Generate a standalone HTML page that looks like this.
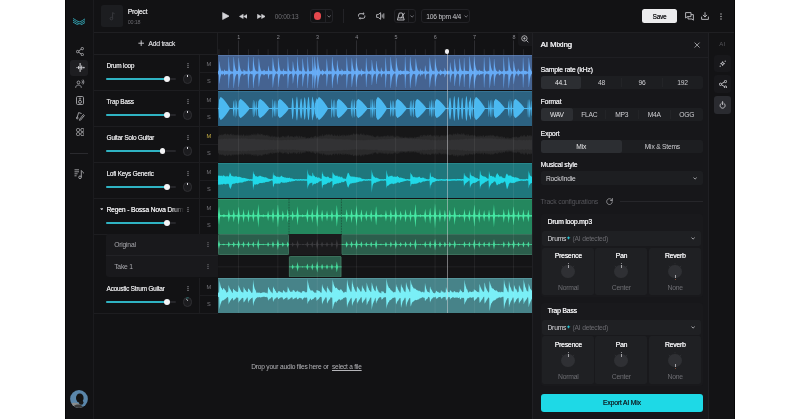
<!DOCTYPE html>
<html><head><meta charset="utf-8"><style>
html,body{margin:0;padding:0;}
body{width:800px;height:419px;overflow:hidden;background:#fff;position:relative;font-family:"Liberation Sans", sans-serif;}
svg{display:block;}
</style></head><body><div id="app" style="position:absolute;left:0;top:0;width:800px;height:419px;will-change:transform;">
<div style="position:absolute;left:65.00px;top:0.00px;width:670.00px;height:419.00px;background:#121214;"></div><div style="position:absolute;left:65.00px;top:0.00px;width:1.00px;height:419.00px;background:#070708;"></div><div style="position:absolute;left:93.00px;top:0.00px;width:1.00px;height:419.00px;background:#1b1b1e;"></div><div style="position:absolute;left:94.00px;top:32.00px;width:641.00px;height:1.00px;background:#1f1f22;"></div><svg style="position:absolute;left:72.50px;top:17.70px;" width="12.80" height="7.30" viewBox="0 0 12.80 7.30"><defs><clipPath id="lgc"><rect x="0" y="0" width="12.8" height="7.3"/></clipPath></defs><g clip-path="url(#lgc)" fill="none" stroke="#38b6c6" stroke-width="0.85"><path d="M0,0.50 C2.6,1.70 4.6,3.80 6.4,3.80 C8.2,3.80 10.2,1.70 12.8,0.50"/><path d="M0,2.30 C2.6,3.50 4.6,5.60 6.4,5.60 C8.2,5.60 10.2,3.50 12.8,2.30"/><path d="M0,4.10 C2.6,5.30 4.6,7.40 6.4,7.40 C8.2,7.40 10.2,5.30 12.8,4.10"/></g></svg><svg style="position:absolute;left:75.60px;top:47.30px;" width="8.00" height="9.20" viewBox="0 0 8.00 9.20"><g fill="none" stroke="#a9a9ad" stroke-width="0.9"><circle cx="6.3" cy="1.6" r="1.2"/><circle cx="1.6" cy="4.6" r="1.2"/><circle cx="6.3" cy="7.6" r="1.2"/><path d="M2.7,3.9 L5.2,2.3 M2.7,5.3 L5.2,6.9"/></g></svg><div style="position:absolute;left:70.30px;top:60.00px;width:17.30px;height:15.50px;background:#1e1e21;border-radius:3px;"></div><svg style="position:absolute;left:75.50px;top:63.00px;" width="9.00" height="9.20" viewBox="0 0 9.00 9.20"><g stroke="#d4d4d8" stroke-linecap="round"><path d="M0.5,4.6 L8.5,4.6" stroke-width="0.6"/><path d="M4.1,0.6 L4.1,8.6" stroke-width="1.05"/><path d="M5.7,2.9 L5.7,6.3" stroke-width="0.95"/><path d="M2.5,3.5 L2.5,5.7" stroke-width="0.9"/><path d="M7.8,4.2 L7.8,5" stroke-width="0.9"/></g></svg><svg style="position:absolute;left:75.30px;top:79.40px;" width="9.50" height="9.50" viewBox="0 0 9.50 9.50"><g fill="none" stroke="#a9a9ad" stroke-width="0.85"><circle cx="3.5" cy="3.4" r="1.4"/><path d="M0.7,8.8 C0.7,6.8 2,6.1 3.5,6.1 C5,6.1 6.3,6.8 6.3,8.8"/><path d="M6.9,1.4 C7.6,2.2 7.6,3.8 6.9,4.6 M8,0.6 C9.1,1.8 9.1,4.2 8,5.4"/></g></svg><svg style="position:absolute;left:75.60px;top:95.60px;" width="8.00" height="9.00" viewBox="0 0 8.00 9.00"><g fill="none" stroke="#a9a9ad" stroke-width="0.9"><rect x="0.5" y="0.5" width="7" height="8" rx="1.2"/><circle cx="4" cy="2.6" r="0.7"/><circle cx="4" cy="5.8" r="1.5"/></g></svg><svg style="position:absolute;left:75.60px;top:110.80px;" width="9.20" height="10.00" viewBox="0 0 9.20 10.00"><g fill="none" stroke="#a9a9ad" stroke-width="0.9"><path d="M1.2,6.5 L2.6,1.6 L5.6,2.5"/><circle cx="1.2" cy="7" r="0.9"/><path d="M3.6,8.3 L7.4,3.6 L8.4,4.5 L4.6,9.1 L3.4,9.3 Z"/></g></svg><svg style="position:absolute;left:75.70px;top:127.50px;" width="8.50" height="8.20" viewBox="0 0 8.50 8.20"><g fill="none" stroke="#a9a9ad" stroke-width="0.9"><rect x="0.5" y="0.5" width="3.2" height="3.0" rx="1.2"/><rect x="4.8" y="0.5" width="3.2" height="3.0" rx="1.2"/><rect x="0.5" y="4.6" width="3.2" height="3.0" rx="1.2"/><rect x="4.8" y="4.6" width="3.2" height="3.0" rx="1.2"/></g></svg><div style="position:absolute;left:70.00px;top:153.40px;width:18.00px;height:0.90px;background:#2a2a2e;"></div><svg style="position:absolute;left:73.70px;top:168.80px;" width="10.50" height="10.50" viewBox="0 0 10.50 10.50"><g fill="none" stroke="#a9a9ad" stroke-width="0.9"><path d="M0.5,0.8 L5,0.8 M0.5,2.8 L5,2.8 M0.5,4.8 L3.6,4.8 M0.5,6.8 L2.6,6.8"/><circle cx="6" cy="8.3" r="1.3"/><path d="M7.3,8.3 L7.3,1.5 C8,2.5 9.4,3 9.8,4.5"/></g></svg><svg style="position:absolute;left:70.00px;top:390.20px;" width="18.00" height="18.00" viewBox="0 0 18.00 18.00"><defs><clipPath id="avc"><circle cx="9" cy="9" r="8.9"/></clipPath></defs><g clip-path="url(#avc)"><rect width="18" height="18" fill="#5a86aa"/><ellipse cx="4.5" cy="17" rx="7" ry="4.2" fill="#8a8c8c"/><ellipse cx="8" cy="17.5" rx="5" ry="3" fill="#3a3a3a"/><ellipse cx="9.8" cy="8" rx="3.8" ry="4.6" fill="#141414"/><ellipse cx="11.2" cy="12.6" rx="2.3" ry="2.2" fill="#1a1a1a"/></g></svg><div style="position:absolute;left:101.00px;top:5.30px;width:21.60px;height:21.60px;background:#1c1d20;border-radius:2.5px;"></div><svg style="position:absolute;left:108.80px;top:12.20px;" width="7.00" height="8.50" viewBox="0 0 7.00 8.50"><g fill="none" stroke="#3a3b3f" stroke-width="0.9"><path d="M3.6,6.4 L3.6,0.6 L5.6,1.8"/><circle cx="2.4" cy="6.6" r="1.3"/></g></svg><div style="position:absolute;left:127.80px;top:8.82px;font-size:6.696px;line-height:6.696px;color:#dcdcde;font-weight:400;white-space:nowrap;letter-spacing:-0.214px;text-shadow:0.22px 0 0 #dcdcde;">Project</div><div style="position:absolute;left:127.80px;top:19.85px;font-size:5.4px;line-height:5.4px;color:#6b6b70;font-weight:400;white-space:nowrap;letter-spacing:-0.173px;">00:18</div><svg style="position:absolute;left:221.80px;top:12.00px;" width="7.60" height="8.20" viewBox="0 0 7.60 8.20"><path d="M0.6,0.6 L7.2,4.1 L0.6,7.6 Z" fill="#d4d4d8" stroke="#d4d4d8" stroke-width="0.6" stroke-linejoin="round"/></svg><svg style="position:absolute;left:238.60px;top:13.90px;" width="8.80" height="4.80" viewBox="0 0 8.80 4.80"><path d="M4.2,0.2 L0.4,2.4 L4.2,4.6 Z M8.4,0.2 L4.6,2.4 L8.4,4.6 Z" fill="#d0d0d4" stroke="#d0d0d4" stroke-width="0.5" stroke-linejoin="round"/></svg><svg style="position:absolute;left:256.50px;top:13.90px;" width="8.80" height="4.80" viewBox="0 0 8.80 4.80"><path d="M0.4,0.2 L4.2,2.4 L0.4,4.6 Z M4.6,0.2 L8.4,2.4 L4.6,4.6 Z" fill="#d0d0d4" stroke="#d0d0d4" stroke-width="0.5" stroke-linejoin="round"/></svg><div style="position:absolute;left:274.80px;top:13.72px;font-size:6.48px;line-height:6.48px;color:#6e6e73;font-weight:400;white-space:nowrap;letter-spacing:-0.207px;">00:00:13</div><div style="position:absolute;left:310.00px;top:9.00px;width:22.80px;height:14.10px;background:transparent;box-sizing:border-box;border:0.8px solid #222226;border-radius:3px;"></div><div style="position:absolute;left:324.80px;top:9.50px;width:0.80px;height:13.10px;background:#222226;"></div><div style="position:absolute;left:313.7px;top:12.3px;width:7.6px;height:7.6px;border-radius:50%;background:#e5484d;"></div><svg style="position:absolute;left:326.60px;top:15.10px;" width="4.20" height="2.80" viewBox="0 0 4.20 2.80"><path d="M0.5,0.6 L2.1,2.1 L3.7,0.6" fill="none" stroke="#8a8a90" stroke-width="0.8"/></svg><div style="position:absolute;left:343.20px;top:9.00px;width:0.80px;height:14.10px;background:#232327;"></div><svg style="position:absolute;left:356.60px;top:12.00px;" width="9.30" height="8.00" viewBox="0 0 9.30 8.00"><g fill="none" stroke="#bdbdc2" stroke-width="0.95"><path d="M1.5,4.5 L1.5,3.2 C1.5,2.2 2.2,1.7 3,1.7 L7,1.7 M6,0.6 L7.1,1.7 L6,2.8"/><path d="M7.8,3.5 L7.8,4.8 C7.8,5.8 7.1,6.3 6.3,6.3 L2.3,6.3 M3.3,5.2 L2.2,6.3 L3.3,7.4"/></g></svg><svg style="position:absolute;left:376.30px;top:12.00px;" width="8.50" height="8.00" viewBox="0 0 8.50 8.00"><g fill="none" stroke="#bdbdc2" stroke-width="0.9" stroke-linejoin="round"><path d="M0.6,2.6 L2.2,2.6 L4.6,0.7 L4.6,7.3 L2.2,5.4 L0.6,5.4 Z"/><path d="M6.2,2.4 L6.2,5.6 M7.8,1.4 L7.8,6.6"/></g></svg><div style="position:absolute;left:393.50px;top:9.00px;width:22.20px;height:14.10px;background:transparent;box-sizing:border-box;border:0.8px solid #222226;border-radius:3px;"></div><div style="position:absolute;left:407.70px;top:9.50px;width:0.80px;height:13.10px;background:#222226;"></div><svg style="position:absolute;left:396.80px;top:11.80px;" width="8.00" height="9.00" viewBox="0 0 8.00 9.00"><g fill="none" stroke="#c4c4c8" stroke-width="0.9" stroke-linejoin="round"><path d="M2.3,1 L5.2,1 L7.2,8 L0.4,8 Z"/><path d="M3.8,6.4 L7.6,0.8"/><path d="M1.3,5.8 L6.3,5.8"/></g></svg><svg style="position:absolute;left:409.60px;top:15.10px;" width="4.20" height="2.80" viewBox="0 0 4.20 2.80"><path d="M0.5,0.6 L2.1,2.1 L3.7,0.6" fill="none" stroke="#8a8a90" stroke-width="0.8"/></svg><div style="position:absolute;left:420.60px;top:9.00px;width:49.20px;height:14.10px;background:transparent;box-sizing:border-box;border:0.8px solid #222226;border-radius:3px;"></div><div style="position:absolute;left:426.30px;top:13.62px;font-size:6.696px;line-height:6.696px;color:#c8c8cc;font-weight:400;white-space:nowrap;letter-spacing:-0.214px;">106 bpm 4/4</div><svg style="position:absolute;left:463.80px;top:15.10px;" width="4.20" height="2.80" viewBox="0 0 4.20 2.80"><path d="M0.5,0.6 L2.1,2.1 L3.7,0.6" fill="none" stroke="#8a8a90" stroke-width="0.8"/></svg><div style="position:absolute;left:642.10px;top:9.00px;width:34.50px;height:14.10px;background:#ececee;border-radius:2.5px;"></div><div style="position:absolute;left:459.35px;width:400px;text-align:center;text-indent:0.204px;top:13.78px;font-size:6.372px;line-height:6.372px;color:#1d1d20;font-weight:400;white-space:nowrap;letter-spacing:-0.204px;text-shadow:0.22px 0 0 #1d1d20;">Save</div><svg style="position:absolute;left:684.60px;top:11.80px;" width="9.20" height="9.00" viewBox="0 0 9.20 9.00"><g fill="none" stroke="#c4c4c8" stroke-width="0.9" stroke-linejoin="round"><path d="M0.6,0.6 L6,0.6 L6,4.6 L2.4,4.6 L0.6,6 Z"/><path d="M6,2.6 L8.4,2.6 L8.4,7 L8.4,8.2 L7,7 L3,7 L3,4.6"/></g></svg><svg style="position:absolute;left:701.00px;top:12.00px;" width="8.00" height="8.20" viewBox="0 0 8.00 8.20"><g fill="none" stroke="#c4c4c8" stroke-width="0.9" stroke-linecap="round" stroke-linejoin="round"><path d="M4,0.6 L4,4.8 M2.2,3.2 L4,4.9 L5.8,3.2"/><path d="M0.6,5 L0.6,7.4 L7.4,7.4 L7.4,5"/></g></svg><svg style="position:absolute;left:719.60px;top:12.50px;" width="2.00" height="7.50" viewBox="0 0 2.00 7.50"><g fill="#c4c4c8"><circle cx="1" cy="1" r="0.7"/><circle cx="1" cy="3.5" r="0.7"/><circle cx="1" cy="6" r="0.7"/></g></svg><svg style="position:absolute;left:137.60px;top:40.10px;" width="6.40" height="6.40" viewBox="0 0 6.40 6.40"><path d="M3.2,0.4 L3.2,6 M0.4,3.2 L6,3.2" stroke="#d6d6da" stroke-width="0.9"/></svg><div style="position:absolute;left:148.30px;top:40.67px;font-size:6.804px;line-height:6.804px;color:#c4c4c8;font-weight:400;white-space:nowrap;letter-spacing:-0.218px;text-shadow:0.1px 0 0 #c4c4c8;">Add track</div><div style="position:absolute;left:94.00px;top:54.00px;width:124.00px;height:0.80px;background:#1f1f22;"></div><div style="position:absolute;left:217.40px;top:33.00px;width:0.80px;height:21.00px;background:#1f1f22;"></div><div style="position:absolute;left:94.00px;top:89.80px;width:124.00px;height:0.80px;background:#1d1d20;"></div><div style="position:absolute;left:198.80px;top:54.60px;width:0.70px;height:35.20px;background:#1d1d20;"></div><div style="position:absolute;left:199.50px;top:72.20px;width:18.50px;height:0.70px;background:#1d1d20;"></div><div style="position:absolute;left:106.50px;top:63.02px;font-size:6.5px;line-height:6.5px;color:#dcdcde;font-weight:400;white-space:nowrap;letter-spacing:-0.250px;text-shadow:0.12px 0 0 #dcdcde;">Drum loop</div><svg style="position:absolute;left:186.60px;top:62.90px;" width="2.00" height="5.20" viewBox="0 0 2.00 5.20"><g fill="#9a9aa0"><circle cx="1" cy="0.7" r="0.62"/><circle cx="1" cy="2.6" r="0.62"/><circle cx="1" cy="4.5" r="0.62"/></g></svg><div style="position:absolute;left:106.00px;top:78.00px;width:69.80px;height:2.40px;background:#26262a;border-radius:1.2px;"></div><div style="position:absolute;left:106.00px;top:78.00px;width:61.30px;height:2.40px;background:#2fb3c2;border-radius:1.2px;"></div><div style="position:absolute;left:164.35px;top:76.25px;width:5.9px;height:5.9px;border-radius:50%;background:#f4f4f6;"></div><div style="position:absolute;left:182.80px;top:74.20px;width:9.4px;height:9.4px;box-sizing:border-box;border-radius:50%;background:#1c1c1f;border:0.7px solid #303034;"></div><div style="position:absolute;left:187.15px;top:74.90px;width:0.70px;height:2.40px;background:#d8d8dc;"></div><div style="position:absolute;left:8.60px;width:400px;text-align:center;text-indent:0.180px;top:61.55px;font-size:5.616px;line-height:5.616px;color:#77777c;font-weight:400;white-space:nowrap;letter-spacing:-0.180px;">M</div><div style="position:absolute;left:8.60px;width:400px;text-align:center;text-indent:0.180px;top:79.45px;font-size:5.616px;line-height:5.616px;color:#77777c;font-weight:400;white-space:nowrap;letter-spacing:-0.180px;">S</div><div style="position:absolute;left:94.00px;top:125.80px;width:124.00px;height:0.80px;background:#1d1d20;"></div><div style="position:absolute;left:198.80px;top:90.60px;width:0.70px;height:35.20px;background:#1d1d20;"></div><div style="position:absolute;left:199.50px;top:108.20px;width:18.50px;height:0.70px;background:#1d1d20;"></div><div style="position:absolute;left:106.50px;top:99.02px;font-size:6.5px;line-height:6.5px;color:#dcdcde;font-weight:400;white-space:nowrap;letter-spacing:-0.250px;text-shadow:0.12px 0 0 #dcdcde;">Trap Bass</div><svg style="position:absolute;left:186.60px;top:98.90px;" width="2.00" height="5.20" viewBox="0 0 2.00 5.20"><g fill="#9a9aa0"><circle cx="1" cy="0.7" r="0.62"/><circle cx="1" cy="2.6" r="0.62"/><circle cx="1" cy="4.5" r="0.62"/></g></svg><div style="position:absolute;left:106.00px;top:114.00px;width:69.80px;height:2.40px;background:#26262a;border-radius:1.2px;"></div><div style="position:absolute;left:106.00px;top:114.00px;width:61.30px;height:2.40px;background:#2fb3c2;border-radius:1.2px;"></div><div style="position:absolute;left:164.35px;top:112.25px;width:5.9px;height:5.9px;border-radius:50%;background:#f4f4f6;"></div><div style="position:absolute;left:182.80px;top:110.20px;width:9.4px;height:9.4px;box-sizing:border-box;border-radius:50%;background:#1c1c1f;border:0.7px solid #303034;"></div><div style="position:absolute;left:187.15px;top:110.90px;width:0.70px;height:2.40px;background:#d8d8dc;"></div><div style="position:absolute;left:8.60px;width:400px;text-align:center;text-indent:0.180px;top:97.55px;font-size:5.616px;line-height:5.616px;color:#77777c;font-weight:400;white-space:nowrap;letter-spacing:-0.180px;">M</div><div style="position:absolute;left:8.60px;width:400px;text-align:center;text-indent:0.180px;top:115.45px;font-size:5.616px;line-height:5.616px;color:#77777c;font-weight:400;white-space:nowrap;letter-spacing:-0.180px;">S</div><div style="position:absolute;left:94.00px;top:161.80px;width:124.00px;height:0.80px;background:#1d1d20;"></div><div style="position:absolute;left:198.80px;top:126.60px;width:0.70px;height:35.20px;background:#1d1d20;"></div><div style="position:absolute;left:199.50px;top:144.20px;width:18.50px;height:0.70px;background:#1d1d20;"></div><div style="position:absolute;left:106.50px;top:135.01px;font-size:6.5px;line-height:6.5px;color:#dcdcde;font-weight:400;white-space:nowrap;letter-spacing:-0.250px;text-shadow:0.12px 0 0 #dcdcde;">Guitar Solo Guitar</div><svg style="position:absolute;left:186.60px;top:134.90px;" width="2.00" height="5.20" viewBox="0 0 2.00 5.20"><g fill="#9a9aa0"><circle cx="1" cy="0.7" r="0.62"/><circle cx="1" cy="2.6" r="0.62"/><circle cx="1" cy="4.5" r="0.62"/></g></svg><div style="position:absolute;left:106.00px;top:150.00px;width:69.80px;height:2.40px;background:#26262a;border-radius:1.2px;"></div><div style="position:absolute;left:106.00px;top:150.00px;width:56.50px;height:2.40px;background:#2fb3c2;border-radius:1.2px;"></div><div style="position:absolute;left:159.55px;top:148.25px;width:5.9px;height:5.9px;border-radius:50%;background:#f4f4f6;"></div><div style="position:absolute;left:182.80px;top:146.20px;width:9.4px;height:9.4px;box-sizing:border-box;border-radius:50%;background:#1c1c1f;border:0.7px solid #303034;"></div><div style="position:absolute;left:187.15px;top:146.90px;width:0.70px;height:2.40px;background:#d8d8dc;"></div><div style="position:absolute;left:8.60px;width:400px;text-align:center;text-indent:0.180px;top:133.55px;font-size:5.616px;line-height:5.616px;color:#c9b146;font-weight:400;white-space:nowrap;letter-spacing:-0.180px;">M</div><div style="position:absolute;left:8.60px;width:400px;text-align:center;text-indent:0.180px;top:151.45px;font-size:5.616px;line-height:5.616px;color:#77777c;font-weight:400;white-space:nowrap;letter-spacing:-0.180px;">S</div><div style="position:absolute;left:94.00px;top:197.80px;width:124.00px;height:0.80px;background:#1d1d20;"></div><div style="position:absolute;left:198.80px;top:162.60px;width:0.70px;height:35.20px;background:#1d1d20;"></div><div style="position:absolute;left:199.50px;top:180.20px;width:18.50px;height:0.70px;background:#1d1d20;"></div><div style="position:absolute;left:106.50px;top:171.01px;font-size:6.5px;line-height:6.5px;color:#dcdcde;font-weight:400;white-space:nowrap;letter-spacing:-0.250px;text-shadow:0.12px 0 0 #dcdcde;">Lofi Keys Generic</div><svg style="position:absolute;left:186.60px;top:170.90px;" width="2.00" height="5.20" viewBox="0 0 2.00 5.20"><g fill="#9a9aa0"><circle cx="1" cy="0.7" r="0.62"/><circle cx="1" cy="2.6" r="0.62"/><circle cx="1" cy="4.5" r="0.62"/></g></svg><div style="position:absolute;left:106.00px;top:186.00px;width:69.80px;height:2.40px;background:#26262a;border-radius:1.2px;"></div><div style="position:absolute;left:106.00px;top:186.00px;width:61.30px;height:2.40px;background:#2fb3c2;border-radius:1.2px;"></div><div style="position:absolute;left:164.35px;top:184.25px;width:5.9px;height:5.9px;border-radius:50%;background:#f4f4f6;"></div><div style="position:absolute;left:182.80px;top:182.20px;width:9.4px;height:9.4px;box-sizing:border-box;border-radius:50%;background:#1c1c1f;border:0.7px solid #303034;"></div><div style="position:absolute;left:187.15px;top:182.90px;width:0.70px;height:2.40px;background:#d8d8dc;"></div><div style="position:absolute;left:8.60px;width:400px;text-align:center;text-indent:0.180px;top:169.55px;font-size:5.616px;line-height:5.616px;color:#77777c;font-weight:400;white-space:nowrap;letter-spacing:-0.180px;">M</div><div style="position:absolute;left:8.60px;width:400px;text-align:center;text-indent:0.180px;top:187.45px;font-size:5.616px;line-height:5.616px;color:#77777c;font-weight:400;white-space:nowrap;letter-spacing:-0.180px;">S</div><div style="position:absolute;left:94.00px;top:233.80px;width:124.00px;height:0.80px;background:#1d1d20;"></div><div style="position:absolute;left:198.80px;top:198.60px;width:0.70px;height:35.20px;background:#1d1d20;"></div><div style="position:absolute;left:199.50px;top:216.20px;width:18.50px;height:0.70px;background:#1d1d20;"></div><svg style="position:absolute;left:99.70px;top:207.60px;" width="3.60" height="2.80" viewBox="0 0 3.60 2.80"><path d="M0.2,0.2 L3.4,0.2 L1.8,2.6 Z" fill="#d0d0d4"/></svg><div style="position:absolute;left:106.4px;top:206.90px;width:78px;overflow:hidden;font-size:6.75px;line-height:6.75px;color:#e4e4e6;text-shadow:0.15px 0 0 #e4e4e6;letter-spacing:-0.17px;white-space:nowrap;-webkit-mask-image:linear-gradient(90deg,#000 82%,transparent 100%);">Regen - Bossa Nova Drums</div><svg style="position:absolute;left:186.60px;top:206.90px;" width="2.00" height="5.20" viewBox="0 0 2.00 5.20"><g fill="#9a9aa0"><circle cx="1" cy="0.7" r="0.62"/><circle cx="1" cy="2.6" r="0.62"/><circle cx="1" cy="4.5" r="0.62"/></g></svg><div style="position:absolute;left:106.00px;top:222.00px;width:69.80px;height:2.40px;background:#26262a;border-radius:1.2px;"></div><div style="position:absolute;left:106.00px;top:222.00px;width:61.30px;height:2.40px;background:#2fb3c2;border-radius:1.2px;"></div><div style="position:absolute;left:164.35px;top:220.25px;width:5.9px;height:5.9px;border-radius:50%;background:#f4f4f6;"></div><div style="position:absolute;left:8.60px;width:400px;text-align:center;text-indent:0.180px;top:205.55px;font-size:5.616px;line-height:5.616px;color:#77777c;font-weight:400;white-space:nowrap;letter-spacing:-0.180px;">M</div><div style="position:absolute;left:8.60px;width:400px;text-align:center;text-indent:0.180px;top:223.45px;font-size:5.616px;line-height:5.616px;color:#77777c;font-weight:400;white-space:nowrap;letter-spacing:-0.180px;">S</div><div style="position:absolute;left:94.00px;top:312.80px;width:124.00px;height:0.80px;background:#1d1d20;"></div><div style="position:absolute;left:198.80px;top:277.60px;width:0.70px;height:35.20px;background:#1d1d20;"></div><div style="position:absolute;left:199.50px;top:295.20px;width:18.50px;height:0.70px;background:#1d1d20;"></div><div style="position:absolute;left:106.50px;top:286.01px;font-size:6.5px;line-height:6.5px;color:#dcdcde;font-weight:400;white-space:nowrap;letter-spacing:-0.250px;text-shadow:0.12px 0 0 #dcdcde;">Acoustic Strum Guitar</div><svg style="position:absolute;left:186.60px;top:285.90px;" width="2.00" height="5.20" viewBox="0 0 2.00 5.20"><g fill="#9a9aa0"><circle cx="1" cy="0.7" r="0.62"/><circle cx="1" cy="2.6" r="0.62"/><circle cx="1" cy="4.5" r="0.62"/></g></svg><div style="position:absolute;left:106.00px;top:301.00px;width:69.80px;height:2.40px;background:#26262a;border-radius:1.2px;"></div><div style="position:absolute;left:106.00px;top:301.00px;width:61.30px;height:2.40px;background:#2fb3c2;border-radius:1.2px;"></div><div style="position:absolute;left:164.35px;top:299.25px;width:5.9px;height:5.9px;border-radius:50%;background:#f4f4f6;"></div><div style="position:absolute;left:182.80px;top:297.20px;width:9.4px;height:9.4px;box-sizing:border-box;border-radius:50%;background:#1c1c1f;border:0.7px solid #303034;"></div><svg style="position:absolute;left:182.50px;top:296.90px;" width="10.00" height="10.00" viewBox="0 0 10.00 10.00"><path d="M3.3,1.2 A4.2,4.2 0 0 1 5.6,0.85" fill="none" stroke="#2a8a8a" stroke-width="0.8"/><path d="M3.6,2.2 L4.6,3.6" stroke="#d8d8dc" stroke-width="0.8" stroke-linecap="round"/></svg><div style="position:absolute;left:8.60px;width:400px;text-align:center;text-indent:0.180px;top:284.55px;font-size:5.616px;line-height:5.616px;color:#77777c;font-weight:400;white-space:nowrap;letter-spacing:-0.180px;">M</div><div style="position:absolute;left:8.60px;width:400px;text-align:center;text-indent:0.180px;top:302.45px;font-size:5.616px;line-height:5.616px;color:#77777c;font-weight:400;white-space:nowrap;letter-spacing:-0.180px;">S</div><div style="position:absolute;left:106.00px;top:234.30px;width:112.00px;height:43.00px;background:#19191c;border-radius:3px 0 0 3px;"></div><div style="position:absolute;left:106.00px;top:255.20px;width:112.00px;height:0.70px;background:#222226;"></div><div style="position:absolute;left:114.20px;top:242.19px;font-size:6.75px;line-height:6.75px;color:#a8a8ad;font-weight:400;white-space:nowrap;letter-spacing:-0.216px;">Original</div><div style="position:absolute;left:114.20px;top:263.59px;font-size:6.75px;line-height:6.75px;color:#a8a8ad;font-weight:400;white-space:nowrap;letter-spacing:-0.216px;">Take 1</div><svg style="position:absolute;left:207.00px;top:242.20px;" width="2.00" height="5.20" viewBox="0 0 2.00 5.20"><g fill="#77777c"><circle cx="1" cy="0.7" r="0.62"/><circle cx="1" cy="2.6" r="0.62"/><circle cx="1" cy="4.5" r="0.62"/></g></svg><svg style="position:absolute;left:207.00px;top:263.60px;" width="2.00" height="5.20" viewBox="0 0 2.00 5.20"><g fill="#77777c"><circle cx="1" cy="0.7" r="0.62"/><circle cx="1" cy="2.6" r="0.62"/><circle cx="1" cy="4.5" r="0.62"/></g></svg><svg style="position:absolute;left:218.00px;top:32.50px;" width="314.00" height="22.00" viewBox="0 0 314.00 22.00"><rect x="0.61" y="16.2" width="0.7" height="5.8" fill="#2e2e32"/><rect x="10.43" y="16.2" width="0.7" height="5.8" fill="#2e2e32"/><rect x="20.25" y="7.4" width="0.7" height="14.6" fill="#3a3a3e"/><rect x="30.07" y="16.2" width="0.7" height="5.8" fill="#2e2e32"/><rect x="39.89" y="16.2" width="0.7" height="5.8" fill="#2e2e32"/><rect x="49.72" y="16.2" width="0.7" height="5.8" fill="#2e2e32"/><rect x="59.54" y="7.4" width="0.7" height="14.6" fill="#3a3a3e"/><rect x="69.36" y="16.2" width="0.7" height="5.8" fill="#2e2e32"/><rect x="79.18" y="16.2" width="0.7" height="5.8" fill="#2e2e32"/><rect x="89.01" y="16.2" width="0.7" height="5.8" fill="#2e2e32"/><rect x="98.83" y="7.4" width="0.7" height="14.6" fill="#3a3a3e"/><rect x="108.65" y="16.2" width="0.7" height="5.8" fill="#2e2e32"/><rect x="118.48" y="16.2" width="0.7" height="5.8" fill="#2e2e32"/><rect x="128.30" y="16.2" width="0.7" height="5.8" fill="#2e2e32"/><rect x="138.12" y="7.4" width="0.7" height="14.6" fill="#3a3a3e"/><rect x="147.94" y="16.2" width="0.7" height="5.8" fill="#2e2e32"/><rect x="157.77" y="16.2" width="0.7" height="5.8" fill="#2e2e32"/><rect x="167.59" y="16.2" width="0.7" height="5.8" fill="#2e2e32"/><rect x="177.41" y="7.4" width="0.7" height="14.6" fill="#3a3a3e"/><rect x="187.23" y="16.2" width="0.7" height="5.8" fill="#2e2e32"/><rect x="197.06" y="16.2" width="0.7" height="5.8" fill="#2e2e32"/><rect x="206.88" y="16.2" width="0.7" height="5.8" fill="#2e2e32"/><rect x="216.70" y="7.4" width="0.7" height="14.6" fill="#3a3a3e"/><rect x="226.52" y="16.2" width="0.7" height="5.8" fill="#2e2e32"/><rect x="236.34" y="16.2" width="0.7" height="5.8" fill="#2e2e32"/><rect x="246.17" y="16.2" width="0.7" height="5.8" fill="#2e2e32"/><rect x="255.99" y="7.4" width="0.7" height="14.6" fill="#3a3a3e"/><rect x="265.81" y="16.2" width="0.7" height="5.8" fill="#2e2e32"/><rect x="275.63" y="16.2" width="0.7" height="5.8" fill="#2e2e32"/><rect x="285.46" y="16.2" width="0.7" height="5.8" fill="#2e2e32"/><rect x="295.28" y="7.4" width="0.7" height="14.6" fill="#3a3a3e"/><rect x="305.10" y="16.2" width="0.7" height="5.8" fill="#2e2e32"/></svg><div style="position:absolute;left:38.70px;width:400px;text-align:center;text-indent:0.173px;top:34.65px;font-size:5.4px;line-height:5.4px;color:#8a8a90;font-weight:400;white-space:nowrap;letter-spacing:-0.173px;">1</div><div style="position:absolute;left:77.99px;width:400px;text-align:center;text-indent:0.173px;top:34.65px;font-size:5.4px;line-height:5.4px;color:#8a8a90;font-weight:400;white-space:nowrap;letter-spacing:-0.173px;">2</div><div style="position:absolute;left:117.28px;width:400px;text-align:center;text-indent:0.173px;top:34.65px;font-size:5.4px;line-height:5.4px;color:#8a8a90;font-weight:400;white-space:nowrap;letter-spacing:-0.173px;">3</div><div style="position:absolute;left:156.57px;width:400px;text-align:center;text-indent:0.173px;top:34.65px;font-size:5.4px;line-height:5.4px;color:#8a8a90;font-weight:400;white-space:nowrap;letter-spacing:-0.173px;">4</div><div style="position:absolute;left:195.86px;width:400px;text-align:center;text-indent:0.173px;top:34.65px;font-size:5.4px;line-height:5.4px;color:#8a8a90;font-weight:400;white-space:nowrap;letter-spacing:-0.173px;">5</div><div style="position:absolute;left:235.15px;width:400px;text-align:center;text-indent:0.173px;top:34.65px;font-size:5.4px;line-height:5.4px;color:#8a8a90;font-weight:400;white-space:nowrap;letter-spacing:-0.173px;">6</div><div style="position:absolute;left:274.44px;width:400px;text-align:center;text-indent:0.173px;top:34.65px;font-size:5.4px;line-height:5.4px;color:#8a8a90;font-weight:400;white-space:nowrap;letter-spacing:-0.173px;">7</div><div style="position:absolute;left:313.73px;width:400px;text-align:center;text-indent:0.173px;top:34.65px;font-size:5.4px;line-height:5.4px;color:#8a8a90;font-weight:400;white-space:nowrap;letter-spacing:-0.173px;">8</div><div style="position:absolute;left:517.60px;top:33.00px;width:14.90px;height:13.20px;background:#18181b;border-radius:0 0 0 3px;"></div><svg style="position:absolute;left:521.20px;top:35.30px;" width="8.00" height="8.00" viewBox="0 0 8.00 8.00"><g fill="none" stroke="#c0c0c4" stroke-width="0.85"><circle cx="3.4" cy="3.4" r="2.7"/><path d="M5.4,5.4 L7.3,7.3 M2.2,3.4 L4.6,3.4 M3.4,2.2 L3.4,4.6"/></g></svg><svg style="position:absolute;left:218.00px;top:54.60px;" width="314.50" height="35.20" viewBox="0 0 314.50 35.20"><rect x="0" y="0" width="314.50" height="35.20" fill="#456391"/><rect x="0" y="0" width="314.50" height="0.8" fill="#5a7bb0"/><path d="M0,16.3l.25,-.3 .25,-.5 .25,.4 .25,-2.9 .25,-6.4 .25,0 .25,2.4 .25,1.9 .25,1.5 .25,1.2 .25,.8 .25,.7 .25,.6 .25,.4 .25,.3 .25,-.8 .25,-.1 .25,.2 .25,0 .25,.5 .25,.2 .25,-.3 .25,.6 .25,-2.1 .25,0 .25,.3 .25,.3 .25,.2 .25,.3 .25,.2 .25,0 .25,0 .25,-.2 .25,.1 .25,.3 .25,-.5 .25,.1 .25,.3 .25,.3 .25,.4 .25,-3.7 .25,-10.9 .25,0 .25,4.7 .25,4 .25,2.5 .25,1.5 .25,.6 .25,.1 .25,.7 .25,.1 .25,-.5 .25,.6 .25,-.3 .25,.6 .25,.2 .25,-.5 .25,-.2 .25,.3 .25,0 .25,-3.5 .25,-10.9 .25,0 .25,2.5 .25,2.5 .25,2.1 .25,1.6 .25,1.3 .25,1.1 .25,.9 .25,.7 .25,.5 .25,.5 .25,.3 .25,-.2 .25,.4 .25,-.4 .25,.2 .25,0 .25,-.6 .25,-2.2 .25,-10.2 .25,0 .25,2.3 .25,2.4 .25,1.9 .25,1.6 .25,1.2 .25,1 .25,.8 .25,.6 .25,.6 .25,.4 .25,.1 .25,.4 .25,.1 .25,-.3 .25,.5 .25,-.2 .25,.2 .25,-.1 .25,-2 .25,0 .25,.3 .25,.3 .25,.2 .25,.3 .25,-.3 .25,.2 .25,.6 .25,.2 .25,-.3 .25,0 .25,.6 .25,-.5 .25,0 .25,.1 .25,.1 .25,-3.4 .25,-10.9 .25,0 .25,4.4 .25,3.8 .25,2.5 .25,1.6 .25,1.1 .25,.6 .25,.1 .25,.2 .25,.1 .25,.1 .25,-.2 .25,-.5 .25,.1 .25,.1 .25,-.6 .25,.6 .25,.2 .25,-3.3 .25,-10.9 .25,0 .25,2.5 .25,2.5 .25,2.1 .25,1.6 .25,1.3 .25,1.1 .25,.9 .25,.7 .25,.5 .25,.4 .25,.4 .25,.2 .25,.1 .25,-.7 .25,.4 .25,-.1 .25,1 .25,-.5 .25,.1 .25,-.5 .25,-8.4 .25,-4.6 .25,1.2 .25,2.6 .25,2.1 .25,1.7 .25,1.3 .25,1.1 .25,.9 .25,.7 .25,.6 .25,.4 .25,.4 .25,.1 .25,.3 .25,-.5 .25,-.2 .25,.1 .25,-.1 .25,.1 .25,-.4 .25,-.9 .25,.2 .25,.3 .25,.2 .25,.3 .25,.2 .25,.2 .25,.2 .25,.1 .25,0 .25,-.5 .25,.5 .25,-.7 .25,.6 .25,-.5 .25,.2 .25,.4 .25,-3.5 .25,-2.2 .25,.8 .25,1.7 .25,1.2 .25,.9 .25,.6 .25,.2 .25,.2 .25,0 .25,-.7 .25,.2 .25,.2 .25,-.3 .25,.7 .25,-.2 .25,.6 .25,-.7 .25,-9 .25,-4.9 .25,1.3 .25,2.8 .25,2.2 .25,1.8 .25,1.4 .25,1.2 .25,.9 .25,.8 .25,.6 .25,.5 .25,.4 .25,.3 .25,.3 .25,.2 .25,0 .25,-.2 .25,-.4 .25,0 .25,0 .25,-.6 .25,-4 .25,-8.5 .25,0 .25,3.2 .25,2.5 .25,2 .25,1.5 .25,1.1 .25,1 .25,.7 .25,.5 .25,.5 .25,.1 .25,.2 .25,-.8 .25,.4 .25,.1 .25,.2 .25,-.4 .25,.4 .25,-2.7 .25,0 .25,.9 .25,.7 .25,.2 .25,.3 .25,.2 .25,.2 .25,.1 .25,-.3 .25,-.3 .25,.5 .25,0 .25,.1 .25,-.1 .25,.3 .25,0 .25,0 .25,-5.2 .25,-9.1 .25,0 .25,5.3 .25,3.5 .25,2.3 .25,1.5 .25,1 .25,0 .25,-.1 .25,.6 .25,0 .25,-.1 .25,.2 .25,-.1 .25,.4 .25,-.2 .25,.2 .25,-.6 .25,-.3 .25,-2.7 .25,-6.4 .25,0 .25,2.4 .25,1.9 .25,1.5 .25,1.2 .25,.8 .25,.7 .25,.6 .25,.4 .25,.3 .25,.2 .25,-.4 .25,-.3 .25,-.3 .25,.2 .25,.4 .25,-5 .25,-9.1 .25,0 .25,4.2 .25,3 .25,2.2 .25,1.7 .25,1.2 .25,.8 .25,.7 .25,-.1 .25,0 .25,-.4 .25,.4 .25,-.4 .25,.9 .25,0 .25,-.1 .25,.4 .25,-.3 .25,.2 .25,-3 .25,-9.9 .25,0 .25,2.7 .25,2.6 .25,2 .25,1.5 .25,1.2 .25,1 .25,.7 .25,.5 .25,.4 .25,.3 .25,0 .25,.1 .25,-.1 .25,.4 .25,-.9 .25,.2 .25,-.1 .25,-3.1 .25,-10.9 .25,0 .25,4.7 .25,4 .25,2.5 .25,1.5 .25,1.1 .25,.2 .25,.1 .25,.2 .25,.1 .25,-.1 .25,-.5 .25,-.2 .25,.2 .25,.1 .25,.1 .25,-.3 .25,-.2 .25,-2.7 .25,-11.3 .25,0 .25,4.9 .25,4 .25,2.6 .25,1.7 .25,1 .25,-2.9 .25,-11.3 .25,0 .25,2.9 .25,2.9 .25,2.3 .25,1.7 .25,1.4 .25,1 .25,.9 .25,.6 .25,.5 .25,-2.8 .25,-10.9 .25,0 .25,2.5 .25,2.5 .25,2.1 .25,1.6 .25,1.3 .25,1.1 .25,.9 .25,.7 .25,.5 .25,.5 .25,.3 .25,.1 .25,.4 .25,-.7 .25,0 .25,.5 .25,-1.8 .25,0 .25,.3 .25,.3 .25,.2 .25,.3 .25,.2 .25,.2 .25,.1 .25,.2 .25,.1 .25,.1 .25,-.4 .25,-.4 .25,-.2 .25,.6 .25,-.4 .25,-.2 .25,-7.9 .25,-4.6 .25,2.2 .25,4.2 .25,2.8 .25,1.8 .25,1.2 .25,.7 .25,.2 .25,.1 .25,.1 .25,-.1 .25,-.7 .25,-.2 .25,0 .25,.8 .25,.2 .25,-.6 .25,.6 .25,-.2 .25,.5 .25,-3.7 .25,-10.9 .25,0 .25,2.5 .25,2.5 .25,2.1 .25,1.6 .25,1.3 .25,1.1 .25,.9 .25,.7 .25,.5 .25,.5 .25,.3 .25,.3 .25,-.2 .25,.1 .25,-.1 .25,-.3 .25,.1 .25,-2 .25,-8.4 .25,0 .25,2.2 .25,2.1 .25,1.7 .25,1.4 .25,1 .25,.8 .25,.6 .25,.5 .25,.3 .25,-.2 .25,0 .25,-.2 .25,-.1 .25,.2 .25,-.3 .25,.6 .25,-1.3 .25,-1.3 .25,.5 .25,.9 .25,.3 .25,.3 .25,.2 .25,.2 .25,.2 .25,.1 .25,-.4 .25,-.1 .25,0 .25,.1 .25,-.5 .25,.5 .25,.1 .25,.1 .25,-.1 .25,-.1 .25,-9.6 .25,-5.2 .25,2.7 .25,5.1 .25,3.2 .25,2 .25,1.3 .25,.6 .25,0 .25,-.5 .25,.5 .25,.2 .25,-.3 .25,.5 .25,-.3 .25,.4 .25,-.2 .25,.5 .25,-.6 .25,-.3 .25,-8.6 .25,-4.7 .25,1.2 .25,2.7 .25,2.2 .25,1.7 .25,1.4 .25,1.2 .25,.9 .25,.7 .25,.6 .25,.5 .25,.3 .25,.3 .25,-.4 .25,0 .25,.1 .25,-2.7 .25,-10.2 .25,0 .25,2.3 .25,2.4 .25,1.9 .25,1.6 .25,1.2 .25,1 .25,.8 .25,.6 .25,.6 .25,.1 .25,.6 .25,-.7 .25,.4 .25,0 .25,-.4 .25,.9 .25,-.1 .25,-.2 .25,-2.5 .25,0 .25,.9 .25,.7 .25,.2 .25,.3 .25,.2 .25,0 .25,.2 .25,.1 .25,-.3 .25,.4 .25,-.1 .25,0 .25,.3 .25,.3 .25,-.3 .25,.1 .25,-.4 .25,-2.9 .25,-10.2 .25,0 .25,4.1 .25,3.6 .25,2.3 .25,1.5 .25,1 .25,.5 .25,.1 .25,.2 .25,0 .25,.1 .25,0 .25,-.2 .25,-.3 .25,.4 .25,-.2 .25,-.8 .25,0 .25,.1 .25,.8 .25,.2 .25,-4.1 .25,-7.3 .25,0 .25,2.8 .25,2.1 .25,1.7 .25,1.3 .25,1 .25,.8 .25,.6 .25,.5 .25,-.1 .25,.3 .25,0 .25,-.2 .25,.1 .25,.8 .25,.1 .25,-4.1 .25,-6.7 .25,0 .25,2.5 .25,2 .25,1.6 .25,1.2 .25,.9 .25,.7 .25,.4 .25,.6 .25,.1 .25,0 .25,0 .25,.5 .25,.1 .25,.2 .25,-.8 .25,.6 .25,-.6 .25,-3.5 .25,0 .25,1.1 .25,1.1 .25,.6 .25,.3 .25,.2 .25,.2 .25,.1 .25,.2 .25,0 .25,0 .25,.2 .25,0 .25,-.4 .25,-.4 .25,.2 .25,-2.8 .25,-10.6 .25,0 .25,4.9 .25,4 .25,2.4 .25,1.5 .25,.5 .25,.2 .25,.1 .25,.2 .25,-.5 .25,-.2 .25,.5 .25,-.2 .25,-.1 .25,.1 .25,0 .25,.2 .25,.3 .25,-3.5 .25,-10.9 .25,0 .25,2.5 .25,2.5 .25,2.1 .25,1.6 .25,1.3 .25,1.1 .25,.9 .25,.7 .25,.5 .25,.5 .25,-.1 .25,.4 .25,.1 .25,.6 .25,-.2 .25,-.3 .25,.6 .25,-.2 .25,-.7 .25,-2.7 .25,-10.2 .25,0 .25,2.3 .25,2.4 .25,1.9 .25,1.6 .25,1.2 .25,1 .25,.8 .25,.6 .25,.6 .25,.4 .25,0 .25,.1 .25,0 .25,-.2 .25,-.2 .25,0 .25,-.7 .25,.3 .25,.2 .25,.3 .25,.2 .25,.2 .25,.1 .25,0 .25,-.2 .25,.2 .25,-.1 .25,-.3 .25,-.2 .25,.3 .25,0 .25,.3 .25,-.4 .25,-2.8 .25,-10.9 .25,0 .25,5.1 .25,4.1 .25,2.5 .25,1.5 .25,.6 .25,.2 .25,.1 .25,-.5 .25,-.1 .25,.5 .25,.2 .25,-.2 .25,.1 .25,-.1 .25,.9 .25,-.1 .25,0 .25,-3.9 .25,-10.9 .25,0 .25,2.5 .25,2.5 .25,2.1 .25,1.6 .25,1.3 .25,1.1 .25,.9 .25,.7 .25,.5 .25,.5 .25,.3 .25,.1 .25,-.1 .25,.4 .25,-.4 .25,-.5 .25,.3 .25,.2 .25,.1 .25,-.7 .25,-7.8 .25,-4.6 .25,1.2 .25,2.6 .25,2.1 .25,1.7 .25,1.3 .25,1.1 .25,.9 .25,.7 .25,.6 .25,.3 .25,0 .25,.1 .25,.5 .25,.1 .25,.1 .25,0 .25,-2.8 .25,0 .25,.9 .25,.7 .25,.2 .25,.3 .25,.2 .25,-.2 .25,.5 .25,-.7 .25,0 .25,.1 .25,.8 .25,0 .25,-.2 .25,.7 .25,-.3 .25,0 .25,-.5 .25,-.6 .25,-4.9 .25,0 .25,1.5 .25,1.5 .25,1.1 .25,.8 .25,.2 .25,.4 .25,.1 .25,.2 .25,.1 .25,-.2 .25,.4 .25,0 .25,0 .25,-.3 .25,-.3 .25,-.4 .25,-8.7 .25,-4.9 .25,1.3 .25,2.8 .25,2.2 .25,1.8 .25,1.4 .25,1.2 .25,.9 .25,.8 .25,.6 .25,.5 .25,.4 .25,0 .25,.3 .25,-.9 .25,.1 .25,.7 .25,-.3 .25,.5 .25,.1 .25,-3 .25,-9.9 .25,0 .25,2.2 .25,2.3 .25,1.9 .25,1.5 .25,1.2 .25,.9 .25,.8 .25,.6 .25,.5 .25,.4 .25,0 .25,.6 .25,.2 .25,.2 .25,-.5 .25,-.1 .25,.4 .25,-.4 .25,-1.7 .25,0 .25,.3 .25,.3 .25,.2 .25,.3 .25,.2 .25,.2 .25,-.1 .25,.4 .25,.1 .25,0 .25,-.2 .25,-.2 .25,.2 .25,-.1 .25,-.2 .25,.3 .25,-2.1 .25,-1.6 .25,.6 .25,1.2 .25,.8 .25,.4 .25,.2 .25,.2 .25,.2 .25,.1 .25,.2 .25,-.2 .25,-.3 .25,-.4 .25,-.1 .25,.2 .25,.5 .25,-.4 .25,0 .25,.5 .25,.3 .25,-2 .25,-7 .25,0 .25,1.9 .25,1.9 .25,1.4 .25,1.1 .25,.9 .25,.6 .25,.3 .25,.5 .25,.2 .25,0 .25,-.1 .25,0 .25,.4 .25,-.5 .25,.5 .25,-3.1 .25,-9.5 .25,0 .25,2.4 .25,2.5 .25,1.9 .25,1.5 .25,1.1 .25,.9 .25,.7 .25,.6 .25,.4 .25,.3 .25,.3 .25,-.5 .25,.4 .25,-.7 .25,.4 .25,-.4 .25,-.4 .25,-2 .25,-9.9 .25,0 .25,2.5 .25,2.6 .25,1.9 .25,1.6 .25,1.2 .25,.9 .25,.7 .25,.6 .25,.4 .25,0 .25,-.4 .25,.7 .25,-.2 .25,-.2 .25,.4 .25,-3 .25,-10.2 .25,0 .25,4.8 .25,3.8 .25,2.3 .25,1.4 .25,.5 .25,.2 .25,-.3 .25,.4 .25,-.8 .25,.3 .25,.2 .25,.2 .25,0 .25,.1 .25,0 .25,.1 .25,.3 .25,-.5 .25,0 .25,-3.2 .25,-11.3 .25,0 .25,2.6 .25,2.6 .25,2.1 .25,1.7 .25,1.4 .25,1.1 .25,.9 .25,.7 .25,.5 .25,.5 .25,.4 .25,.2 .25,-.3 .25,.3 .25,-.4 .25,-3 .25,-11.3 .25,0 .25,2.3 .25,2.4 .25,2 .25,1.6 .25,1.3 .25,1.2 .25,.9 .25,.7 .25,.7 .25,.5 .25,.4 .25,-.1 .25,.2 .25,-.2 .25,.4 .25,-.2 .25,.7 .25,-.3 .25,-1.5 .25,0 .25,.3 .25,.3 .25,.2 .25,.3 .25,.1 .25,.3 .25,0 .25,-.1 .25,0 .25,.3 .25,-.7 .25,.3 .25,.5 .25,.2 .25,-.1 .25,.5 .25,0 .25,-3.8 .25,-10.6 .25,0 .25,4.9 .25,4 .25,2.4 .25,1.5 .25,.5 .25,-.3 .25,.2 .25,.6 .25,-.2 .25,.4 .25,0 .25,.2 .25,-.7 .25,-.3 .25,.6 .25,-.6 .25,.3 .25,-.6 .25,.7 .25,-.3 .25,-9.3 .25,-5 .25,1.3 .25,2.9 .25,2.3 .25,1.9 .25,1.5 .25,1.2 .25,.9 .25,.8 .25,.6 .25,.5 .25,.1 .25,.5 .25,.1 .25,.1 .25,-.2 .25,-2.5 .25,-9.5 .25,0 .25,2.4 .25,2.5 .25,1.9 .25,1.5 .25,1.1 .25,.9 .25,.7 .25,.6 .25,.4 .25,-.6 .25,.7 .25,.1 .25,.1 .25,.6 .25,-.5 .25,.3 .25,-.1 .25,-.6 .25,-1.5 .25,0 .25,.3 .25,.3 .25,.2 .25,.3 .25,.2 .25,-.1 .25,.1 .25,.5 .25,.1 .25,-.1 .25,.3 .25,-.6 .25,.2 .25,.1 .25,-.5 .25,-.2 .25,-9.4 .25,-5.2 .25,3 .25,5.3 .25,3.2 .25,2 .25,1.2 .25,.2 .25,.2 .25,.1 .25,-.1 .25,.4 .25,-.6 .25,.2 .25,-.3 .25,-.3 .25,0 .25,.1 .25,.6 .25,-.4 .25,-9.3 .25,-5 .25,1.3 .25,2.9 .25,2.3 .25,1.9 .25,1.5 .25,1.2 .25,.9 .25,.8 .25,.6 .25,.5 .25,.4 .25,.3 .25,.3 .25,-.3 .25,.7 .25,-.7 .25,.3 .25,-.2 .25,-6.9 .25,-3.8 .25,1.1 .25,2.4 .25,1.9 .25,1.5 .25,1.1 .25,.9 .25,.7 .25,.5 .25,.4 .25,.2 .25,.4 .25,.1 .25,0 .25,-.6 .25,-.3 .25,-.2 .25,-2.1 .25,0 .25,.9 .25,.7 .25,.2 .25,.3 .25,.2 .25,.2 .25,0 .25,.3 .25,.1 .25,-.3 .25,.5 .25,-.3 .25,-.8 .25,.6 .25,-.3 .25,.1 .25,0 .25,-2.8 .25,-10.6 .25,0 .25,4.9 .25,4 .25,2.4 .25,1.5 .25,.5 .25,.2 .25,0 .25,-.6 .25,.5 .25,-.1 .25,-.5 .25,.4 .25,.7 .25,-.2 .25,0 .25,.6 .25,-.2 .25,-.3 .25,-.2 .25,.1 .25,-4.7 .25,-8.5 .25,0 .25,2.8 .25,2.3 .25,1.8 .25,1.5 .25,1.2 .25,1 .25,.7 .25,.7 .25,.5 .25,.4 .25,.3 .25,.2 .25,-.3 .25,-.6L314.50,19.6l-.25,-.6 -.25,-.3 -.25,.2 -.25,.3 -.25,.4 -.25,.5 -.25,.7 -.25,.7 -.25,1 -.25,1.2 -.25,1.5 -.25,1.8 -.25,2.3 -.25,2.8 -.25,0 -.25,-8.5 -.25,-4.7 -.25,.1 -.25,-.2 -.25,-.3 -.25,-.2 -.25,.6 -.25,0 -.25,-.2 -.25,.7 -.25,.4 -.25,-.5 -.25,-.1 -.25,.5 -.25,-.6 -.25,0 -.25,.2 -.25,.5 -.25,1.5 -.25,2.4 -.25,4 -.25,4.9 -.25,0 -.25,-10.6 -.25,-2.8 -.25,0 -.25,.1 -.25,-.3 -.25,.6 -.25,-.8 -.25,-.3 -.25,.5 -.25,-.3 -.25,.1 -.25,.3 -.25,0 -.25,.2 -.25,.2 -.25,.3 -.25,.2 -.25,.7 -.25,.9 -.25,0 -.25,-2.1 -.25,-.2 -.25,-.3 -.25,-.6 -.25,0 -.25,.1 -.25,.4 -.25,.2 -.25,.4 -.25,.5 -.25,.7 -.25,.9 -.25,1.1 -.25,1.5 -.25,1.9 -.25,2.4 -.25,1.1 -.25,-3.8 -.25,-6.9 -.25,-.2 -.25,.3 -.25,-.7 -.25,.7 -.25,-.3 -.25,.3 -.25,.3 -.25,.4 -.25,.5 -.25,.6 -.25,.8 -.25,.9 -.25,1.2 -.25,1.5 -.25,1.9 -.25,2.3 -.25,2.9 -.25,1.3 -.25,-5 -.25,-9.3 -.25,-.4 -.25,.6 -.25,.1 -.25,0 -.25,-.3 -.25,-.3 -.25,.2 -.25,-.6 -.25,.4 -.25,-.1 -.25,.1 -.25,.2 -.25,.2 -.25,1.2 -.25,2 -.25,3.2 -.25,5.3 -.25,3 -.25,-5.2 -.25,-9.4 -.25,-.2 -.25,-.5 -.25,.1 -.25,.2 -.25,-.6 -.25,.3 -.25,-.1 -.25,.1 -.25,.5 -.25,.1 -.25,-.1 -.25,.2 -.25,.3 -.25,.2 -.25,.3 -.25,.3 -.25,0 -.25,-1.5 -.25,-.6 -.25,-.1 -.25,.3 -.25,-.5 -.25,.6 -.25,.1 -.25,.1 -.25,.7 -.25,-.6 -.25,.4 -.25,.6 -.25,.7 -.25,.9 -.25,1.1 -.25,1.5 -.25,1.9 -.25,2.5 -.25,2.4 -.25,0 -.25,-9.5 -.25,-2.5 -.25,-.2 -.25,.1 -.25,.1 -.25,.5 -.25,.1 -.25,.5 -.25,.6 -.25,.8 -.25,.9 -.25,1.2 -.25,1.5 -.25,1.9 -.25,2.3 -.25,2.9 -.25,1.3 -.25,-5 -.25,-9.3 -.25,-.3 -.25,.7 -.25,-.6 -.25,.3 -.25,-.6 -.25,.6 -.25,-.3 -.25,-.7 -.25,.2 -.25,0 -.25,.4 -.25,-.2 -.25,.6 -.25,.2 -.25,-.3 -.25,.5 -.25,1.5 -.25,2.4 -.25,4 -.25,4.9 -.25,0 -.25,-10.6 -.25,-3.8 -.25,0 -.25,.5 -.25,-.1 -.25,.2 -.25,.5 -.25,.3 -.25,-.7 -.25,.3 -.25,0 -.25,-.1 -.25,0 -.25,.3 -.25,.1 -.25,.3 -.25,.2 -.25,.3 -.25,.3 -.25,0 -.25,-1.5 -.25,-.3 -.25,.7 -.25,-.2 -.25,.4 -.25,-.2 -.25,.2 -.25,-.1 -.25,.4 -.25,.5 -.25,.7 -.25,.7 -.25,.9 -.25,1.2 -.25,1.3 -.25,1.6 -.25,2 -.25,2.4 -.25,2.3 -.25,0 -.25,-11.3 -.25,-3 -.25,-.4 -.25,.3 -.25,-.3 -.25,.2 -.25,.4 -.25,.5 -.25,.5 -.25,.7 -.25,.9 -.25,1.1 -.25,1.4 -.25,1.7 -.25,2.1 -.25,2.6 -.25,2.6 -.25,0 -.25,-11.3 -.25,-3.2 -.25,0 -.25,-.5 -.25,.3 -.25,.1 -.25,0 -.25,.1 -.25,0 -.25,.2 -.25,.2 -.25,.3 -.25,-.8 -.25,.4 -.25,-.3 -.25,.2 -.25,.5 -.25,1.4 -.25,2.3 -.25,3.8 -.25,4.8 -.25,0 -.25,-10.2 -.25,-3 -.25,.4 -.25,-.2 -.25,-.2 -.25,.7 -.25,-.4 -.25,0 -.25,.4 -.25,.6 -.25,.7 -.25,.9 -.25,1.2 -.25,1.6 -.25,1.9 -.25,2.6 -.25,2.5 -.25,0 -.25,-9.9 -.25,-2 -.25,-.4 -.25,-.4 -.25,.4 -.25,-.7 -.25,.4 -.25,-.5 -.25,.3 -.25,.3 -.25,.4 -.25,.6 -.25,.7 -.25,.9 -.25,1.1 -.25,1.5 -.25,1.9 -.25,2.5 -.25,2.4 -.25,0 -.25,-9.5 -.25,-3.1 -.25,.5 -.25,-.5 -.25,.4 -.25,0 -.25,-.1 -.25,0 -.25,.2 -.25,.5 -.25,.3 -.25,.6 -.25,.9 -.25,1.1 -.25,1.4 -.25,1.9 -.25,1.9 -.25,0 -.25,-7 -.25,-2 -.25,.3 -.25,.5 -.25,0 -.25,-.4 -.25,.5 -.25,.2 -.25,-.1 -.25,-.4 -.25,-.3 -.25,-.2 -.25,.2 -.25,.1 -.25,.2 -.25,.2 -.25,.2 -.25,.4 -.25,.8 -.25,1.2 -.25,.6 -.25,-1.6 -.25,-2.1 -.25,.3 -.25,-.2 -.25,-.1 -.25,.2 -.25,-.2 -.25,-.2 -.25,0 -.25,.1 -.25,.4 -.25,-.1 -.25,.2 -.25,.2 -.25,.3 -.25,.2 -.25,.3 -.25,.3 -.25,0 -.25,-1.7 -.25,-.4 -.25,.4 -.25,-.1 -.25,-.5 -.25,.2 -.25,.2 -.25,.6 -.25,0 -.25,.4 -.25,.5 -.25,.6 -.25,.8 -.25,.9 -.25,1.2 -.25,1.5 -.25,1.9 -.25,2.3 -.25,2.2 -.25,0 -.25,-9.9 -.25,-3 -.25,.1 -.25,.5 -.25,-.3 -.25,.7 -.25,.1 -.25,-.9 -.25,.3 -.25,0 -.25,.4 -.25,.5 -.25,.6 -.25,.8 -.25,.9 -.25,1.2 -.25,1.4 -.25,1.8 -.25,2.2 -.25,2.8 -.25,1.3 -.25,-4.9 -.25,-8.7 -.25,-.4 -.25,-.3 -.25,-.3 -.25,0 -.25,0 -.25,.4 -.25,-.2 -.25,.1 -.25,.2 -.25,.1 -.25,.4 -.25,.2 -.25,.8 -.25,1.1 -.25,1.5 -.25,1.5 -.25,0 -.25,-4.9 -.25,-.6 -.25,-.5 -.25,0 -.25,-.3 -.25,.7 -.25,-.2 -.25,0 -.25,.8 -.25,.1 -.25,0 -.25,-.7 -.25,.5 -.25,-.2 -.25,.2 -.25,.3 -.25,.2 -.25,.7 -.25,.9 -.25,0 -.25,-2.8 -.25,0 -.25,.1 -.25,.1 -.25,.5 -.25,.1 -.25,0 -.25,.3 -.25,.6 -.25,.7 -.25,.9 -.25,1.1 -.25,1.3 -.25,1.7 -.25,2.1 -.25,2.6 -.25,1.2 -.25,-4.6 -.25,-7.8 -.25,-.7 -.25,.1 -.25,.2 -.25,.3 -.25,-.5 -.25,-.4 -.25,.4 -.25,-.1 -.25,.1 -.25,.3 -.25,.5 -.25,.5 -.25,.7 -.25,.9 -.25,1.1 -.25,1.3 -.25,1.6 -.25,2.1 -.25,2.5 -.25,2.5 -.25,0 -.25,-10.9 -.25,-3.9 -.25,0 -.25,-.1 -.25,.9 -.25,-.1 -.25,.1 -.25,-.2 -.25,.2 -.25,.5 -.25,-.1 -.25,-.5 -.25,.1 -.25,.2 -.25,.6 -.25,1.5 -.25,2.5 -.25,4.1 -.25,5.1 -.25,0 -.25,-10.9 -.25,-2.8 -.25,-.4 -.25,.3 -.25,0 -.25,.3 -.25,-.2 -.25,-.3 -.25,-.1 -.25,.2 -.25,-.2 -.25,0 -.25,.1 -.25,.2 -.25,.2 -.25,.3 -.25,.2 -.25,.3 -.25,-.7 -.25,0 -.25,-.2 -.25,-.2 -.25,0 -.25,.1 -.25,0 -.25,.4 -.25,.6 -.25,.6 -.25,.8 -.25,1 -.25,1.2 -.25,1.6 -.25,1.9 -.25,2.4 -.25,2.3 -.25,0 -.25,-10.2 -.25,-2.7 -.25,-.7 -.25,-.2 -.25,.6 -.25,-.3 -.25,-.2 -.25,.6 -.25,.1 -.25,.4 -.25,-.1 -.25,.5 -.25,.5 -.25,.7 -.25,.9 -.25,1.1 -.25,1.3 -.25,1.6 -.25,2.1 -.25,2.5 -.25,2.5 -.25,0 -.25,-10.9 -.25,-3.5 -.25,.3 -.25,.2 -.25,0 -.25,.1 -.25,-.1 -.25,-.2 -.25,.5 -.25,-.2 -.25,-.5 -.25,.2 -.25,.1 -.25,.2 -.25,.5 -.25,1.5 -.25,2.4 -.25,4 -.25,4.9 -.25,0 -.25,-10.6 -.25,-2.8 -.25,.2 -.25,-.4 -.25,-.4 -.25,0 -.25,.2 -.25,0 -.25,0 -.25,.2 -.25,.1 -.25,.2 -.25,.2 -.25,.3 -.25,.6 -.25,1.1 -.25,1.1 -.25,0 -.25,-3.5 -.25,-.6 -.25,.6 -.25,-.8 -.25,.2 -.25,.1 -.25,.5 -.25,0 -.25,0 -.25,.1 -.25,.6 -.25,.4 -.25,.7 -.25,.9 -.25,1.2 -.25,1.6 -.25,2 -.25,2.5 -.25,0 -.25,-6.7 -.25,-4.1 -.25,.1 -.25,.8 -.25,.1 -.25,-.2 -.25,0 -.25,.3 -.25,-.1 -.25,.5 -.25,.6 -.25,.8 -.25,1 -.25,1.3 -.25,1.7 -.25,2.1 -.25,2.8 -.25,0 -.25,-7.3 -.25,-4.1 -.25,.2 -.25,.8 -.25,.1 -.25,0 -.25,-.8 -.25,-.2 -.25,.4 -.25,-.3 -.25,-.2 -.25,0 -.25,.1 -.25,0 -.25,.2 -.25,.1 -.25,.5 -.25,1 -.25,1.5 -.25,2.3 -.25,3.6 -.25,4.1 -.25,0 -.25,-10.2 -.25,-2.9 -.25,-.4 -.25,.1 -.25,-.3 -.25,.3 -.25,.3 -.25,0 -.25,-.1 -.25,.4 -.25,-.3 -.25,.1 -.25,.2 -.25,0 -.25,.2 -.25,.3 -.25,.2 -.25,.7 -.25,.9 -.25,0 -.25,-2.5 -.25,-.2 -.25,-.1 -.25,.9 -.25,-.4 -.25,0 -.25,.4 -.25,-.7 -.25,.6 -.25,.1 -.25,.6 -.25,.6 -.25,.8 -.25,1 -.25,1.2 -.25,1.6 -.25,1.9 -.25,2.4 -.25,2.3 -.25,0 -.25,-10.2 -.25,-2.7 -.25,.1 -.25,0 -.25,-.4 -.25,.3 -.25,.3 -.25,.5 -.25,.6 -.25,.7 -.25,.9 -.25,1.2 -.25,1.4 -.25,1.7 -.25,2.2 -.25,2.7 -.25,1.2 -.25,-4.7 -.25,-8.6 -.25,-.3 -.25,-.6 -.25,.5 -.25,-.2 -.25,.4 -.25,-.3 -.25,.5 -.25,-.3 -.25,.2 -.25,.5 -.25,-.5 -.25,0 -.25,.6 -.25,1.3 -.25,2 -.25,3.2 -.25,5.1 -.25,2.7 -.25,-5.2 -.25,-9.6 -.25,-.1 -.25,-.1 -.25,.1 -.25,.1 -.25,.5 -.25,-.5 -.25,.1 -.25,0 -.25,-.1 -.25,-.4 -.25,.1 -.25,.2 -.25,.2 -.25,.2 -.25,.3 -.25,.3 -.25,.9 -.25,.5 -.25,-1.3 -.25,-1.3 -.25,.6 -.25,-.3 -.25,.2 -.25,-.1 -.25,-.2 -.25,0 -.25,-.2 -.25,.3 -.25,.5 -.25,.6 -.25,.8 -.25,1 -.25,1.4 -.25,1.7 -.25,2.1 -.25,2.2 -.25,0 -.25,-8.4 -.25,-2 -.25,.1 -.25,-.3 -.25,-.1 -.25,.1 -.25,-.2 -.25,.3 -.25,.3 -.25,.5 -.25,.5 -.25,.7 -.25,.9 -.25,1.1 -.25,1.3 -.25,1.6 -.25,2.1 -.25,2.5 -.25,2.5 -.25,0 -.25,-10.9 -.25,-3.7 -.25,.5 -.25,-.2 -.25,.6 -.25,-.6 -.25,.2 -.25,.8 -.25,0 -.25,-.2 -.25,-.7 -.25,-.1 -.25,.1 -.25,.1 -.25,.2 -.25,.7 -.25,1.2 -.25,1.8 -.25,2.8 -.25,4.2 -.25,2.2 -.25,-4.6 -.25,-7.9 -.25,-.2 -.25,-.4 -.25,.6 -.25,-.2 -.25,-.4 -.25,-.4 -.25,.1 -.25,.1 -.25,.2 -.25,.1 -.25,.2 -.25,.2 -.25,.3 -.25,.2 -.25,.3 -.25,.3 -.25,0 -.25,-1.8 -.25,.5 -.25,0 -.25,-.7 -.25,.4 -.25,.1 -.25,.3 -.25,.5 -.25,.5 -.25,.7 -.25,.9 -.25,1.1 -.25,1.3 -.25,1.6 -.25,2.1 -.25,2.5 -.25,2.5 -.25,0 -.25,-10.9 -.25,-2.8 -.25,.5 -.25,.6 -.25,.9 -.25,1 -.25,1.4 -.25,1.7 -.25,2.3 -.25,2.9 -.25,2.9 -.25,0 -.25,-11.3 -.25,-2.9 -.25,1 -.25,1.7 -.25,2.6 -.25,4 -.25,4.9 -.25,0 -.25,-11.3 -.25,-2.7 -.25,-.2 -.25,-.3 -.25,.1 -.25,.1 -.25,.2 -.25,-.2 -.25,-.5 -.25,-.1 -.25,.1 -.25,.2 -.25,.1 -.25,.2 -.25,1.1 -.25,1.5 -.25,2.5 -.25,4 -.25,4.7 -.25,0 -.25,-10.9 -.25,-3.1 -.25,-.1 -.25,.2 -.25,-.9 -.25,.4 -.25,-.1 -.25,.1 -.25,0 -.25,.3 -.25,.4 -.25,.5 -.25,.7 -.25,1 -.25,1.2 -.25,1.5 -.25,2 -.25,2.6 -.25,2.7 -.25,0 -.25,-9.9 -.25,-3 -.25,.2 -.25,-.3 -.25,.4 -.25,-.1 -.25,0 -.25,.9 -.25,-.4 -.25,.4 -.25,-.4 -.25,0 -.25,-.1 -.25,.7 -.25,.8 -.25,1.2 -.25,1.7 -.25,2.2 -.25,3 -.25,4.2 -.25,0 -.25,-9.1 -.25,-5 -.25,.4 -.25,.2 -.25,-.3 -.25,-.3 -.25,-.4 -.25,.2 -.25,.3 -.25,.4 -.25,.6 -.25,.7 -.25,.8 -.25,1.2 -.25,1.5 -.25,1.9 -.25,2.4 -.25,0 -.25,-6.4 -.25,-2.7 -.25,-.3 -.25,-.6 -.25,.2 -.25,-.2 -.25,.4 -.25,-.1 -.25,.2 -.25,-.1 -.25,0 -.25,.6 -.25,-.1 -.25,0 -.25,1 -.25,1.5 -.25,2.3 -.25,3.5 -.25,5.3 -.25,0 -.25,-9.1 -.25,-5.2 -.25,0 -.25,0 -.25,.3 -.25,-.1 -.25,.1 -.25,0 -.25,.5 -.25,-.3 -.25,-.3 -.25,.1 -.25,.2 -.25,.2 -.25,.3 -.25,.2 -.25,.7 -.25,.9 -.25,0 -.25,-2.7 -.25,.4 -.25,-.4 -.25,.2 -.25,.1 -.25,.4 -.25,-.8 -.25,.2 -.25,.1 -.25,.5 -.25,.5 -.25,.7 -.25,1 -.25,1.1 -.25,1.5 -.25,2 -.25,2.5 -.25,3.2 -.25,0 -.25,-8.5 -.25,-4 -.25,-.6 -.25,0 -.25,0 -.25,-.4 -.25,-.2 -.25,0 -.25,.2 -.25,.3 -.25,.3 -.25,.4 -.25,.5 -.25,.6 -.25,.8 -.25,.9 -.25,1.2 -.25,1.4 -.25,1.8 -.25,2.2 -.25,2.8 -.25,1.3 -.25,-4.9 -.25,-9 -.25,-.7 -.25,.6 -.25,-.2 -.25,.7 -.25,-.3 -.25,.2 -.25,.2 -.25,-.7 -.25,0 -.25,.2 -.25,.2 -.25,.6 -.25,.9 -.25,1.2 -.25,1.7 -.25,.8 -.25,-2.2 -.25,-3.5 -.25,.4 -.25,.2 -.25,-.5 -.25,.6 -.25,-.7 -.25,.5 -.25,-.5 -.25,0 -.25,.1 -.25,.2 -.25,.2 -.25,.2 -.25,.3 -.25,.2 -.25,.3 -.25,.2 -.25,-.9 -.25,-.4 -.25,.1 -.25,-.1 -.25,.1 -.25,-.2 -.25,-.5 -.25,.3 -.25,.1 -.25,.4 -.25,.4 -.25,.6 -.25,.7 -.25,.9 -.25,1.1 -.25,1.3 -.25,1.7 -.25,2.1 -.25,2.6 -.25,1.2 -.25,-4.6 -.25,-8.4 -.25,-.5 -.25,.1 -.25,-.5 -.25,1 -.25,-.1 -.25,.4 -.25,-.7 -.25,.1 -.25,.2 -.25,.4 -.25,.4 -.25,.5 -.25,.7 -.25,.9 -.25,1.1 -.25,1.3 -.25,1.6 -.25,2.1 -.25,2.5 -.25,2.5 -.25,0 -.25,-10.9 -.25,-3.3 -.25,.2 -.25,.6 -.25,-.6 -.25,.1 -.25,.1 -.25,-.5 -.25,-.2 -.25,.1 -.25,.1 -.25,.2 -.25,.1 -.25,.6 -.25,1.1 -.25,1.6 -.25,2.5 -.25,3.8 -.25,4.4 -.25,0 -.25,-10.9 -.25,-3.4 -.25,.1 -.25,.1 -.25,0 -.25,-.5 -.25,.6 -.25,0 -.25,-.3 -.25,.2 -.25,.6 -.25,.2 -.25,-.3 -.25,.3 -.25,.2 -.25,.3 -.25,.3 -.25,0 -.25,-2 -.25,-.1 -.25,.2 -.25,-.2 -.25,.5 -.25,-.3 -.25,.1 -.25,.4 -.25,.1 -.25,.4 -.25,.6 -.25,.6 -.25,.8 -.25,1 -.25,1.2 -.25,1.6 -.25,1.9 -.25,2.4 -.25,2.3 -.25,0 -.25,-10.2 -.25,-2.2 -.25,-.6 -.25,0 -.25,.2 -.25,-.4 -.25,.4 -.25,-.2 -.25,.3 -.25,.5 -.25,.5 -.25,.7 -.25,.9 -.25,1.1 -.25,1.3 -.25,1.6 -.25,2.1 -.25,2.5 -.25,2.5 -.25,0 -.25,-10.9 -.25,-3.5 -.25,0 -.25,.3 -.25,-.2 -.25,-.5 -.25,.2 -.25,.6 -.25,-.3 -.25,.6 -.25,-.5 -.25,.1 -.25,.7 -.25,.1 -.25,.6 -.25,1.5 -.25,2.5 -.25,4 -.25,4.7 -.25,0 -.25,-10.9 -.25,-3.7 -.25,.4 -.25,.3 -.25,.3 -.25,.1 -.25,-.5 -.25,.3 -.25,.1 -.25,-.2 -.25,0 -.25,0 -.25,.2 -.25,.3 -.25,.2 -.25,.3 -.25,.3 -.25,0 -.25,-2.1 -.25,.6 -.25,-.3 -.25,.2 -.25,.5 -.25,0 -.25,.2 -.25,-.1 -.25,-.8 -.25,.3 -.25,.4 -.25,.6 -.25,.7 -.25,.8 -.25,1.2 -.25,1.5 -.25,1.9 -.25,2.4 -.25,0 -.25,-6.4 -.25,-2.9 -.25,.4 -.25,-.5 -.25,-.3Z" fill="#66abf6"/></svg><svg style="position:absolute;left:218.00px;top:90.60px;" width="314.50" height="35.20" viewBox="0 0 314.50 35.20"><rect x="0" y="0" width="314.50" height="35.20" fill="#2c6281"/><rect x="0" y="0" width="314.50" height="0.8" fill="#3a7898"/><path d="M0,16.9l.25,0 .25,0 .25,-3.6 .25,-4.5 .25,-.5 .25,-.4 .25,-.5 .25,-.4 .25,-.5 .25,-.4 .25,0 .25,.1 .25,.1 .25,.2 .25,.2 .25,.2 .25,.2 .25,.3 .25,.2 .25,.2 .25,.3 .25,.3 .25,.2 .25,.3 .25,.3 .25,.3 .25,.3 .25,.3 .25,.3 .25,.4 .25,.3 .25,.3 .25,.4 .25,.3 .25,.4 .25,.3 .25,.4 .25,.3 .25,.4 .25,.4 .25,.4 .25,.3 .25,.4 .25,.4 .25,.4 .25,.4 .25,.3 .25,0 .25,0 .25,0 .25,0 .25,0 .25,0 .25,0 .25,0 .25,0 .25,0 .25,0 .25,0 .25,-1.7 .25,-4.4 .25,-1.6 .25,2.1 .25,4.8 .25,.8 .25,-.7 .25,-5.7 .25,-2.5 .25,1.6 .25,5 .25,2.3 .25,0 .25,-4.6 .25,-2.8 .25,.6 .25,3.8 .25,3 .25,0 .25,0 .25,0 .25,-.3 .25,-4.4 .25,-2 .25,-.4 .25,-.4 .25,-.4 .25,-.3 .25,-.4 .25,-.3 .25,.1 .25,.1 .25,.1 .25,.2 .25,.1 .25,.2 .25,.2 .25,.2 .25,.2 .25,.2 .25,.2 .25,.2 .25,.2 .25,.3 .25,.2 .25,.3 .25,.2 .25,.3 .25,.2 .25,.3 .25,.3 .25,.2 .25,.3 .25,.3 .25,.3 .25,.3 .25,.3 .25,.3 .25,.3 .25,.3 .25,.3 .25,.3 .25,.3 .25,.3 .25,.3 .25,.5 .25,0 .25,0 .25,0 .25,0 .25,0 .25,0 .25,0 .25,0 .25,0 .25,0 .25,0 .25,0 .25,0 .25,-4.4 .25,-3.6 .25,0 .25,3.6 .25,4.4 .25,0 .25,-2.9 .25,-3.8 .25,-.7 .25,2.7 .25,4.7 .25,0 .25,-1.7 .25,-4.2 .25,-1.5 .25,2.1 .25,4.7 .25,.6 .25,0 .25,0 .25,0 .25,-2.2 .25,-4.3 .25,-.4 .25,-.4 .25,-.3 .25,-.4 .25,-.4 .25,-.4 .25,-.1 .25,.1 .25,.2 .25,.1 .25,.1 .25,.2 .25,.2 .25,.2 .25,.2 .25,.2 .25,.2 .25,.2 .25,.2 .25,.2 .25,.3 .25,.2 .25,.3 .25,.2 .25,.3 .25,.2 .25,.3 .25,.3 .25,.2 .25,.3 .25,.3 .25,.3 .25,.3 .25,.3 .25,.3 .25,.3 .25,.3 .25,.3 .25,.3 .25,.3 .25,.4 .25,.3 .25,.3 .25,0 .25,0 .25,0 .25,0 .25,0 .25,0 .25,0 .25,0 .25,0 .25,0 .25,0 .25,0 .25,-1 .25,-5.6 .25,-2.5 .25,1.8 .25,5.2 .25,2.1 .25,0 .25,-4.9 .25,-2.7 .25,.8 .25,4 .25,2.8 .25,0 .25,-4 .25,-3.3 .25,0 .25,3.5 .25,3.8 .25,0 .25,0 .25,0 .25,0 .25,-4 .25,-2.7 .25,-.4 .25,-.3 .25,-.4 .25,-.4 .25,-.3 .25,-.4 .25,.1 .25,.1 .25,.1 .25,.2 .25,.1 .25,.2 .25,.2 .25,.1 .25,.2 .25,.3 .25,.2 .25,.2 .25,.2 .25,.2 .25,.3 .25,.2 .25,.3 .25,.2 .25,.3 .25,.2 .25,.3 .25,.3 .25,.3 .25,.2 .25,.3 .25,.3 .25,.3 .25,.3 .25,.3 .25,.3 .25,.3 .25,.3 .25,.3 .25,.4 .25,.3 .25,.5 .25,0 .25,0 .25,0 .25,0 .25,0 .25,0 .25,0 .25,0 .25,0 .25,0 .25,0 .25,-.4 .25,-3.6 .25,-2.9 .25,-2.1 .25,-1.2 .25,0 .25,1.2 .25,2.1 .25,2.9 .25,3.7 .25,.3 .25,0 .25,0 .25,0 .25,0 .25,0 .25,0 .25,-1.3 .25,-3.7 .25,-2.9 .25,-2.1 .25,-1.2 .25,-.1 .25,1.1 .25,2 .25,2.8 .25,3.5 .25,1.9 .25,0 .25,0 .25,0 .25,0 .25,0 .25,-.6 .25,-2.8 .25,-2.3 .25,-1.8 .25,-1.3 .25,-.7 .25,.2 .25,.9 .25,1.5 .25,2 .25,2.6 .25,2.3 .25,0 .25,0 .25,0 .25,-2.3 .25,-2.9 .25,-2.3 .25,-1.8 .25,-1 .25,-.3 .25,.8 .25,1.4 .25,2.1 .25,2.6 .25,3.2 .25,.5 .25,0 .25,0 .25,0 .25,-2.6 .25,-3 .25,-2.4 .25,-1.7 .25,-1.2 .25,-.3 .25,.7 .25,1.4 .25,2 .25,2.6 .25,3.2 .25,1.3 .25,0 .25,0 .25,0 .25,0 .25,0 .25,-3.7 .25,-3.5 .25,-2.5 .25,-1.4 .25,-.1 .25,1.4 .25,2.4 .25,2.5 .25,-3.7 .25,.2 .25,4.1 .25,4.3 .25,0 .25,-3.3 .25,-3.8 .25,-.6 .25,3.1 .25,-.2 .25,-2.1 .25,-1.6 .25,-1 .25,-.2 .25,.7 .25,.8 .25,-.4 .25,-.4 .25,-.5 .25,-.4 .25,-.5 .25,-.4 .25,0 .25,.1 .25,.2 .25,.1 .25,.2 .25,.2 .25,.2 .25,.3 .25,.2 .25,.3 .25,.2 .25,.3 .25,.3 .25,.3 .25,.2 .25,.3 .25,.3 .25,.4 .25,.3 .25,.3 .25,.3 .25,.4 .25,.3 .25,.3 .25,.4 .25,.4 .25,.3 .25,.4 .25,.3 .25,.4 .25,.4 .25,.4 .25,.4 .25,.4 .25,.4 .25,.4 .25,.2 .25,0 .25,0 .25,0 .25,0 .25,0 .25,0 .25,0 .25,0 .25,0 .25,0 .25,0 .25,0 .25,-2.8 .25,-5 .25,-1.4 .25,2.9 .25,6 .25,.3 .25,-1.3 .25,-5.1 .25,-2.1 .25,2 .25,5 .25,1.5 .25,0 .25,-5.8 .25,-2.8 .25,1.2 .25,4.5 .25,2.9 .25,0 .25,0 .25,0 .25,-.7 .25,-4.5 .25,-1.6 .25,-.4 .25,-.3 .25,-.4 .25,-.4 .25,-.3 .25,-.3 .25,.1 .25,.1 .25,.1 .25,.2 .25,.2 .25,.1 .25,.2 .25,.2 .25,.2 .25,.2 .25,.2 .25,.2 .25,.3 .25,.2 .25,.2 .25,.3 .25,.2 .25,.3 .25,.2 .25,.3 .25,.3 .25,.3 .25,.2 .25,.3 .25,.3 .25,.3 .25,.3 .25,.3 .25,.3 .25,.3 .25,.3 .25,.3 .25,.3 .25,.4 .25,.3 .25,.4 .25,0 .25,0 .25,0 .25,0 .25,0 .25,0 .25,0 .25,0 .25,0 .25,0 .25,0 .25,0 .25,0 .25,-4.4 .25,-3 .25,.3 .25,3.7 .25,3.4 .25,0 .25,-4.1 .25,-4.3 .25,-.5 .25,3.7 .25,5.2 .25,0 .25,-2.7 .25,-4.7 .25,-1.3 .25,2.8 .25,5.8 .25,.1 .25,0 .25,0 .25,0 .25,-2.6 .25,-4 .25,-.3 .25,-.4 .25,-.4 .25,-.4 .25,-.3 .25,-.4 .25,-.1 .25,.1 .25,.2 .25,.1 .25,.2 .25,.1 .25,.2 .25,.2 .25,.2 .25,.2 .25,.2 .25,.2 .25,.2 .25,.3 .25,.2 .25,.2 .25,.3 .25,.2 .25,.3 .25,.3 .25,.2 .25,.3 .25,.3 .25,.3 .25,.2 .25,.3 .25,.3 .25,.3 .25,.3 .25,.3 .25,.3 .25,.3 .25,.3 .25,.4 .25,.3 .25,.3 .25,.3 .25,0 .25,0 .25,0 .25,0 .25,0 .25,0 .25,0 .25,0 .25,0 .25,0 .25,0 .25,0 .25,-1.7 .25,-5.5 .25,-2.1 .25,2.3 .25,5.5 .25,1.5 .25,-.3 .25,-5.9 .25,-2.9 .25,1.4 .25,4.9 .25,2.8 .25,0 .25,-4.6 .25,-3.1 .25,.5 .25,3.8 .25,3.4 .25,0 .25,0 .25,0 .25,-.2 .25,-5.3 .25,-2.8 .25,-.4 .25,-.5 .25,-.4 .25,-.5 .25,-.4 .25,-.4 .25,.1 .25,.1 .25,.2 .25,.2 .25,.2 .25,.2 .25,.2 .25,.2 .25,.3 .25,.2 .25,.3 .25,.3 .25,.2 .25,.3 .25,.3 .25,.3 .25,.3 .25,.3 .25,.4 .25,.3 .25,.3 .25,.4 .25,.3 .25,.3 .25,.4 .25,.3 .25,.4 .25,.4 .25,.3 .25,.4 .25,.4 .25,.4 .25,.4 .25,.4 .25,.4 .25,.5 .25,0 .25,0 .25,0 .25,0 .25,0 .25,0 .25,0 .25,0 .25,0 .25,0 .25,0 .25,0 .25,0 .25,-3.8 .25,-3.6 .25,-.3 .25,3.3 .25,4.4 .25,0 .25,-2.6 .25,-4 .25,-1 .25,2.6 .25,5 .25,0 .25,-1.5 .25,-4.5 .25,-1.7 .25,2 .25,4.7 .25,1 .25,0 .25,0 .25,0 .25,-1.9 .25,-4.4 .25,-.6 .25,-.4 .25,-.3 .25,-.4 .25,-.4 .25,-.3 .25,-.2 .25,.1 .25,.1 .25,.2 .25,.1 .25,.2 .25,.2 .25,.2 .25,.2 .25,.2 .25,.2 .25,.2 .25,.2 .25,.2 .25,.3 .25,.2 .25,.2 .25,.3 .25,.3 .25,.2 .25,.3 .25,.3 .25,.2 .25,.3 .25,.3 .25,.3 .25,.3 .25,.3 .25,.3 .25,.3 .25,.3 .25,.3 .25,.3 .25,.3 .25,.3 .25,.4 .25,.3 .25,0 .25,0 .25,0 .25,0 .25,0 .25,0 .25,0 .25,0 .25,0 .25,0 .25,0 .25,0 .25,-.4 .25,-4.8 .25,-2.3 .25,1.4 .25,4.1 .25,2 .25,0 .25,-4.7 .25,-3 .25,.6 .25,3.9 .25,3.2 .25,0 .25,-4.1 .25,-3.8 .25,-.2 .25,3.6 .25,4.5 .25,0 .25,0 .25,0 .25,0 .25,-3.8 .25,-2.9 .25,-.3 .25,-.4 .25,-.4 .25,-.4 .25,-.3 .25,-.4 .25,.1 .25,.1 .25,.1 .25,.1 .25,.2 .25,.2 .25,.1 .25,.2 .25,.2 .25,.2 .25,.3 .25,.2 .25,.2 .25,.2 .25,.3 .25,.2 .25,.3 .25,.2 .25,.3 .25,.2 .25,.3 .25,.3 .25,.2 .25,.3 .25,.3 .25,.3 .25,.3 .25,.3 .25,.3 .25,.3 .25,.3 .25,.3 .25,.3 .25,.3 .25,.4 .25,.3 .25,.2 .25,0 .25,0 .25,0 .25,0 .25,0 .25,0 .25,0 .25,0 .25,0 .25,0 .25,0 .25,0 .25,-2.7 .25,-3.7 .25,-.8 .25,2.6 .25,4.6 .25,0 .25,-2 .25,-5 .25,-1.7 .25,2.3 .25,5.5 .25,.9 .25,-.6 .25,-5.1 .25,-2.3 .25,1.5 .25,4.5 .25,2 .25,0 .25,0 .25,0 .25,-1.2 .25,-4.4 .25,-1.2 .25,-.4 .25,-.4 .25,-.3 .25,-.4 .25,-.4 .25,-.2 .25,.1 .25,.1 .25,.2 .25,.1 .25,.2 .25,.1 .25,.2 .25,.2 .25,.2 .25,.2 .25,.2 .25,.3 .25,.2 .25,.2 .25,.3 .25,.2 .25,.3 .25,.2 .25,.3 .25,.2 .25,.3 .25,.3 .25,.3 .25,.2 .25,.3 .25,.3 .25,.3 .25,.3 .25,.3 .25,.3 .25,.3 .25,.3 .25,.4 .25,.3 .25,.3 .25,.4 .25,0 .25,0 .25,0 .25,0 .25,0 .25,0 .25,0 .25,0 .25,0 .25,0 .25,0 .25,-1.4 .25,-2.9 .25,-2.4 .25,-1.9 .25,-1.3 .25,-.6 .25,.3 .25,1 .25,1.7 .25,2.2 .25,2.7 .25,2.6 .25,0 .25,0 .25,0 .25,0 .25,0 .25,0 .25,-2.7 .25,-3.5 .25,-2.7 .25,-1.9 .25,-1 .25,.4 .25,1.4 .25,2.4 .25,3.1 .25,3.9 .25,.6 .25,0 .25,0 .25,0 .25,0 .25,0 .25,-1.2 .25,-3.5 .25,-2.9 .25,-2.1 .25,-1.2 .25,-.2 .25,1 .25,1.9 .25,2.6 .25,3.4 .25,2.2 .25,0 .25,0 .25,0 .25,0 .25,0 .25,-2.9 .25,-3.2 .25,-2.4 .25,-1.5 .25,-.3 .25,1 .25,2 .25,2.8 .25,3.7 .25,.8 .25,0 .25,0 .25,0 .25,0 .25,0 .25,0 .25,-2.9 .25,-3.1 .25,-2.5 .25,-1.9 .25,-1.1 .25,-.3 .25,.7 .25,1.5 .25,2.1 .25,2.8 .25,3.3 .25,1.4 .25,0 .25,0 .25,-2 .25,-4.5 .25,-1.5 .25,2.3 .25,-.8 .25,-2.2 .25,-1.5 .25,-.4 .25,.8 .25,1.8 .25,2.6 .25,3.3 .25,2.1 .25,-5.2 .25,-3 .25,.9 .25,4.3 .25,3 .25,0 .25,0 .25,0 .25,-.7 .25,-5.4 .25,-2.2 .25,-.5 .25,-.4 .25,-.5 .25,-.4 .25,-.5 .25,-.3 .25,.1 .25,.2 .25,.1 .25,.2 .25,.2 .25,.2 .25,.2 .25,.3 .25,.2 .25,.3 .25,.2 .25,.3 .25,.3 .25,.3 .25,.3 .25,.3 .25,.3 .25,.3 .25,.3 .25,.3 .25,.3 .25,.4 .25,.3 .25,.4 .25,.3 .25,.4 .25,.3 .25,.4 .25,.4 .25,.4 .25,.3 .25,.4 .25,.4 .25,.4 .25,.4 .25,.5 .25,0 .25,0 .25,0 .25,0 .25,0 .25,0 .25,0 .25,0 .25,0 .25,0 .25,0 .25,0 .25,0 .25,-4.2 .25,-3.4 .25,.2 .25,3.6 .25,3.8 .25,0 .25,-3.4 .25,-4 .25,-.7 .25,3.1 .25,5 .25,0 .25,-2.4 .25,-4.8 .25,-1.5 .25,2.6 .25,5.6 .25,.5 .25,0 .25,0 .25,0 .25,-2.3 .25,-4.2 .25,-.4 .25,-.4 .25,-.4 .25,-.3 .25,-.4 .25,-.4 .25,-.1 .25,.1 .25,.2 .25,.1 .25,.2 .25,.1 .25,.2 .25,.2 .25,.2 .25,.2 .25,.2 .25,.2 .25,.2 .25,.3 .25,.2 .25,.2 .25,.3 .25,.2 .25,.3 .25,.2 .25,.3 .25,.3 .25,.3 .25,.2 .25,.3 .25,.3 .25,.3 .25,.3 .25,.3 .25,.3 .25,.3 .25,.3 .25,.3 .25,.3 .25,.4 .25,.3 .25,.3 .25,0 .25,0 .25,0 .25,0 .25,0 .25,0 .25,0 .25,0 .25,0 .25,0 .25,0 .25,0 .25,-1 .25,-4.6 .25,-1.9 .25,1.7 .25,4.4 .25,1.4 .25,0 .25,-6.1 .25,-3.1 .25,1.2 .25,4.8 .25,3.2 .25,0 .25,-4 .25,-3 .25,.2 .25,3.4 .25,3.4 .25,0 .25,0 .25,0 .25,0 .25,-4.2 .25,-2.5 .25,-.4 .25,-.3 .25,-.4 .25,-.4 .25,-.4 .25,-.3 .25,.1 .25,.1 .25,.1 .25,.2 .25,.1 .25,.2 .25,.2 .25,.2 .25,.2 .25,.2 .25,.2 .25,.2 .25,.2 .25,.2 .25,.3 .25,.2 .25,.3 .25,.2 .25,.3 .25,.3 .25,.2 .25,.3 .25,.3 .25,.3 .25,.2 .25,.3 .25,.3 .25,.3 .25,.3 .25,.3 .25,.3 .25,.3 .25,.4 .25,.3 .25,.3 .25,.5 .25,0 .25,0 .25,0 .25,0 .25,0 .25,0 .25,0 .25,0 .25,0 .25,0 .25,0 .25,0 .25,0 .25,-3.8 .25,-4.2 .25,-.5 .25,3.4 .25,5.1 .25,0 .25,-2.7 .25,-4.9 .25,-1.4 .25,2.8 .25,5.9 .25,.3 .25,-1.1 .25,-4.5 .25,-1.8 .25,1.7 .25,4.4 .25,1.3 .25,0 .25,0L314.50,18.1l-.25,0 -.25,0 -.25,1.3 -.25,4.4 -.25,1.7 -.25,-1.8 -.25,-4.5 -.25,-1.1 -.25,.3 -.25,5.9 -.25,2.8 -.25,-1.4 -.25,-4.9 -.25,-2.7 -.25,0 -.25,5.1 -.25,3.4 -.25,-.5 -.25,-4.2 -.25,-3.8 -.25,0 -.25,0 -.25,0 -.25,0 -.25,0 -.25,0 -.25,0 -.25,0 -.25,0 -.25,0 -.25,0 -.25,0 -.25,0 -.25,.5 -.25,.3 -.25,.3 -.25,.4 -.25,.3 -.25,.3 -.25,.3 -.25,.3 -.25,.3 -.25,.3 -.25,.3 -.25,.2 -.25,.3 -.25,.3 -.25,.3 -.25,.2 -.25,.3 -.25,.3 -.25,.2 -.25,.3 -.25,.2 -.25,.3 -.25,.2 -.25,.2 -.25,.2 -.25,.2 -.25,.2 -.25,.2 -.25,.2 -.25,.2 -.25,.2 -.25,.1 -.25,.2 -.25,.1 -.25,.1 -.25,.1 -.25,-.3 -.25,-.4 -.25,-.4 -.25,-.4 -.25,-.3 -.25,-.4 -.25,-2.5 -.25,-4.2 -.25,0 -.25,0 -.25,0 -.25,0 -.25,3.4 -.25,3.4 -.25,.2 -.25,-3 -.25,-4 -.25,0 -.25,3.2 -.25,4.8 -.25,1.2 -.25,-3.1 -.25,-6.1 -.25,0 -.25,1.4 -.25,4.4 -.25,1.7 -.25,-1.9 -.25,-4.6 -.25,-1 -.25,0 -.25,0 -.25,0 -.25,0 -.25,0 -.25,0 -.25,0 -.25,0 -.25,0 -.25,0 -.25,0 -.25,0 -.25,.3 -.25,.3 -.25,.4 -.25,.3 -.25,.3 -.25,.3 -.25,.3 -.25,.3 -.25,.3 -.25,.3 -.25,.3 -.25,.3 -.25,.3 -.25,.2 -.25,.3 -.25,.3 -.25,.3 -.25,.2 -.25,.3 -.25,.2 -.25,.3 -.25,.2 -.25,.2 -.25,.3 -.25,.2 -.25,.2 -.25,.2 -.25,.2 -.25,.2 -.25,.2 -.25,.2 -.25,.1 -.25,.2 -.25,.1 -.25,.2 -.25,.1 -.25,-.1 -.25,-.4 -.25,-.4 -.25,-.3 -.25,-.4 -.25,-.4 -.25,-.4 -.25,-4.2 -.25,-2.3 -.25,0 -.25,0 -.25,0 -.25,.5 -.25,5.6 -.25,2.6 -.25,-1.5 -.25,-4.8 -.25,-2.4 -.25,0 -.25,5 -.25,3.1 -.25,-.7 -.25,-4 -.25,-3.4 -.25,0 -.25,3.8 -.25,3.6 -.25,.2 -.25,-3.4 -.25,-4.2 -.25,0 -.25,0 -.25,0 -.25,0 -.25,0 -.25,0 -.25,0 -.25,0 -.25,0 -.25,0 -.25,0 -.25,0 -.25,0 -.25,.5 -.25,.4 -.25,.4 -.25,.4 -.25,.4 -.25,.3 -.25,.4 -.25,.4 -.25,.4 -.25,.3 -.25,.4 -.25,.3 -.25,.4 -.25,.3 -.25,.4 -.25,.3 -.25,.3 -.25,.3 -.25,.3 -.25,.3 -.25,.3 -.25,.3 -.25,.3 -.25,.3 -.25,.3 -.25,.2 -.25,.3 -.25,.2 -.25,.3 -.25,.2 -.25,.2 -.25,.2 -.25,.2 -.25,.1 -.25,.2 -.25,.1 -.25,-.3 -.25,-.5 -.25,-.4 -.25,-.5 -.25,-.4 -.25,-.5 -.25,-2.2 -.25,-5.4 -.25,-.7 -.25,0 -.25,0 -.25,0 -.25,3 -.25,4.3 -.25,.9 -.25,-3 -.25,-5.2 -.25,2.1 -.25,3.3 -.25,2.6 -.25,1.8 -.25,.8 -.25,-.4 -.25,-1.5 -.25,-2.2 -.25,-.8 -.25,2.3 -.25,-1.5 -.25,-4.5 -.25,-2 -.25,0 -.25,0 -.25,1.4 -.25,3.3 -.25,2.8 -.25,2.1 -.25,1.5 -.25,.7 -.25,-.3 -.25,-1.1 -.25,-1.9 -.25,-2.5 -.25,-3.1 -.25,-2.9 -.25,0 -.25,0 -.25,0 -.25,0 -.25,0 -.25,0 -.25,.8 -.25,3.7 -.25,2.8 -.25,2 -.25,1 -.25,-.3 -.25,-1.5 -.25,-2.4 -.25,-3.2 -.25,-2.9 -.25,0 -.25,0 -.25,0 -.25,0 -.25,0 -.25,2.2 -.25,3.4 -.25,2.6 -.25,1.9 -.25,1 -.25,-.2 -.25,-1.2 -.25,-2.1 -.25,-2.9 -.25,-3.5 -.25,-1.2 -.25,0 -.25,0 -.25,0 -.25,0 -.25,0 -.25,.6 -.25,3.9 -.25,3.1 -.25,2.4 -.25,1.4 -.25,.4 -.25,-1 -.25,-1.9 -.25,-2.7 -.25,-3.5 -.25,-2.7 -.25,0 -.25,0 -.25,0 -.25,0 -.25,0 -.25,0 -.25,2.6 -.25,2.7 -.25,2.2 -.25,1.7 -.25,1 -.25,.3 -.25,-.6 -.25,-1.3 -.25,-1.9 -.25,-2.4 -.25,-2.9 -.25,-1.4 -.25,0 -.25,0 -.25,0 -.25,0 -.25,0 -.25,0 -.25,0 -.25,0 -.25,0 -.25,0 -.25,0 -.25,.4 -.25,.3 -.25,.3 -.25,.4 -.25,.3 -.25,.3 -.25,.3 -.25,.3 -.25,.3 -.25,.3 -.25,.3 -.25,.3 -.25,.2 -.25,.3 -.25,.3 -.25,.3 -.25,.2 -.25,.3 -.25,.2 -.25,.3 -.25,.2 -.25,.3 -.25,.2 -.25,.2 -.25,.3 -.25,.2 -.25,.2 -.25,.2 -.25,.2 -.25,.2 -.25,.1 -.25,.2 -.25,.1 -.25,.2 -.25,.1 -.25,.1 -.25,-.2 -.25,-.4 -.25,-.4 -.25,-.3 -.25,-.4 -.25,-.4 -.25,-1.2 -.25,-4.4 -.25,-1.2 -.25,0 -.25,0 -.25,0 -.25,2 -.25,4.5 -.25,1.5 -.25,-2.3 -.25,-5.1 -.25,-.6 -.25,.9 -.25,5.5 -.25,2.3 -.25,-1.7 -.25,-5 -.25,-2 -.25,0 -.25,4.6 -.25,2.6 -.25,-.8 -.25,-3.7 -.25,-2.7 -.25,0 -.25,0 -.25,0 -.25,0 -.25,0 -.25,0 -.25,0 -.25,0 -.25,0 -.25,0 -.25,0 -.25,0 -.25,.2 -.25,.3 -.25,.4 -.25,.3 -.25,.3 -.25,.3 -.25,.3 -.25,.3 -.25,.3 -.25,.3 -.25,.3 -.25,.3 -.25,.3 -.25,.3 -.25,.2 -.25,.3 -.25,.3 -.25,.2 -.25,.3 -.25,.2 -.25,.3 -.25,.2 -.25,.3 -.25,.2 -.25,.2 -.25,.2 -.25,.3 -.25,.2 -.25,.2 -.25,.2 -.25,.1 -.25,.2 -.25,.2 -.25,.1 -.25,.1 -.25,.1 -.25,.1 -.25,-.4 -.25,-.3 -.25,-.4 -.25,-.4 -.25,-.4 -.25,-.3 -.25,-2.9 -.25,-3.8 -.25,0 -.25,0 -.25,0 -.25,0 -.25,4.5 -.25,3.6 -.25,-.2 -.25,-3.8 -.25,-4.1 -.25,0 -.25,3.2 -.25,3.9 -.25,.6 -.25,-3 -.25,-4.7 -.25,0 -.25,2 -.25,4.1 -.25,1.4 -.25,-2.3 -.25,-4.8 -.25,-.4 -.25,0 -.25,0 -.25,0 -.25,0 -.25,0 -.25,0 -.25,0 -.25,0 -.25,0 -.25,0 -.25,0 -.25,0 -.25,.3 -.25,.4 -.25,.3 -.25,.3 -.25,.3 -.25,.3 -.25,.3 -.25,.3 -.25,.3 -.25,.3 -.25,.3 -.25,.3 -.25,.3 -.25,.3 -.25,.2 -.25,.3 -.25,.3 -.25,.2 -.25,.3 -.25,.3 -.25,.2 -.25,.2 -.25,.3 -.25,.2 -.25,.2 -.25,.2 -.25,.2 -.25,.2 -.25,.2 -.25,.2 -.25,.2 -.25,.2 -.25,.1 -.25,.2 -.25,.1 -.25,.1 -.25,-.2 -.25,-.3 -.25,-.4 -.25,-.4 -.25,-.3 -.25,-.4 -.25,-.6 -.25,-4.4 -.25,-1.9 -.25,0 -.25,0 -.25,0 -.25,1 -.25,4.7 -.25,2 -.25,-1.7 -.25,-4.5 -.25,-1.5 -.25,0 -.25,5 -.25,2.6 -.25,-1 -.25,-4 -.25,-2.6 -.25,0 -.25,4.4 -.25,3.3 -.25,-.3 -.25,-3.6 -.25,-3.8 -.25,0 -.25,0 -.25,0 -.25,0 -.25,0 -.25,0 -.25,0 -.25,0 -.25,0 -.25,0 -.25,0 -.25,0 -.25,0 -.25,.5 -.25,.4 -.25,.4 -.25,.4 -.25,.4 -.25,.4 -.25,.4 -.25,.3 -.25,.4 -.25,.4 -.25,.3 -.25,.4 -.25,.3 -.25,.3 -.25,.4 -.25,.3 -.25,.3 -.25,.4 -.25,.3 -.25,.3 -.25,.3 -.25,.3 -.25,.3 -.25,.2 -.25,.3 -.25,.3 -.25,.2 -.25,.3 -.25,.2 -.25,.2 -.25,.2 -.25,.2 -.25,.2 -.25,.2 -.25,.1 -.25,.1 -.25,-.4 -.25,-.4 -.25,-.5 -.25,-.4 -.25,-.5 -.25,-.4 -.25,-2.8 -.25,-5.3 -.25,-.2 -.25,0 -.25,0 -.25,0 -.25,3.4 -.25,3.8 -.25,.5 -.25,-3.1 -.25,-4.6 -.25,0 -.25,2.8 -.25,4.9 -.25,1.4 -.25,-2.9 -.25,-5.9 -.25,-.3 -.25,1.5 -.25,5.5 -.25,2.3 -.25,-2.1 -.25,-5.5 -.25,-1.7 -.25,0 -.25,0 -.25,0 -.25,0 -.25,0 -.25,0 -.25,0 -.25,0 -.25,0 -.25,0 -.25,0 -.25,0 -.25,.3 -.25,.3 -.25,.3 -.25,.4 -.25,.3 -.25,.3 -.25,.3 -.25,.3 -.25,.3 -.25,.3 -.25,.3 -.25,.3 -.25,.2 -.25,.3 -.25,.3 -.25,.3 -.25,.2 -.25,.3 -.25,.3 -.25,.2 -.25,.3 -.25,.2 -.25,.2 -.25,.3 -.25,.2 -.25,.2 -.25,.2 -.25,.2 -.25,.2 -.25,.2 -.25,.2 -.25,.1 -.25,.2 -.25,.1 -.25,.2 -.25,.1 -.25,-.1 -.25,-.4 -.25,-.3 -.25,-.4 -.25,-.4 -.25,-.4 -.25,-.3 -.25,-4 -.25,-2.6 -.25,0 -.25,0 -.25,0 -.25,.1 -.25,5.8 -.25,2.8 -.25,-1.3 -.25,-4.7 -.25,-2.7 -.25,0 -.25,5.2 -.25,3.7 -.25,-.5 -.25,-4.3 -.25,-4.1 -.25,0 -.25,3.4 -.25,3.7 -.25,.3 -.25,-3 -.25,-4.4 -.25,0 -.25,0 -.25,0 -.25,0 -.25,0 -.25,0 -.25,0 -.25,0 -.25,0 -.25,0 -.25,0 -.25,0 -.25,0 -.25,.4 -.25,.3 -.25,.4 -.25,.3 -.25,.3 -.25,.3 -.25,.3 -.25,.3 -.25,.3 -.25,.3 -.25,.3 -.25,.3 -.25,.3 -.25,.2 -.25,.3 -.25,.3 -.25,.3 -.25,.2 -.25,.3 -.25,.2 -.25,.3 -.25,.2 -.25,.2 -.25,.3 -.25,.2 -.25,.2 -.25,.2 -.25,.2 -.25,.2 -.25,.2 -.25,.1 -.25,.2 -.25,.2 -.25,.1 -.25,.1 -.25,.1 -.25,-.3 -.25,-.3 -.25,-.4 -.25,-.4 -.25,-.3 -.25,-.4 -.25,-1.6 -.25,-4.5 -.25,-.7 -.25,0 -.25,0 -.25,0 -.25,2.9 -.25,4.5 -.25,1.2 -.25,-2.8 -.25,-5.8 -.25,0 -.25,1.5 -.25,5 -.25,2 -.25,-2.1 -.25,-5.1 -.25,-1.3 -.25,.3 -.25,6 -.25,2.9 -.25,-1.4 -.25,-5 -.25,-2.8 -.25,0 -.25,0 -.25,0 -.25,0 -.25,0 -.25,0 -.25,0 -.25,0 -.25,0 -.25,0 -.25,0 -.25,0 -.25,.2 -.25,.4 -.25,.4 -.25,.4 -.25,.4 -.25,.4 -.25,.4 -.25,.4 -.25,.3 -.25,.4 -.25,.3 -.25,.4 -.25,.4 -.25,.3 -.25,.3 -.25,.4 -.25,.3 -.25,.3 -.25,.3 -.25,.4 -.25,.3 -.25,.3 -.25,.2 -.25,.3 -.25,.3 -.25,.3 -.25,.2 -.25,.3 -.25,.2 -.25,.3 -.25,.2 -.25,.2 -.25,.2 -.25,.1 -.25,.2 -.25,.1 -.25,0 -.25,-.4 -.25,-.5 -.25,-.4 -.25,-.5 -.25,-.4 -.25,-.4 -.25,.8 -.25,.7 -.25,-.2 -.25,-1 -.25,-1.6 -.25,-2.1 -.25,-.2 -.25,3.1 -.25,-.6 -.25,-3.8 -.25,-3.3 -.25,0 -.25,4.3 -.25,4.1 -.25,.2 -.25,-3.7 -.25,2.5 -.25,2.4 -.25,1.4 -.25,-.1 -.25,-1.4 -.25,-2.5 -.25,-3.5 -.25,-3.7 -.25,0 -.25,0 -.25,0 -.25,0 -.25,0 -.25,1.3 -.25,3.2 -.25,2.6 -.25,2 -.25,1.4 -.25,.7 -.25,-.3 -.25,-1.2 -.25,-1.7 -.25,-2.4 -.25,-3 -.25,-2.6 -.25,0 -.25,0 -.25,0 -.25,.5 -.25,3.2 -.25,2.6 -.25,2.1 -.25,1.4 -.25,.8 -.25,-.3 -.25,-1 -.25,-1.8 -.25,-2.3 -.25,-2.9 -.25,-2.3 -.25,0 -.25,0 -.25,0 -.25,2.3 -.25,2.6 -.25,2 -.25,1.5 -.25,.9 -.25,.2 -.25,-.7 -.25,-1.3 -.25,-1.8 -.25,-2.3 -.25,-2.8 -.25,-.6 -.25,0 -.25,0 -.25,0 -.25,0 -.25,0 -.25,1.9 -.25,3.5 -.25,2.8 -.25,2 -.25,1.1 -.25,-.1 -.25,-1.2 -.25,-2.1 -.25,-2.9 -.25,-3.7 -.25,-1.3 -.25,0 -.25,0 -.25,0 -.25,0 -.25,0 -.25,0 -.25,.3 -.25,3.7 -.25,2.9 -.25,2.1 -.25,1.2 -.25,0 -.25,-1.2 -.25,-2.1 -.25,-2.9 -.25,-3.6 -.25,-.4 -.25,0 -.25,0 -.25,0 -.25,0 -.25,0 -.25,0 -.25,0 -.25,0 -.25,0 -.25,0 -.25,0 -.25,.5 -.25,.3 -.25,.4 -.25,.3 -.25,.3 -.25,.3 -.25,.3 -.25,.3 -.25,.3 -.25,.3 -.25,.3 -.25,.3 -.25,.2 -.25,.3 -.25,.3 -.25,.3 -.25,.2 -.25,.3 -.25,.2 -.25,.3 -.25,.2 -.25,.3 -.25,.2 -.25,.2 -.25,.2 -.25,.2 -.25,.3 -.25,.2 -.25,.1 -.25,.2 -.25,.2 -.25,.1 -.25,.2 -.25,.1 -.25,.1 -.25,.1 -.25,-.4 -.25,-.3 -.25,-.4 -.25,-.4 -.25,-.3 -.25,-.4 -.25,-2.7 -.25,-4 -.25,0 -.25,0 -.25,0 -.25,0 -.25,3.8 -.25,3.5 -.25,0 -.25,-3.3 -.25,-4 -.25,0 -.25,2.8 -.25,4 -.25,.8 -.25,-2.7 -.25,-4.9 -.25,0 -.25,2.1 -.25,5.2 -.25,1.8 -.25,-2.5 -.25,-5.6 -.25,-1 -.25,0 -.25,0 -.25,0 -.25,0 -.25,0 -.25,0 -.25,0 -.25,0 -.25,0 -.25,0 -.25,0 -.25,0 -.25,.3 -.25,.3 -.25,.4 -.25,.3 -.25,.3 -.25,.3 -.25,.3 -.25,.3 -.25,.3 -.25,.3 -.25,.3 -.25,.3 -.25,.3 -.25,.3 -.25,.2 -.25,.3 -.25,.3 -.25,.2 -.25,.3 -.25,.2 -.25,.3 -.25,.2 -.25,.3 -.25,.2 -.25,.2 -.25,.2 -.25,.2 -.25,.2 -.25,.2 -.25,.2 -.25,.2 -.25,.2 -.25,.1 -.25,.1 -.25,.2 -.25,.1 -.25,-.1 -.25,-.4 -.25,-.4 -.25,-.4 -.25,-.3 -.25,-.4 -.25,-.4 -.25,-4.3 -.25,-2.2 -.25,0 -.25,0 -.25,0 -.25,.6 -.25,4.7 -.25,2.1 -.25,-1.5 -.25,-4.2 -.25,-1.7 -.25,0 -.25,4.7 -.25,2.7 -.25,-.7 -.25,-3.8 -.25,-2.9 -.25,0 -.25,4.4 -.25,3.6 -.25,0 -.25,-3.6 -.25,-4.4 -.25,0 -.25,0 -.25,0 -.25,0 -.25,0 -.25,0 -.25,0 -.25,0 -.25,0 -.25,0 -.25,0 -.25,0 -.25,0 -.25,.5 -.25,.3 -.25,.3 -.25,.3 -.25,.3 -.25,.3 -.25,.3 -.25,.3 -.25,.3 -.25,.3 -.25,.3 -.25,.3 -.25,.3 -.25,.3 -.25,.2 -.25,.3 -.25,.3 -.25,.2 -.25,.3 -.25,.2 -.25,.3 -.25,.2 -.25,.3 -.25,.2 -.25,.2 -.25,.2 -.25,.2 -.25,.2 -.25,.2 -.25,.2 -.25,.2 -.25,.1 -.25,.2 -.25,.1 -.25,.1 -.25,.1 -.25,-.3 -.25,-.4 -.25,-.3 -.25,-.4 -.25,-.4 -.25,-.4 -.25,-2 -.25,-4.4 -.25,-.3 -.25,0 -.25,0 -.25,0 -.25,3 -.25,3.8 -.25,.6 -.25,-2.8 -.25,-4.6 -.25,0 -.25,2.3 -.25,5 -.25,1.6 -.25,-2.5 -.25,-5.7 -.25,-.7 -.25,.8 -.25,4.8 -.25,2.1 -.25,-1.6 -.25,-4.4 -.25,-1.7 -.25,0 -.25,0 -.25,0 -.25,0 -.25,0 -.25,0 -.25,0 -.25,0 -.25,0 -.25,0 -.25,0 -.25,0 -.25,.3 -.25,.4 -.25,.4 -.25,.4 -.25,.4 -.25,.3 -.25,.4 -.25,.4 -.25,.4 -.25,.3 -.25,.4 -.25,.3 -.25,.4 -.25,.3 -.25,.4 -.25,.3 -.25,.3 -.25,.4 -.25,.3 -.25,.3 -.25,.3 -.25,.3 -.25,.3 -.25,.3 -.25,.2 -.25,.3 -.25,.3 -.25,.2 -.25,.2 -.25,.3 -.25,.2 -.25,.2 -.25,.2 -.25,.2 -.25,.1 -.25,.1 -.25,0 -.25,-.4 -.25,-.5 -.25,-.4 -.25,-.5 -.25,-.4 -.25,-.5 -.25,-4.5 -.25,-3.6 -.25,0 -.25,0Z" fill="#4bb9f1"/></svg><svg style="position:absolute;left:218.00px;top:126.60px;" width="314.50" height="35.20" viewBox="0 0 314.50 35.20"><rect x="0" y="0" width="314.50" height="35.20" fill="#171718"/><path d="M0,9.5l.25,-.4 .25,-.7 .25,1.5 .25,-.7 .25,-2 .25,.4 .25,.5 .25,-.1 .25,.3 .25,-.5 .25,-.3 .25,1.2 .25,-1.5 .25,.3 .25,0 .25,.7 .25,-.1 .25,-1.2 .25,1.9 .25,-2.2 .25,.8 .25,.3 .25,.4 .25,-.7 .25,-.2 .25,-.5 .25,.4 .25,-.5 .25,-.1 .25,.4 .25,-.3 .25,1.4 .25,-1.5 .25,2 .25,-.9 .25,.3 .25,-1.5 .25,.7 .25,-.3 .25,-.4 .25,1 .25,.5 .25,-.8 .25,1.1 .25,-1.1 .25,1.5 .25,-.7 .25,-1.5 .25,1.1 .25,-.4 .25,.2 .25,-1 .25,1.4 .25,.5 .25,-1.9 .25,1.1 .25,.4 .25,1 .25,-1.5 .25,0 .25,-.1 .25,-.1 .25,1.8 .25,-1.6 .25,1.1 .25,-.9 .25,.7 .25,0 .25,.2 .25,-1.2 .25,.5 .25,.7 .25,-1.2 .25,1.6 .25,-1.3 .25,1 .25,-1.3 .25,0 .25,1.4 .25,-1.4 .25,1.7 .25,-.8 .25,-.7 .25,1.7 .25,-1.6 .25,0 .25,1.8 .25,-1.7 .25,1.1 .25,-.1 .25,-1.3 .25,2.4 .25,-2.3 .25,1.2 .25,-1.3 .25,.5 .25,.2 .25,1 .25,.1 .25,-.9 .25,-.6 .25,-.3 .25,0 .25,0 .25,2.3 .25,-.4 .25,-1.3 .25,.7 .25,-.6 .25,1 .25,-.6 .25,.3 .25,-.5 .25,.9 .25,-2 .25,.3 .25,.4 .25,1.5 .25,-.6 .25,-.4 .25,-1 .25,1.9 .25,-.2 .25,-2.3 .25,2.3 .25,-.6 .25,-.1 .25,-.7 .25,1 .25,.2 .25,-1.6 .25,1.6 .25,-.8 .25,-1.1 .25,0 .25,.9 .25,-.2 .25,.2 .25,-.2 .25,-.2 .25,1.2 .25,-1 .25,-1.3 .25,.1 .25,1.6 .25,.3 .25,-1.4 .25,-.4 .25,.2 .25,1.6 .25,.2 .25,-2 .25,1.8 .25,-2.1 .25,2.2 .25,-.2 .25,-1.5 .25,-.7 .25,.4 .25,.1 .25,.1 .25,-.1 .25,1.8 .25,-1.3 .25,.9 .25,0 .25,-1.3 .25,1 .25,.1 .25,.7 .25,-2.3 .25,.6 .25,.2 .25,0 .25,.6 .25,-1.1 .25,2.1 .25,-2.1 .25,1.3 .25,.7 .25,0 .25,-.3 .25,-.9 .25,1.1 .25,-.3 .25,-.4 .25,1 .25,-.6 .25,.8 .25,-.3 .25,.5 .25,-.8 .25,.1 .25,-.9 .25,.9 .25,-.9 .25,.4 .25,.7 .25,.7 .25,-1.1 .25,-.4 .25,1.8 .25,0 .25,-1.6 .25,1.6 .25,-.1 .25,-1 .25,1.7 .25,-.5 .25,-.7 .25,1.5 .25,-1 .25,.6 .25,-1.9 .25,1.1 .25,.8 .25,.4 .25,-2 .25,0 .25,.5 .25,1.2 .25,-.9 .25,1.1 .25,-1.8 .25,1.1 .25,.2 .25,-.6 .25,.5 .25,-.2 .25,1.2 .25,-1.2 .25,-.7 .25,1.6 .25,-.7 .25,-.1 .25,.9 .25,.6 .25,-1.8 .25,.1 .25,1.2 .25,-1.6 .25,1 .25,-.7 .25,1.1 .25,-.5 .25,.5 .25,.6 .25,0 .25,-1.7 .25,1.5 .25,-.6 .25,-1.1 .25,.6 .25,.5 .25,-.4 .25,.9 .25,-1.6 .25,-.1 .25,-.4 .25,1.1 .25,-.3 .25,-.1 .25,-.5 .25,.6 .25,1.6 .25,-1.8 .25,.4 .25,.8 .25,.4 .25,-1.6 .25,.2 .25,-.9 .25,.2 .25,1.9 .25,-.5 .25,-.8 .25,.5 .25,-.9 .25,-.5 .25,-.2 .25,.5 .25,-.2 .25,-.2 .25,.3 .25,1.6 .25,.1 .25,-.2 .25,-1.4 .25,.7 .25,.3 .25,-1.2 .25,1.5 .25,-1.4 .25,.9 .25,-.6 .25,1.5 .25,-2 .25,.8 .25,.7 .25,-.5 .25,1 .25,-.4 .25,.3 .25,-1 .25,-.6 .25,.8 .25,1 .25,-.5 .25,-.7 .25,-.3 .25,1.3 .25,-1.6 .25,-.1 .25,-.4 .25,1.8 .25,-1.4 .25,1.3 .25,-.9 .25,.3 .25,1.5 .25,-.4 .25,.4 .25,-2.2 .25,-.2 .25,.5 .25,-.3 .25,1.7 .25,-1.7 .25,1.8 .25,.5 .25,-.6 .25,-1.5 .25,.6 .25,-.3 .25,-.2 .25,1.4 .25,-.9 .25,1.3 .25,-1.1 .25,.1 .25,.6 .25,-.6 .25,.7 .25,-.5 .25,1.1 .25,-1 .25,-.6 .25,0 .25,1.5 .25,.7 .25,-2.3 .25,1 .25,1.3 .25,-.4 .25,.2 .25,-1.1 .25,1 .25,0 .25,-.5 .25,-.5 .25,.2 .25,.9 .25,-1.7 .25,2.1 .25,-.5 .25,.3 .25,-.4 .25,-1 .25,-.4 .25,1.1 .25,-.3 .25,-1 .25,0 .25,.7 .25,-.5 .25,.9 .25,.7 .25,-1.7 .25,.2 .25,1.1 .25,-2.1 .25,1.4 .25,.5 .25,-1.9 .25,.1 .25,.7 .25,.1 .25,-1.1 .25,0 .25,.4 .25,-.7 .25,1.8 .25,.2 .25,-1.4 .25,.5 .25,1.2 .25,-.7 .25,-.2 .25,-1.1 .25,1.6 .25,-.9 .25,.6 .25,-1.4 .25,-.8 .25,1.5 .25,.1 .25,-.6 .25,.4 .25,.1 .25,-1.6 .25,1.5 .25,-1.4 .25,1.7 .25,-1.1 .25,1.3 .25,-2 .25,-.6 .25,0 .25,2 .25,-.7 .25,1 .25,-.1 .25,-.5 .25,-.5 .25,1 .25,-1.6 .25,-.7 .25,1.7 .25,-1.4 .25,.6 .25,-.1 .25,1 .25,-1.3 .25,-.7 .25,.6 .25,-.4 .25,1.1 .25,.6 .25,-1.4 .25,.4 .25,.5 .25,-1.2 .25,-.4 .25,1.7 .25,-.3 .25,-1 .25,.5 .25,.1 .25,.3 .25,-.6 .25,1.6 .25,-.7 .25,-1.3 .25,.6 .25,-.7 .25,1.4 .25,.2 .25,-1.6 .25,1.7 .25,.1 .25,.1 .25,.4 .25,-.2 .25,-.9 .25,-.8 .25,.1 .25,1.4 .25,.6 .25,-1 .25,-.2 .25,.8 .25,.3 .25,-.1 .25,-1.2 .25,1.4 .25,-1.6 .25,1.5 .25,-1.8 .25,-.2 .25,1.5 .25,0 .25,.3 .25,.4 .25,-.5 .25,.7 .25,-2.2 .25,-.1 .25,1.6 .25,-.3 .25,.4 .25,0 .25,-1.2 .25,.9 .25,0 .25,-1 .25,.6 .25,-.6 .25,-.3 .25,2 .25,-.1 .25,-2 .25,.3 .25,2.2 .25,-2.1 .25,.3 .25,-.2 .25,.5 .25,1 .25,-.4 .25,-.2 .25,0 .25,-1.6 .25,.3 .25,1.4 .25,0 .25,-.6 .25,.4 .25,.1 .25,-.5 .25,-.2 .25,-1.2 .25,1.4 .25,.9 .25,-2.1 .25,2 .25,-.8 .25,0 .25,-.5 .25,.2 .25,-.7 .25,1 .25,-.3 .25,-.7 .25,.1 .25,.9 .25,-1 .25,1.3 .25,-.5 .25,-.7 .25,-.1 .25,-.7 .25,-.3 .25,.6 .25,-.6 .25,1 .25,.5 .25,-1.4 .25,1.9 .25,-.7 .25,-1.3 .25,1.4 .25,-.6 .25,-.3 .25,.4 .25,-1.4 .25,2.3 .25,-1.7 .25,1.8 .25,-1.1 .25,-1.1 .25,1.5 .25,-.7 .25,1 .25,.3 .25,.2 .25,-1.3 .25,1.1 .25,-1 .25,-.1 .25,-1.2 .25,1.2 .25,.6 .25,.5 .25,-1.3 .25,-.3 .25,-.2 .25,1.7 .25,-.6 .25,.7 .25,0 .25,-1.9 .25,.1 .25,1.9 .25,.5 .25,-.9 .25,-1.1 .25,1.2 .25,.6 .25,-.2 .25,-.1 .25,.3 .25,-.8 .25,-.3 .25,.1 .25,1.3 .25,-.5 .25,-.5 .25,.5 .25,-.9 .25,.9 .25,.6 .25,-1 .25,-.3 .25,1.3 .25,-.4 .25,-.5 .25,0 .25,1.7 .25,-1.9 .25,.9 .25,.2 .25,-.3 .25,1.1 .25,-1.4 .25,1.2 .25,-1.5 .25,-.2 .25,.7 .25,1.9 .25,-1.8 .25,.7 .25,.6 .25,-.8 .25,1.3 .25,-.6 .25,.5 .25,-.1 .25,-.9 .25,1.3 .25,-.3 .25,.1 .25,-1 .25,-.8 .25,1.2 .25,.4 .25,-1.7 .25,0 .25,1.3 .25,-1.4 .25,1.1 .25,.9 .25,-2 .25,.6 .25,1.7 .25,-1.7 .25,.7 .25,.4 .25,.4 .25,-.3 .25,-.3 .25,-.9 .25,.1 .25,-.3 .25,.6 .25,.4 .25,.6 .25,-.1 .25,-.8 .25,-.9 .25,1.2 .25,-.5 .25,-1 .25,2 .25,-1.5 .25,-.1 .25,.5 .25,-.2 .25,1.2 .25,-1.9 .25,2.2 .25,-2 .25,.8 .25,-.4 .25,-.3 .25,1.1 .25,.3 .25,-.9 .25,-1.2 .25,.4 .25,0 .25,.3 .25,1.2 .25,-1.6 .25,1.5 .25,.4 .25,-1.3 .25,-.1 .25,1.5 .25,-.8 .25,-.6 .25,-.5 .25,.2 .25,.4 .25,.6 .25,-1.3 .25,1.8 .25,-1.2 .25,.4 .25,-1.5 .25,1.7 .25,.6 .25,-.9 .25,-1.1 .25,2.3 .25,.1 .25,-2.2 .25,2.1 .25,-.6 .25,0 .25,.5 .25,.1 .25,.2 .25,-.4 .25,-1.4 .25,0 .25,.4 .25,-.1 .25,-.7 .25,2.3 .25,-2.2 .25,.6 .25,.9 .25,-.5 .25,.8 .25,.2 .25,0 .25,-1 .25,-.7 .25,2 .25,.4 .25,-1.3 .25,.9 .25,.4 .25,-1 .25,-.9 .25,1.4 .25,.8 .25,-1.8 .25,.1 .25,1.4 .25,.1 .25,-1.1 .25,1.4 .25,-.9 .25,-.1 .25,.9 .25,-1.2 .25,-.6 .25,0 .25,.5 .25,1.6 .25,-2 .25,.8 .25,.8 .25,-1.6 .25,2 .25,-1.7 .25,1.3 .25,-1.6 .25,2.4 .25,-.8 .25,-1.7 .25,2.3 .25,-.4 .25,-1.8 .25,.1 .25,1.6 .25,-.7 .25,.4 .25,.2 .25,-1.6 .25,.3 .25,1.4 .25,.3 .25,-2 .25,.9 .25,.3 .25,-1.3 .25,1.6 .25,.2 .25,-.3 .25,.5 .25,-.8 .25,-.7 .25,1 .25,-.9 .25,-.8 .25,1.8 .25,.1 .25,-1.2 .25,.5 .25,-.4 .25,0 .25,-.1 .25,.7 .25,-.8 .25,-.2 .25,.4 .25,-.1 .25,-.5 .25,.1 .25,0 .25,.7 .25,.1 .25,-.2 .25,-.2 .25,-.8 .25,-.9 .25,-.4 .25,1.6 .25,-1.1 .25,0 .25,-.7 .25,.3 .25,2 .25,-.1 .25,-1.9 .25,.4 .25,1.1 .25,.4 .25,-2.4 .25,.6 .25,.2 .25,-.2 .25,1.3 .25,-2.1 .25,1 .25,-.7 .25,.8 .25,1 .25,-1.8 .25,1.4 .25,.2 .25,-.7 .25,-.2 .25,.5 .25,-1.2 .25,1.2 .25,-1.6 .25,.9 .25,-1 .25,1.9 .25,-.3 .25,0 .25,-.8 .25,0 .25,.1 .25,.3 .25,-.8 .25,.1 .25,-.2 .25,1 .25,-.6 .25,1.2 .25,-.8 .25,1.5 .25,-.5 .25,-.6 .25,.4 .25,-1.3 .25,2.1 .25,-1.2 .25,-.8 .25,1.3 .25,-.7 .25,-.7 .25,1.3 .25,-.5 .25,.1 .25,1.4 .25,-.4 .25,-1.8 .25,1.6 .25,-1 .25,-.3 .25,-.6 .25,1.9 .25,-1.5 .25,.7 .25,.4 .25,1 .25,-2 .25,.4 .25,-.7 .25,1.7 .25,.3 .25,.3 .25,-.8 .25,-.9 .25,-.3 .25,1.5 .25,-.4 .25,-1.2 .25,-.1 .25,1.5 .25,-1 .25,.9 .25,-.6 .25,-.7 .25,.6 .25,1.1 .25,-.7 .25,-1.1 .25,0 .25,1.8 .25,-1.7 .25,.1 .25,1.4 .25,0 .25,-1 .25,.6 .25,-1.5 .25,1.3 .25,-.1 .25,-.3 .25,-1.2 .25,.5 .25,1.4 .25,-1.6 .25,1.5 .25,-.8 .25,-.3 .25,-.2 .25,-.9 .25,1.1 .25,-.3 .25,-.6 .25,.1 .25,.5 .25,-.1 .25,.2 .25,-1.1 .25,1.2 .25,.1 .25,.6 .25,-1.6 .25,1.7 .25,.1 .25,-1.2 .25,.1 .25,-.6 .25,-.5 .25,-.3 .25,2.1 .25,0 .25,-1.9 .25,.6 .25,-.1 .25,-.5 .25,.4 .25,.7 .25,-1.8 .25,2.5 .25,-.6 .25,.1 .25,-1.5 .25,-.6 .25,.2 .25,1.8 .25,-.5 .25,.9 .25,-1.3 .25,-.8 .25,1 .25,.3 .25,-.4 .25,.7 .25,-.1 .25,.6 .25,-1.5 .25,.7 .25,.5 .25,.4 .25,-2 .25,-.1 .25,.8 .25,-.4 .25,.8 .25,.9 .25,-1 .25,-1.3 .25,.7 .25,1.3 .25,-1.8 .25,2.2 .25,-2 .25,1.3 .25,.8 .25,-.8 .25,.9 .25,.2 .25,-.5 .25,-1.4 .25,.9 .25,.5 .25,.6 .25,-1.3 .25,-.8 .25,2.3 .25,.2 .25,-1.8 .25,.3 .25,-.5 .25,1.2 .25,.7 .25,-.1 .25,-.3 .25,-.5 .25,1 .25,-1.3 .25,.1 .25,.8 .25,-.6 .25,.3 .25,-.4 .25,.5 .25,.2 .25,-1.1 .25,.2 .25,.4 .25,-.6 .25,2 .25,-.5 .25,-.5 .25,.4 .25,-1.4 .25,.5 .25,.3 .25,-.1 .25,1.7 .25,-1.3 .25,.4 .25,.6 .25,-1.2 .25,1.4 .25,-.5 .25,-.9 .25,-.1 .25,1.2 .25,.6 .25,-.3 .25,-.8 .25,-.3 .25,-.9 .25,2.1 .25,-2.1 .25,2.2 .25,-1.6 .25,.9 .25,0 .25,-1.6 .25,.9 .25,.8 .25,-.9 .25,.4 .25,.7 .25,-2 .25,1.8 .25,.5 .25,-1.3 .25,-.2 .25,-.6 .25,-.2 .25,2 .25,0 .25,.1 .25,-.1 .25,-.3 .25,-.6 .25,.1 .25,.2 .25,-1.4 .25,1.8 .25,-.4 .25,-1.4 .25,1.3 .25,-1.4 .25,1.3 .25,.3 .25,.3 .25,-1.3 .25,.3 .25,.8 .25,-1.9 .25,1.7 .25,.1 .25,-1.1 .25,.2 .25,-1.1 .25,1.7 .25,-1.2 .25,1.9 .25,-.9 .25,-1 .25,2 .25,-2.3 .25,1.6 .25,-.3 .25,-1.1 .25,.4 .25,.1 .25,.5 .25,.5 .25,-1.5 .25,2.1 .25,-1 .25,.4 .25,.1 .25,.2 .25,-.1 .25,.4 .25,.1 .25,-1 .25,0 .25,.7 .25,-1.5 .25,1.3 .25,-.4 .25,-1 .25,2.2 .25,-.7 .25,.4 .25,-1.2 .25,2 .25,-.1 .25,-.1 .25,-1.8 .25,1.6 .25,-1.1 .25,1.2 .25,-.6 .25,-.4 .25,-.5 .25,1.8 .25,.3 .25,-1.9 .25,1.1 .25,-1.3 .25,2 .25,-.7 .25,.5 .25,.3 .25,-.9 .25,.4 .25,-.5 .25,-.4 .25,1.3 .25,-1 .25,1.9 .25,-1 .25,.9 .25,-.4 .25,-.7 .25,-.7 .25,1.9 .25,.1 .25,-2.2 .25,.7 .25,1.1 .25,-.3 .25,.9 .25,-1 .25,-1.1 .25,.6 .25,.4 .25,1.1 .25,-1.2 .25,.6 .25,-.2 .25,.1 .25,-.3 .25,.2 .25,-.5 .25,1.1 .25,-.6 .25,-1.6 .25,.6 .25,1.5 .25,-2.1 .25,.7 .25,.1 .25,-.2 .25,-.6 .25,1.7 .25,-1.1 .25,-.7 .25,.4 .25,0 .25,-.4 .25,-.3 .25,1.6 .25,-.8 .25,-.3 .25,-.5 .25,1 .25,-.4 .25,.7 .25,.7 .25,-2.1 .25,1.9 .25,-.8 .25,-.6 .25,.6 .25,.8 .25,-.9 .25,0 .25,-.2 .25,.1 .25,-1.2 .25,0 .25,1.3 .25,-1.9 .25,2.1 .25,-2.1 .25,.3 .25,0 .25,.7 .25,-.5 .25,.9 .25,.5 .25,-2.3 .25,.2 .25,1.9 .25,-2.1 .25,-.1 .25,.7 .25,-.6 .25,2.3 .25,0 .25,-1.5 .25,.9 .25,-.3 .25,-.6 .25,1.3 .25,0 .25,-1.5 .25,-.5 .25,-.2 .25,.7 .25,-.3 .25,1.2 .25,-1.1 .25,1.4 .25,-1 .25,-.1 .25,-.1 .25,.9 .25,-1.7 .25,2.4 .25,-1.9 .25,.1 .25,.5 .25,-.1 .25,1 .25,-1.6 .25,1.3 .25,-1 .25,-.3L314.50,27.6l-.25,-.3 -.25,-1 -.25,1.3 -.25,-1.6 -.25,1 -.25,-.1 -.25,.5 -.25,.1 -.25,-1.9 -.25,2.4 -.25,-1.7 -.25,.9 -.25,-.1 -.25,-.1 -.25,-1 -.25,1.4 -.25,-1.1 -.25,1.2 -.25,-.3 -.25,.7 -.25,-.2 -.25,-.5 -.25,-1.5 -.25,0 -.25,1.3 -.25,-.6 -.25,-.3 -.25,.9 -.25,-1.5 -.25,0 -.25,2.3 -.25,-.6 -.25,.7 -.25,-.1 -.25,-2.1 -.25,1.9 -.25,.2 -.25,-2.3 -.25,.5 -.25,.9 -.25,-.5 -.25,.7 -.25,0 -.25,.3 -.25,-2.1 -.25,2.1 -.25,-1.9 -.25,1.3 -.25,0 -.25,-1.2 -.25,.1 -.25,-.2 -.25,0 -.25,-.9 -.25,.8 -.25,.6 -.25,-.6 -.25,-.8 -.25,1.9 -.25,-2.1 -.25,.7 -.25,.7 -.25,-.4 -.25,1 -.25,-.5 -.25,-.3 -.25,-.8 -.25,1.6 -.25,-.3 -.25,-.4 -.25,0 -.25,.4 -.25,-.7 -.25,-1.1 -.25,1.7 -.25,-.6 -.25,-.2 -.25,.1 -.25,.7 -.25,-2.1 -.25,1.5 -.25,.6 -.25,-1.6 -.25,-.6 -.25,1.1 -.25,-.5 -.25,.2 -.25,-.3 -.25,.1 -.25,-.2 -.25,.6 -.25,-1.2 -.25,1.1 -.25,.4 -.25,.6 -.25,-1.1 -.25,-1 -.25,.9 -.25,-.3 -.25,1.1 -.25,.7 -.25,-2.2 -.25,.1 -.25,1.9 -.25,-.7 -.25,-.7 -.25,-.4 -.25,.9 -.25,-1 -.25,1.9 -.25,-1 -.25,1.3 -.25,-.4 -.25,-.5 -.25,.4 -.25,-.9 -.25,.3 -.25,.5 -.25,-.7 -.25,2 -.25,-1.3 -.25,1.1 -.25,-1.9 -.25,.3 -.25,1.8 -.25,-.5 -.25,-.4 -.25,-.6 -.25,1.2 -.25,-1.1 -.25,1.6 -.25,-1.8 -.25,-.1 -.25,-.1 -.25,2 -.25,-1.2 -.25,.4 -.25,-.7 -.25,2.2 -.25,-1 -.25,-.4 -.25,1.3 -.25,-1.5 -.25,.7 -.25,0 -.25,-1 -.25,.1 -.25,.4 -.25,-.1 -.25,.2 -.25,.1 -.25,.4 -.25,-1 -.25,2.1 -.25,-1.5 -.25,.5 -.25,.5 -.25,.1 -.25,.4 -.25,-1.1 -.25,-.3 -.25,1.6 -.25,-2.3 -.25,2 -.25,-1 -.25,-.9 -.25,1.9 -.25,-1.2 -.25,1.7 -.25,-1.1 -.25,.2 -.25,-1.1 -.25,.1 -.25,1.7 -.25,-1.9 -.25,.8 -.25,.3 -.25,-1.3 -.25,.3 -.25,.3 -.25,1.3 -.25,-1.4 -.25,1.3 -.25,-1.4 -.25,-.4 -.25,1.8 -.25,-1.4 -.25,.2 -.25,.1 -.25,-.6 -.25,-.3 -.25,-.1 -.25,.1 -.25,0 -.25,2 -.25,-.2 -.25,-.6 -.25,-.2 -.25,-1.3 -.25,.5 -.25,1.8 -.25,-2 -.25,.7 -.25,.4 -.25,-.9 -.25,.8 -.25,.9 -.25,-1.6 -.25,0 -.25,.9 -.25,-1.6 -.25,2.2 -.25,-2.1 -.25,2.1 -.25,-.9 -.25,-.3 -.25,-.8 -.25,-.3 -.25,.6 -.25,1.2 -.25,-.1 -.25,-.9 -.25,-.5 -.25,1.4 -.25,-1.2 -.25,.6 -.25,.4 -.25,-1.3 -.25,1.7 -.25,-.1 -.25,.3 -.25,.5 -.25,-1.4 -.25,.4 -.25,-.5 -.25,-.5 -.25,2 -.25,-.6 -.25,.4 -.25,.2 -.25,-1.1 -.25,.2 -.25,.5 -.25,-.4 -.25,.3 -.25,-.6 -.25,.8 -.25,.1 -.25,-1.3 -.25,1 -.25,-.5 -.25,-.3 -.25,-.1 -.25,.7 -.25,1.2 -.25,-.5 -.25,.3 -.25,-1.8 -.25,.2 -.25,2.3 -.25,-.8 -.25,-1.3 -.25,.6 -.25,.5 -.25,.9 -.25,-1.4 -.25,-.5 -.25,.2 -.25,.9 -.25,-.8 -.25,.8 -.25,1.3 -.25,-2 -.25,2.2 -.25,-1.8 -.25,1.3 -.25,.7 -.25,-1.3 -.25,-1 -.25,.9 -.25,.8 -.25,-.4 -.25,.8 -.25,-.1 -.25,-2 -.25,.4 -.25,.5 -.25,.7 -.25,-1.5 -.25,.6 -.25,-.1 -.25,.7 -.25,-.4 -.25,.3 -.25,1 -.25,-.8 -.25,-1.3 -.25,.9 -.25,-.5 -.25,1.8 -.25,.2 -.25,-.6 -.25,-1.5 -.25,.1 -.25,-.6 -.25,2.5 -.25,-1.8 -.25,.7 -.25,.4 -.25,-.5 -.25,-.1 -.25,.6 -.25,-1.9 -.25,0 -.25,2.1 -.25,-.3 -.25,-.5 -.25,-.6 -.25,.1 -.25,-1.2 -.25,.1 -.25,1.7 -.25,-1.6 -.25,.6 -.25,.1 -.25,1.2 -.25,-1.1 -.25,.2 -.25,-.1 -.25,.5 -.25,.1 -.25,-.6 -.25,-.3 -.25,1.1 -.25,-.9 -.25,-.2 -.25,-.3 -.25,-.8 -.25,1.5 -.25,-1.6 -.25,1.4 -.25,.5 -.25,-1.2 -.25,-.3 -.25,-.1 -.25,1.3 -.25,-1.5 -.25,.6 -.25,-1 -.25,0 -.25,1.4 -.25,.1 -.25,-1.7 -.25,1.8 -.25,0 -.25,-1.1 -.25,-.7 -.25,1.1 -.25,.6 -.25,-.7 -.25,-.6 -.25,.9 -.25,-1 -.25,1.5 -.25,-.1 -.25,-1.2 -.25,-.4 -.25,1.5 -.25,-.3 -.25,-.9 -.25,-.8 -.25,.3 -.25,.3 -.25,1.7 -.25,-.7 -.25,.4 -.25,-2 -.25,1 -.25,.4 -.25,.7 -.25,-1.5 -.25,1.9 -.25,-.6 -.25,-.3 -.25,-1 -.25,1.6 -.25,-1.8 -.25,-.4 -.25,1.4 -.25,.1 -.25,-.5 -.25,1.3 -.25,-.7 -.25,-.7 -.25,1.3 -.25,-.8 -.25,-1.2 -.25,2.1 -.25,-1.3 -.25,.4 -.25,-.6 -.25,-.5 -.25,1.5 -.25,-.8 -.25,1.2 -.25,-.6 -.25,1 -.25,-.2 -.25,.1 -.25,-.8 -.25,.3 -.25,.1 -.25,0 -.25,-.8 -.25,0 -.25,-.3 -.25,1.9 -.25,-1 -.25,.9 -.25,-1.6 -.25,1.2 -.25,-1.2 -.25,.5 -.25,-.2 -.25,-.7 -.25,.2 -.25,1.4 -.25,-1.8 -.25,1 -.25,.8 -.25,-.7 -.25,1 -.25,-2.1 -.25,1.3 -.25,-.2 -.25,.2 -.25,.6 -.25,-2.4 -.25,.4 -.25,1.1 -.25,.4 -.25,-1.9 -.25,-.1 -.25,2 -.25,.3 -.25,-.7 -.25,0 -.25,-1.1 -.25,1.6 -.25,-.4 -.25,-.9 -.25,-.8 -.25,-.2 -.25,-.2 -.25,.1 -.25,.7 -.25,0 -.25,.1 -.25,-.5 -.25,-.1 -.25,.4 -.25,-.2 -.25,-.8 -.25,.7 -.25,-.1 -.25,0 -.25,-.4 -.25,.5 -.25,-1.2 -.25,.1 -.25,1.8 -.25,-.8 -.25,-.9 -.25,1 -.25,-.7 -.25,-.8 -.25,.5 -.25,-.3 -.25,.2 -.25,1.6 -.25,-1.3 -.25,.3 -.25,.9 -.25,-2 -.25,.3 -.25,1.4 -.25,.3 -.25,-1.6 -.25,.2 -.25,.4 -.25,-.7 -.25,1.6 -.25,.1 -.25,-1.8 -.25,-.4 -.25,2.3 -.25,-1.7 -.25,-.8 -.25,2.4 -.25,-1.6 -.25,1.3 -.25,-1.7 -.25,2 -.25,-1.6 -.25,.8 -.25,.8 -.25,-2 -.25,1.6 -.25,.5 -.25,0 -.25,-.6 -.25,-1.2 -.25,.9 -.25,-.1 -.25,-.9 -.25,1.4 -.25,-1.1 -.25,.1 -.25,1.4 -.25,.1 -.25,-1.8 -.25,.8 -.25,1.4 -.25,-.9 -.25,-1 -.25,.4 -.25,.9 -.25,-1.3 -.25,.4 -.25,2 -.25,-.7 -.25,-1 -.25,0 -.25,.2 -.25,.8 -.25,-.5 -.25,.9 -.25,.6 -.25,-2.2 -.25,2.3 -.25,-.7 -.25,-.1 -.25,.4 -.25,0 -.25,-1.4 -.25,-.4 -.25,.2 -.25,.1 -.25,.5 -.25,0 -.25,-.6 -.25,2.1 -.25,-2.2 -.25,.1 -.25,2.3 -.25,-1.1 -.25,-.9 -.25,.6 -.25,1.7 -.25,-1.5 -.25,.4 -.25,-1.2 -.25,1.8 -.25,-1.3 -.25,.6 -.25,.4 -.25,.2 -.25,-.5 -.25,-.6 -.25,-.8 -.25,1.5 -.25,-.1 -.25,-1.3 -.25,.4 -.25,1.5 -.25,-1.6 -.25,1.2 -.25,.3 -.25,0 -.25,.4 -.25,-1.2 -.25,-.9 -.25,.3 -.25,1.1 -.25,-.3 -.25,-.4 -.25,.8 -.25,-2 -.25,2.2 -.25,-1.9 -.25,1.2 -.25,-.2 -.25,.5 -.25,-.1 -.25,-1.5 -.25,2 -.25,-1 -.25,-.5 -.25,1.2 -.25,-.9 -.25,-.8 -.25,-.1 -.25,.6 -.25,.4 -.25,.6 -.25,-.3 -.25,.1 -.25,-.9 -.25,-.3 -.25,-.3 -.25,.4 -.25,.4 -.25,.7 -.25,-1.7 -.25,1.7 -.25,.6 -.25,-2 -.25,.9 -.25,1.1 -.25,-1.4 -.25,1.3 -.25,0 -.25,-1.7 -.25,.4 -.25,1.2 -.25,-.8 -.25,-1 -.25,.1 -.25,-.3 -.25,1.3 -.25,-.9 -.25,-.1 -.25,.5 -.25,-.6 -.25,1.3 -.25,-.8 -.25,.6 -.25,.7 -.25,-1.8 -.25,1.9 -.25,.7 -.25,-.2 -.25,-1.5 -.25,1.2 -.25,-1.4 -.25,1.1 -.25,-.3 -.25,.2 -.25,.9 -.25,-1.9 -.25,1.7 -.25,0 -.25,-.5 -.25,-.4 -.25,1.3 -.25,-.3 -.25,-1 -.25,.6 -.25,.9 -.25,-.9 -.25,.5 -.25,-.5 -.25,-.5 -.25,1.3 -.25,.1 -.25,-.3 -.25,-.8 -.25,.3 -.25,-.1 -.25,-.2 -.25,.6 -.25,1.2 -.25,-1.1 -.25,-.9 -.25,.5 -.25,1.9 -.25,.1 -.25,-1.9 -.25,0 -.25,.7 -.25,-.6 -.25,1.7 -.25,-.2 -.25,-.3 -.25,-1.3 -.25,.5 -.25,.6 -.25,1.2 -.25,-1.2 -.25,-.1 -.25,-1 -.25,1.1 -.25,-1.3 -.25,.2 -.25,.3 -.25,1 -.25,-.7 -.25,1.5 -.25,-1.1 -.25,-1.1 -.25,1.8 -.25,-1.7 -.25,2.3 -.25,-1.4 -.25,.4 -.25,-.3 -.25,-.6 -.25,1.4 -.25,-1.3 -.25,-.7 -.25,1.9 -.25,-1.4 -.25,.5 -.25,1 -.25,-.6 -.25,.6 -.25,-.3 -.25,-.7 -.25,-.1 -.25,-.7 -.25,-.5 -.25,1.3 -.25,-1 -.25,.9 -.25,.1 -.25,-.7 -.25,-.3 -.25,1 -.25,-.7 -.25,.2 -.25,-.5 -.25,0 -.25,-.8 -.25,2 -.25,-2.1 -.25,.9 -.25,1.4 -.25,-1.2 -.25,-.2 -.25,-.5 -.25,.1 -.25,.4 -.25,-.6 -.25,0 -.25,1.4 -.25,.3 -.25,-1.6 -.25,0 -.25,-.2 -.25,-.4 -.25,1 -.25,.5 -.25,-.2 -.25,.3 -.25,-2.1 -.25,2.2 -.25,.3 -.25,-2 -.25,-.1 -.25,2 -.25,-.3 -.25,-.6 -.25,.6 -.25,-1 -.25,0 -.25,.9 -.25,-1.2 -.25,0 -.25,.4 -.25,-.3 -.25,1.6 -.25,-.1 -.25,-2.2 -.25,.7 -.25,-.5 -.25,.4 -.25,.3 -.25,0 -.25,1.5 -.25,-.2 -.25,-1.8 -.25,1.5 -.25,-1.6 -.25,1.4 -.25,-1.2 -.25,-.1 -.25,.3 -.25,.8 -.25,-.2 -.25,-1 -.25,.6 -.25,1.4 -.25,.1 -.25,-.8 -.25,-.9 -.25,-.2 -.25,.4 -.25,.1 -.25,.1 -.25,1.7 -.25,-1.6 -.25,.2 -.25,1.4 -.25,-.7 -.25,.6 -.25,-1.3 -.25,-.7 -.25,1.6 -.25,-.6 -.25,.3 -.25,.1 -.25,.5 -.25,-1 -.25,-.3 -.25,1.7 -.25,-.4 -.25,-1.2 -.25,.5 -.25,.4 -.25,-1.4 -.25,.6 -.25,1.1 -.25,-.4 -.25,.6 -.25,-.7 -.25,-1.3 -.25,1 -.25,-.1 -.25,.6 -.25,-1.4 -.25,1.7 -.25,-.7 -.25,-1.6 -.25,1 -.25,-.5 -.25,-.5 -.25,-.1 -.25,1 -.25,-.7 -.25,2 -.25,0 -.25,-.6 -.25,-2 -.25,1.3 -.25,-1.1 -.25,1.7 -.25,-1.4 -.25,1.5 -.25,-1.6 -.25,.1 -.25,.4 -.25,-.6 -.25,.1 -.25,1.5 -.25,-.8 -.25,-1.4 -.25,.6 -.25,-.9 -.25,1.6 -.25,-1.1 -.25,-.2 -.25,-.7 -.25,1.2 -.25,.5 -.25,-1.4 -.25,.2 -.25,1.8 -.25,-.7 -.25,.4 -.25,0 -.25,-1.1 -.25,.1 -.25,.7 -.25,.1 -.25,-1.9 -.25,.5 -.25,1.4 -.25,-2.1 -.25,1.1 -.25,.2 -.25,-1.7 -.25,.7 -.25,.9 -.25,-.5 -.25,.7 -.25,0 -.25,-1 -.25,-.3 -.25,1.1 -.25,-.4 -.25,-1 -.25,-.4 -.25,.3 -.25,-.5 -.25,2.1 -.25,-1.7 -.25,.9 -.25,.2 -.25,-.5 -.25,-.5 -.25,0 -.25,1 -.25,-1.1 -.25,.2 -.25,-.4 -.25,1.3 -.25,1 -.25,-2.3 -.25,.7 -.25,1.5 -.25,0 -.25,-.6 -.25,-1 -.25,1.1 -.25,-.5 -.25,.7 -.25,-.6 -.25,.6 -.25,.1 -.25,-1.1 -.25,1.3 -.25,-.9 -.25,1.4 -.25,-.2 -.25,-.3 -.25,.6 -.25,-1.5 -.25,-.6 -.25,.5 -.25,1.8 -.25,-1.7 -.25,1.7 -.25,-.3 -.25,.5 -.25,-.2 -.25,-2.2 -.25,.4 -.25,-.4 -.25,1.5 -.25,.3 -.25,-.9 -.25,1.3 -.25,-1.4 -.25,1.8 -.25,-.4 -.25,-.1 -.25,-1.6 -.25,1.3 -.25,-.3 -.25,-.7 -.25,-.5 -.25,1 -.25,.8 -.25,-.6 -.25,-1 -.25,.3 -.25,-.4 -.25,1 -.25,-.5 -.25,.7 -.25,.8 -.25,-2 -.25,1.5 -.25,-.6 -.25,.9 -.25,-1.4 -.25,1.5 -.25,-1.2 -.25,.3 -.25,.7 -.25,-1.4 -.25,-.2 -.25,.1 -.25,1.6 -.25,.3 -.25,-.2 -.25,-.2 -.25,.5 -.25,-.2 -.25,-.5 -.25,-.9 -.25,.5 -.25,-.8 -.25,-.5 -.25,1.9 -.25,.2 -.25,-.9 -.25,.2 -.25,-1.6 -.25,.4 -.25,.8 -.25,.4 -.25,-1.8 -.25,1.6 -.25,.6 -.25,-.5 -.25,-.1 -.25,-.3 -.25,1.1 -.25,-.4 -.25,-.1 -.25,-1.6 -.25,.9 -.25,-.4 -.25,.5 -.25,.6 -.25,-1.1 -.25,-.6 -.25,1.5 -.25,-1.7 -.25,0 -.25,.6 -.25,.5 -.25,-.5 -.25,1.1 -.25,-.7 -.25,1 -.25,-1.6 -.25,1.2 -.25,.1 -.25,-1.8 -.25,.6 -.25,.9 -.25,-.1 -.25,-.7 -.25,1.6 -.25,-.7 -.25,-1.2 -.25,1.2 -.25,-.2 -.25,.5 -.25,-.6 -.25,.2 -.25,1.1 -.25,-1.8 -.25,1.1 -.25,-.9 -.25,1.2 -.25,.5 -.25,0 -.25,-2 -.25,.4 -.25,.8 -.25,1.1 -.25,-1.9 -.25,.6 -.25,-1 -.25,1.5 -.25,-.7 -.25,-.5 -.25,1.7 -.25,-1 -.25,-.1 -.25,1.6 -.25,-1.6 -.25,0 -.25,1.8 -.25,-.4 -.25,-1.1 -.25,.7 -.25,.7 -.25,.4 -.25,-.9 -.25,.9 -.25,-.9 -.25,.1 -.25,-.8 -.25,.5 -.25,-.3 -.25,.8 -.25,-.6 -.25,1 -.25,-.4 -.25,-.3 -.25,1.1 -.25,-.9 -.25,-.3 -.25,0 -.25,.7 -.25,1.3 -.25,-2.1 -.25,2.1 -.25,-1.1 -.25,.6 -.25,0 -.25,.2 -.25,.6 -.25,-2.3 -.25,.7 -.25,.1 -.25,1 -.25,-1.3 -.25,0 -.25,.9 -.25,-1.3 -.25,1.8 -.25,-.1 -.25,.1 -.25,.1 -.25,.4 -.25,-.7 -.25,-1.5 -.25,-.2 -.25,2.2 -.25,-2.1 -.25,1.8 -.25,-2 -.25,.2 -.25,1.6 -.25,.2 -.25,-.4 -.25,-1.4 -.25,.3 -.25,1.6 -.25,.1 -.25,-1.3 -.25,-1 -.25,1.2 -.25,-.2 -.25,-.2 -.25,.2 -.25,-.2 -.25,.9 -.25,0 -.25,-1.1 -.25,-.8 -.25,1.6 -.25,-1.6 -.25,.2 -.25,1 -.25,-.7 -.25,-.1 -.25,-.6 -.25,2.3 -.25,-2.3 -.25,-.2 -.25,1.9 -.25,-1 -.25,-.4 -.25,-.6 -.25,1.5 -.25,.4 -.25,.3 -.25,-2 -.25,.9 -.25,-.5 -.25,.3 -.25,-.6 -.25,1 -.25,-.6 -.25,.7 -.25,-1.3 -.25,-.4 -.25,2.3 -.25,0 -.25,0 -.25,-.3 -.25,-.6 -.25,-.9 -.25,.1 -.25,1 -.25,.2 -.25,.5 -.25,-1.3 -.25,1.2 -.25,-2.3 -.25,2.4 -.25,-1.3 -.25,-.1 -.25,1.1 -.25,-1.7 -.25,1.8 -.25,0 -.25,-1.6 -.25,1.7 -.25,-.7 -.25,-.8 -.25,1.7 -.25,-1.4 -.25,1.4 -.25,0 -.25,-1.3 -.25,1 -.25,-1.3 -.25,1.6 -.25,-1.2 -.25,.7 -.25,.5 -.25,-1.2 -.25,.2 -.25,0 -.25,.7 -.25,-.9 -.25,1.1 -.25,-1.6 -.25,1.8 -.25,-.1 -.25,-.1 -.25,0 -.25,-1.5 -.25,1 -.25,.4 -.25,1.1 -.25,-1.9 -.25,.5 -.25,1.4 -.25,-1 -.25,.2 -.25,-.4 -.25,1.1 -.25,-1.5 -.25,-.7 -.25,1.5 -.25,-1.1 -.25,1.1 -.25,-.8 -.25,.5 -.25,1 -.25,-.4 -.25,-.3 -.25,.7 -.25,-1.5 -.25,.3 -.25,-.9 -.25,2 -.25,-1.5 -.25,1.4 -.25,-.3 -.25,.4 -.25,-.1 -.25,-.5 -.25,.4 -.25,-.5 -.25,-.2 -.25,-.7 -.25,.4 -.25,.3 -.25,.8 -.25,-2.2 -.25,1.9 -.25,-1.2 -.25,-.1 -.25,.7 -.25,0 -.25,.3 -.25,-1.5 -.25,1.2 -.25,-.3 -.25,-.5 -.25,.3 -.25,-.1 -.25,.5 -.25,.4 -.25,-2 -.25,-.7 -.25,1.5 -.25,-.7 -.25,-.4Z" fill="#2a2a2b"/><path d="M0,12.1l.25,0 .25,.6 .25,-1 .25,.8 .25,-.3 .25,-.1 .25,.4 .25,-.9 .25,.2 .25,.8 .25,-.7 .25,.7 .25,-.6 .25,-.5 .25,0 .25,.1 .25,-.2 .25,1 .25,-.1 .25,-.3 .25,.1 .25,-.1 .25,-.2 .25,-.4 .25,-.1 .25,-.1 .25,1 .25,-1 .25,.5 .25,.4 .25,-.4 .25,.6 .25,-1.2 .25,.3 .25,.7 .25,-.7 .25,.8 .25,0 .25,-.3 .25,-.8 .25,-.1 .25,1.1 .25,.1 .25,-.5 .25,.3 .25,-.9 .25,-.1 .25,.7 .25,-.2 .25,-.1 .25,0 .25,.1 .25,-.2 .25,.4 .25,-.2 .25,.6 .25,-.7 .25,-.1 .25,.7 .25,-.5 .25,.1 .25,-.4 .25,.8 .25,-1.1 .25,.6 .25,.2 .25,0 .25,-.4 .25,.3 .25,.4 .25,-.9 .25,.6 .25,0 .25,-.2 .25,.4 .25,-.3 .25,-.1 .25,.3 .25,-.6 .25,.3 .25,.4 .25,-.1 .25,-.8 .25,.7 .25,-.5 .25,.4 .25,.1 .25,0 .25,-.2 .25,0 .25,.3 .25,-.9 .25,-.1 .25,.1 .25,.9 .25,-.8 .25,.4 .25,.2 .25,.4 .25,-.3 .25,.3 .25,-.8 .25,-.2 .25,.4 .25,-.2 .25,.5 .25,-.2 .25,-.5 .25,.7 .25,-.6 .25,.1 .25,.7 .25,-.7 .25,0 .25,0 .25,1 .25,-1.1 .25,.8 .25,-.3 .25,0 .25,.6 .25,-.1 .25,.1 .25,-1 .25,.5 .25,.2 .25,-.4 .25,.4 .25,0 .25,-.2 .25,.2 .25,.2 .25,-.5 .25,.3 .25,-.3 .25,.4 .25,-.4 .25,0 .25,.5 .25,-.5 .25,.4 .25,-.6 .25,.6 .25,-.4 .25,.4 .25,-.4 .25,-.1 .25,.3 .25,.1 .25,0 .25,.5 .25,.2 .25,-.1 .25,-.1 .25,-.7 .25,0 .25,0 .25,.3 .25,.7 .25,-.6 .25,.5 .25,-.9 .25,.7 .25,-.6 .25,.8 .25,-.5 .25,.3 .25,0 .25,0 .25,-.1 .25,.1 .25,.3 .25,-.7 .25,.3 .25,-.1 .25,.6 .25,-.7 .25,.3 .25,-.2 .25,.5 .25,-.3 .25,.4 .25,-.8 .25,.3 .25,-.2 .25,.7 .25,.3 .25,-.4 .25,0 .25,-.4 .25,-.3 .25,.5 .25,-.3 .25,.4 .25,-.2 .25,.4 .25,-.7 .25,.9 .25,-.6 .25,-.2 .25,.8 .25,0 .25,-.5 .25,-.2 .25,0 .25,.6 .25,.4 .25,-.9 .25,.6 .25,-.4 .25,.4 .25,-.1 .25,-.1 .25,.2 .25,.3 .25,-.6 .25,-.3 .25,1 .25,-.3 .25,-.5 .25,.1 .25,-.1 .25,0 .25,.1 .25,.7 .25,-.3 .25,-.4 .25,.6 .25,-.5 .25,-.3 .25,.9 .25,0 .25,-.7 .25,.2 .25,.1 .25,.4 .25,-.7 .25,.2 .25,.3 .25,-.1 .25,.4 .25,-.2 .25,-.1 .25,-.1 .25,-.4 .25,-.1 .25,.7 .25,.2 .25,-.8 .25,.7 .25,-.7 .25,0 .25,.7 .25,0 .25,-.5 .25,.4 .25,.2 .25,-1 .25,.6 .25,-.2 .25,-.5 .25,.8 .25,-.2 .25,-.3 .25,-.1 .25,.3 .25,.1 .25,-.1 .25,0 .25,.1 .25,-.6 .25,.9 .25,-.6 .25,.3 .25,.4 .25,-1.1 .25,.1 .25,.9 .25,-.6 .25,-.1 .25,.4 .25,-.7 .25,.6 .25,-.1 .25,.5 .25,-.2 .25,-.3 .25,-.1 .25,-.1 .25,.2 .25,0 .25,-.6 .25,.6 .25,-.2 .25,.4 .25,0 .25,.1 .25,-.1 .25,0 .25,0 .25,0 .25,-.4 .25,.5 .25,-.5 .25,.5 .25,-.5 .25,-.7 .25,1.1 .25,-.1 .25,-.3 .25,.4 .25,-.3 .25,-.2 .25,.1 .25,.1 .25,-.5 .25,.6 .25,-1 .25,1.1 .25,-.1 .25,0 .25,-.7 .25,.5 .25,-.3 .25,-.6 .25,1.1 .25,-.7 .25,.6 .25,-1 .25,.6 .25,-.4 .25,.6 .25,-.7 .25,.2 .25,.2 .25,.2 .25,-.3 .25,.3 .25,-.5 .25,.2 .25,.3 .25,.1 .25,-.9 .25,.8 .25,-.9 .25,0 .25,.5 .25,-.4 .25,.4 .25,0 .25,.3 .25,0 .25,-.7 .25,.7 .25,-.7 .25,.8 .25,-1.2 .25,.5 .25,-.3 .25,0 .25,.7 .25,.1 .25,0 .25,-1.1 .25,.1 .25,.5 .25,-.5 .25,.3 .25,-.3 .25,.3 .25,.6 .25,-.6 .25,.4 .25,-.3 .25,.5 .25,-.5 .25,-.1 .25,.1 .25,-.2 .25,.3 .25,0 .25,.3 .25,-.1 .25,-.7 .25,-.3 .25,.1 .25,.6 .25,-.6 .25,.5 .25,.1 .25,-.7 .25,0 .25,1 .25,-.2 .25,-.4 .25,-.2 .25,.4 .25,-.4 .25,.6 .25,0 .25,.2 .25,-.8 .25,-.3 .25,.2 .25,.8 .25,-.4 .25,-.1 .25,-.3 .25,.4 .25,-.4 .25,.7 .25,.3 .25,-.6 .25,.4 .25,0 .25,-.4 .25,-.3 .25,.9 .25,0 .25,-.4 .25,-.2 .25,.3 .25,-.6 .25,.6 .25,-.2 .25,-.3 .25,-.1 .25,.8 .25,-.8 .25,0 .25,.6 .25,.4 .25,-1.1 .25,.5 .25,-.5 .25,.4 .25,.1 .25,.4 .25,-1 .25,.8 .25,-.1 .25,0 .25,.4 .25,-.4 .25,-.4 .25,-.1 .25,1.1 .25,-.6 .25,.3 .25,-.8 .25,.4 .25,.1 .25,-.5 .25,1 .25,0 .25,-.8 .25,.7 .25,-.8 .25,.7 .25,.3 .25,-1 .25,.9 .25,.2 .25,-.8 .25,.2 .25,.7 .25,-1.1 .25,.8 .25,.1 .25,.2 .25,-1 .25,0 .25,0 .25,.4 .25,.7 .25,-.1 .25,-.8 .25,1 .25,-.6 .25,.5 .25,-1 .25,1 .25,0 .25,-.9 .25,.9 .25,-1 .25,1 .25,-.9 .25,.3 .25,.9 .25,-.9 .25,.2 .25,.1 .25,0 .25,.4 .25,-.8 .25,.9 .25,-.8 .25,.7 .25,.3 .25,-.4 .25,.3 .25,-.8 .25,-.2 .25,.6 .25,.5 .25,-.4 .25,-.2 .25,.2 .25,.2 .25,-.3 .25,-.4 .25,.1 .25,-.1 .25,1 .25,-.7 .25,.1 .25,-.4 .25,.6 .25,-.4 .25,.4 .25,-.1 .25,.3 .25,-.4 .25,-.1 .25,-.2 .25,1 .25,-.8 .25,0 .25,.6 .25,-.1 .25,.1 .25,-.6 .25,.9 .25,-.2 .25,.3 .25,-.3 .25,.4 .25,-1.1 .25,.3 .25,-.1 .25,.4 .25,.4 .25,-.3 .25,-.6 .25,.9 .25,-.5 .25,.7 .25,0 .25,-.2 .25,-.2 .25,-.1 .25,-.2 .25,.6 .25,-.7 .25,.3 .25,-.6 .25,1.2 .25,-.5 .25,-.5 .25,.5 .25,-.6 .25,.6 .25,-.3 .25,-.3 .25,.4 .25,.4 .25,-.7 .25,.7 .25,-.5 .25,.6 .25,-.9 .25,.5 .25,.2 .25,-.7 .25,.2 .25,.8 .25,-.3 .25,-.7 .25,.1 .25,.8 .25,-.3 .25,.3 .25,-.4 .25,-.4 .25,.9 .25,-.4 .25,.2 .25,-.6 .25,.7 .25,-.4 .25,.2 .25,.1 .25,-.5 .25,-.2 .25,.3 .25,-.1 .25,.6 .25,-.9 .25,.3 .25,-.4 .25,.8 .25,-.9 .25,0 .25,.9 .25,-.2 .25,-.3 .25,.1 .25,0 .25,-.4 .25,.4 .25,-.4 .25,.8 .25,-.5 .25,-.4 .25,.4 .25,-.4 .25,.7 .25,-.5 .25,.4 .25,-.3 .25,-.2 .25,.4 .25,-.2 .25,-.3 .25,.4 .25,0 .25,.3 .25,-.4 .25,-.1 .25,.5 .25,-1 .25,.5 .25,.5 .25,-.3 .25,.2 .25,-.4 .25,.2 .25,.1 .25,-.4 .25,.3 .25,-.7 .25,-.1 .25,.2 .25,.6 .25,-1 .25,.3 .25,.1 .25,.2 .25,-.5 .25,.4 .25,.1 .25,.2 .25,-.4 .25,.6 .25,-.7 .25,-.2 .25,-.2 .25,.2 .25,.8 .25,-.8 .25,.6 .25,-.9 .25,.6 .25,.3 .25,-.6 .25,.6 .25,-.6 .25,.6 .25,.1 .25,-.4 .25,-.8 .25,.9 .25,.3 .25,-.9 .25,.8 .25,-.3 .25,.2 .25,-.3 .25,-.1 .25,.1 .25,-.2 .25,.2 .25,-.1 .25,.1 .25,-.3 .25,.3 .25,.3 .25,-.2 .25,-.1 .25,-.5 .25,-.1 .25,.3 .25,.5 .25,-.6 .25,-.5 .25,.4 .25,.5 .25,0 .25,-1 .25,.6 .25,.3 .25,-.2 .25,-.1 .25,-.3 .25,-.3 .25,.3 .25,.2 .25,.2 .25,-.4 .25,-.4 .25,0 .25,1.1 .25,-.6 .25,0 .25,.6 .25,-.6 .25,.6 .25,-.8 .25,.3 .25,-.1 .25,.1 .25,.5 .25,-.9 .25,.3 .25,.2 .25,-.5 .25,.3 .25,.2 .25,.1 .25,-.4 .25,.5 .25,0 .25,-.1 .25,-.4 .25,.2 .25,-.4 .25,.5 .25,.1 .25,0 .25,-.4 .25,-.2 .25,0 .25,.5 .25,-.1 .25,0 .25,-.3 .25,.6 .25,-.7 .25,-.2 .25,.2 .25,.8 .25,-1 .25,.1 .25,.5 .25,.3 .25,-.2 .25,-.1 .25,.3 .25,-.8 .25,.6 .25,.2 .25,-.8 .25,.9 .25,0 .25,-.2 .25,.2 .25,-.4 .25,.1 .25,-.4 .25,.1 .25,.8 .25,-.1 .25,-.9 .25,0 .25,1 .25,.1 .25,-.3 .25,-.8 .25,.1 .25,.3 .25,-.3 .25,.7 .25,-.3 .25,.6 .25,.1 .25,-.3 .25,0 .25,0 .25,-.1 .25,.2 .25,-.6 .25,0 .25,.8 .25,-.8 .25,.5 .25,-.5 .25,.6 .25,.4 .25,-.5 .25,0 .25,-.3 .25,-.3 .25,.2 .25,.1 .25,.8 .25,-.9 .25,0 .25,1 .25,0 .25,-.4 .25,-.4 .25,.1 .25,.2 .25,-.4 .25,1 .25,-.2 .25,.3 .25,-.8 .25,.2 .25,.4 .25,-.6 .25,0 .25,.9 .25,-.6 .25,.4 .25,.1 .25,-.4 .25,-.2 .25,-.1 .25,-.1 .25,.7 .25,-.7 .25,.6 .25,-.4 .25,.5 .25,-.5 .25,.8 .25,-.7 .25,.4 .25,-.1 .25,.5 .25,-.6 .25,-.4 .25,.6 .25,-.2 .25,.1 .25,.1 .25,.3 .25,-.1 .25,.3 .25,-.4 .25,.3 .25,.1 .25,-.6 .25,.5 .25,-.9 .25,.5 .25,-.1 .25,0 .25,.3 .25,.5 .25,-.4 .25,-.3 .25,.1 .25,0 .25,.6 .25,-.4 .25,.1 .25,.3 .25,0 .25,-.6 .25,-.1 .25,.7 .25,-.2 .25,.2 .25,-.2 .25,-.6 .25,.8 .25,-.7 .25,-.2 .25,-.1 .25,.4 .25,.4 .25,.2 .25,-.8 .25,.1 .25,-.2 .25,.3 .25,.7 .25,-.4 .25,-.3 .25,-.1 .25,.1 .25,.2 .25,-.4 .25,.6 .25,.1 .25,.3 .25,-.6 .25,-.1 .25,-.5 .25,.5 .25,-.4 .25,.1 .25,-.2 .25,.7 .25,-.3 .25,-.1 .25,-.1 .25,.6 .25,-.4 .25,.1 .25,-.1 .25,.4 .25,-.7 .25,.7 .25,-.5 .25,.1 .25,-.1 .25,.4 .25,-.1 .25,-.4 .25,.8 .25,-1 .25,.4 .25,.6 .25,-.7 .25,.4 .25,.2 .25,-.2 .25,-.6 .25,0 .25,.3 .25,-.4 .25,.1 .25,-.1 .25,.3 .25,.6 .25,-1 .25,.7 .25,-.1 .25,-.1 .25,-.7 .25,.9 .25,.2 .25,-1 .25,.6 .25,-.5 .25,.2 .25,.2 .25,-.7 .25,1 .25,-.8 .25,.8 .25,0 .25,-.4 .25,-.5 .25,.1 .25,.6 .25,-.6 .25,.5 .25,.1 .25,.1 .25,-.9 .25,.8 .25,-.6 .25,-.3 .25,0 .25,.1 .25,.9 .25,-.7 .25,.6 .25,-1 .25,.1 .25,-.1 .25,.4 .25,.6 .25,-.3 .25,.2 .25,-.6 .25,-.4 .25,0 .25,.7 .25,-.6 .25,0 .25,.2 .25,.4 .25,-.6 .25,-.3 .25,0 .25,.1 .25,-.1 .25,.3 .25,-.2 .25,-.1 .25,1 .25,-.3 .25,0 .25,0 .25,-.9 .25,.1 .25,.2 .25,.5 .25,-.3 .25,-.3 .25,.2 .25,-.1 .25,.5 .25,0 .25,-.9 .25,0 .25,0 .25,.2 .25,.7 .25,-.5 .25,-.1 .25,-.2 .25,.8 .25,-.6 .25,.7 .25,-1.1 .25,.3 .25,.3 .25,-.2 .25,0 .25,.3 .25,-.4 .25,-.3 .25,-.1 .25,.8 .25,.2 .25,-.9 .25,0 .25,.9 .25,-.5 .25,.2 .25,-.3 .25,-.3 .25,.3 .25,.6 .25,-.6 .25,.2 .25,-.5 .25,.9 .25,-.5 .25,.3 .25,0 .25,-.6 .25,0 .25,-.1 .25,.2 .25,-.1 .25,.1 .25,-.2 .25,0 .25,.9 .25,-1.2 .25,.2 .25,.9 .25,.1 .25,-.4 .25,-.7 .25,.6 .25,-.4 .25,.8 .25,-.9 .25,.6 .25,-.3 .25,-.4 .25,.5 .25,.3 .25,-.7 .25,0 .25,.6 .25,.3 .25,-.4 .25,.3 .25,-.8 .25,.4 .25,0 .25,.2 .25,-.5 .25,.3 .25,-.4 .25,.9 .25,-.8 .25,.9 .25,-.1 .25,-1 .25,.3 .25,-.1 .25,1 .25,-1.1 .25,.6 .25,.2 .25,-.6 .25,-.2 .25,.2 .25,.8 .25,-.5 .25,0 .25,.5 .25,-.2 .25,-.7 .25,.4 .25,.6 .25,-.8 .25,-.1 .25,0 .25,.6 .25,.4 .25,-.3 .25,.2 .25,-.1 .25,.3 .25,-.9 .25,.7 .25,.2 .25,.1 .25,-1 .25,.7 .25,.3 .25,-.7 .25,.2 .25,-.1 .25,.2 .25,-.2 .25,.7 .25,-.4 .25,.2 .25,0 .25,-.1 .25,.4 .25,-.2 .25,-.2 .25,-.7 .25,.3 .25,.5 .25,.1 .25,.1 .25,-.6 .25,.4 .25,-.2 .25,.7 .25,-.5 .25,-.6 .25,.7 .25,0 .25,0 .25,-.2 .25,-.2 .25,.6 .25,-.2 .25,.2 .25,-.1 .25,-.6 .25,.9 .25,0 .25,-.5 .25,.2 .25,-.2 .25,.3 .25,.2 .25,-.4 .25,.1 .25,.4 .25,-.7 .25,.7 .25,-.3 .25,.2 .25,.2 .25,-.5 .25,0 .25,-.4 .25,1 .25,-.2 .25,-.7 .25,.2 .25,-.3 .25,.4 .25,-.2 .25,.7 .25,-.3 .25,.2 .25,-.5 .25,.4 .25,.4 .25,.1 .25,-.6 .25,.5 .25,-.3 .25,.4 .25,-.4 .25,-.3 .25,.3 .25,0 .25,.3 .25,.2 .25,-.9 .25,.4 .25,-.2 .25,-.1 .25,-.1 .25,.3 .25,-.2 .25,.2 .25,-.2 .25,.7 .25,-.9 .25,.9 .25,-.9 .25,.2 .25,.7 .25,-.1 .25,-.2 .25,.4 .25,-.6 .25,.7 .25,-.2 .25,-.6 .25,0 .25,.4 .25,-.5 .25,0 .25,.1 .25,.4 .25,.1 .25,.1 .25,0 .25,.2 .25,-.5 .25,-.5 .25,.8 .25,-.8 .25,.3 .25,.8 .25,-.4 .25,-.1 .25,.1 .25,.1 .25,-.3 .25,.1 .25,0 .25,-.6 .25,.1 .25,-.1 .25,.4 .25,.5 .25,-.9 .25,.4 .25,.5 .25,-1.1 .25,.4 .25,0 .25,.5 .25,-.9 .25,.7L314.50,22.6l-.25,.7 -.25,-.9 -.25,.5 -.25,0 -.25,.4 -.25,-1.1 -.25,.5 -.25,.4 -.25,-.9 -.25,.5 -.25,.4 -.25,-.1 -.25,.1 -.25,-.6 -.25,0 -.25,.1 -.25,-.3 -.25,.1 -.25,.1 -.25,-.1 -.25,-.4 -.25,.8 -.25,.3 -.25,-.8 -.25,.8 -.25,-.5 -.25,-.5 -.25,.2 -.25,0 -.25,.1 -.25,.1 -.25,.4 -.25,.1 -.25,0 -.25,-.5 -.25,.4 -.25,0 -.25,-.6 -.25,-.2 -.25,.7 -.25,-.6 -.25,.4 -.25,-.2 -.25,-.1 -.25,.7 -.25,.2 -.25,-.9 -.25,.9 -.25,-.9 -.25,.7 -.25,-.2 -.25,.2 -.25,-.2 -.25,.3 -.25,-.1 -.25,-.1 -.25,-.2 -.25,.4 -.25,-.9 -.25,.2 -.25,.3 -.25,0 -.25,.3 -.25,-.3 -.25,-.4 -.25,.4 -.25,-.3 -.25,.5 -.25,-.6 -.25,.1 -.25,.4 -.25,.4 -.25,-.5 -.25,.2 -.25,-.3 -.25,.7 -.25,-.2 -.25,.4 -.25,-.3 -.25,.2 -.25,-.7 -.25,-.2 -.25,1 -.25,-.4 -.25,0 -.25,-.5 -.25,.2 -.25,.2 -.25,-.3 -.25,.7 -.25,-.7 -.25,.4 -.25,.1 -.25,-.4 -.25,.2 -.25,.3 -.25,-.2 -.25,.2 -.25,-.5 -.25,0 -.25,.9 -.25,-.6 -.25,-.1 -.25,.2 -.25,-.2 -.25,.6 -.25,-.2 -.25,-.2 -.25,0 -.25,0 -.25,.7 -.25,-.6 -.25,-.5 -.25,.7 -.25,-.2 -.25,.4 -.25,-.6 -.25,.1 -.25,.1 -.25,.5 -.25,.3 -.25,-.7 -.25,-.2 -.25,-.2 -.25,.4 -.25,-.1 -.25,0 -.25,.2 -.25,-.4 -.25,.7 -.25,-.2 -.25,.2 -.25,-.1 -.25,.2 -.25,-.7 -.25,.3 -.25,.7 -.25,-1 -.25,.1 -.25,.2 -.25,.7 -.25,-.9 -.25,.3 -.25,-.1 -.25,.2 -.25,-.3 -.25,.4 -.25,.6 -.25,0 -.25,-.1 -.25,-.8 -.25,.6 -.25,.4 -.25,-.7 -.25,-.2 -.25,.5 -.25,0 -.25,-.5 -.25,.8 -.25,.2 -.25,-.2 -.25,-.6 -.25,.2 -.25,.6 -.25,-1.1 -.25,1 -.25,-.1 -.25,.3 -.25,-1 -.25,-.1 -.25,.9 -.25,-.8 -.25,.9 -.25,-.4 -.25,.3 -.25,-.5 -.25,.2 -.25,0 -.25,.4 -.25,-.8 -.25,.3 -.25,-.4 -.25,.3 -.25,.6 -.25,0 -.25,-.7 -.25,.3 -.25,.5 -.25,-.4 -.25,-.3 -.25,.6 -.25,-.9 -.25,.8 -.25,-.4 -.25,.6 -.25,-.7 -.25,-.4 -.25,.1 -.25,.9 -.25,.2 -.25,-1.2 -.25,.9 -.25,0 -.25,-.2 -.25,.1 -.25,-.1 -.25,.2 -.25,-.1 -.25,0 -.25,-.6 -.25,0 -.25,.3 -.25,-.5 -.25,.9 -.25,-.5 -.25,.2 -.25,-.6 -.25,.6 -.25,.3 -.25,-.3 -.25,-.3 -.25,.2 -.25,-.5 -.25,.9 -.25,0 -.25,-.9 -.25,.2 -.25,.8 -.25,-.1 -.25,-.3 -.25,-.4 -.25,.3 -.25,0 -.25,-.2 -.25,.3 -.25,.3 -.25,-1.1 -.25,.7 -.25,-.6 -.25,.8 -.25,-.2 -.25,-.1 -.25,-.5 -.25,.7 -.25,.2 -.25,0 -.25,0 -.25,-.9 -.25,0 -.25,.5 -.25,-.1 -.25,.2 -.25,-.3 -.25,-.3 -.25,.5 -.25,.2 -.25,.1 -.25,-.9 -.25,0 -.25,0 -.25,-.3 -.25,1 -.25,-.1 -.25,-.2 -.25,.3 -.25,-.1 -.25,.1 -.25,0 -.25,-.3 -.25,-.6 -.25,.4 -.25,.2 -.25,0 -.25,-.6 -.25,.7 -.25,0 -.25,-.4 -.25,-.6 -.25,.2 -.25,-.3 -.25,.6 -.25,.4 -.25,-.1 -.25,.1 -.25,-1 -.25,.6 -.25,-.7 -.25,.9 -.25,.1 -.25,0 -.25,-.3 -.25,-.6 -.25,.8 -.25,-.9 -.25,.1 -.25,.1 -.25,.5 -.25,-.6 -.25,.6 -.25,.1 -.25,-.5 -.25,-.4 -.25,0 -.25,.8 -.25,-.8 -.25,1 -.25,-.7 -.25,.2 -.25,.2 -.25,-.5 -.25,.6 -.25,-1 -.25,.2 -.25,.9 -.25,-.7 -.25,-.1 -.25,-.1 -.25,.7 -.25,-1 -.25,.6 -.25,.3 -.25,-.1 -.25,.1 -.25,-.4 -.25,.3 -.25,0 -.25,-.6 -.25,-.2 -.25,.2 -.25,.4 -.25,-.7 -.25,.6 -.25,.4 -.25,-1 -.25,.8 -.25,-.4 -.25,-.1 -.25,.4 -.25,-.1 -.25,.1 -.25,-.5 -.25,.7 -.25,-.7 -.25,.4 -.25,-.1 -.25,.1 -.25,-.4 -.25,.6 -.25,-.1 -.25,-.1 -.25,-.3 -.25,.7 -.25,-.2 -.25,.1 -.25,-.4 -.25,.5 -.25,-.5 -.25,-.1 -.25,-.6 -.25,.3 -.25,.1 -.25,.6 -.25,-.4 -.25,.2 -.25,.1 -.25,-.1 -.25,-.3 -.25,-.4 -.25,.7 -.25,.3 -.25,-.2 -.25,.1 -.25,-.8 -.25,.2 -.25,.4 -.25,.4 -.25,-.1 -.25,-.2 -.25,-.7 -.25,.8 -.25,-.6 -.25,-.2 -.25,.2 -.25,-.2 -.25,.7 -.25,-.1 -.25,-.6 -.25,0 -.25,.3 -.25,.1 -.25,-.4 -.25,.6 -.25,0 -.25,.1 -.25,-.3 -.25,-.4 -.25,.5 -.25,.3 -.25,0 -.25,-.1 -.25,.5 -.25,-.9 -.25,.5 -.25,-.6 -.25,.1 -.25,.3 -.25,-.4 -.25,.3 -.25,-.1 -.25,.3 -.25,.1 -.25,.1 -.25,-.2 -.25,.6 -.25,-.4 -.25,-.6 -.25,.5 -.25,-.1 -.25,.4 -.25,-.7 -.25,.8 -.25,-.5 -.25,.5 -.25,-.4 -.25,.6 -.25,-.7 -.25,.7 -.25,-.1 -.25,-.1 -.25,-.2 -.25,-.4 -.25,.1 -.25,.4 -.25,-.6 -.25,.9 -.25,0 -.25,-.6 -.25,.4 -.25,.2 -.25,-.8 -.25,.3 -.25,-.2 -.25,1 -.25,-.4 -.25,.2 -.25,.1 -.25,-.4 -.25,-.4 -.25,0 -.25,1 -.25,0 -.25,-.9 -.25,.8 -.25,.1 -.25,.2 -.25,-.3 -.25,-.3 -.25,0 -.25,-.5 -.25,.4 -.25,.6 -.25,-.5 -.25,.5 -.25,-.8 -.25,.8 -.25,0 -.25,-.6 -.25,.2 -.25,-.1 -.25,0 -.25,0 -.25,-.3 -.25,.1 -.25,.6 -.25,-.3 -.25,.7 -.25,-.3 -.25,.3 -.25,.1 -.25,-.8 -.25,-.3 -.25,.1 -.25,1 -.25,0 -.25,-.9 -.25,-.1 -.25,.8 -.25,.1 -.25,-.4 -.25,.1 -.25,-.4 -.25,.2 -.25,-.2 -.25,0 -.25,.9 -.25,-.8 -.25,.2 -.25,.6 -.25,-.8 -.25,.3 -.25,-.1 -.25,-.2 -.25,.3 -.25,.5 -.25,.1 -.25,-1 -.25,.8 -.25,.2 -.25,-.2 -.25,-.7 -.25,.6 -.25,-.3 -.25,0 -.25,-.1 -.25,.5 -.25,0 -.25,-.2 -.25,-.4 -.25,0 -.25,.1 -.25,.5 -.25,-.4 -.25,.2 -.25,-.4 -.25,-.1 -.25,0 -.25,.5 -.25,-.4 -.25,.1 -.25,.2 -.25,.3 -.25,-.5 -.25,.2 -.25,.3 -.25,-.9 -.25,.5 -.25,.1 -.25,-.1 -.25,.3 -.25,-.8 -.25,.6 -.25,-.6 -.25,.6 -.25,0 -.25,-.6 -.25,1.1 -.25,0 -.25,-.4 -.25,-.4 -.25,.2 -.25,.2 -.25,.3 -.25,-.3 -.25,-.3 -.25,-.1 -.25,-.2 -.25,.3 -.25,.6 -.25,-1 -.25,0 -.25,.5 -.25,.4 -.25,-.5 -.25,-.6 -.25,.5 -.25,.3 -.25,-.1 -.25,-.5 -.25,-.1 -.25,-.2 -.25,.3 -.25,.3 -.25,-.3 -.25,.1 -.25,-.1 -.25,.2 -.25,-.2 -.25,.1 -.25,-.1 -.25,-.3 -.25,.2 -.25,-.3 -.25,.8 -.25,-.9 -.25,.3 -.25,.9 -.25,-.8 -.25,-.4 -.25,.1 -.25,.6 -.25,-.6 -.25,.6 -.25,-.6 -.25,.3 -.25,.6 -.25,-.9 -.25,.6 -.25,-.8 -.25,.8 -.25,.2 -.25,-.2 -.25,-.2 -.25,-.7 -.25,.6 -.25,-.4 -.25,.2 -.25,.1 -.25,.4 -.25,-.5 -.25,.2 -.25,.1 -.25,.3 -.25,-1 -.25,.6 -.25,.2 -.25,-.1 -.25,-.7 -.25,.3 -.25,-.4 -.25,.1 -.25,.2 -.25,-.4 -.25,.2 -.25,-.3 -.25,.5 -.25,.5 -.25,-1 -.25,.5 -.25,-.1 -.25,-.4 -.25,.3 -.25,0 -.25,.4 -.25,-.3 -.25,-.2 -.25,.4 -.25,-.2 -.25,-.3 -.25,.4 -.25,-.5 -.25,.7 -.25,-.4 -.25,.4 -.25,-.4 -.25,-.5 -.25,.8 -.25,-.4 -.25,.4 -.25,-.4 -.25,0 -.25,.1 -.25,-.3 -.25,-.2 -.25,.9 -.25,0 -.25,-.9 -.25,.8 -.25,-.4 -.25,.3 -.25,-.9 -.25,.6 -.25,-.1 -.25,.3 -.25,-.2 -.25,-.5 -.25,.1 -.25,.2 -.25,-.4 -.25,.7 -.25,-.6 -.25,.2 -.25,-.4 -.25,.9 -.25,-.4 -.25,-.4 -.25,.3 -.25,-.3 -.25,.8 -.25,.1 -.25,-.7 -.25,-.3 -.25,.8 -.25,.2 -.25,-.7 -.25,.2 -.25,.5 -.25,-.9 -.25,.6 -.25,-.5 -.25,.7 -.25,-.7 -.25,.4 -.25,.4 -.25,-.3 -.25,-.3 -.25,.6 -.25,-.6 -.25,.5 -.25,-.5 -.25,-.5 -.25,1.2 -.25,-.6 -.25,.3 -.25,-.7 -.25,.6 -.25,-.2 -.25,-.1 -.25,-.2 -.25,-.2 -.25,0 -.25,.7 -.25,-.5 -.25,.9 -.25,-.6 -.25,-.3 -.25,.4 -.25,.4 -.25,-.1 -.25,.3 -.25,-1.1 -.25,.4 -.25,-.3 -.25,.3 -.25,-.2 -.25,.9 -.25,-.6 -.25,.1 -.25,-.1 -.25,.6 -.25,0 -.25,-.8 -.25,1 -.25,-.2 -.25,-.1 -.25,-.4 -.25,.3 -.25,-.1 -.25,.4 -.25,-.4 -.25,.6 -.25,-.4 -.25,.1 -.25,-.7 -.25,1 -.25,-.1 -.25,.1 -.25,-.4 -.25,-.3 -.25,.2 -.25,.2 -.25,-.2 -.25,-.4 -.25,.5 -.25,.6 -.25,-.2 -.25,-.8 -.25,.3 -.25,-.4 -.25,.3 -.25,.7 -.25,-.8 -.25,.9 -.25,-.8 -.25,.4 -.25,0 -.25,.1 -.25,.2 -.25,-.9 -.25,.9 -.25,.3 -.25,-.9 -.25,1 -.25,-1 -.25,.9 -.25,-.9 -.25,0 -.25,1 -.25,-1 -.25,.5 -.25,-.6 -.25,1 -.25,-.8 -.25,-.1 -.25,.7 -.25,.4 -.25,0 -.25,0 -.25,-1 -.25,.2 -.25,.1 -.25,.8 -.25,-1.1 -.25,.7 -.25,.2 -.25,-.8 -.25,.2 -.25,.9 -.25,-1 -.25,.3 -.25,.7 -.25,-.8 -.25,.7 -.25,-.8 -.25,0 -.25,1 -.25,-.5 -.25,.1 -.25,.4 -.25,-.8 -.25,.3 -.25,-.6 -.25,1.1 -.25,-.1 -.25,-.4 -.25,-.4 -.25,.4 -.25,0 -.25,-.1 -.25,.8 -.25,-1 -.25,.4 -.25,.1 -.25,.4 -.25,-.5 -.25,.5 -.25,-1.1 -.25,.4 -.25,.6 -.25,0 -.25,-.8 -.25,.8 -.25,-.1 -.25,-.3 -.25,-.2 -.25,.6 -.25,-.6 -.25,.3 -.25,-.2 -.25,-.4 -.25,0 -.25,.9 -.25,-.3 -.25,-.4 -.25,0 -.25,.4 -.25,-.6 -.25,.3 -.25,.7 -.25,-.4 -.25,.4 -.25,-.3 -.25,-.1 -.25,-.4 -.25,.8 -.25,.2 -.25,-.3 -.25,-.8 -.25,.2 -.25,0 -.25,.6 -.25,-.4 -.25,.4 -.25,-.2 -.25,-.4 -.25,-.2 -.25,1 -.25,0 -.25,-.7 -.25,.1 -.25,.5 -.25,-.6 -.25,.6 -.25,.1 -.25,-.3 -.25,-.7 -.25,-.1 -.25,.3 -.25,0 -.25,.3 -.25,-.2 -.25,.1 -.25,-.1 -.25,-.5 -.25,.5 -.25,-.3 -.25,.4 -.25,-.6 -.25,.6 -.25,.3 -.25,-.3 -.25,.3 -.25,-.5 -.25,.5 -.25,.1 -.25,-1.1 -.25,0 -.25,.1 -.25,.7 -.25,0 -.25,-.3 -.25,.5 -.25,-1.2 -.25,.8 -.25,-.7 -.25,.7 -.25,-.7 -.25,0 -.25,.3 -.25,0 -.25,.4 -.25,-.4 -.25,.5 -.25,0 -.25,-.9 -.25,.8 -.25,-.9 -.25,.1 -.25,.3 -.25,.2 -.25,-.5 -.25,.3 -.25,-.3 -.25,.2 -.25,.2 -.25,.2 -.25,-.7 -.25,.6 -.25,-.4 -.25,.6 -.25,-1 -.25,.6 -.25,-.7 -.25,1.1 -.25,-.6 -.25,-.3 -.25,.5 -.25,-.7 -.25,0 -.25,-.1 -.25,1.1 -.25,-1 -.25,.6 -.25,-.5 -.25,.1 -.25,.1 -.25,-.2 -.25,-.3 -.25,.4 -.25,-.3 -.25,-.1 -.25,1.1 -.25,-.7 -.25,-.5 -.25,.5 -.25,-.5 -.25,.5 -.25,-.4 -.25,0 -.25,0 -.25,0 -.25,-.1 -.25,.1 -.25,0 -.25,.4 -.25,-.2 -.25,.6 -.25,-.6 -.25,0 -.25,.2 -.25,-.1 -.25,-.1 -.25,-.3 -.25,-.2 -.25,.5 -.25,-.1 -.25,.6 -.25,-.7 -.25,.4 -.25,-.1 -.25,-.6 -.25,.9 -.25,.1 -.25,-1.1 -.25,.4 -.25,.3 -.25,-.6 -.25,.9 -.25,-.6 -.25,.1 -.25,0 -.25,-.1 -.25,.1 -.25,.3 -.25,-.1 -.25,-.3 -.25,-.2 -.25,.8 -.25,-.5 -.25,-.2 -.25,.6 -.25,-1 -.25,.2 -.25,.4 -.25,-.5 -.25,0 -.25,.7 -.25,0 -.25,-.7 -.25,.7 -.25,-.8 -.25,.2 -.25,.7 -.25,-.1 -.25,-.4 -.25,-.1 -.25,-.1 -.25,-.2 -.25,.4 -.25,-.1 -.25,.3 -.25,.2 -.25,-.7 -.25,.4 -.25,.1 -.25,.2 -.25,-.7 -.25,0 -.25,.9 -.25,-.3 -.25,-.5 -.25,.6 -.25,-.4 -.25,-.3 -.25,.7 -.25,.1 -.25,0 -.25,-.1 -.25,.1 -.25,-.5 -.25,-.3 -.25,1 -.25,-.3 -.25,-.6 -.25,.3 -.25,.2 -.25,-.1 -.25,-.1 -.25,.4 -.25,-.4 -.25,.6 -.25,-.9 -.25,.4 -.25,.6 -.25,0 -.25,-.2 -.25,-.5 -.25,0 -.25,.8 -.25,-.2 -.25,-.6 -.25,.9 -.25,-.7 -.25,.4 -.25,-.2 -.25,.4 -.25,-.3 -.25,.5 -.25,-.3 -.25,-.4 -.25,0 -.25,-.4 -.25,.3 -.25,.7 -.25,-.2 -.25,.3 -.25,-.8 -.25,.4 -.25,-.3 -.25,.5 -.25,-.2 -.25,.3 -.25,-.7 -.25,.6 -.25,-.1 -.25,.3 -.25,-.7 -.25,.3 -.25,.1 -.25,-.1 -.25,0 -.25,0 -.25,.3 -.25,-.5 -.25,.8 -.25,-.6 -.25,.7 -.25,-.9 -.25,.5 -.25,-.6 -.25,.7 -.25,.3 -.25,0 -.25,0 -.25,-.7 -.25,-.1 -.25,-.1 -.25,.2 -.25,.5 -.25,0 -.25,.1 -.25,.3 -.25,-.1 -.25,-.4 -.25,.4 -.25,-.4 -.25,.6 -.25,-.6 -.25,.4 -.25,-.5 -.25,.5 -.25,0 -.25,-.4 -.25,.4 -.25,-.3 -.25,.3 -.25,-.5 -.25,.2 -.25,.2 -.25,-.2 -.25,0 -.25,.4 -.25,-.4 -.25,.2 -.25,.5 -.25,-1 -.25,.1 -.25,-.1 -.25,.6 -.25,0 -.25,-.3 -.25,.8 -.25,-1.1 -.25,1 -.25,0 -.25,0 -.25,-.7 -.25,.7 -.25,.1 -.25,-.6 -.25,.7 -.25,-.5 -.25,-.2 -.25,.5 -.25,-.2 -.25,.4 -.25,-.2 -.25,-.8 -.25,.3 -.25,-.3 -.25,.4 -.25,.2 -.25,.4 -.25,-.8 -.25,.9 -.25,.1 -.25,-.1 -.25,-.9 -.25,.3 -.25,0 -.25,-.2 -.25,0 -.25,.1 -.25,.4 -.25,-.5 -.25,.7 -.25,-.8 -.25,-.1 -.25,.4 -.25,.3 -.25,-.6 -.25,.3 -.25,-.1 -.25,-.3 -.25,.4 -.25,-.2 -.25,0 -.25,.6 -.25,-.9 -.25,.4 -.25,.3 -.25,-.4 -.25,0 -.25,.2 -.25,.6 -.25,-1.1 -.25,.8 -.25,-.4 -.25,.1 -.25,-.5 -.25,.7 -.25,-.1 -.25,-.7 -.25,.6 -.25,-.2 -.25,.4 -.25,-.2 -.25,.1 -.25,0 -.25,-.1 -.25,-.2 -.25,.7 -.25,-.1 -.25,-.9 -.25,.3 -.25,-.5 -.25,.1 -.25,1.1 -.25,-.1 -.25,-.8 -.25,-.3 -.25,0 -.25,.8 -.25,-.7 -.25,.7 -.25,.3 -.25,-1.2 -.25,.6 -.25,-.4 -.25,.4 -.25,.5 -.25,-1 -.25,1 -.25,-.1 -.25,-.1 -.25,-.4 -.25,-.2 -.25,-.1 -.25,.1 -.25,-.3 -.25,-.1 -.25,1 -.25,-.2 -.25,.1 -.25,0 -.25,-.5 -.25,-.6 -.25,.7 -.25,-.7 -.25,.8 -.25,.2 -.25,-.9 -.25,.4 -.25,-.1 -.25,-.3 -.25,.8 -.25,-1 -.25,.6 -.25,0Z" fill="#323234"/></svg><svg style="position:absolute;left:218.00px;top:162.60px;" width="314.50" height="35.20" viewBox="0 0 314.50 35.20"><rect x="0" y="0" width="314.50" height="35.20" fill="#1f777c"/><rect x="0" y="0" width="314.50" height="0.8" fill="#2a8c92"/><path d="M0,12.4l.25,.2 .25,.4 .25,-.7 .25,.7 .25,-.2 .25,-.6 .25,.6 .25,-.1 .25,-.2 .25,.6 .25,0 .25,-.4 .25,0 .25,-.3 .25,.5 .25,.2 .25,.4 .25,-.3 .25,-.6 .25,-.1 .25,-.3 .25,.3 .25,-.2 .25,.6 .25,.3 .25,-.3 .25,-.3 .25,.2 .25,.5 .25,.2 .25,.2 .25,0 .25,-.6 .25,.4 .25,-.6 .25,-.4 .25,.7 .25,.1 .25,0 .25,.5 .25,-.1 .25,-.6 .25,.5 .25,-1 .25,-.5 .25,-1.1 .25,-1.4 .25,0 .25,.7 .25,.7 .25,.1 .25,1 .25,.8 .25,0 .25,-.4 .25,.3 .25,.3 .25,-.1 .25,.6 .25,-.2 .25,.3 .25,-.2 .25,-.6 .25,.6 .25,-.1 .25,-.1 .25,.4 .25,.2 .25,-.7 .25,-.4 .25,.6 .25,-.2 .25,-.3 .25,.5 .25,0 .25,.5 .25,.1 .25,-.2 .25,-.1 .25,-.2 .25,.5 .25,.1 .25,-.4 .25,0 .25,.2 .25,.1 .25,-.4 .25,.1 .25,.6 .25,-.2 .25,.2 .25,.1 .25,.2 .25,0 .25,.2 .25,.2 .25,-.2 .25,.3 .25,-.3 .25,.4 .25,-.3 .25,-.2 .25,.1 .25,-.1 .25,.3 .25,-.1 .25,.2 .25,.2 .25,-.3 .25,.2 .25,.2 .25,-.2 .25,.2 .25,0 .25,.3 .25,-.1 .25,.2 .25,.3 .25,-.3 .25,.3 .25,-.2 .25,-.1 .25,.1 .25,.3 .25,.1 .25,0 .25,0 .25,0 .25,-.3 .25,.1 .25,.2 .25,-.1 .25,.1 .25,0 .25,0 .25,-.1 .25,.1 .25,0 .25,-2.7 .25,-6 .25,1.6 .25,.5 .25,1.3 .25,.2 .25,.1 .25,-.1 .25,.5 .25,.8 .25,.7 .25,-.2 .25,.4 .25,-.3 .25,.4 .25,-.5 .25,.3 .25,.5 .25,.1 .25,-.2 .25,-.3 .25,.1 .25,.2 .25,-.1 .25,-.6 .25,0 .25,-.4 .25,.8 .25,-.6 .25,-.2 .25,.2 .25,.2 .25,.1 .25,-.2 .25,.6 .25,0 .25,0 .25,.3 .25,-.2 .25,-.1 .25,.5 .25,-.2 .25,.1 .25,.1 .25,0 .25,.4 .25,-.1 .25,.1 .25,-.3 .25,.4 .25,-.3 .25,0 .25,0 .25,-.1 .25,.6 .25,0 .25,0 .25,0 .25,.2 .25,.4 .25,.2 .25,-.1 .25,.2 .25,.2 .25,.1 .25,-.1 .25,0 .25,.3 .25,-.2 .25,.1 .25,-.1 .25,.3 .25,-.2 .25,.1 .25,-.2 .25,-.2 .25,0 .25,.3 .25,.1 .25,.2 .25,-2.7 .25,-4.9 .25,1.7 .25,1.4 .25,.9 .25,-.5 .25,-.3 .25,.6 .25,0 .25,.3 .25,.1 .25,.3 .25,-.1 .25,.4 .25,.2 .25,-.1 .25,.3 .25,-.1 .25,-.5 .25,.5 .25,.3 .25,-.4 .25,.4 .25,.1 .25,-.6 .25,-.1 .25,.3 .25,.4 .25,.1 .25,0 .25,-.5 .25,-.4 .25,-.2 .25,-.2 .25,-.2 .25,0 .25,-.1 .25,0 .25,.7 .25,.4 .25,.3 .25,-.1 .25,0 .25,.2 .25,-.3 .25,.2 .25,.3 .25,.1 .25,0 .25,-.1 .25,-.1 .25,.1 .25,.3 .25,0 .25,.1 .25,.2 .25,-.2 .25,.2 .25,-.2 .25,-.2 .25,.4 .25,-.2 .25,.2 .25,0 .25,-.1 .25,-.1 .25,-.2 .25,0 .25,.4 .25,0 .25,.2 .25,.3 .25,-.1 .25,.1 .25,-.3 .25,.2 .25,-.1 .25,.1 .25,.3 .25,-.1 .25,.2 .25,0 .25,.2 .25,.2 .25,-.2 .25,.2 .25,.1 .25,0 .25,0 .25,0 .25,-.3 .25,0 .25,.1 .25,-.2 .25,.1 .25,.2 .25,-.1 .25,.1 .25,.1 .25,0 .25,0 .25,0 .25,0 .25,-.2 .25,0 .25,.2 .25,-.1 .25,.1 .25,0 .25,-.2 .25,-.1 .25,-.1 .25,0 .25,.1 .25,.2 .25,0 .25,-.1 .25,.2 .25,0 .25,-.2 .25,.1 .25,-.1 .25,0 .25,-.2 .25,.3 .25,.1 .25,-.1 .25,-.1 .25,.2 .25,0 .25,0 .25,0 .25,-.2 .25,.1 .25,.1 .25,-.1 .25,0 .25,-.2 .25,-3.4 .25,-6.5 .25,1.7 .25,1.6 .25,1.7 .25,.1 .25,.7 .25,.5 .25,.1 .25,-.3 .25,.3 .25,-.2 .25,-.2 .25,.9 .25,.3 .25,-.3 .25,-.1 .25,-.2 .25,.7 .25,.1 .25,-.3 .25,-3.9 .25,.8 .25,.2 .25,1.3 .25,1.1 .25,-.3 .25,.1 .25,.6 .25,-.3 .25,.5 .25,.4 .25,.2 .25,.4 .25,-.1 .25,-.4 .25,.1 .25,-.4 .25,.6 .25,.3 .25,.3 .25,-.2 .25,.3 .25,-.2 .25,0 .25,0 .25,-.1 .25,0 .25,-.1 .25,.6 .25,.2 .25,-.1 .25,.3 .25,.3 .25,.1 .25,.3 .25,-.1 .25,.1 .25,-2.1 .25,-6 .25,1.3 .25,1.3 .25,.5 .25,-.2 .25,.8 .25,1 .25,.4 .25,.5 .25,-.2 .25,.1 .25,-.6 .25,.4 .25,.6 .25,-.2 .25,.3 .25,0 .25,.2 .25,.1 .25,-.3 .25,-.5 .25,.2 .25,-.1 .25,.3 .25,-.3 .25,.1 .25,.6 .25,-.2 .25,.4 .25,.4 .25,.3 .25,-.3 .25,-.2 .25,.2 .25,.1 .25,0 .25,.4 .25,-.1 .25,0 .25,0 .25,.4 .25,.1 .25,-5.3 .25,-1.8 .25,1.3 .25,.5 .25,.1 .25,.9 .25,.3 .25,-.2 .25,1 .25,-.5 .25,.5 .25,.1 .25,.4 .25,-.4 .25,.1 .25,-.2 .25,.6 .25,-.4 .25,-.2 .25,0 .25,.5 .25,.4 .25,0 .25,.5 .25,-.6 .25,.2 .25,-.4 .25,.5 .25,-.1 .25,-.2 .25,.1 .25,.2 .25,.6 .25,.1 .25,.1 .25,-.4 .25,-.3 .25,-.1 .25,-.1 .25,.6 .25,.6 .25,.2 .25,.4 .25,.2 .25,-.2 .25,.2 .25,-.1 .25,.1 .25,.2 .25,-.3 .25,.3 .25,-.1 .25,.1 .25,.1 .25,-.1 .25,-.8 .25,-1 .25,-.5 .25,-.8 .25,-1.1 .25,-.7 .25,-1 .25,-.5 .25,.5 .25,.1 .25,.2 .25,.7 .25,.5 .25,.4 .25,.6 .25,.8 .25,.2 .25,-.2 .25,-.2 .25,.6 .25,0 .25,-.1 .25,0 .25,.4 .25,-.2 .25,-.2 .25,0 .25,-.4 .25,.1 .25,.7 .25,.2 .25,-.3 .25,.5 .25,-.6 .25,-.1 .25,-.1 .25,.5 .25,.5 .25,-.4 .25,0 .25,.1 .25,0 .25,-.1 .25,.2 .25,-.2 .25,.4 .25,-.3 .25,0 .25,.3 .25,.1 .25,-.2 .25,.3 .25,-.1 .25,-.1 .25,-.2 .25,.5 .25,-.1 .25,.1 .25,0 .25,.5 .25,.1 .25,.1 .25,-.1 .25,.1 .25,.4 .25,.1 .25,-.2 .25,-.1 .25,.1 .25,.3 .25,0 .25,-.2 .25,.2 .25,0 .25,.1 .25,.1 .25,-.1 .25,.1 .25,0 .25,-.1 .25,.1 .25,-.1 .25,-.2 .25,.2 .25,0 .25,.1 .25,-.1 .25,-.2 .25,-.1 .25,.1 .25,0 .25,.1 .25,-.1 .25,.2 .25,.1 .25,-.2 .25,.2 .25,-.3 .25,0 .25,.2 .25,.1 .25,-5.1 .25,-5 .25,2.2 .25,1.4 .25,.7 .25,1.2 .25,.6 .25,.1 .25,.9 .25,.4 .25,-.2 .25,.4 .25,-.3 .25,.6 .25,.4 .25,.1 .25,0 .25,.1 .25,.2 .25,0 .25,-.4 .25,-.2 .25,.1 .25,.4 .25,0 .25,.4 .25,.3 .25,-.2 .25,.2 .25,.2 .25,-.2 .25,.3 .25,.2 .25,.2 .25,-.2 .25,0 .25,.2 .25,0 .25,-.1 .25,.1 .25,-.1 .25,-.1 .25,0 .25,0 .25,.1 .25,0 .25,0 .25,.1 .25,0 .25,0 .25,0 .25,-.2 .25,0 .25,-.1 .25,0 .25,.3 .25,-.2 .25,-.1 .25,-.1 .25,-2.8 .25,-6.1 .25,1 .25,1.7 .25,1.3 .25,.7 .25,1 .25,.3 .25,.5 .25,.4 .25,-.3 .25,.4 .25,-.3 .25,-.7 .25,-.3 .25,.6 .25,-.4 .25,.4 .25,-.5 .25,-.1 .25,.1 .25,.1 .25,-.5 .25,.6 .25,-.4 .25,.5 .25,.5 .25,.2 .25,.3 .25,-.6 .25,.3 .25,-.2 .25,.2 .25,0 .25,-.4 .25,0 .25,.3 .25,-.3 .25,.5 .25,.4 .25,-.4 .25,-.3 .25,-.2 .25,0 .25,-.3 .25,-.1 .25,.3 .25,.5 .25,.1 .25,.1 .25,-.1 .25,.3 .25,.4 .25,.2 .25,.2 .25,-.3 .25,-.2 .25,.1 .25,.2 .25,-.2 .25,.1 .25,.1 .25,.3 .25,-.4 .25,.2 .25,.1 .25,.3 .25,0 .25,.1 .25,.1 .25,-.2 .25,.2 .25,0 .25,0 .25,.3 .25,-.1 .25,.3 .25,.2 .25,-.2 .25,.3 .25,0 .25,0 .25,-.2 .25,-.2 .25,.2 .25,0 .25,-.2 .25,.1 .25,.1 .25,.2 .25,0 .25,0 .25,0 .25,0 .25,0 .25,0 .25,-.4 .25,-5.7 .25,-.9 .25,1.4 .25,.2 .25,.5 .25,.2 .25,1 .25,-.1 .25,.3 .25,.7 .25,.5 .25,.1 .25,.1 .25,0 .25,-.7 .25,.2 .25,.2 .25,.3 .25,.3 .25,-.2 .25,-.1 .25,.3 .25,-.3 .25,.1 .25,.3 .25,-.2 .25,.2 .25,.1 .25,-.5 .25,0 .25,.1 .25,-.1 .25,-.2 .25,-.1 .25,-.3 .25,0 .25,.4 .25,-.3 .25,.6 .25,.3 .25,.3 .25,0 .25,0 .25,.1 .25,-.2 .25,.1 .25,0 .25,-.1 .25,-.3 .25,-.1 .25,.3 .25,.2 .25,-.2 .25,-.1 .25,0 .25,.5 .25,.3 .25,.1 .25,.1 .25,.1 .25,-.2 .25,.1 .25,.1 .25,.2 .25,0 .25,.1 .25,.2 .25,.1 .25,-.1 .25,-.1 .25,.1 .25,.1 .25,0 .25,0 .25,-.1 .25,-.2 .25,0 .25,-2.2 .25,-4.9 .25,.9 .25,.6 .25,1.5 .25,1.1 .25,.7 .25,.6 .25,-.4 .25,-.4 .25,.3 .25,-.1 .25,.1 .25,.1 .25,.3 .25,-.2 .25,.4 .25,.5 .25,.4 .25,-.2 .25,-.2 .25,0 .25,0 .25,.4 .25,.3 .25,.2 .25,-.1 .25,.4 .25,.2 .25,-.1 .25,-.1 .25,.2 .25,0 .25,0 .25,0 .25,0 .25,0 .25,0 .25,0 .25,-.1 .25,0 .25,-.2 .25,.2 .25,-.1 .25,.1 .25,0 .25,-.1 .25,0 .25,0 .25,-.1 .25,.2 .25,0 .25,0 .25,-.1 .25,.2 .25,-.1 .25,.1 .25,0 .25,0 .25,-.1 .25,.1 .25,-.1 .25,.1 .25,0 .25,0 .25,0 .25,-.2 .25,0 .25,0 .25,-.1 .25,.3 .25,0 .25,0 .25,0 .25,-.1 .25,.1 .25,0 .25,0 .25,0 .25,0 .25,0 .25,0 .25,0 .25,0 .25,0 .25,-.1 .25,.1 .25,-.1 .25,-.2 .25,.2 .25,0 .25,-.2 .25,-.1 .25,.3 .25,-.1 .25,-.1 .25,.2 .25,-.1 .25,0 .25,.1 .25,-.1 .25,-.2 .25,.3 .25,0 .25,-.1 .25,.2 .25,0 .25,-.2 .25,.1 .25,0 .25,-.2 .25,-.1 .25,-.2 .25,.3 .25,-.1 .25,.1 .25,.1 .25,.2 .25,-.2 .25,0 .25,0 .25,0 .25,0 .25,0 .25,.2 .25,-.2 .25,.1 .25,.1 .25,-.2 .25,.2 .25,-.2 .25,-.1 .25,.1 .25,0 .25,.1 .25,.1 .25,-2.1 .25,-4.8 .25,.8 .25,1 .25,1.3 .25,0 .25,-.2 .25,.7 .25,.1 .25,.7 .25,-.3 .25,.1 .25,.7 .25,-.1 .25,.1 .25,.3 .25,.1 .25,0 .25,.2 .25,.4 .25,0 .25,.3 .25,.2 .25,.1 .25,-2.6 .25,-5.4 .25,1.5 .25,1.1 .25,1.2 .25,.2 .25,.1 .25,.5 .25,.8 .25,-.3 .25,0 .25,0 .25,.6 .25,-.4 .25,-.1 .25,-.1 .25,.7 .25,.3 .25,0 .25,.5 .25,-.5 .25,.4 .25,.3 .25,-.2 .25,.3 .25,-.1 .25,0 .25,.3 .25,.4 .25,-.1 .25,-.2 .25,0 .25,.4 .25,.3 .25,.1 .25,.3 .25,-.1 .25,-.1 .25,-.1 .25,-.1 .25,-3.5 .25,-5.6 .25,1.5 .25,.8 .25,1.8 .25,1.2 .25,-.5 .25,1 .25,-.4 .25,.5 .25,.4 .25,.3 .25,-.5 .25,.1 .25,.6 .25,-.3 .25,.3 .25,-.2 .25,.3 .25,-.2 .25,.2 .25,.4 .25,-.2 .25,-.1 .25,.3 .25,.3 .25,.3 .25,.1 .25,.4 .25,0 .25,.3 .25,0 .25,.2 .25,.1 .25,0 .25,.2 .25,-2.2 .25,-5.8 .25,1.3 .25,1.2 .25,.9 .25,.7 .25,.9 .25,0 .25,0 .25,.2 .25,-.4 .25,.3 .25,-.1 .25,-.1 .25,.3 .25,.3 .25,.5 .25,-.1 .25,-.2 .25,-.1 .25,.1 .25,0 .25,.4 .25,.4 .25,0 .25,.3 .25,.5 .25,-.9 .25,-.7 .25,-1 .25,-.4 .25,-.8 .25,-.5 .25,-.5 .25,-.3 .25,.6 .25,.1 .25,-.1 .25,1.2 .25,-.2 .25,.2 .25,.5 .25,.8 .25,0 .25,.4 .25,.3 .25,-.2 .25,-.2 .25,-.4 .25,.1 .25,-.1 .25,.2 .25,.7 .25,.2 .25,.4 .25,-.2 .25,.2 .25,-.1 .25,.2 .25,.4 .25,.2 .25,-.3 .25,.1 .25,0 .25,.2 .25,.2 .25,-.6 .25,-1 .25,-.9 .25,-1.1 .25,-.5 .25,-.3 .25,0 .25,-.8 .25,.6 .25,.4 .25,.1 .25,.5 .25,.7 .25,.2 .25,-.4 .25,.3 .25,0 .25,-.3 .25,.1 .25,-.2 .25,.2 .25,-.1 .25,.3 .25,-.3 .25,.3 .25,.5 .25,0 .25,.5 .25,.1 .25,-.4 .25,.5 .25,.1 .25,.2 .25,-.2 .25,-.3 .25,.3 .25,.1 .25,.5 .25,.1 .25,0 .25,-.1 .25,-.3 .25,-.2 .25,.2 .25,.4 .25,-.2 .25,-.1 .25,0 .25,.2 .25,.1 .25,.3 .25,.1 .25,.2 .25,0 .25,-.1 .25,.3 .25,0 .25,.4 .25,.3 .25,.1 .25,0 .25,0 .25,0 .25,-.2 .25,.2 .25,-.2 .25,.1 .25,.1 .25,0 .25,0 .25,-.1 .25,.1 .25,0 .25,0 .25,0 .25,0 .25,0 .25,-.1 .25,.1 .25,0 .25,0 .25,0 .25,0 .25,-.2 .25,-.2 .25,-.1 .25,-.1 .25,.2 .25,.1 .25,.2 .25,0 .25,-.1 .25,-.1 .25,-4.7 .25,-4 .25,1.9 .25,.6 .25,.6 .25,1.4 .25,.6 .25,0 .25,.9 .25,-.3 .25,-.2 .25,.2 .25,.6 .25,.1 .25,.4 .25,-.4 .25,.4L314.50,19.9l-.25,-.1 -.25,.5 -.25,-.2 -.25,.1 -.25,-.3 -.25,.1 -.25,.5 -.25,.5 -.25,-.2 -.25,.6 -.25,.3 -.25,0 -.25,1 -.25,1.5 -.25,1.4 -.25,-4.7 -.25,-3.3 -.25,0 -.25,.1 -.25,0 -.25,-.2 -.25,0 -.25,0 -.25,0 -.25,0 -.25,.1 -.25,.2 -.25,.1 -.25,0 -.25,.1 -.25,-.2 -.25,-.1 -.25,.1 -.25,.1 -.25,0 -.25,0 -.25,-.2 -.25,.1 -.25,-.1 -.25,0 -.25,0 -.25,.1 -.25,-.1 -.25,-.1 -.25,.2 -.25,-.2 -.25,.2 -.25,0 -.25,.1 -.25,.1 -.25,.1 -.25,-.1 -.25,-.1 -.25,.2 -.25,-.1 -.25,.2 -.25,.2 -.25,0 -.25,.1 -.25,-.1 -.25,0 -.25,.1 -.25,.1 -.25,.2 -.25,.3 -.25,-.2 -.25,0 -.25,.3 -.25,.3 -.25,.3 -.25,.1 -.25,0 -.25,-.3 -.25,.1 -.25,-.1 -.25,.3 -.25,.3 -.25,-.1 -.25,0 -.25,-.3 -.25,.5 -.25,0 -.25,-.4 -.25,.1 -.25,-.3 -.25,-.2 -.25,.3 -.25,-.1 -.25,.1 -.25,0 -.25,.3 -.25,.1 -.25,.5 -.25,.4 -.25,.5 -.25,1.1 -.25,.8 -.25,.5 -.25,.8 -.25,.8 -.25,.4 -.25,-.2 -.25,-.4 -.25,-1.3 -.25,-1.4 -.25,-1.3 -.25,-.9 -.25,-1 -.25,-.6 -.25,-.6 -.25,.1 -.25,.2 -.25,.2 -.25,.1 -.25,.6 -.25,.1 -.25,-.1 -.25,0 -.25,.3 -.25,.1 -.25,.3 -.25,-.1 -.25,0 -.25,-.3 -.25,0 -.25,.2 -.25,.1 -.25,.5 -.25,.3 -.25,.3 -.25,0 -.25,-.2 -.25,.2 -.25,-.4 -.25,0 -.25,.3 -.25,.6 -.25,-.4 -.25,.7 -.25,.3 -.25,-.2 -.25,.4 -.25,-.5 -.25,-.6 -.25,-.6 -.25,-.8 -.25,-.5 -.25,-.6 -.25,-.4 -.25,-.3 -.25,.1 -.25,.4 -.25,-.1 -.25,0 -.25,.3 -.25,.2 -.25,.4 -.25,.4 -.25,.3 -.25,-.1 -.25,0 -.25,0 -.25,.3 -.25,.4 -.25,.1 -.25,.6 -.25,.3 -.25,.5 -.25,.5 -.25,.2 -.25,.5 -.25,.7 -.25,1 -.25,1.7 -.25,-6.1 -.25,-3.3 -.25,0 -.25,0 -.25,.2 -.25,.1 -.25,.3 -.25,.1 -.25,.3 -.25,0 -.25,.2 -.25,.1 -.25,0 -.25,0 -.25,.3 -.25,.5 -.25,-.1 -.25,0 -.25,.4 -.25,0 -.25,.4 -.25,-.1 -.25,.5 -.25,-.3 -.25,.2 -.25,.6 -.25,.1 -.25,-.1 -.25,0 -.25,.8 -.25,-.1 -.25,1.1 -.25,.2 -.25,.1 -.25,1.4 -.25,1.7 -.25,-6.6 -.25,-2.3 -.25,0 -.25,0 -.25,.2 -.25,.4 -.25,0 -.25,.2 -.25,0 -.25,-.1 -.25,.3 -.25,.3 -.25,.4 -.25,-.1 -.25,-.1 -.25,.3 -.25,.2 -.25,0 -.25,.4 -.25,-.1 -.25,-.1 -.25,.5 -.25,-.2 -.25,.1 -.25,-.1 -.25,-.3 -.25,.2 -.25,.3 -.25,.4 -.25,-.2 -.25,.2 -.25,.3 -.25,.5 -.25,-.2 -.25,.2 -.25,.6 -.25,.9 -.25,.4 -.25,.9 -.25,1.4 -.25,-5.6 -.25,-2.5 -.25,0 -.25,.1 -.25,.2 -.25,.4 -.25,.1 -.25,.1 -.25,.4 -.25,.3 -.25,0 -.25,.3 -.25,.4 -.25,-.3 -.25,.3 -.25,.6 -.25,-.2 -.25,.3 -.25,0 -.25,.8 -.25,.8 -.25,0 -.25,.6 -.25,1.3 -.25,-4.4 -.25,-1.8 -.25,-.1 -.25,-.1 -.25,0 -.25,-.1 -.25,.1 -.25,.2 -.25,-.2 -.25,.3 -.25,-.2 -.25,-.1 -.25,.1 -.25,-.1 -.25,0 -.25,0 -.25,0 -.25,0 -.25,0 -.25,.1 -.25,-.1 -.25,-.1 -.25,0 -.25,.1 -.25,-.1 -.25,0 -.25,0 -.25,.2 -.25,0 -.25,-.1 -.25,.2 -.25,0 -.25,-.2 -.25,.1 -.25,0 -.25,-.2 -.25,.1 -.25,.1 -.25,-.1 -.25,0 -.25,.1 -.25,-.2 -.25,.1 -.25,.1 -.25,-.2 -.25,0 -.25,.2 -.25,0 -.25,-.2 -.25,.2 -.25,.1 -.25,-.1 -.25,.1 -.25,0 -.25,.3 -.25,-.1 -.25,-.1 -.25,0 -.25,-.1 -.25,0 -.25,.1 -.25,-.1 -.25,-.1 -.25,.1 -.25,.1 -.25,0 -.25,-.2 -.25,-.2 -.25,.1 -.25,0 -.25,0 -.25,.1 -.25,.1 -.25,-.1 -.25,.1 -.25,-.1 -.25,.1 -.25,-.1 -.25,.3 -.25,-.1 -.25,-.1 -.25,-.1 -.25,.1 -.25,-.2 -.25,.1 -.25,0 -.25,0 -.25,-.2 -.25,.1 -.25,0 -.25,0 -.25,.1 -.25,0 -.25,-.1 -.25,.1 -.25,-.1 -.25,.1 -.25,0 -.25,0 -.25,.1 -.25,.2 -.25,-.1 -.25,.1 -.25,-.1 -.25,0 -.25,-.1 -.25,-.2 -.25,.1 -.25,.2 -.25,.1 -.25,-.1 -.25,.3 -.25,.1 -.25,0 -.25,-.1 -.25,.2 -.25,.2 -.25,.3 -.25,.4 -.25,-.1 -.25,-.2 -.25,-.1 -.25,.4 -.25,-.1 -.25,.1 -.25,.2 -.25,.3 -.25,.1 -.25,.7 -.25,.8 -.25,.2 -.25,.3 -.25,.3 -.25,.3 -.25,1.7 -.25,2.3 -.25,-6.1 -.25,-2.9 -.25,0 -.25,.2 -.25,.1 -.25,.1 -.25,-.1 -.25,-.1 -.25,-.1 -.25,.1 -.25,.2 -.25,-.1 -.25,0 -.25,.1 -.25,.1 -.25,0 -.25,.1 -.25,-.1 -.25,.3 -.25,.1 -.25,0 -.25,.1 -.25,-.1 -.25,-.3 -.25,.1 -.25,.2 -.25,.3 -.25,-.1 -.25,-.1 -.25,.2 -.25,.3 -.25,.2 -.25,.1 -.25,0 -.25,.2 -.25,.1 -.25,.1 -.25,.1 -.25,-.1 -.25,-.2 -.25,-.4 -.25,.3 -.25,-.2 -.25,.1 -.25,.3 -.25,.1 -.25,.3 -.25,.1 -.25,0 -.25,.1 -.25,.4 -.25,0 -.25,-.1 -.25,.2 -.25,-.2 -.25,.1 -.25,.2 -.25,-.1 -.25,.1 -.25,.2 -.25,-.1 -.25,-.2 -.25,-.2 -.25,0 -.25,.6 -.25,0 -.25,.1 -.25,0 -.25,-.2 -.25,-.3 -.25,0 -.25,.4 -.25,-.2 -.25,.4 -.25,.6 -.25,1.1 -.25,.8 -.25,-1.4 -.25,-4.5 -.25,0 -.25,-.2 -.25,.1 -.25,.2 -.25,0 -.25,-.1 -.25,-.1 -.25,-.2 -.25,-.1 -.25,0 -.25,.1 -.25,0 -.25,-.1 -.25,.1 -.25,.2 -.25,0 -.25,.1 -.25,-.1 -.25,.3 -.25,0 -.25,-.1 -.25,.2 -.25,-.1 -.25,.1 -.25,.2 -.25,-.1 -.25,.3 -.25,0 -.25,.1 -.25,.1 -.25,-.1 -.25,0 -.25,0 -.25,.4 -.25,-.1 -.25,0 -.25,.1 -.25,.2 -.25,-.1 -.25,.1 -.25,.3 -.25,.3 -.25,0 -.25,-.1 -.25,-.2 -.25,-.1 -.25,.1 -.25,0 -.25,.1 -.25,-.4 -.25,-.1 -.25,.2 -.25,.2 -.25,.1 -.25,.3 -.25,.3 -.25,.4 -.25,-.2 -.25,-.3 -.25,.3 -.25,-.2 -.25,.1 -.25,.4 -.25,0 -.25,-.1 -.25,.3 -.25,-.2 -.25,.6 -.25,-.3 -.25,-.1 -.25,-.3 -.25,-.4 -.25,.4 -.25,-.4 -.25,.5 -.25,-.1 -.25,0 -.25,.1 -.25,.5 -.25,-.3 -.25,.4 -.25,-.4 -.25,.3 -.25,.6 -.25,.4 -.25,-.1 -.25,.4 -.25,-.1 -.25,0 -.25,.3 -.25,-.1 -.25,.4 -.25,.3 -.25,.5 -.25,1.8 -.25,-5.6 -.25,-2.6 -.25,0 -.25,.1 -.25,.1 -.25,-.2 -.25,.1 -.25,0 -.25,0 -.25,.2 -.25,0 -.25,-.1 -.25,.1 -.25,-.1 -.25,0 -.25,0 -.25,-.1 -.25,0 -.25,0 -.25,.1 -.25,.1 -.25,-.1 -.25,.2 -.25,-.2 -.25,-.1 -.25,.2 -.25,.4 -.25,0 -.25,.1 -.25,-.1 -.25,.4 -.25,0 -.25,0 -.25,.3 -.25,-.1 -.25,-.1 -.25,.1 -.25,-.1 -.25,0 -.25,.4 -.25,.4 -.25,.1 -.25,0 -.25,.1 -.25,.2 -.25,.1 -.25,-.2 -.25,-.3 -.25,.5 -.25,.1 -.25,.5 -.25,.2 -.25,-.1 -.25,.8 -.25,.8 -.25,.8 -.25,1.8 -.25,2.1 -.25,2.8 -.25,-6.1 -.25,-5.9 -.25,-.1 -.25,-.2 -.25,0 -.25,.2 -.25,-.1 -.25,.1 -.25,0 -.25,-.2 -.25,.1 -.25,-.1 -.25,0 -.25,0 -.25,0 -.25,.2 -.25,.1 -.25,-.1 -.25,0 -.25,-.1 -.25,.1 -.25,.1 -.25,-.1 -.25,.2 -.25,-.1 -.25,-.1 -.25,.1 -.25,-.1 -.25,-.1 -.25,0 -.25,-.1 -.25,.1 -.25,.2 -.25,-.1 -.25,.1 -.25,.2 -.25,.3 -.25,0 -.25,-.1 -.25,0 -.25,.2 -.25,.1 -.25,0 -.25,-.3 -.25,.2 -.25,0 -.25,.2 -.25,-.3 -.25,.2 -.25,.3 -.25,.1 -.25,-.1 -.25,.3 -.25,0 -.25,-.2 -.25,.1 -.25,.4 -.25,-.2 -.25,.2 -.25,-.1 -.25,.3 -.25,0 -.25,0 -.25,.1 -.25,.4 -.25,-.3 -.25,-.3 -.25,.2 -.25,.1 -.25,.5 -.25,-.3 -.25,.3 -.25,-.1 -.25,-.4 -.25,-.1 -.25,.4 -.25,0 -.25,.2 -.25,.2 -.25,-.2 -.25,.1 -.25,.1 -.25,.1 -.25,-.4 -.25,.3 -.25,.5 -.25,.3 -.25,-.1 -.25,.3 -.25,.6 -.25,.7 -.25,.5 -.25,.8 -.25,.6 -.25,-.2 -.25,-.4 -.25,-.5 -.25,-1 -.25,-.9 -.25,-1 -.25,-1.3 -.25,-.6 -.25,-.5 -.25,-.6 -.25,.1 -.25,.1 -.25,.3 -.25,0 -.25,.4 -.25,0 -.25,.1 -.25,.3 -.25,0 -.25,.3 -.25,0 -.25,-.1 -.25,0 -.25,-.3 -.25,-.3 -.25,.2 -.25,.2 -.25,.4 -.25,.4 -.25,.1 -.25,.1 -.25,-.3 -.25,-.1 -.25,.1 -.25,.3 -.25,.1 -.25,-.2 -.25,.4 -.25,0 -.25,.5 -.25,-.2 -.25,0 -.25,-.1 -.25,-.4 -.25,.1 -.25,.3 -.25,.4 -.25,-.4 -.25,.2 -.25,.1 -.25,.4 -.25,-.1 -.25,0 -.25,-.2 -.25,.6 -.25,-.4 -.25,.6 -.25,.2 -.25,.1 -.25,1 -.25,1.1 -.25,.9 -.25,-1 -.25,-5.9 -.25,0 -.25,-.2 -.25,.3 -.25,.3 -.25,.3 -.25,-.2 -.25,.3 -.25,.1 -.25,.1 -.25,.3 -.25,.5 -.25,-.1 -.25,-.1 -.25,-.1 -.25,.3 -.25,-.3 -.25,0 -.25,.5 -.25,-.1 -.25,.2 -.25,0 -.25,.5 -.25,.4 -.25,0 -.25,.1 -.25,.1 -.25,-.1 -.25,.2 -.25,-.2 -.25,-.2 -.25,.6 -.25,.1 -.25,.4 -.25,0 -.25,0 -.25,-.3 -.25,.1 -.25,1.1 -.25,.9 -.25,.8 -.25,1.4 -.25,-5.4 -.25,-3.1 -.25,.1 -.25,.3 -.25,0 -.25,.2 -.25,0 -.25,0 -.25,.4 -.25,0 -.25,-.2 -.25,.2 -.25,.3 -.25,.3 -.25,.2 -.25,.2 -.25,.3 -.25,0 -.25,.3 -.25,0 -.25,-.1 -.25,-.4 -.25,.5 -.25,.1 -.25,.5 -.25,.2 -.25,-.2 -.25,.1 -.25,-.2 -.25,-.2 -.25,.5 -.25,-.2 -.25,.3 -.25,.7 -.25,-.2 -.25,-.2 -.25,1 -.25,1 -.25,-3.9 -.25,.4 -.25,0 -.25,-.4 -.25,.3 -.25,.2 -.25,.4 -.25,-.1 -.25,-.6 -.25,.4 -.25,.3 -.25,.1 -.25,.6 -.25,.4 -.25,.3 -.25,.3 -.25,1.1 -.25,.3 -.25,1.1 -.25,1.8 -.25,-6.1 -.25,-2.7 -.25,.1 -.25,0 -.25,.1 -.25,-.1 -.25,-.1 -.25,.2 -.25,.1 -.25,0 -.25,-.1 -.25,-.2 -.25,.1 -.25,.1 -.25,-.1 -.25,-.2 -.25,.1 -.25,0 -.25,.1 -.25,-.1 -.25,.2 -.25,-.1 -.25,-.1 -.25,.1 -.25,0 -.25,-.1 -.25,-.1 -.25,0 -.25,.1 -.25,0 -.25,.2 -.25,0 -.25,-.1 -.25,.1 -.25,-.2 -.25,0 -.25,.2 -.25,.1 -.25,-.1 -.25,0 -.25,-.1 -.25,0 -.25,-.1 -.25,.1 -.25,-.2 -.25,0 -.25,.1 -.25,-.1 -.25,.1 -.25,.2 -.25,.3 -.25,0 -.25,0 -.25,0 -.25,-.1 -.25,.3 -.25,-.1 -.25,-.1 -.25,.1 -.25,0 -.25,.2 -.25,-.2 -.25,0 -.25,.2 -.25,0 -.25,.2 -.25,.1 -.25,.2 -.25,-.2 -.25,-.1 -.25,.1 -.25,-.2 -.25,0 -.25,.3 -.25,.2 -.25,.1 -.25,.1 -.25,-.1 -.25,.2 -.25,-.2 -.25,.2 -.25,.3 -.25,-.1 -.25,.2 -.25,-.1 -.25,0 -.25,.1 -.25,-.2 -.25,0 -.25,.1 -.25,.2 -.25,.1 -.25,-.1 -.25,-.2 -.25,-.1 -.25,.4 -.25,-.1 -.25,0 -.25,.1 -.25,-.2 -.25,-.2 -.25,-.5 -.25,.1 -.25,.1 -.25,.1 -.25,.1 -.25,.2 -.25,.2 -.25,.4 -.25,.5 -.25,0 -.25,0 -.25,-.3 -.25,-.2 -.25,.1 -.25,.5 -.25,-.1 -.25,-.3 -.25,.5 -.25,-.3 -.25,-.4 -.25,.5 -.25,.1 -.25,-.2 -.25,.2 -.25,-.2 -.25,-.2 -.25,.2 -.25,-.1 -.25,.1 -.25,-.1 -.25,.4 -.25,0 -.25,.8 -.25,1.2 -.25,.4 -.25,.5 -.25,.9 -.25,-5.1 -.25,-1.9 -.25,-.1 -.25,-.1 -.25,0 -.25,0 -.25,0 -.25,.1 -.25,.1 -.25,.3 -.25,-.1 -.25,.2 -.25,0 -.25,.3 -.25,0 -.25,.1 -.25,.2 -.25,.1 -.25,0 -.25,-.1 -.25,.3 -.25,-.1 -.25,-.1 -.25,-.1 -.25,.2 -.25,.1 -.25,.1 -.25,-.3 -.25,.2 -.25,0 -.25,.2 -.25,.3 -.25,-.2 -.25,.4 -.25,0 -.25,.2 -.25,-.3 -.25,.2 -.25,0 -.25,0 -.25,.3 -.25,-.4 -.25,.2 -.25,.3 -.25,-.2 -.25,.1 -.25,.1 -.25,-.4 -.25,.3 -.25,0 -.25,-.1 -.25,-.1 -.25,.2 -.25,.5 -.25,-.5 -.25,.4 -.25,0 -.25,.6 -.25,.2 -.25,-.2 -.25,.1 -.25,.2 -.25,.3 -.25,-.1 -.25,-.3 -.25,-.2 -.25,.5 -.25,-.3 -.25,.4 -.25,-.1 -.25,.2 -.25,-.2 -.25,-.4 -.25,0 -.25,.6 -.25,.7 -.25,1 -.25,.4 -.25,1.7 -.25,1.6 -.25,-6.3 -.25,-3.1 -.25,0 -.25,-.1 -.25,.1 -.25,.1 -.25,-.1 -.25,-.1 -.25,.1 -.25,-.2 -.25,0 -.25,.1 -.25,.1 -.25,.1 -.25,-.1 -.25,-.1 -.25,-.2 -.25,0 -.25,.1 -.25,.3 -.25,-.1 -.25,.4 -.25,-.1 -.25,-.1 -.25,.2 -.25,-.1 -.25,.2 -.25,-.1 -.25,.3 -.25,-.1 -.25,0 -.25,.3 -.25,-.1 -.25,0 -.25,.2 -.25,-.1 -.25,.1 -.25,.1 -.25,.2 -.25,.4 -.25,-.2 -.25,.3 -.25,-.1 -.25,.3 -.25,-.2 -.25,0 -.25,.1 -.25,-.1 -.25,0 -.25,-.1 -.25,.3 -.25,-.4 -.25,0 -.25,.4 -.25,0 -.25,-.1 -.25,.1 -.25,.4 -.25,-.1 -.25,-.3 -.25,.2 -.25,.2 -.25,.2 -.25,0 -.25,-.4 -.25,.1 -.25,-.3 -.25,.3 -.25,.2 -.25,-.5 -.25,.4 -.25,.6 -.25,-.1 -.25,-.3 -.25,.2 -.25,.1 -.25,-.4 -.25,.5 -.25,.2 -.25,-.2 -.25,.3 -.25,-.3 -.25,.4 -.25,.2 -.25,.3 -.25,1.3 -.25,.9 -.25,.6 -.25,.3 -.25,1 -.25,.1 -.25,-.3 -.25,-1 -.25,-.2 -.25,-.8 -.25,-1.5 -.25,-.9 -.25,-.7 -.25,.6 -.25,.1 -.25,-.4 -.25,.1 -.25,0 -.25,-.6 -.25,.4 -.25,.5 -.25,-.2 -.25,.5 -.25,0 -.25,-.1 -.25,-.1 -.25,-.4 -.25,-.1 -.25,.2 -.25,.3 -.25,-.1 -.25,-.5 -.25,.2 -.25,-.2 -.25,.3 -.25,.1 -.25,.5 -.25,.3 -.25,-.3 -.25,-.1 -.25,-.4 -.25,.3 -.25,0 -.25,.3 -.25,.1 -.25,-.5 -.25,.2 -.25,.2 -.25,-.5 -.25,.5 -.25,.2 -.25,-.5 -.25,.5 -.25,-.3 -.25,-.1Z" fill="#20d9e8"/></svg><svg style="position:absolute;left:218.00px;top:198.60px;" width="314.50" height="35.20" viewBox="0 0 314.50 35.20"><rect x="0" y="0" width="314.50" height="35.20" fill="#24875e"/><rect x="0" y="0" width="314.50" height="0.8" fill="#3a9a72"/><path d="M0,15.2l.25,-1.4 .25,-2 .25,-2.5 .25,-1.8 .25,2.8 .25,2.3 .25,1.7 .25,1.3 .25,.5 .25,-.2 .25,.2 .25,-.1 .25,.1 .25,.1 .25,0 .25,-.2 .25,0 .25,.1 .25,-.1 .25,0 .25,-.1 .25,-.3 .25,-.6 .25,0 .25,.6 .25,.4 .25,-.1 .25,.2 .25,0 .25,.1 .25,-.3 .25,.3 .25,0 .25,-.2 .25,0 .25,.1 .25,-.1 .25,.2 .25,-.3 .25,-.9 .25,-1.2 .25,-1.6 .25,-1.9 .25,1.5 .25,1.7 .25,1.3 .25,1 .25,.3 .25,.1 .25,-.3 .25,.2 .25,-.1 .25,.2 .25,0 .25,-.2 .25,0 .25,-.1 .25,.1 .25,-.4 .25,-1 .25,-1.4 .25,-1.8 .25,-1 .25,1.9 .25,1.6 .25,1.2 .25,.9 .25,-.1 .25,.3 .25,-.2 .25,0 .25,0 .25,0 .25,.2 .25,-.1 .25,-.2 .25,0 .25,-.1 .25,-1.2 .25,-1.7 .25,-2.2 .25,-2.7 .25,.6 .25,2.6 .25,2.1 .25,1.6 .25,1.1 .25,.1 .25,0 .25,.1 .25,0 .25,0 .25,-.1 .25,-.1 .25,.1 .25,.1 .25,-.2 .25,-.2 .25,-.9 .25,-1.3 .25,-1.7 .25,-2.1 .25,1.9 .25,1.7 .25,1.4 .25,1 .25,.4 .25,-.2 .25,.1 .25,.1 .25,-.1 .25,0 .25,-.2 .25,.2 .25,0 .25,0 .25,-.2 .25,-.4 .25,-1 .25,-1.5 .25,-1.8 .25,-.8 .25,2 .25,1.6 .25,1.2 .25,.8 .25,.2 .25,-.2 .25,-.1 .25,.2 .25,0 .25,-.2 .25,.3 .25,0 .25,0 .25,-.2 .25,0 .25,-.8 .25,-1.2 .25,-1.5 .25,-2 .25,.7 .25,1.8 .25,1.4 .25,1.1 .25,.7 .25,0 .25,-.1 .25,.1 .25,-.2 .25,0 .25,0 .25,.1 .25,.1 .25,-.1 .25,0 .25,-1 .25,-1.7 .25,-2.2 .25,-2.9 .25,-3.4 .25,3.5 .25,2.9 .25,2.2 .25,1.6 .25,.9 .25,0 .25,-.1 .25,.1 .25,0 .25,.2 .25,-.3 .25,.2 .25,-.1 .25,0 .25,-.1 .25,0 .25,.3 .25,-.4 .25,-.5 .25,-.1 .25,.5 .25,.4 .25,.1 .25,-.1 .25,-.2 .25,.1 .25,.1 .25,.1 .25,-.3 .25,.1 .25,.2 .25,-.1 .25,-.1 .25,0 .25,.2 .25,-.7 .25,-1 .25,-1.2 .25,-1.6 .25,.8 .25,1.4 .25,1.1 .25,.8 .25,.4 .25,-.1 .25,-.2 .25,.2 .25,0 .25,-.1 .25,.2 .25,0 .25,-.1 .25,.1 .25,0 .25,-.6 .25,-1 .25,-1.5 .25,-1.9 .25,-1.9 .25,2.3 .25,1.8 .25,1.4 .25,1 .25,.2 .25,.2 .25,0 .25,-.1 .25,.1 .25,-.1 .25,0 .25,-.2 .25,.2 .25,.1 .25,-.5 .25,-1.4 .25,-2 .25,-2.7 .25,-3.4 .25,-.5 .25,3.5 .25,2.8 .25,2.1 .25,1.5 .25,.3 .25,0 .25,.3 .25,-.2 .25,.2 .25,-.3 .25,.1 .25,0 .25,.2 .25,0 .25,-.2 .25,-.6 .25,-1 .25,-1.3 .25,-1.6 .25,1 .25,1.4 .25,1.1 .25,.9 .25,.1 .25,-.1 .25,.3 .25,0 .25,-.1 .25,-.1 .25,.2 .25,0 .25,0 .25,0 .25,-.1 .25,-.4 .25,-1 .25,-1.4 .25,-1.8 .25,-1.4 .25,2 .25,1.6 .25,1.3 .25,.9 .25,.2 .25,.1 .25,-.2 .25,.2 .25,0 .25,-.1 .25,0 .25,-.1 .25,.2 .25,-.2 .25,.1 .25,-.4 .25,-.9 .25,-1.2 .25,-1.5 .25,0 .25,1.5 .25,1.2 .25,.9 .25,.4 .25,-.2 .25,0 .25,.2 .25,-.2 .25,0 .25,.1 .25,.2 .25,-.1 .25,-.1 .25,0 .25,-.5 .25,-1.3 .25,-1.8 .25,-2.4 .25,-2.9 .25,2.2 .25,2.5 .25,2 .25,1.4 .25,.8 .25,0 .25,-.1 .25,.2 .25,.1 .25,-.1 .25,.1 .25,-.1 .25,-.1 .25,.1 .25,.1 .25,0 .25,-.1 .25,-.2 .25,-.4 .25,-.3 .25,.5 .25,.4 .25,-.2 .25,.2 .25,-.2 .25,.2 .25,.1 .25,0 .25,-.1 .25,-.1 .25,0 .25,0 .25,0 .25,.2 .25,-.1 .25,-.9 .25,-1.2 .25,-1.6 .25,-2.1 .25,.3 .25,2 .25,1.6 .25,1.1 .25,.7 .25,0 .25,0 .25,-.1 .25,.2 .25,0 .25,.1 .25,-.2 .25,0 .25,0 .25,-.1 .25,-.1 .25,-1 .25,-1.4 .25,-1.7 .25,-2.2 .25,1.9 .25,1.8 .25,1.4 .25,1.1 .25,.4 .25,0 .25,-.1 .25,0 .25,0 .25,-.1 .25,.1 .25,.1 .25,.1 .25,-.2 .25,-.1 .25,-1.2 .25,-1.9 .25,-2.4 .25,-3.2 .25,-1.6 .25,3.5 .25,2.7 .25,2.1 .25,1.5 .25,.8 .25,-.2 .25,.1 .25,.1 .25,0 .25,-.1 .25,-.1 .25,.2 .25,-.2 .25,.1 .25,-.1 .25,-.7 .25,-1.1 .25,-1.5 .25,-1.9 .25,.6 .25,1.7 .25,1.4 .25,1 .25,.5 .25,.2 .25,-.2 .25,0 .25,.1 .25,0 .25,-.2 .25,.2 .25,-.1 .25,0 .25,.1 .25,-.1 .25,-.7 .25,-1.1 .25,-1.3 .25,-1.7 .25,1.6 .25,1.4 .25,1 .25,.8 .25,.1 .25,.1 .25,-.2 .25,0 .25,.2 .25,-.1 .25,.1 .25,-.2 .25,.1 .25,0 .25,.1 .25,-.6 .25,-1 .25,-1.4 .25,-1.7 .25,-.6 .25,1.8 .25,1.5 .25,1.1 .25,.8 .25,0 .25,-.1 .25,.2 .25,-.2 .25,.1 .25,.1 .25,0 .25,-.2 .25,.2 .25,0 .25,-.7 .25,-1.5 .25,-2 .25,-2.7 .25,-3.4 .25,1.5 .25,3 .25,2.5 .25,1.8 .25,1.2 .25,.3 .25,-.1 .25,-.2 .25,.1 .25,0 .25,.2 .25,-.3 .25,.3 .25,-.3 .25,.1 .25,0 .25,.1 .25,-.1 .25,-.5 .25,-.4 .25,.5 .25,.4 .25,0 .25,.2 .25,-.1 .25,.1 .25,-.1 .25,-.1 .25,0 .25,.2 .25,-.1 .25,.1 .25,-.2 .25,.1 .25,.1 .25,-.8 .25,-1.2 .25,-1.5 .25,-1.9 .25,-.4 .25,2 .25,1.6 .25,1.2 .25,.9 .25,0 .25,0 .25,0 .25,.1 .25,-.3 .25,.2 .25,.1 .25,0 .25,0 .25,-.3 .25,0 .25,-1 .25,-1.3 .25,-1.7 .25,-2.2 .25,1.2 .25,1.9 .25,1.6 .25,1.1 .25,.5 .25,0 .25,0 .25,.1 .25,0 .25,-.2 .25,.1 .25,.2 .25,-.2 .25,0 .25,0 .25,-.9 .25,-1.6 .25,-2.2 .25,-2.8 .25,-2.5 .25,3.3 .25,2.6 .25,2 .25,1.5 .25,.6 .25,.2 .25,0 .25,-.2 .25,0 .25,0 .25,0 .25,-.1 .25,0 .25,.1 .25,-.1 .25,-.5 .25,-1.2 .25,-1.5 .25,-1.9 .25,-.1 .25,1.9 .25,1.6 .25,1.1 .25,.8 .25,0 .25,.1 .25,0 .25,0 .25,-.1 .25,-.1 .25,.2 .25,-.2 .25,.2 .25,-.1 .25,0 .25,-.7 .25,-1.1 .25,-1.3 .25,-1.7 .25,1.2 .25,1.4 .25,1.1 .25,.9 .25,.1 .25,-.1 .25,.3 .25,-.2 .25,.1 .25,-.1 .25,0 .25,.2 .25,-.1 .25,-.2 .25,.2 .25,-.4 .25,-1 .25,-1.3 .25,-1.7 .25,-1.3 .25,2 .25,1.5 .25,1.2 .25,.9 .25,.2 .25,-.2 .25,.2 .25,-.2 .25,.1 .25,-.1 .25,0 .25,0 .25,.2 .25,-.2 .25,-.2 .25,-1.3 .25,-1.7 .25,-2.4 .25,-2.9 .25,.3 .25,2.8 .25,2.3 .25,1.7 .25,1.2 .25,.4 .25,-.1 .25,0 .25,0 .25,-.2 .25,0 .25,.3 .25,-.3 .25,0 .25,.2 .25,-.1 .25,0 .25,-.1 .25,-.5 .25,-.6 .25,.5 .25,.5 .25,.4 .25,-.2 .25,.1 .25,-.2 .25,.3 .25,-.1 .25,.1 .25,-.2 .25,0 .25,.2 .25,-.1 .25,.1 .25,-.2 .25,-.3 .25,-.9 .25,-1.2 .25,-1.6 .25,-.9 .25,1.7 .25,1.4 .25,1.1 .25,.8 .25,0 .25,-.1 .25,.2 .25,-.1 .25,-.1 .25,.2 .25,0 .25,-.3 .25,.3 .25,-.1 .25,0 .25,-.8 .25,-1.2 .25,-1.5 .25,-1.9 .25,.4 .25,1.8 .25,1.5 .25,1.1 .25,.7 .25,-.1 .25,0 .25,-.1 .25,0 .25,.1 .25,-.1 .25,0 .25,.1 .25,-.1 .25,0 .25,-.6 .25,-1.3 .25,-1.8 .25,-2.4 .25,-2.9 .25,2.7 .25,2.4 .25,1.9 .25,1.3 .25,.9 .25,-.2 .25,.2 .25,-.2 .25,.1 .25,0 .25,.1 .25,0 .25,-.3 .25,.1 .25,0 .25,-.2 .25,-.9 .25,-1.1 .25,-1.4 .25,-.6 .25,1.5 .25,1.3 .25,.9 .25,.4 .25,.1 .25,.2 .25,-.1 .25,0 .25,-.1 .25,0 .25,.2 .25,-.2 .25,.1 .25,.1 .25,-.2 .25,-.8 .25,-1.3 .25,-1.6 .25,-2 .25,.8 .25,1.8 .25,1.5 .25,1.1 .25,.5 .25,-.1 .25,.3 .25,-.1 .25,0 .25,0 .25,0 .25,.1 .25,-.2 .25,-.1 .25,.3 .25,-.3 .25,-.9 .25,-1.2 .25,-1.6 .25,-1.8 .25,1.9 .25,1.5 .25,1.2 .25,.9 .25,.3 .25,-.3 .25,.1 .25,.1 .25,-.2 .25,.1 .25,.2 .25,-.1 .25,-.1 .25,.1 .25,-.4 .25,-1.3 .25,-2.1 .25,-2.6 .25,-3.4 .25,-1 .25,3.6 .25,2.9 .25,2.1 .25,1.6 .25,.7 .25,-.1 .25,.1 .25,0 .25,-.1 .25,.1 .25,-.1 .25,-.1 .25,.1 .25,-.1 .25,.1 .25,.1 .25,-.2 .25,-.4 .25,-.5 .25,.3 .25,.4 .25,.4 .25,-.1 .25,0 .25,0 .25,.1 .25,-.1 .25,-.1 .25,0 .25,0 .25,-.1 .25,.1 .25,.1 .25,-.1 .25,-.3 .25,-1.1 .25,-1.4 .25,-1.8 .25,-1.8 .25,2.2 .25,1.7 .25,1.3 .25,1 .25,.1 .25,.1 .25,.1 .25,0 .25,-.2 .25,0 .25,.3 .25,-.1 .25,-.1 .25,0 .25,0 .25,-1 .25,-1.4 .25,-1.9 .25,-2.3 .25,-.3 .25,2.4 .25,1.9 .25,1.5 .25,1 .25,0 .25,.2 .25,.1 .25,0 .25,-.2 .25,.2 .25,-.1 .25,-.2 .25,.3 .25,-.2 .25,-.8 .25,-1.7 .25,-2.4 .25,-3.1 .25,-3.8 .25,2.4 .25,3.4 .25,2.6 .25,2 .25,1.3 .25,0 .25,.2 .25,0 .25,.1 .25,0 .25,0 .25,0 .25,-.2 .25,.2 .25,-.2 .25,-.3 .25,-1 .25,-1.4 .25,-1.7 .25,-1.5 .25,2 .25,1.7 .25,1.2 .25,.9 .25,0 .25,.1 .25,0 .25,.2 .25,-.1 .25,0 .25,0 .25,0 .25,0 .25,-.1 .25,.2 .25,-.8 .25,-1 .25,-1.5 .25,-1.7 .25,0 .25,1.8 .25,1.4 .25,1.1 .25,.4 .25,.1 .25,.2 .25,-.2 .25,.2 .25,-.2 .25,.1 .25,-.1 .25,.2 .25,-.2 .25,.2 .25,-.2 .25,-.8 .25,-1.2 .25,-1.5 .25,-1.8 .25,1.3 .25,1.6 .25,1.3 .25,.9 .25,.2 .25,0 .25,.1 .25,0 .25,-.1 .25,.2 .25,-.1 .25,-.1 .25,0 .25,.2 .25,-.2 .25,-.8 .25,-1.5 .25,-1.9 .25,-2.5 .25,-1.6 .25,2.8 .25,2.2 .25,1.7 .25,1.2 .25,.6 .25,-.3 .25,.3 .25,0 .25,0 .25,-.2 .25,0 .25,.2 .25,-.3 .25,.1 .25,.2 .25,-.3 .25,.1 .25,-.4 .25,-.5 .25,.1 .25,.5 .25,.4 .25,-.2 .25,.2 .25,0 .25,.1 .25,-.2 .25,.2 .25,-.2 .25,.1 .25,0 .25,-.2 .25,.3 .25,-.1 .25,-.3 .25,-.9 .25,-1.3 .25,-1.7 .25,-2.1 .25,1.8 .25,1.8 .25,1.3 .25,1 .25,.3 .25,.2 .25,-.2 .25,.1 .25,0 .25,-.1 .25,.1 .25,0 .25,-.1 .25,.2 .25,-.3 .25,-.2 .25,-1 .25,-1.3 .25,-1.6 .25,-.8 .25,1.8 .25,1.4 .25,1.1 .25,.8 .25,.1 .25,0 .25,-.1 .25,-.1 .25,.2 .25,-.1 .25,-.1 .25,.1 .25,.1 .25,-.2 .25,-.5 .25,-1.5 .25,-2.1 .25,-2.7 .25,-3.4 .25,1 .25,3.2 .25,2.6 .25,1.9 .25,1.3 .25,.3 .25,.1 .25,-.3 .25,.1 .25,0 .25,-.1 .25,.2 .25,-.2 .25,.2 .25,-.2 .25,-.1 .25,-1 .25,-1.4 .25,-1.7 .25,-2.1 .25,2.1 .25,1.7 .25,1.4 .25,1 .25,.2 .25,.2 .25,-.2 .25,.2 .25,-.1 .25,.1 .25,-.2 .25,.2 .25,-.2 .25,.2 .25,0 .25,-.6 .25,-.9 .25,-1.3 .25,-1.7 .25,-.5 .25,1.7 .25,1.4 .25,1.1 .25,.7 .25,-.2 .25,.2 .25,-.1 .25,.2 .25,-.2 .25,-.1 .25,.3 .25,-.2 .25,0 .25,-.1 .25,.2 .25,-.9 .25,-1.1 .25,-1.5 .25,-1.9 .25,.8 .25,1.7 .25,1.4 .25,1 .25,.6 .25,0 .25,-.1 .25,0 .25,-.1 .25,.2 .25,-.1 .25,0 .25,0 .25,-.1 .25,.1 .25,-1.1 .25,-1.6 .25,-2.2 .25,-2.9 .25,-3.1 .25,3.5 .25,2.8 .25,2.1 .25,1.6 .25,.8 .25,.1 .25,.1 .25,-.3 .25,.2 .25,0 .25,-.1 .25,-.1 .25,.1 .25,.1 .25,-.1 .25,.2 .25,-.1 .25,-.4 .25,-.5 .25,-.1 .25,.5 .25,.4 .25,.1 .25,0 .25,.1 .25,-.1 .25,.1 .25,-.2 .25,.2 .25,-.3 .25,.1 .25,.1 .25,.1 .25,-.1 .25,-.2 .25,-.9 .25,-1.3 .25,-1.7 .25,-2.1 .25,1.2 .25,1.9 .25,1.4 .25,1.1 .25,.7 .25,-.1 .25,-.1 .25,.1 .25,0 .25,0 .25,.1 .25,-.1 .25,0 .25,-.1 .25,.1 .25,-.5 .25,-1.1 .25,-1.5 .25,-1.9 .25,-1.7 .25,2.2 .25,1.8 .25,1.4 .25,1 .25,.2 .25,-.1 .25,.3 .25,-.3 .25,.2 .25,0 .25,0 .25,-.2 .25,0 .25,.1 .25,-.2 .25,-1.2 .25,-1.7 .25,-2.2 .25,-2.9 .25,-.1 .25,2.8 .25,2.3 .25,1.8 .25,1.2 .25,.3 .25,.1 .25,-.2 .25,.1 .25,-.1 .25,-.1 .25,.3 .25,0 .25,-.2 .25,0 .25,.1 .25,-.7 .25,-1.1 .25,-1.3 .25,-1.6 .25,1.1 .25,1.4 .25,1.2 .25,.8 .25,.1 .25,.2 .25,-.1 .25,0 .25,-.2 .25,.2 .25,.1 .25,0 .25,-.3 .25,.1 .25,.2 .25,-.5 .25,-1 .25,-1.4 .25,-1.7 .25,-1.3 .25,2 .25,1.6 .25,1.2 .25,.9 .25,.1 .25,-.1 .25,.1 .25,0 .25,0 .25,.1 .25,-.1 .25,-.2 .25,.1 .25,0 .25,.1 .25,-.7 .25,-1.2 .25,-1.5 .25,-1.8 .25,.2 .25,1.8 .25,1.4 .25,1.1 .25,.7 .25,.1 .25,-.1 .25,0 .25,-.2 .25,.3 .25,0 .25,-.3 .25,.3 .25,-.2 .25,0 .25,-.6 .25,-1.5L314.50,19.7l-.25,-1.5 -.25,-.6 -.25,0 -.25,-.2 -.25,.3 -.25,-.3 -.25,0 -.25,.3 -.25,-.2 -.25,0 -.25,-.1 -.25,.1 -.25,.7 -.25,1.1 -.25,1.4 -.25,1.8 -.25,.2 -.25,-1.8 -.25,-1.5 -.25,-1.2 -.25,-.7 -.25,.1 -.25,0 -.25,.1 -.25,-.2 -.25,-.1 -.25,.1 -.25,0 -.25,0 -.25,.1 -.25,-.1 -.25,.1 -.25,.9 -.25,1.2 -.25,1.6 -.25,2 -.25,-1.3 -.25,-1.7 -.25,-1.4 -.25,-1 -.25,-.5 -.25,.2 -.25,.1 -.25,-.3 -.25,0 -.25,.1 -.25,.2 -.25,-.2 -.25,0 -.25,-.1 -.25,.2 -.25,.1 -.25,.8 -.25,1.2 -.25,1.4 -.25,1.1 -.25,-1.6 -.25,-1.3 -.25,-1.1 -.25,-.7 -.25,.1 -.25,0 -.25,-.2 -.25,0 -.25,.3 -.25,-.1 -.25,-.1 -.25,.1 -.25,-.2 -.25,.1 -.25,.3 -.25,1.2 -.25,1.8 -.25,2.3 -.25,2.8 -.25,-.1 -.25,-2.9 -.25,-2.2 -.25,-1.7 -.25,-1.2 -.25,-.2 -.25,.1 -.25,0 -.25,-.2 -.25,0 -.25,0 -.25,.2 -.25,-.3 -.25,.3 -.25,-.1 -.25,.2 -.25,1 -.25,1.4 -.25,1.8 -.25,2.2 -.25,-1.7 -.25,-1.9 -.25,-1.5 -.25,-1.1 -.25,-.5 -.25,.1 -.25,-.1 -.25,0 -.25,-.1 -.25,.1 -.25,0 -.25,0 -.25,.1 -.25,-.1 -.25,-.1 -.25,.7 -.25,1.1 -.25,1.4 -.25,1.9 -.25,1.2 -.25,-2.1 -.25,-1.7 -.25,-1.3 -.25,-.9 -.25,-.2 -.25,-.1 -.25,.1 -.25,.1 -.25,.1 -.25,-.3 -.25,.2 -.25,-.2 -.25,.1 -.25,-.1 -.25,.1 -.25,0 -.25,.1 -.25,.4 -.25,.5 -.25,-.1 -.25,-.5 -.25,-.4 -.25,-.1 -.25,.2 -.25,-.1 -.25,.1 -.25,.1 -.25,-.1 -.25,-.1 -.25,0 -.25,.2 -.25,-.3 -.25,.1 -.25,.1 -.25,.8 -.25,1.6 -.25,2.1 -.25,2.8 -.25,3.5 -.25,-3.1 -.25,-2.9 -.25,-2.2 -.25,-1.6 -.25,-1.1 -.25,.1 -.25,-.1 -.25,0 -.25,0 -.25,-.1 -.25,.2 -.25,-.1 -.25,0 -.25,-.1 -.25,0 -.25,.6 -.25,1 -.25,1.4 -.25,1.7 -.25,.8 -.25,-1.9 -.25,-1.5 -.25,-1.1 -.25,-.9 -.25,.2 -.25,-.1 -.25,0 -.25,-.2 -.25,.3 -.25,-.1 -.25,-.2 -.25,.2 -.25,-.1 -.25,.2 -.25,-.2 -.25,.7 -.25,1.1 -.25,1.4 -.25,1.7 -.25,-.5 -.25,-1.7 -.25,-1.3 -.25,-.9 -.25,-.6 -.25,0 -.25,.2 -.25,-.2 -.25,.2 -.25,-.2 -.25,.1 -.25,-.1 -.25,.2 -.25,-.2 -.25,.2 -.25,.2 -.25,1 -.25,1.4 -.25,1.7 -.25,2.1 -.25,-2.1 -.25,-1.7 -.25,-1.4 -.25,-1 -.25,-.1 -.25,-.2 -.25,.2 -.25,-.2 -.25,.2 -.25,-.1 -.25,0 -.25,.1 -.25,-.3 -.25,.1 -.25,.3 -.25,1.3 -.25,1.9 -.25,2.6 -.25,3.2 -.25,1 -.25,-3.4 -.25,-2.7 -.25,-2.1 -.25,-1.5 -.25,-.5 -.25,-.2 -.25,.1 -.25,.1 -.25,-.1 -.25,-.1 -.25,.2 -.25,-.1 -.25,-.1 -.25,0 -.25,.1 -.25,.8 -.25,1.1 -.25,1.4 -.25,1.8 -.25,-.8 -.25,-1.6 -.25,-1.3 -.25,-1 -.25,-.2 -.25,-.3 -.25,.2 -.25,-.1 -.25,0 -.25,.1 -.25,-.1 -.25,0 -.25,.1 -.25,-.2 -.25,.2 -.25,.3 -.25,1 -.25,1.3 -.25,1.8 -.25,1.8 -.25,-2.1 -.25,-1.7 -.25,-1.3 -.25,-.9 -.25,-.3 -.25,-.1 -.25,.3 -.25,-.2 -.25,0 -.25,.1 -.25,-.2 -.25,.2 -.25,-.2 -.25,.1 -.25,0 -.25,.2 -.25,-.2 -.25,.4 -.25,.5 -.25,.1 -.25,-.5 -.25,-.4 -.25,.1 -.25,-.3 -.25,.2 -.25,.1 -.25,-.3 -.25,.2 -.25,0 -.25,-.2 -.25,0 -.25,0 -.25,.3 -.25,-.3 -.25,.6 -.25,1.2 -.25,1.7 -.25,2.2 -.25,2.8 -.25,-1.6 -.25,-2.5 -.25,-1.9 -.25,-1.5 -.25,-.8 -.25,-.2 -.25,.2 -.25,0 -.25,-.1 -.25,-.1 -.25,.2 -.25,-.1 -.25,0 -.25,.1 -.25,0 -.25,.2 -.25,.9 -.25,1.3 -.25,1.6 -.25,1.3 -.25,-1.8 -.25,-1.5 -.25,-1.2 -.25,-.8 -.25,-.2 -.25,.2 -.25,-.2 -.25,.2 -.25,-.1 -.25,.1 -.25,-.2 -.25,.2 -.25,-.2 -.25,.2 -.25,.1 -.25,.4 -.25,1.1 -.25,1.4 -.25,1.8 -.25,0 -.25,-1.7 -.25,-1.5 -.25,-1 -.25,-.8 -.25,.2 -.25,-.1 -.25,0 -.25,0 -.25,0 -.25,0 -.25,-.1 -.25,.2 -.25,0 -.25,.1 -.25,0 -.25,.9 -.25,1.2 -.25,1.7 -.25,2 -.25,-1.5 -.25,-1.7 -.25,-1.4 -.25,-1 -.25,-.3 -.25,-.2 -.25,.2 -.25,-.2 -.25,0 -.25,0 -.25,0 -.25,.1 -.25,0 -.25,.2 -.25,0 -.25,1.3 -.25,2 -.25,2.6 -.25,3.4 -.25,2.4 -.25,-3.8 -.25,-3.1 -.25,-2.4 -.25,-1.7 -.25,-.8 -.25,-.2 -.25,.3 -.25,-.2 -.25,-.1 -.25,.2 -.25,-.2 -.25,0 -.25,.1 -.25,.2 -.25,0 -.25,1 -.25,1.5 -.25,1.9 -.25,2.4 -.25,-.3 -.25,-2.3 -.25,-1.9 -.25,-1.4 -.25,-1 -.25,0 -.25,0 -.25,-.1 -.25,-.1 -.25,.3 -.25,0 -.25,-.2 -.25,0 -.25,.1 -.25,.1 -.25,.1 -.25,1 -.25,1.3 -.25,1.7 -.25,2.2 -.25,-1.8 -.25,-1.8 -.25,-1.4 -.25,-1.1 -.25,-.3 -.25,-.1 -.25,.1 -.25,.1 -.25,-.1 -.25,0 -.25,0 -.25,-.1 -.25,-.1 -.25,.1 -.25,0 -.25,0 -.25,-.1 -.25,.4 -.25,.4 -.25,.3 -.25,-.5 -.25,-.4 -.25,-.2 -.25,.1 -.25,.1 -.25,-.1 -.25,.1 -.25,-.1 -.25,-.1 -.25,.1 -.25,-.1 -.25,0 -.25,.1 -.25,-.1 -.25,.7 -.25,1.6 -.25,2.1 -.25,2.9 -.25,3.6 -.25,-1 -.25,-3.4 -.25,-2.6 -.25,-2.1 -.25,-1.3 -.25,-.4 -.25,.1 -.25,-.1 -.25,-.1 -.25,.2 -.25,.1 -.25,-.2 -.25,.1 -.25,.1 -.25,-.3 -.25,.3 -.25,.9 -.25,1.2 -.25,1.5 -.25,1.9 -.25,-1.8 -.25,-1.6 -.25,-1.2 -.25,-.9 -.25,-.3 -.25,.3 -.25,-.1 -.25,-.2 -.25,.1 -.25,0 -.25,0 -.25,0 -.25,-.1 -.25,.3 -.25,-.1 -.25,.5 -.25,1.1 -.25,1.5 -.25,1.8 -.25,.8 -.25,-2 -.25,-1.6 -.25,-1.3 -.25,-.8 -.25,-.2 -.25,.1 -.25,.1 -.25,-.2 -.25,.2 -.25,0 -.25,-.1 -.25,0 -.25,-.1 -.25,.2 -.25,.1 -.25,.4 -.25,.9 -.25,1.3 -.25,1.5 -.25,-.6 -.25,-1.4 -.25,-1.1 -.25,-.9 -.25,-.2 -.25,0 -.25,.1 -.25,-.3 -.25,0 -.25,.1 -.25,0 -.25,.1 -.25,-.2 -.25,.2 -.25,-.2 -.25,.9 -.25,1.3 -.25,1.9 -.25,2.4 -.25,2.7 -.25,-2.9 -.25,-2.4 -.25,-1.8 -.25,-1.3 -.25,-.6 -.25,0 -.25,-.1 -.25,.1 -.25,0 -.25,-.1 -.25,.1 -.25,0 -.25,-.1 -.25,0 -.25,-.1 -.25,.7 -.25,1.1 -.25,1.5 -.25,1.8 -.25,.4 -.25,-1.9 -.25,-1.5 -.25,-1.2 -.25,-.8 -.25,0 -.25,-.1 -.25,.3 -.25,-.3 -.25,0 -.25,.2 -.25,-.1 -.25,-.1 -.25,.2 -.25,-.1 -.25,0 -.25,.8 -.25,1.1 -.25,1.4 -.25,1.7 -.25,-.9 -.25,-1.6 -.25,-1.2 -.25,-.9 -.25,-.3 -.25,-.2 -.25,.1 -.25,-.1 -.25,.2 -.25,0 -.25,-.2 -.25,.1 -.25,-.1 -.25,.3 -.25,-.2 -.25,.1 -.25,-.2 -.25,.4 -.25,.5 -.25,.5 -.25,-.6 -.25,-.5 -.25,-.1 -.25,0 -.25,-.1 -.25,.2 -.25,0 -.25,-.3 -.25,.3 -.25,0 -.25,-.2 -.25,0 -.25,0 -.25,-.1 -.25,.4 -.25,1.2 -.25,1.7 -.25,2.3 -.25,2.8 -.25,.3 -.25,-2.9 -.25,-2.4 -.25,-1.7 -.25,-1.3 -.25,-.2 -.25,-.2 -.25,.2 -.25,0 -.25,0 -.25,-.1 -.25,.1 -.25,-.2 -.25,.2 -.25,-.2 -.25,.2 -.25,.9 -.25,1.2 -.25,1.5 -.25,2 -.25,-1.3 -.25,-1.7 -.25,-1.3 -.25,-1 -.25,-.4 -.25,.2 -.25,-.2 -.25,-.1 -.25,.2 -.25,0 -.25,-.1 -.25,.1 -.25,-.2 -.25,.3 -.25,-.1 -.25,.1 -.25,.9 -.25,1.1 -.25,1.4 -.25,1.2 -.25,-1.7 -.25,-1.3 -.25,-1.1 -.25,-.7 -.25,0 -.25,-.1 -.25,.2 -.25,-.2 -.25,.2 -.25,-.1 -.25,-.1 -.25,0 -.25,0 -.25,.1 -.25,0 -.25,.8 -.25,1.1 -.25,1.6 -.25,1.9 -.25,-.1 -.25,-1.9 -.25,-1.5 -.25,-1.2 -.25,-.5 -.25,-.1 -.25,.1 -.25,0 -.25,-.1 -.25,0 -.25,0 -.25,0 -.25,-.2 -.25,0 -.25,.2 -.25,.6 -.25,1.5 -.25,2 -.25,2.6 -.25,3.3 -.25,-2.5 -.25,-2.8 -.25,-2.2 -.25,-1.6 -.25,-.9 -.25,0 -.25,0 -.25,-.2 -.25,.2 -.25,.1 -.25,-.2 -.25,0 -.25,.1 -.25,0 -.25,0 -.25,.5 -.25,1.1 -.25,1.6 -.25,1.9 -.25,1.2 -.25,-2.2 -.25,-1.7 -.25,-1.3 -.25,-1 -.25,0 -.25,-.3 -.25,0 -.25,0 -.25,.1 -.25,.2 -.25,-.3 -.25,.1 -.25,0 -.25,0 -.25,0 -.25,.9 -.25,1.2 -.25,1.6 -.25,2 -.25,-.4 -.25,-1.9 -.25,-1.5 -.25,-1.2 -.25,-.8 -.25,.1 -.25,.1 -.25,-.2 -.25,.1 -.25,-.1 -.25,.2 -.25,0 -.25,-.1 -.25,-.1 -.25,.1 -.25,-.1 -.25,.2 -.25,0 -.25,.4 -.25,.5 -.25,-.4 -.25,-.5 -.25,-.1 -.25,.1 -.25,0 -.25,.1 -.25,-.3 -.25,.3 -.25,-.3 -.25,.2 -.25,0 -.25,.1 -.25,-.2 -.25,-.1 -.25,.3 -.25,1.2 -.25,1.8 -.25,2.5 -.25,3 -.25,1.5 -.25,-3.4 -.25,-2.7 -.25,-2 -.25,-1.5 -.25,-.7 -.25,0 -.25,.2 -.25,-.2 -.25,0 -.25,.1 -.25,.1 -.25,-.2 -.25,.2 -.25,-.1 -.25,0 -.25,.8 -.25,1.1 -.25,1.5 -.25,1.8 -.25,-.6 -.25,-1.7 -.25,-1.4 -.25,-1 -.25,-.6 -.25,.1 -.25,0 -.25,.1 -.25,-.2 -.25,.1 -.25,-.1 -.25,.2 -.25,0 -.25,-.2 -.25,.1 -.25,.1 -.25,.8 -.25,1 -.25,1.4 -.25,1.6 -.25,-1.7 -.25,-1.3 -.25,-1.1 -.25,-.7 -.25,-.1 -.25,.1 -.25,0 -.25,-.1 -.25,.2 -.25,-.2 -.25,0 -.25,.1 -.25,0 -.25,-.2 -.25,.2 -.25,.5 -.25,1 -.25,1.4 -.25,1.7 -.25,.6 -.25,-1.9 -.25,-1.5 -.25,-1.1 -.25,-.7 -.25,-.1 -.25,.1 -.25,-.2 -.25,.2 -.25,-.1 -.25,-.1 -.25,0 -.25,.1 -.25,.1 -.25,-.2 -.25,.8 -.25,1.5 -.25,2.1 -.25,2.7 -.25,3.5 -.25,-1.6 -.25,-3.2 -.25,-2.4 -.25,-1.9 -.25,-1.2 -.25,-.1 -.25,-.2 -.25,.1 -.25,.1 -.25,.1 -.25,-.1 -.25,0 -.25,0 -.25,-.1 -.25,0 -.25,.4 -.25,1.1 -.25,1.4 -.25,1.8 -.25,1.9 -.25,-2.2 -.25,-1.7 -.25,-1.4 -.25,-1 -.25,-.1 -.25,-.1 -.25,0 -.25,0 -.25,-.2 -.25,.1 -.25,0 -.25,.2 -.25,-.1 -.25,0 -.25,0 -.25,.7 -.25,1.1 -.25,1.6 -.25,2 -.25,.3 -.25,-2.1 -.25,-1.6 -.25,-1.2 -.25,-.9 -.25,-.1 -.25,.2 -.25,0 -.25,0 -.25,0 -.25,-.1 -.25,-.1 -.25,0 -.25,.1 -.25,.2 -.25,-.2 -.25,.2 -.25,-.2 -.25,.4 -.25,.5 -.25,-.3 -.25,-.4 -.25,-.2 -.25,-.1 -.25,0 -.25,.1 -.25,.1 -.25,-.1 -.25,-.1 -.25,.1 -.25,-.1 -.25,.1 -.25,.2 -.25,-.1 -.25,0 -.25,.8 -.25,1.4 -.25,2 -.25,2.5 -.25,2.2 -.25,-2.9 -.25,-2.4 -.25,-1.8 -.25,-1.3 -.25,-.5 -.25,0 -.25,-.1 -.25,-.1 -.25,.2 -.25,.1 -.25,0 -.25,-.2 -.25,.2 -.25,0 -.25,-.2 -.25,.4 -.25,.9 -.25,1.2 -.25,1.5 -.25,0 -.25,-1.5 -.25,-1.2 -.25,-.9 -.25,-.4 -.25,.1 -.25,-.2 -.25,.2 -.25,-.1 -.25,0 -.25,-.1 -.25,0 -.25,.2 -.25,-.2 -.25,.1 -.25,.2 -.25,.9 -.25,1.3 -.25,1.6 -.25,2 -.25,-1.4 -.25,-1.8 -.25,-1.4 -.25,-1 -.25,-.4 -.25,-.1 -.25,0 -.25,0 -.25,0 -.25,.2 -.25,-.1 -.25,-.1 -.25,0 -.25,.3 -.25,-.1 -.25,.1 -.25,.9 -.25,1.1 -.25,1.4 -.25,1 -.25,-1.6 -.25,-1.3 -.25,-1 -.25,-.6 -.25,-.2 -.25,0 -.25,.2 -.25,0 -.25,.1 -.25,-.3 -.25,.2 -.25,-.2 -.25,.3 -.25,0 -.25,.3 -.25,1.5 -.25,2.1 -.25,2.8 -.25,3.5 -.25,-.5 -.25,-3.4 -.25,-2.7 -.25,-2 -.25,-1.4 -.25,-.5 -.25,.1 -.25,.2 -.25,-.2 -.25,0 -.25,-.1 -.25,.1 -.25,-.1 -.25,0 -.25,.2 -.25,.2 -.25,1 -.25,1.4 -.25,1.8 -.25,2.3 -.25,-1.9 -.25,-1.9 -.25,-1.5 -.25,-1 -.25,-.6 -.25,0 -.25,.1 -.25,-.1 -.25,0 -.25,.2 -.25,-.1 -.25,0 -.25,.2 -.25,-.2 -.25,-.1 -.25,.4 -.25,.8 -.25,1.1 -.25,1.4 -.25,.8 -.25,-1.6 -.25,-1.2 -.25,-1 -.25,-.7 -.25,.2 -.25,0 -.25,-.1 -.25,-.1 -.25,.2 -.25,.1 -.25,-.3 -.25,.1 -.25,.1 -.25,.1 -.25,-.2 -.25,-.1 -.25,.1 -.25,.4 -.25,.5 -.25,-.1 -.25,-.5 -.25,-.4 -.25,.3 -.25,0 -.25,-.1 -.25,0 -.25,-.1 -.25,.2 -.25,-.3 -.25,.2 -.25,0 -.25,.1 -.25,-.1 -.25,0 -.25,.9 -.25,1.6 -.25,2.2 -.25,2.9 -.25,3.5 -.25,-3.4 -.25,-2.9 -.25,-2.2 -.25,-1.7 -.25,-1 -.25,0 -.25,-.1 -.25,.1 -.25,.1 -.25,0 -.25,0 -.25,-.2 -.25,.1 -.25,-.1 -.25,0 -.25,.7 -.25,1.1 -.25,1.4 -.25,1.8 -.25,.7 -.25,-2 -.25,-1.5 -.25,-1.2 -.25,-.8 -.25,0 -.25,-.2 -.25,0 -.25,0 -.25,.3 -.25,-.2 -.25,0 -.25,.2 -.25,-.1 -.25,-.2 -.25,.2 -.25,.8 -.25,1.2 -.25,1.6 -.25,2 -.25,-.8 -.25,-1.8 -.25,-1.5 -.25,-1 -.25,-.4 -.25,-.2 -.25,0 -.25,0 -.25,.2 -.25,-.2 -.25,0 -.25,-.1 -.25,.1 -.25,.1 -.25,-.2 -.25,.4 -.25,1 -.25,1.4 -.25,1.7 -.25,1.9 -.25,-2.1 -.25,-1.7 -.25,-1.3 -.25,-.9 -.25,-.2 -.25,-.2 -.25,.1 -.25,.1 -.25,-.1 -.25,-.1 -.25,0 -.25,0 -.25,.1 -.25,0 -.25,.1 -.25,1.1 -.25,1.6 -.25,2.1 -.25,2.6 -.25,.6 -.25,-2.7 -.25,-2.2 -.25,-1.7 -.25,-1.2 -.25,-.1 -.25,0 -.25,-.2 -.25,-.1 -.25,.2 -.25,0 -.25,0 -.25,0 -.25,-.2 -.25,.3 -.25,-.1 -.25,.9 -.25,1.2 -.25,1.6 -.25,1.9 -.25,-1 -.25,-1.8 -.25,-1.4 -.25,-1 -.25,-.4 -.25,.1 -.25,-.1 -.25,0 -.25,-.2 -.25,0 -.25,.2 -.25,-.1 -.25,.2 -.25,-.3 -.25,.1 -.25,.3 -.25,1 -.25,1.3 -.25,1.7 -.25,1.5 -.25,-1.9 -.25,-1.6 -.25,-1.2 -.25,-.9 -.25,-.3 -.25,.2 -.25,-.1 -.25,.1 -.25,0 -.25,-.2 -.25,0 -.25,.3 -.25,-.3 -.25,.1 -.25,0 -.25,.2 -.25,-.1 -.25,.4 -.25,.6 -.25,0 -.25,-.6 -.25,-.3 -.25,-.1 -.25,0 -.25,-.1 -.25,.1 -.25,0 -.25,-.2 -.25,0 -.25,.1 -.25,.1 -.25,-.1 -.25,.2 -.25,-.2 -.25,.5 -.25,1.3 -.25,1.7 -.25,2.3 -.25,2.8 -.25,-1.8 -.25,-2.5 -.25,-2 -.25,-1.4Z" fill="#45e8a3"/></svg><svg style="position:absolute;left:218.00px;top:234.20px;" width="314.50" height="21.00" viewBox="0 0 314.50 21.00"><rect x="0" y="0" width="314.50" height="21" fill="#161618"/><rect x="0.35" y="0.35" width="70.30" height="20.3" fill="#2b5e4c" stroke="#4c8a70" stroke-width="0.7" rx="1"/><rect x="123.75" y="0.35" width="191.10" height="20.3" fill="#2b5e4c" stroke="#4c8a70" stroke-width="0.7" rx="1"/><rect x="71.00" y="0" width="52.40" height="21" fill="#1b1b1d"/><clipPath id="cg"><rect x="0" y="0" width="71.00" height="21"/><rect x="123.40" y="0" width="191.10" height="21"/></clipPath><clipPath id="cd"><rect x="71.00" y="0" width="52.40" height="21"/></clipPath><path d="M0,9.7l.25,-.7 .25,-.9 .25,-1.2 .25,-.9 .25,1.4 .25,1.1 .25,.8 .25,.6 .25,.3 .25,-.1 .25,.1 .25,-.1 .25,.1 .25,0 .25,0 .25,-.1 .25,0 .25,.1 .25,-.1 .25,0 .25,0 .25,-.2 .25,-.3 .25,.1 .25,.2 .25,.2 .25,0 .25,.1 .25,0 .25,0 .25,-.1 .25,.1 .25,0 .25,-.1 .25,0 .25,.1 .25,-.1 .25,.1 .25,-.1 .25,-.4 .25,-.6 .25,-.8 .25,-.9 .25,.7 .25,.8 .25,.6 .25,.5 .25,.2 .25,0 .25,-.1 .25,0 .25,0 .25,.1 .25,0 .25,-.1 .25,0 .25,0 .25,0 .25,-.2 .25,-.5 .25,-.6 .25,-.9 .25,-.5 .25,1 .25,.7 .25,.6 .25,.4 .25,0 .25,.1 .25,-.1 .25,0 .25,0 .25,0 .25,.1 .25,0 .25,-.1 .25,0 .25,-.1 .25,-.6 .25,-.8 .25,-1 .25,-1.3 .25,.3 .25,1.2 .25,1 .25,.8 .25,.5 .25,.1 .25,0 .25,0 .25,0 .25,0 .25,0 .25,-.1 .25,0 .25,.1 .25,-.1 .25,-.1 .25,-.4 .25,-.6 .25,-.9 .25,-.9 .25,.9 .25,.8 .25,.6 .25,.5 .25,.2 .25,-.1 .25,.1 .25,0 .25,0 .25,0 .25,-.1 .25,.1 .25,0 .25,-.1 .25,0 .25,-.2 .25,-.5 .25,-.7 .25,-.9 .25,-.4 .25,1 .25,.7 .25,.6 .25,.4 .25,.1 .25,-.1 .25,0 .25,.1 .25,0 .25,-.1 .25,.1 .25,0 .25,0 .25,-.1 .25,0 .25,-.4 .25,-.5 .25,-.8 .25,-.9 .25,.3 .25,.9 .25,.7 .25,.5 .25,.3 .25,0 .25,0 .25,0 .25,-.1 .25,0 .25,0 .25,.1 .25,0 .25,0 .25,0 .25,-.5 .25,-.8 .25,-1.1 .25,-1.4 .25,-1.6 .25,1.7 .25,1.3 .25,1.1 .25,.8 .25,.4 .25,0 .25,0 .25,0 .25,0 .25,.1 .25,-.1 .25,.1 .25,-.1 .25,0 .25,0 .25,0 .25,.1 .25,-.2 .25,-.2 .25,-.1 .25,.3 .25,.1 .25,.1 .25,0 .25,-.1 .25,0 .25,.1 .25,0 .25,-.1 .25,0 .25,.1 .25,0 .25,-.1 .25,0 .25,.1 .25,-.3 .25,-.5 .25,-.6 .25,-.7 .25,.3 .25,.7 .25,.5 .25,.4 .25,.2 .25,0 .25,-.1 .25,.1 .25,0 .25,-.1 .25,.1 .25,0 .25,0 .25,0 .25,0 .25,-.3 .25,-.5 .25,-.7 .25,-.9 .25,-.9 .25,1.1 .25,.9 .25,.6 .25,.5 .25,.1 .25,.1 .25,0 .25,-.1 .25,.1 .25,0 .25,0 .25,-.1 .25,.1 .25,0 .25,-.2 .25,-.7 .25,-1 .25,-1.3 .25,-1.6 .25,-.2 .25,1.7 .25,1.3 .25,1 .25,.7 .25,.2 .25,0 .25,.1 .25,-.1 .25,.1 .25,-.1 .25,0 .25,0 .25,.1 .25,0 .25,-.1 .25,-.3 .25,-.4 .25,-.7 .25,-.7 .25,.4 .25,.7 .25,.6 .25,.3 .25,.1 .25,0 .25,.1 .25,0 .25,0 .25,-.1 .25,.1 .25,0 .25,0 .25,0 .25,0 .25,-.2 .25,-.5 .25,-.7 .25,-.8 .25,-.7 .25,.9 .25,.8 .25,.6 .25,.5 .25,0 .25,.1 .25,-.1 .25,.1 .25,0 .25,0 .25,-.1 .25,0 .25,.1 .25,-.1 .25,.1 .25,-.2 .25,-.5 .25,-.5 .25,-.7 .25,0 .25,.7 .25,.5 .25,.5 .25,.1 .25,0 .25,0 .25,.1 .25,-.1 .25,0 .25,0 .25,.1 .25,0 .25,-.1 .25,0 .25,-.2 .25,-.6 .25,-.9 .25,-1.1 .25,-1.4 .25,1 .25,1.2 .25,.9 .25,.7 .25,.4 .25,0 .25,0 .25,.1 .25,0 .25,0 .25,0 .25,-.1 .25,0 .25,.1 .25,0 .25,0 .25,0 .25,-.1 .25,-.2 .25,-.2 .25,.3 .25,.2 .25,-.1 .25,0 .25,0 .25,0 .25,.1 .25,0 .25,0 .25,-.1 .25,0 .25,0 .25,0 .25,.1 .25,-.1 .25,-.4 .25,-.6 .25,-.7 .25,-1 .25,.1 .25,1 .25,.7 .25,.6 .25,.3 .25,0 .25,0 .25,0 .25,.1 .25,0 .25,0 .25,-.1 .25,0 .25,0 .25,0 .25,-.1 .25,-.5 .25,-.6 .25,-.9 .25,-1 .25,.9 .25,.9 .25,.7 .25,.5 .25,.2 .25,0 .25,-.1 .25,0 .25,0 .25,0 .25,0 .25,.1 .25,0 .25,-.1 .25,0 .25,-.6 .25,-.9 .25,-1.2 .25,-1.5 .25,-.8 .25,1.7 .25,1.3 .25,1 .25,.7 .25,.4 .25,-.1 .25,.1 .25,0 .25,0 .25,0 .25,-.1 .25,.1 .25,-.1 .25,.1 .25,-.1 .25,-.3 .25,-.6 .25,-.7 .25,-.9 .25,.3 .25,.8 .25,.7 .25,.5 .25,.2 .25,.1 .25,-.1 .25,0 .25,.1 .25,0 .25,-.1 .25,.1 .25,-.1 .25,0 .25,.1 .25,-.1 .25,-.3 .25,-.5 .25,-.7 .25,-.8 .25,.8 .25,.6 .25,.5 .25,.4 .25,.1 .25,0 .25,-.1 .25,0 .25,.1 .25,0 .25,0 .25,-.1 .25,.1 .25,0 .25,0 .25,-.3 .25,-.5 .25,-.6 .25,-.9 .25,-.2 .25,.8 .25,.7 .25,.6 .25,.4 .25,0 .25,-.1 .25,.1 .25,-.1 .25,0 .25,.1 .25,0 .25,-.1 .25,.1 .25,0 .25,-.3 .25,-.7 .25,-1 .25,-1.3 .25,-1.6 .25,.7 .25,1.4 .25,1.2 .25,.9 .25,.6 .25,.1 .25,0 .25,-.1 .25,0 .25,0 .25,.1 .25,-.1 .25,.1 .25,-.1 .25,0 .25,0 .25,0 .25,0 .25,-.2 .25,-.2 .25,.2 .25,.2 .25,0 .25,.1 .25,0 .25,0 .25,0 .25,-.1 .25,0 .25,.1 .25,0 .25,0 .25,-.1 .25,.1 .25,0 .25,-.4 .25,-.5 .25,-.8 .25,-.9 .25,-.2 .25,1 .25,.7 .25,.6 .25,.4 .25,.1 .25,0 .25,0 .25,0 .25,-.1 .25,.1 .25,0 .25,0 .25,0 .25,-.1 .25,0 .25,-.5 .25,-.6 .25,-.9 .25,-1 .25,.6 .25,.9 .25,.7 .25,.6 .25,.2 .25,0 .25,0 .25,.1 .25,0 .25,-.1 .25,0 .25,.1 .25,-.1 .25,0 .25,0 .25,-.4 .25,-.8 .25,-1 .25,-1.4 .25,-1.2 .25,1.6 .25,1.2 .25,1 .25,.7 .25,.3 .25,.1 .25,0 .25,-.1 .25,0 .25,0 .25,0 .25,0 .25,0 .25,0 .25,0 .25,-.3 .25,-.5 .25,-.8 .25,-.9 .25,0 .25,.9 .25,.7 .25,.6 .25,.4 .25,0 .25,0 .25,0 .25,0 .25,0 .25,-.1 .25,.1 .25,-.1 .25,.1 .25,0 .25,0 .25,-.4 .25,-.5 .25,-.6 .25,-.8 .25,.5 .25,.7 .25,.6 .25,.4 .25,0 .25,0 .25,.1 .25,-.1 .25,.1 .25,-.1 .25,0 .25,.1 .25,0 .25,-.1 .25,.1 .25,-.2 .25,-.5 .25,-.6 .25,-.9 .25,-.6 .25,1 .25,.7 .25,.6 .25,.4 .25,.1 .25,-.1 .25,.1 .25,-.1 .25,0 .25,0 .25,0 .25,0 .25,.1 .25,-.1 .25,-.1 .25,-.6 .25,-.8 .25,-1.2 .25,-1.4 .25,.2 .25,1.3 .25,1.1 .25,.9 .25,.5 .25,.2 .25,0 .25,0 .25,0 .25,-.1 .25,0 .25,.1 .25,-.1 .25,0 .25,.1 .25,-.1 .25,0 .25,0 .25,-.3 .25,-.2 .25,.2 .25,.2 .25,.2 .25,-.1 .25,.1 .25,-.1 .25,.1 .25,-.1 .25,.1 .25,-.1 .25,0 .25,.1 .25,0 .25,0 .25,-.1 .25,-.1 .25,-.5 .25,-.5 .25,-.8 .25,-.4 .25,.8 .25,.7 .25,.5 .25,.4 .25,0 .25,-.1 .25,.1 .25,0 .25,-.1 .25,.1 .25,0 .25,-.1 .25,.1 .25,0 .25,0 .25,-.4 .25,-.6 .25,-.7 .25,-.9 .25,.2 .25,.9 .25,.6 .25,.6 .25,.3 .25,0 .25,0 .25,-.1 .25,0 .25,.1 .25,-.1 .25,0 .25,.1 .25,-.1 .25,0 .25,-.3 .25,-.6 .25,-.9 .25,-1.1 .25,-1.4 .25,1.3 .25,1.1 .25,.9 .25,.7 .25,.4 .25,-.1 .25,.1 .25,-.1 .25,.1 .25,-.1 .25,.1 .25,0 .25,-.1 .25,0 .25,0 .25,-.1 .25,-.4 .25,-.5 .25,-.7 .25,-.3 .25,.7 .25,.6 .25,.5 .25,.2 .25,0 .25,.1 .25,0 .25,0 .25,-.1 .25,0 .25,.1 .25,-.1 .25,.1 .25,0 .25,-.1 .25,-.4 .25,-.6 .25,-.7 .25,-1 .25,.3 .25,.9 .25,.7 .25,.6 .25,.2 .25,0 .25,.1 .25,0 .25,0 .25,0 .25,0 .25,0 .25,-.1 .25,0 .25,.1 .25,-.1 .25,-.5 .25,-.6 .25,-.7 .25,-.9 .25,.9 .25,.8 .25,.6 .25,.4 .25,.1 .25,-.1 .25,0 .25,.1 .25,-.1 .25,0 .25,.1 .25,0 .25,-.1 .25,.1 .25,-.2 .25,-.7 .25,-.9 .25,-1.3 .25,-1.7 .25,-.4 .25,1.7 .25,1.4 .25,1 .25,.8 .25,.3 .25,-.1 .25,.1 .25,0 .25,0 .25,0 .25,0 .25,-.1 .25,0 .25,0 .25,.1 .25,0 .25,-.1 .25,-.2 .25,-.2 .25,.1 .25,.2 .25,.2 .25,0 .25,0 .25,0 .25,0 .25,0 .25,-.1 .25,0 .25,0 .25,0 .25,0 .25,.1 .25,-.1 .25,-.1 .25,-.5 .25,-.7 .25,-.9 .25,-.9 .25,1.1 .25,.8 .25,.7 .25,.4 .25,.1 .25,0 .25,.1 .25,0 .25,-.1 .25,0 .25,.1 .25,0 .25,-.1 .25,0 .25,0 .25,-.4 .25,-.7 .25,-.9 .25,-1.2 .25,-.1 .25,1.2 .25,.9 .25,.7 .25,.5 .25,0 .25,.1 .25,0 .25,0 .25,-.1 .25,.1 .25,-.1 .25,0 .25,.1 .25,-.1 .25,-.4 .25,-.8 .25,-1.1 .25,-1.5 .25,-1.8 .25,1.1 .25,1.6 .25,1.3 .25,.9 .25,.7 .25,0 .25,.1 .25,0 .25,0 .25,0 .25,0 .25,0 .25,-.1 .25,.1 .25,-.1 .25,-.1 .25,-.5 .25,-.7 .25,-.8 .25,-.7 .25,1 .25,.7 .25,.6 .25,.5 .25,0 .25,0 .25,0 .25,.1 .25,0 .25,0 .25,0 .25,0 .25,0 .25,-.1 .25,.1 .25,-.4 .25,-.5 .25,-.7 .25,-.8 .25,0 .25,.9 .25,.6 .25,.6 .25,.2 .25,0 .25,.1 .25,-.1 .25,.1 .25,-.1 .25,.1 .25,-.1 .25,.1 .25,-.1 .25,.1 .25,-.1 .25,-.4 .25,-.5 .25,-.8 .25,-.8 .25,.6 .25,.8 .25,.6 .25,.4 .25,.1 .25,0 .25,.1 .25,0 .25,-.1 .25,.1 .25,0 .25,-.1 .25,0 .25,.1 .25,-.1 .25,-.4 .25,-.7 .25,-.9 .25,-1.2 .25,-.8 .25,1.4 .25,1 .25,.9 .25,.5 .25,.3 .25,-.1 .25,.1 .25,0 .25,0 .25,-.1 .25,0 .25,.1 .25,-.1 .25,0 .25,.1 .25,-.1 .25,0 .25,-.2 .25,-.2 .25,0 .25,.3 .25,.2 .25,-.1 .25,.1 .25,0 .25,0 .25,-.1 .25,.1 .25,-.1 .25,.1 .25,-.1 .25,0 .25,.1 .25,-.1 .25,-.1 .25,-.4 .25,-.6 .25,-.9 .25,-.9 .25,.8 .25,.9 .25,.6 .25,.5 .25,.1 .25,.1 .25,-.1 .25,.1 .25,-.1 .25,0 .25,0 .25,.1 .25,-.1 .25,.1 .25,-.1 .25,-.1 .25,-.5 .25,-.6 .25,-.8 .25,-.4 .25,.9 .25,.7 .25,.5 .25,.4 .25,0 .25,0 .25,0 .25,-.1 .25,.1 .25,0 .25,-.1 .25,.1 .25,0 .25,-.1 .25,-.2 .25,-.7 .25,-1 .25,-1.3 .25,-1.7 .25,.5 .25,1.6 .25,1.2 .25,.9 .25,.6 .25,.2 .25,0 .25,-.1 .25,0 .25,0 .25,0 .25,0 .25,0 .25,.1 .25,-.1 .25,-.1 .25,-.5 .25,-.6 .25,-.8 .25,-1.1 .25,1 .25,.9 .25,.6 .25,.5 .25,.1 .25,.1 .25,-.1 .25,.1 .25,0 .25,0 .25,-.1 .25,.1 .25,-.1 .25,.1 .25,0 .25,-.3 .25,-.4 .25,-.6 .25,-.8 .25,-.3 .25,.8 .25,.7 .25,.5 .25,.4 .25,-.1 .25,.1 .25,-.1 .25,.1 .25,-.1 .25,0 .25,.1 .25,-.1 .25,0 .25,0 .25,0 .25,-.4 .25,-.5 .25,-.7 .25,-.9 .25,.4 .25,.8 .25,.6 .25,.5 .25,.3 .25,0 .25,0 .25,0 .25,-.1 .25,.1 .25,-.1 .25,.1 .25,0 .25,-.1 .25,.1 .25,-.5 .25,-.8 .25,-1.1 .25,-1.4 .25,-1.5 .25,1.7 .25,1.3 .25,1.1 .25,.7 .25,.4 .25,0 .25,.1 .25,-.1 .25,.1 .25,0 .25,-.1 .25,0 .25,0 .25,.1 .25,-.1 .25,.1 .25,-.1 .25,-.1 .25,-.3 .25,0 .25,.2 .25,.2 .25,.1 .25,0 .25,0 .25,0 .25,0 .25,-.1 .25,.1 .25,-.1 .25,0 .25,.1 .25,0 .25,0 .25,-.1 .25,-.5 .25,-.6 .25,-.8 .25,-1 .25,.5 .25,1 .25,.7 .25,.5 .25,.3 .25,0 .25,-.1 .25,.1 .25,0 .25,0 .25,0 .25,0 .25,0 .25,-.1 .25,.1 .25,-.3 .25,-.5 .25,-.7 .25,-.9 .25,-.9 .25,1.1 .25,.9 .25,.6 .25,.5 .25,.1 .25,0 .25,.1 .25,-.1 .25,.1 .25,0 .25,0 .25,-.1 .25,0 .25,0 .25,-.1 .25,-.5 .25,-.9 .25,-1.1 .25,-1.3 .25,-.1 .25,1.4 .25,1.1 .25,.8 .25,.6 .25,.2 .25,0 .25,-.1 .25,0 .25,0 .25,0 .25,.1 .25,0 .25,-.1 .25,0 .25,.1 .25,-.4 .25,-.5 .25,-.6 .25,-.8 .25,.5 .25,.7 .25,.6 .25,.4 .25,0 .25,.1 .25,-.1 .25,.1 .25,-.1 .25,.1 .25,0 .25,0 .25,-.1 .25,0 .25,.1 .25,-.2 .25,-.5 .25,-.7 .25,-.8 .25,-.6 .25,.9 .25,.8 .25,.6 .25,.4 .25,.1 .25,-.1 .25,.1 .25,0 .25,0 .25,0 .25,0 .25,-.1 .25,0 .25,0 .25,.1 .25,-.4 .25,-.5 .25,-.7 .25,-.9 .25,0 .25,.9 .25,.7 .25,.5 .25,.4 .25,0 .25,0 .25,-.1 .25,0 .25,.1 .25,0 .25,-.1 .25,.1 .25,-.1 .25,0 .25,-.3 .25,-.7L314.50,11.9l-.25,-.7 -.25,-.3 -.25,0 -.25,-.1 -.25,.1 -.25,-.1 -.25,0 -.25,.1 -.25,0 -.25,-.1 -.25,0 -.25,0 -.25,.4 -.25,.5 -.25,.7 -.25,.9 -.25,0 -.25,-.9 -.25,-.7 -.25,-.5 -.25,-.4 -.25,.1 -.25,0 -.25,0 -.25,-.1 -.25,0 -.25,0 -.25,0 -.25,0 -.25,.1 -.25,-.1 -.25,.1 -.25,.4 -.25,.6 -.25,.8 -.25,.9 -.25,-.6 -.25,-.8 -.25,-.7 -.25,-.5 -.25,-.2 -.25,.1 -.25,0 -.25,-.1 -.25,0 -.25,0 -.25,.1 -.25,-.1 -.25,.1 -.25,-.1 -.25,.1 -.25,0 -.25,.4 -.25,.6 -.25,.7 -.25,.5 -.25,-.8 -.25,-.6 -.25,-.5 -.25,-.4 -.25,.1 -.25,0 -.25,-.1 -.25,0 -.25,.1 -.25,0 -.25,0 -.25,0 -.25,-.1 -.25,0 -.25,.2 -.25,.6 -.25,.8 -.25,1.1 -.25,1.4 -.25,-.1 -.25,-1.3 -.25,-1.1 -.25,-.9 -.25,-.5 -.25,-.1 -.25,0 -.25,0 -.25,-.1 -.25,0 -.25,0 -.25,.1 -.25,-.1 -.25,.1 -.25,0 -.25,.1 -.25,.5 -.25,.6 -.25,.9 -.25,1.1 -.25,-.9 -.25,-.9 -.25,-.7 -.25,-.5 -.25,-.3 -.25,.1 -.25,-.1 -.25,0 -.25,0 -.25,0 -.25,0 -.25,0 -.25,.1 -.25,-.1 -.25,0 -.25,.3 -.25,.5 -.25,.7 -.25,1 -.25,.5 -.25,-1 -.25,-.8 -.25,-.6 -.25,-.5 -.25,-.1 -.25,0 -.25,0 -.25,.1 -.25,0 -.25,-.1 -.25,.1 -.25,-.1 -.25,0 -.25,0 -.25,0 -.25,0 -.25,.1 -.25,.2 -.25,.2 -.25,0 -.25,-.3 -.25,-.1 -.25,-.1 -.25,.1 -.25,-.1 -.25,.1 -.25,0 -.25,0 -.25,-.1 -.25,0 -.25,.1 -.25,-.1 -.25,.1 -.25,0 -.25,.4 -.25,.7 -.25,1.1 -.25,1.3 -.25,1.7 -.25,-1.5 -.25,-1.4 -.25,-1.1 -.25,-.8 -.25,-.5 -.25,.1 -.25,-.1 -.25,0 -.25,.1 -.25,-.1 -.25,.1 -.25,-.1 -.25,0 -.25,0 -.25,0 -.25,.3 -.25,.5 -.25,.6 -.25,.8 -.25,.4 -.25,-.9 -.25,-.7 -.25,-.5 -.25,-.4 -.25,0 -.25,0 -.25,0 -.25,-.1 -.25,.1 -.25,0 -.25,-.1 -.25,.1 -.25,-.1 -.25,.1 -.25,-.1 -.25,.4 -.25,.5 -.25,.7 -.25,.8 -.25,-.3 -.25,-.8 -.25,-.6 -.25,-.4 -.25,-.3 -.25,0 -.25,.1 -.25,-.1 -.25,.1 -.25,-.1 -.25,0 -.25,0 -.25,.1 -.25,-.1 -.25,.1 -.25,.1 -.25,.5 -.25,.6 -.25,.9 -.25,1 -.25,-1.1 -.25,-.8 -.25,-.6 -.25,-.5 -.25,-.1 -.25,-.1 -.25,.1 -.25,0 -.25,0 -.25,0 -.25,0 -.25,0 -.25,-.1 -.25,0 -.25,.2 -.25,.6 -.25,.9 -.25,1.2 -.25,1.6 -.25,.5 -.25,-1.7 -.25,-1.3 -.25,-1 -.25,-.7 -.25,-.2 -.25,-.1 -.25,0 -.25,.1 -.25,-.1 -.25,0 -.25,.1 -.25,-.1 -.25,0 -.25,0 -.25,0 -.25,.4 -.25,.5 -.25,.7 -.25,.9 -.25,-.4 -.25,-.8 -.25,-.6 -.25,-.5 -.25,-.1 -.25,-.1 -.25,.1 -.25,-.1 -.25,.1 -.25,0 -.25,0 -.25,-.1 -.25,.1 -.25,-.1 -.25,.1 -.25,.1 -.25,.5 -.25,.6 -.25,.9 -.25,.8 -.25,-.9 -.25,-.9 -.25,-.6 -.25,-.4 -.25,-.1 -.25,-.1 -.25,.1 -.25,0 -.25,-.1 -.25,.1 -.25,-.1 -.25,.1 -.25,-.1 -.25,0 -.25,0 -.25,.1 -.25,-.1 -.25,.2 -.25,.3 -.25,0 -.25,-.2 -.25,-.2 -.25,0 -.25,-.1 -.25,.1 -.25,0 -.25,-.1 -.25,.1 -.25,0 -.25,-.1 -.25,0 -.25,0 -.25,.1 -.25,-.1 -.25,.3 -.25,.5 -.25,.9 -.25,1 -.25,1.4 -.25,-.8 -.25,-1.2 -.25,-.9 -.25,-.7 -.25,-.4 -.25,-.1 -.25,.1 -.25,0 -.25,-.1 -.25,0 -.25,.1 -.25,-.1 -.25,0 -.25,.1 -.25,0 -.25,.1 -.25,.4 -.25,.6 -.25,.8 -.25,.6 -.25,-.8 -.25,-.8 -.25,-.5 -.25,-.4 -.25,-.1 -.25,.1 -.25,-.1 -.25,.1 -.25,-.1 -.25,.1 -.25,-.1 -.25,.1 -.25,-.1 -.25,.1 -.25,0 -.25,.2 -.25,.6 -.25,.6 -.25,.9 -.25,0 -.25,-.8 -.25,-.7 -.25,-.5 -.25,-.4 -.25,.1 -.25,-.1 -.25,0 -.25,0 -.25,0 -.25,0 -.25,0 -.25,.1 -.25,0 -.25,0 -.25,0 -.25,.5 -.25,.6 -.25,.7 -.25,1 -.25,-.7 -.25,-.8 -.25,-.7 -.25,-.5 -.25,-.1 -.25,-.1 -.25,.1 -.25,-.1 -.25,0 -.25,0 -.25,0 -.25,0 -.25,0 -.25,.1 -.25,0 -.25,.7 -.25,.9 -.25,1.3 -.25,1.6 -.25,1.1 -.25,-1.8 -.25,-1.5 -.25,-1.1 -.25,-.8 -.25,-.4 -.25,-.1 -.25,.1 -.25,0 -.25,-.1 -.25,.1 -.25,-.1 -.25,0 -.25,0 -.25,.1 -.25,0 -.25,.5 -.25,.7 -.25,.9 -.25,1.2 -.25,-.1 -.25,-1.2 -.25,-.9 -.25,-.7 -.25,-.4 -.25,0 -.25,0 -.25,-.1 -.25,0 -.25,.1 -.25,0 -.25,-.1 -.25,0 -.25,.1 -.25,0 -.25,.1 -.25,.4 -.25,.7 -.25,.8 -.25,1.1 -.25,-.9 -.25,-.9 -.25,-.7 -.25,-.5 -.25,-.1 -.25,-.1 -.25,.1 -.25,0 -.25,0 -.25,0 -.25,0 -.25,-.1 -.25,0 -.25,0 -.25,0 -.25,0 -.25,0 -.25,.2 -.25,.2 -.25,.1 -.25,-.2 -.25,-.2 -.25,-.1 -.25,0 -.25,.1 -.25,0 -.25,0 -.25,-.1 -.25,0 -.25,0 -.25,0 -.25,0 -.25,.1 -.25,-.1 -.25,.3 -.25,.8 -.25,1 -.25,1.4 -.25,1.7 -.25,-.4 -.25,-1.7 -.25,-1.3 -.25,-.9 -.25,-.7 -.25,-.2 -.25,.1 -.25,-.1 -.25,0 -.25,.1 -.25,0 -.25,-.1 -.25,.1 -.25,0 -.25,-.1 -.25,.1 -.25,.4 -.25,.6 -.25,.8 -.25,.9 -.25,-.9 -.25,-.7 -.25,-.6 -.25,-.5 -.25,-.1 -.25,.1 -.25,0 -.25,-.1 -.25,0 -.25,0 -.25,0 -.25,0 -.25,0 -.25,.1 -.25,0 -.25,.2 -.25,.6 -.25,.7 -.25,.9 -.25,.3 -.25,-1 -.25,-.7 -.25,-.6 -.25,-.4 -.25,-.1 -.25,0 -.25,.1 -.25,-.1 -.25,.1 -.25,0 -.25,-.1 -.25,0 -.25,0 -.25,.1 -.25,0 -.25,.2 -.25,.5 -.25,.6 -.25,.7 -.25,-.3 -.25,-.7 -.25,-.5 -.25,-.4 -.25,-.1 -.25,0 -.25,0 -.25,-.1 -.25,0 -.25,.1 -.25,-.1 -.25,.1 -.25,-.1 -.25,.1 -.25,-.1 -.25,.4 -.25,.7 -.25,.9 -.25,1.1 -.25,1.3 -.25,-1.4 -.25,-1.1 -.25,-.9 -.25,-.6 -.25,-.3 -.25,0 -.25,-.1 -.25,.1 -.25,0 -.25,-.1 -.25,.1 -.25,0 -.25,-.1 -.25,0 -.25,0 -.25,.3 -.25,.6 -.25,.6 -.25,.9 -.25,.2 -.25,-.9 -.25,-.7 -.25,-.6 -.25,-.4 -.25,0 -.25,0 -.25,.1 -.25,-.1 -.25,0 -.25,.1 -.25,-.1 -.25,0 -.25,.1 -.25,-.1 -.25,0 -.25,.4 -.25,.5 -.25,.7 -.25,.8 -.25,-.4 -.25,-.8 -.25,-.5 -.25,-.5 -.25,-.1 -.25,-.1 -.25,0 -.25,0 -.25,.1 -.25,0 -.25,-.1 -.25,.1 -.25,-.1 -.25,.1 -.25,-.1 -.25,.1 -.25,-.1 -.25,.2 -.25,.2 -.25,.2 -.25,-.2 -.25,-.3 -.25,0 -.25,0 -.25,-.1 -.25,.1 -.25,0 -.25,-.1 -.25,.1 -.25,0 -.25,-.1 -.25,0 -.25,0 -.25,0 -.25,.2 -.25,.5 -.25,.9 -.25,1.1 -.25,1.3 -.25,.2 -.25,-1.4 -.25,-1.2 -.25,-.8 -.25,-.6 -.25,-.1 -.25,-.1 -.25,.1 -.25,0 -.25,0 -.25,0 -.25,0 -.25,-.1 -.25,.1 -.25,-.1 -.25,.1 -.25,.4 -.25,.6 -.25,.7 -.25,1 -.25,-.6 -.25,-.9 -.25,-.6 -.25,-.5 -.25,-.2 -.25,.1 -.25,-.1 -.25,0 -.25,.1 -.25,0 -.25,-.1 -.25,.1 -.25,-.1 -.25,.1 -.25,0 -.25,0 -.25,.4 -.25,.6 -.25,.7 -.25,.5 -.25,-.8 -.25,-.6 -.25,-.5 -.25,-.4 -.25,0 -.25,0 -.25,.1 -.25,-.1 -.25,.1 -.25,-.1 -.25,0 -.25,0 -.25,0 -.25,0 -.25,0 -.25,.4 -.25,.6 -.25,.7 -.25,.9 -.25,0 -.25,-.9 -.25,-.8 -.25,-.5 -.25,-.3 -.25,0 -.25,0 -.25,0 -.25,0 -.25,0 -.25,0 -.25,0 -.25,-.1 -.25,0 -.25,.1 -.25,.3 -.25,.7 -.25,1 -.25,1.2 -.25,1.6 -.25,-1.2 -.25,-1.4 -.25,-1 -.25,-.8 -.25,-.4 -.25,0 -.25,0 -.25,-.1 -.25,.1 -.25,0 -.25,-.1 -.25,0 -.25,.1 -.25,0 -.25,0 -.25,.2 -.25,.6 -.25,.7 -.25,.9 -.25,.6 -.25,-1 -.25,-.9 -.25,-.6 -.25,-.5 -.25,0 -.25,-.1 -.25,0 -.25,0 -.25,0 -.25,.1 -.25,-.1 -.25,0 -.25,0 -.25,0 -.25,.1 -.25,.4 -.25,.6 -.25,.7 -.25,1 -.25,-.2 -.25,-.9 -.25,-.8 -.25,-.5 -.25,-.4 -.25,0 -.25,.1 -.25,-.1 -.25,0 -.25,0 -.25,.1 -.25,0 -.25,-.1 -.25,0 -.25,0 -.25,0 -.25,.1 -.25,0 -.25,.2 -.25,.2 -.25,-.2 -.25,-.2 -.25,0 -.25,0 -.25,0 -.25,0 -.25,-.1 -.25,.1 -.25,-.1 -.25,.1 -.25,0 -.25,0 -.25,-.1 -.25,0 -.25,.1 -.25,.6 -.25,.9 -.25,1.2 -.25,1.4 -.25,.7 -.25,-1.6 -.25,-1.3 -.25,-1 -.25,-.7 -.25,-.3 -.25,0 -.25,.1 -.25,-.1 -.25,0 -.25,.1 -.25,0 -.25,-.1 -.25,.1 -.25,-.1 -.25,0 -.25,.4 -.25,.6 -.25,.7 -.25,.8 -.25,-.2 -.25,-.9 -.25,-.6 -.25,-.5 -.25,-.3 -.25,0 -.25,0 -.25,.1 -.25,-.1 -.25,0 -.25,0 -.25,.1 -.25,0 -.25,-.1 -.25,0 -.25,.1 -.25,.4 -.25,.5 -.25,.6 -.25,.8 -.25,-.8 -.25,-.7 -.25,-.5 -.25,-.3 -.25,-.1 -.25,.1 -.25,0 -.25,-.1 -.25,.1 -.25,-.1 -.25,0 -.25,.1 -.25,0 -.25,-.1 -.25,.1 -.25,.2 -.25,.5 -.25,.7 -.25,.8 -.25,.3 -.25,-.9 -.25,-.7 -.25,-.6 -.25,-.3 -.25,-.1 -.25,.1 -.25,-.1 -.25,.1 -.25,-.1 -.25,0 -.25,0 -.25,0 -.25,.1 -.25,-.1 -.25,.4 -.25,.7 -.25,1 -.25,1.3 -.25,1.7 -.25,-.8 -.25,-1.5 -.25,-1.2 -.25,-.9 -.25,-.6 -.25,0 -.25,-.1 -.25,0 -.25,.1 -.25,0 -.25,0 -.25,0 -.25,0 -.25,-.1 -.25,0 -.25,.2 -.25,.5 -.25,.7 -.25,.9 -.25,.9 -.25,-1 -.25,-.9 -.25,-.6 -.25,-.5 -.25,-.1 -.25,0 -.25,0 -.25,0 -.25,-.1 -.25,0 -.25,0 -.25,.1 -.25,0 -.25,0 -.25,0 -.25,.3 -.25,.6 -.25,.7 -.25,1 -.25,.1 -.25,-1 -.25,-.7 -.25,-.6 -.25,-.4 -.25,-.1 -.25,.1 -.25,0 -.25,0 -.25,0 -.25,-.1 -.25,0 -.25,0 -.25,.1 -.25,0 -.25,0 -.25,0 -.25,-.1 -.25,.2 -.25,.3 -.25,-.2 -.25,-.2 -.25,-.1 -.25,0 -.25,0 -.25,0 -.25,.1 -.25,0 -.25,-.1 -.25,0 -.25,0 -.25,0 -.25,.1 -.25,0 -.25,0 -.25,.4 -.25,.7 -.25,.9 -.25,1.2 -.25,1 -.25,-1.4 -.25,-1.1 -.25,-.9 -.25,-.6 -.25,-.2 -.25,0 -.25,-.1 -.25,0 -.25,.1 -.25,0 -.25,0 -.25,-.1 -.25,.1 -.25,0 -.25,0 -.25,.1 -.25,.5 -.25,.5 -.25,.7 -.25,0 -.25,-.7 -.25,-.5 -.25,-.5 -.25,-.2 -.25,.1 -.25,-.1 -.25,.1 -.25,0 -.25,-.1 -.25,0 -.25,0 -.25,.1 -.25,-.1 -.25,.1 -.25,0 -.25,.5 -.25,.6 -.25,.8 -.25,.9 -.25,-.7 -.25,-.8 -.25,-.7 -.25,-.5 -.25,-.2 -.25,0 -.25,0 -.25,0 -.25,0 -.25,.1 -.25,-.1 -.25,0 -.25,0 -.25,.1 -.25,0 -.25,.1 -.25,.3 -.25,.6 -.25,.7 -.25,.4 -.25,-.7 -.25,-.7 -.25,-.4 -.25,-.3 -.25,-.1 -.25,0 -.25,.1 -.25,0 -.25,0 -.25,-.1 -.25,.1 -.25,-.1 -.25,.1 -.25,0 -.25,.2 -.25,.7 -.25,1 -.25,1.3 -.25,1.7 -.25,-.2 -.25,-1.6 -.25,-1.3 -.25,-1 -.25,-.7 -.25,-.2 -.25,0 -.25,.1 -.25,-.1 -.25,0 -.25,0 -.25,.1 -.25,-.1 -.25,0 -.25,.1 -.25,.1 -.25,.5 -.25,.6 -.25,.9 -.25,1.1 -.25,-.9 -.25,-.9 -.25,-.7 -.25,-.5 -.25,-.3 -.25,0 -.25,0 -.25,0 -.25,0 -.25,.1 -.25,-.1 -.25,0 -.25,.1 -.25,-.1 -.25,0 -.25,.2 -.25,.4 -.25,.5 -.25,.7 -.25,.3 -.25,-.7 -.25,-.6 -.25,-.5 -.25,-.3 -.25,.1 -.25,0 -.25,-.1 -.25,0 -.25,.1 -.25,0 -.25,-.1 -.25,0 -.25,.1 -.25,0 -.25,-.1 -.25,0 -.25,.1 -.25,.1 -.25,.3 -.25,-.1 -.25,-.2 -.25,-.2 -.25,.1 -.25,0 -.25,0 -.25,0 -.25,-.1 -.25,.1 -.25,-.1 -.25,.1 -.25,0 -.25,0 -.25,0 -.25,0 -.25,.4 -.25,.8 -.25,1.1 -.25,1.3 -.25,1.7 -.25,-1.6 -.25,-1.4 -.25,-1.1 -.25,-.8 -.25,-.5 -.25,0 -.25,0 -.25,0 -.25,.1 -.25,0 -.25,0 -.25,-.1 -.25,0 -.25,0 -.25,0 -.25,.3 -.25,.5 -.25,.7 -.25,.9 -.25,.3 -.25,-.9 -.25,-.8 -.25,-.5 -.25,-.4 -.25,0 -.25,-.1 -.25,0 -.25,0 -.25,.1 -.25,-.1 -.25,0 -.25,.1 -.25,0 -.25,-.1 -.25,.1 -.25,.4 -.25,.6 -.25,.7 -.25,1 -.25,-.4 -.25,-.9 -.25,-.7 -.25,-.5 -.25,-.2 -.25,0 -.25,-.1 -.25,0 -.25,.1 -.25,-.1 -.25,0 -.25,0 -.25,0 -.25,.1 -.25,-.1 -.25,.2 -.25,.5 -.25,.6 -.25,.8 -.25,.9 -.25,-.9 -.25,-.9 -.25,-.6 -.25,-.4 -.25,-.1 -.25,-.1 -.25,.1 -.25,0 -.25,-.1 -.25,0 -.25,0 -.25,0 -.25,0 -.25,0 -.25,.1 -.25,.5 -.25,.8 -.25,1 -.25,1.2 -.25,.3 -.25,-1.3 -.25,-1 -.25,-.8 -.25,-.6 -.25,-.1 -.25,0 -.25,-.1 -.25,0 -.25,.1 -.25,0 -.25,0 -.25,0 -.25,-.1 -.25,.1 -.25,0 -.25,.4 -.25,.6 -.25,.7 -.25,1 -.25,-.5 -.25,-.9 -.25,-.6 -.25,-.5 -.25,-.2 -.25,0 -.25,0 -.25,0 -.25,-.1 -.25,0 -.25,.1 -.25,0 -.25,0 -.25,-.1 -.25,0 -.25,.2 -.25,.5 -.25,.6 -.25,.8 -.25,.7 -.25,-.9 -.25,-.8 -.25,-.6 -.25,-.4 -.25,-.1 -.25,.1 -.25,-.1 -.25,.1 -.25,0 -.25,-.1 -.25,0 -.25,.1 -.25,-.1 -.25,0 -.25,0 -.25,.1 -.25,0 -.25,.2 -.25,.2 -.25,.1 -.25,-.3 -.25,-.2 -.25,0 -.25,0 -.25,-.1 -.25,.1 -.25,0 -.25,-.1 -.25,0 -.25,0 -.25,.1 -.25,-.1 -.25,.1 -.25,-.1 -.25,.3 -.25,.6 -.25,.8 -.25,1.1 -.25,1.4 -.25,-.9 -.25,-1.2 -.25,-.9 -.25,-.7Z" fill="#46d99a" clip-path="url(#cg)"/><path d="M0,9.7l.25,-.7 .25,-.9 .25,-1.2 .25,-.9 .25,1.4 .25,1.1 .25,.8 .25,.6 .25,.3 .25,-.1 .25,.1 .25,-.1 .25,.1 .25,0 .25,0 .25,-.1 .25,0 .25,.1 .25,-.1 .25,0 .25,0 .25,-.2 .25,-.3 .25,.1 .25,.2 .25,.2 .25,0 .25,.1 .25,0 .25,0 .25,-.1 .25,.1 .25,0 .25,-.1 .25,0 .25,.1 .25,-.1 .25,.1 .25,-.1 .25,-.4 .25,-.6 .25,-.8 .25,-.9 .25,.7 .25,.8 .25,.6 .25,.5 .25,.2 .25,0 .25,-.1 .25,0 .25,0 .25,.1 .25,0 .25,-.1 .25,0 .25,0 .25,0 .25,-.2 .25,-.5 .25,-.6 .25,-.9 .25,-.5 .25,1 .25,.7 .25,.6 .25,.4 .25,0 .25,.1 .25,-.1 .25,0 .25,0 .25,0 .25,.1 .25,0 .25,-.1 .25,0 .25,-.1 .25,-.6 .25,-.8 .25,-1 .25,-1.3 .25,.3 .25,1.2 .25,1 .25,.8 .25,.5 .25,.1 .25,0 .25,0 .25,0 .25,0 .25,0 .25,-.1 .25,0 .25,.1 .25,-.1 .25,-.1 .25,-.4 .25,-.6 .25,-.9 .25,-.9 .25,.9 .25,.8 .25,.6 .25,.5 .25,.2 .25,-.1 .25,.1 .25,0 .25,0 .25,0 .25,-.1 .25,.1 .25,0 .25,-.1 .25,0 .25,-.2 .25,-.5 .25,-.7 .25,-.9 .25,-.4 .25,1 .25,.7 .25,.6 .25,.4 .25,.1 .25,-.1 .25,0 .25,.1 .25,0 .25,-.1 .25,.1 .25,0 .25,0 .25,-.1 .25,0 .25,-.4 .25,-.5 .25,-.8 .25,-.9 .25,.3 .25,.9 .25,.7 .25,.5 .25,.3 .25,0 .25,0 .25,0 .25,-.1 .25,0 .25,0 .25,.1 .25,0 .25,0 .25,0 .25,-.5 .25,-.8 .25,-1.1 .25,-1.4 .25,-1.6 .25,1.7 .25,1.3 .25,1.1 .25,.8 .25,.4 .25,0 .25,0 .25,0 .25,0 .25,.1 .25,-.1 .25,.1 .25,-.1 .25,0 .25,0 .25,0 .25,.1 .25,-.2 .25,-.2 .25,-.1 .25,.3 .25,.1 .25,.1 .25,0 .25,-.1 .25,0 .25,.1 .25,0 .25,-.1 .25,0 .25,.1 .25,0 .25,-.1 .25,0 .25,.1 .25,-.3 .25,-.5 .25,-.6 .25,-.7 .25,.3 .25,.7 .25,.5 .25,.4 .25,.2 .25,0 .25,-.1 .25,.1 .25,0 .25,-.1 .25,.1 .25,0 .25,0 .25,0 .25,0 .25,-.3 .25,-.5 .25,-.7 .25,-.9 .25,-.9 .25,1.1 .25,.9 .25,.6 .25,.5 .25,.1 .25,.1 .25,0 .25,-.1 .25,.1 .25,0 .25,0 .25,-.1 .25,.1 .25,0 .25,-.2 .25,-.7 .25,-1 .25,-1.3 .25,-1.6 .25,-.2 .25,1.7 .25,1.3 .25,1 .25,.7 .25,.2 .25,0 .25,.1 .25,-.1 .25,.1 .25,-.1 .25,0 .25,0 .25,.1 .25,0 .25,-.1 .25,-.3 .25,-.4 .25,-.7 .25,-.7 .25,.4 .25,.7 .25,.6 .25,.3 .25,.1 .25,0 .25,.1 .25,0 .25,0 .25,-.1 .25,.1 .25,0 .25,0 .25,0 .25,0 .25,-.2 .25,-.5 .25,-.7 .25,-.8 .25,-.7 .25,.9 .25,.8 .25,.6 .25,.5 .25,0 .25,.1 .25,-.1 .25,.1 .25,0 .25,0 .25,-.1 .25,0 .25,.1 .25,-.1 .25,.1 .25,-.2 .25,-.5 .25,-.5 .25,-.7 .25,0 .25,.7 .25,.5 .25,.5 .25,.1 .25,0 .25,0 .25,.1 .25,-.1 .25,0 .25,0 .25,.1 .25,0 .25,-.1 .25,0 .25,-.2 .25,-.6 .25,-.9 .25,-1.1 .25,-1.4 .25,1 .25,1.2 .25,.9 .25,.7 .25,.4 .25,0 .25,0 .25,.1 .25,0 .25,0 .25,0 .25,-.1 .25,0 .25,.1 .25,0 .25,0 .25,0 .25,-.1 .25,-.2 .25,-.2 .25,.3 .25,.2 .25,-.1 .25,0 .25,0 .25,0 .25,.1 .25,0 .25,0 .25,-.1 .25,0 .25,0 .25,0 .25,.1 .25,-.1 .25,-.4 .25,-.6 .25,-.7 .25,-1 .25,.1 .25,1 .25,.7 .25,.6 .25,.3 .25,0 .25,0 .25,0 .25,.1 .25,0 .25,0 .25,-.1 .25,0 .25,0 .25,0 .25,-.1 .25,-.5 .25,-.6 .25,-.9 .25,-1 .25,.9 .25,.9 .25,.7 .25,.5 .25,.2 .25,0 .25,-.1 .25,0 .25,0 .25,0 .25,0 .25,.1 .25,0 .25,-.1 .25,0 .25,-.6 .25,-.9 .25,-1.2 .25,-1.5 .25,-.8 .25,1.7 .25,1.3 .25,1 .25,.7 .25,.4 .25,-.1 .25,.1 .25,0 .25,0 .25,0 .25,-.1 .25,.1 .25,-.1 .25,.1 .25,-.1 .25,-.3 .25,-.6 .25,-.7 .25,-.9 .25,.3 .25,.8 .25,.7 .25,.5 .25,.2 .25,.1 .25,-.1 .25,0 .25,.1 .25,0 .25,-.1 .25,.1 .25,-.1 .25,0 .25,.1 .25,-.1 .25,-.3 .25,-.5 .25,-.7 .25,-.8 .25,.8 .25,.6 .25,.5 .25,.4 .25,.1 .25,0 .25,-.1 .25,0 .25,.1 .25,0 .25,0 .25,-.1 .25,.1 .25,0 .25,0 .25,-.3 .25,-.5 .25,-.6 .25,-.9 .25,-.2 .25,.8 .25,.7 .25,.6 .25,.4 .25,0 .25,-.1 .25,.1 .25,-.1 .25,0 .25,.1 .25,0 .25,-.1 .25,.1 .25,0 .25,-.3 .25,-.7 .25,-1 .25,-1.3 .25,-1.6 .25,.7 .25,1.4 .25,1.2 .25,.9 .25,.6 .25,.1 .25,0 .25,-.1 .25,0 .25,0 .25,.1 .25,-.1 .25,.1 .25,-.1 .25,0 .25,0 .25,0 .25,0 .25,-.2 .25,-.2 .25,.2 .25,.2 .25,0 .25,.1 .25,0 .25,0 .25,0 .25,-.1 .25,0 .25,.1 .25,0 .25,0 .25,-.1 .25,.1 .25,0 .25,-.4 .25,-.5 .25,-.8 .25,-.9 .25,-.2 .25,1 .25,.7 .25,.6 .25,.4 .25,.1 .25,0 .25,0 .25,0 .25,-.1 .25,.1 .25,0 .25,0 .25,0 .25,-.1 .25,0 .25,-.5 .25,-.6 .25,-.9 .25,-1 .25,.6 .25,.9 .25,.7 .25,.6 .25,.2 .25,0 .25,0 .25,.1 .25,0 .25,-.1 .25,0 .25,.1 .25,-.1 .25,0 .25,0 .25,-.4 .25,-.8 .25,-1 .25,-1.4 .25,-1.2 .25,1.6 .25,1.2 .25,1 .25,.7 .25,.3 .25,.1 .25,0 .25,-.1 .25,0 .25,0 .25,0 .25,0 .25,0 .25,0 .25,0 .25,-.3 .25,-.5 .25,-.8 .25,-.9 .25,0 .25,.9 .25,.7 .25,.6 .25,.4 .25,0 .25,0 .25,0 .25,0 .25,0 .25,-.1 .25,.1 .25,-.1 .25,.1 .25,0 .25,0 .25,-.4 .25,-.5 .25,-.6 .25,-.8 .25,.5 .25,.7 .25,.6 .25,.4 .25,0 .25,0 .25,.1 .25,-.1 .25,.1 .25,-.1 .25,0 .25,.1 .25,0 .25,-.1 .25,.1 .25,-.2 .25,-.5 .25,-.6 .25,-.9 .25,-.6 .25,1 .25,.7 .25,.6 .25,.4 .25,.1 .25,-.1 .25,.1 .25,-.1 .25,0 .25,0 .25,0 .25,0 .25,.1 .25,-.1 .25,-.1 .25,-.6 .25,-.8 .25,-1.2 .25,-1.4 .25,.2 .25,1.3 .25,1.1 .25,.9 .25,.5 .25,.2 .25,0 .25,0 .25,0 .25,-.1 .25,0 .25,.1 .25,-.1 .25,0 .25,.1 .25,-.1 .25,0 .25,0 .25,-.3 .25,-.2 .25,.2 .25,.2 .25,.2 .25,-.1 .25,.1 .25,-.1 .25,.1 .25,-.1 .25,.1 .25,-.1 .25,0 .25,.1 .25,0 .25,0 .25,-.1 .25,-.1 .25,-.5 .25,-.5 .25,-.8 .25,-.4 .25,.8 .25,.7 .25,.5 .25,.4 .25,0 .25,-.1 .25,.1 .25,0 .25,-.1 .25,.1 .25,0 .25,-.1 .25,.1 .25,0 .25,0 .25,-.4 .25,-.6 .25,-.7 .25,-.9 .25,.2 .25,.9 .25,.6 .25,.6 .25,.3 .25,0 .25,0 .25,-.1 .25,0 .25,.1 .25,-.1 .25,0 .25,.1 .25,-.1 .25,0 .25,-.3 .25,-.6 .25,-.9 .25,-1.1 .25,-1.4 .25,1.3 .25,1.1 .25,.9 .25,.7 .25,.4 .25,-.1 .25,.1 .25,-.1 .25,.1 .25,-.1 .25,.1 .25,0 .25,-.1 .25,0 .25,0 .25,-.1 .25,-.4 .25,-.5 .25,-.7 .25,-.3 .25,.7 .25,.6 .25,.5 .25,.2 .25,0 .25,.1 .25,0 .25,0 .25,-.1 .25,0 .25,.1 .25,-.1 .25,.1 .25,0 .25,-.1 .25,-.4 .25,-.6 .25,-.7 .25,-1 .25,.3 .25,.9 .25,.7 .25,.6 .25,.2 .25,0 .25,.1 .25,0 .25,0 .25,0 .25,0 .25,0 .25,-.1 .25,0 .25,.1 .25,-.1 .25,-.5 .25,-.6 .25,-.7 .25,-.9 .25,.9 .25,.8 .25,.6 .25,.4 .25,.1 .25,-.1 .25,0 .25,.1 .25,-.1 .25,0 .25,.1 .25,0 .25,-.1 .25,.1 .25,-.2 .25,-.7 .25,-.9 .25,-1.3 .25,-1.7 .25,-.4 .25,1.7 .25,1.4 .25,1 .25,.8 .25,.3 .25,-.1 .25,.1 .25,0 .25,0 .25,0 .25,0 .25,-.1 .25,0 .25,0 .25,.1 .25,0 .25,-.1 .25,-.2 .25,-.2 .25,.1 .25,.2 .25,.2 .25,0 .25,0 .25,0 .25,0 .25,0 .25,-.1 .25,0 .25,0 .25,0 .25,0 .25,.1 .25,-.1 .25,-.1 .25,-.5 .25,-.7 .25,-.9 .25,-.9 .25,1.1 .25,.8 .25,.7 .25,.4 .25,.1 .25,0 .25,.1 .25,0 .25,-.1 .25,0 .25,.1 .25,0 .25,-.1 .25,0 .25,0 .25,-.4 .25,-.7 .25,-.9 .25,-1.2 .25,-.1 .25,1.2 .25,.9 .25,.7 .25,.5 .25,0 .25,.1 .25,0 .25,0 .25,-.1 .25,.1 .25,-.1 .25,0 .25,.1 .25,-.1 .25,-.4 .25,-.8 .25,-1.1 .25,-1.5 .25,-1.8 .25,1.1 .25,1.6 .25,1.3 .25,.9 .25,.7 .25,0 .25,.1 .25,0 .25,0 .25,0 .25,0 .25,0 .25,-.1 .25,.1 .25,-.1 .25,-.1 .25,-.5 .25,-.7 .25,-.8 .25,-.7 .25,1 .25,.7 .25,.6 .25,.5 .25,0 .25,0 .25,0 .25,.1 .25,0 .25,0 .25,0 .25,0 .25,0 .25,-.1 .25,.1 .25,-.4 .25,-.5 .25,-.7 .25,-.8 .25,0 .25,.9 .25,.6 .25,.6 .25,.2 .25,0 .25,.1 .25,-.1 .25,.1 .25,-.1 .25,.1 .25,-.1 .25,.1 .25,-.1 .25,.1 .25,-.1 .25,-.4 .25,-.5 .25,-.8 .25,-.8 .25,.6 .25,.8 .25,.6 .25,.4 .25,.1 .25,0 .25,.1 .25,0 .25,-.1 .25,.1 .25,0 .25,-.1 .25,0 .25,.1 .25,-.1 .25,-.4 .25,-.7 .25,-.9 .25,-1.2 .25,-.8 .25,1.4 .25,1 .25,.9 .25,.5 .25,.3 .25,-.1 .25,.1 .25,0 .25,0 .25,-.1 .25,0 .25,.1 .25,-.1 .25,0 .25,.1 .25,-.1 .25,0 .25,-.2 .25,-.2 .25,0 .25,.3 .25,.2 .25,-.1 .25,.1 .25,0 .25,0 .25,-.1 .25,.1 .25,-.1 .25,.1 .25,-.1 .25,0 .25,.1 .25,-.1 .25,-.1 .25,-.4 .25,-.6 .25,-.9 .25,-.9 .25,.8 .25,.9 .25,.6 .25,.5 .25,.1 .25,.1 .25,-.1 .25,.1 .25,-.1 .25,0 .25,0 .25,.1 .25,-.1 .25,.1 .25,-.1 .25,-.1 .25,-.5 .25,-.6 .25,-.8 .25,-.4 .25,.9 .25,.7 .25,.5 .25,.4 .25,0 .25,0 .25,0 .25,-.1 .25,.1 .25,0 .25,-.1 .25,.1 .25,0 .25,-.1 .25,-.2 .25,-.7 .25,-1 .25,-1.3 .25,-1.7 .25,.5 .25,1.6 .25,1.2 .25,.9 .25,.6 .25,.2 .25,0 .25,-.1 .25,0 .25,0 .25,0 .25,0 .25,0 .25,.1 .25,-.1 .25,-.1 .25,-.5 .25,-.6 .25,-.8 .25,-1.1 .25,1 .25,.9 .25,.6 .25,.5 .25,.1 .25,.1 .25,-.1 .25,.1 .25,0 .25,0 .25,-.1 .25,.1 .25,-.1 .25,.1 .25,0 .25,-.3 .25,-.4 .25,-.6 .25,-.8 .25,-.3 .25,.8 .25,.7 .25,.5 .25,.4 .25,-.1 .25,.1 .25,-.1 .25,.1 .25,-.1 .25,0 .25,.1 .25,-.1 .25,0 .25,0 .25,0 .25,-.4 .25,-.5 .25,-.7 .25,-.9 .25,.4 .25,.8 .25,.6 .25,.5 .25,.3 .25,0 .25,0 .25,0 .25,-.1 .25,.1 .25,-.1 .25,.1 .25,0 .25,-.1 .25,.1 .25,-.5 .25,-.8 .25,-1.1 .25,-1.4 .25,-1.5 .25,1.7 .25,1.3 .25,1.1 .25,.7 .25,.4 .25,0 .25,.1 .25,-.1 .25,.1 .25,0 .25,-.1 .25,0 .25,0 .25,.1 .25,-.1 .25,.1 .25,-.1 .25,-.1 .25,-.3 .25,0 .25,.2 .25,.2 .25,.1 .25,0 .25,0 .25,0 .25,0 .25,-.1 .25,.1 .25,-.1 .25,0 .25,.1 .25,0 .25,0 .25,-.1 .25,-.5 .25,-.6 .25,-.8 .25,-1 .25,.5 .25,1 .25,.7 .25,.5 .25,.3 .25,0 .25,-.1 .25,.1 .25,0 .25,0 .25,0 .25,0 .25,0 .25,-.1 .25,.1 .25,-.3 .25,-.5 .25,-.7 .25,-.9 .25,-.9 .25,1.1 .25,.9 .25,.6 .25,.5 .25,.1 .25,0 .25,.1 .25,-.1 .25,.1 .25,0 .25,0 .25,-.1 .25,0 .25,0 .25,-.1 .25,-.5 .25,-.9 .25,-1.1 .25,-1.3 .25,-.1 .25,1.4 .25,1.1 .25,.8 .25,.6 .25,.2 .25,0 .25,-.1 .25,0 .25,0 .25,0 .25,.1 .25,0 .25,-.1 .25,0 .25,.1 .25,-.4 .25,-.5 .25,-.6 .25,-.8 .25,.5 .25,.7 .25,.6 .25,.4 .25,0 .25,.1 .25,-.1 .25,.1 .25,-.1 .25,.1 .25,0 .25,0 .25,-.1 .25,0 .25,.1 .25,-.2 .25,-.5 .25,-.7 .25,-.8 .25,-.6 .25,.9 .25,.8 .25,.6 .25,.4 .25,.1 .25,-.1 .25,.1 .25,0 .25,0 .25,0 .25,0 .25,-.1 .25,0 .25,0 .25,.1 .25,-.4 .25,-.5 .25,-.7 .25,-.9 .25,0 .25,.9 .25,.7 .25,.5 .25,.4 .25,0 .25,0 .25,-.1 .25,0 .25,.1 .25,0 .25,-.1 .25,.1 .25,-.1 .25,0 .25,-.3 .25,-.7L314.50,11.9l-.25,-.7 -.25,-.3 -.25,0 -.25,-.1 -.25,.1 -.25,-.1 -.25,0 -.25,.1 -.25,0 -.25,-.1 -.25,0 -.25,0 -.25,.4 -.25,.5 -.25,.7 -.25,.9 -.25,0 -.25,-.9 -.25,-.7 -.25,-.5 -.25,-.4 -.25,.1 -.25,0 -.25,0 -.25,-.1 -.25,0 -.25,0 -.25,0 -.25,0 -.25,.1 -.25,-.1 -.25,.1 -.25,.4 -.25,.6 -.25,.8 -.25,.9 -.25,-.6 -.25,-.8 -.25,-.7 -.25,-.5 -.25,-.2 -.25,.1 -.25,0 -.25,-.1 -.25,0 -.25,0 -.25,.1 -.25,-.1 -.25,.1 -.25,-.1 -.25,.1 -.25,0 -.25,.4 -.25,.6 -.25,.7 -.25,.5 -.25,-.8 -.25,-.6 -.25,-.5 -.25,-.4 -.25,.1 -.25,0 -.25,-.1 -.25,0 -.25,.1 -.25,0 -.25,0 -.25,0 -.25,-.1 -.25,0 -.25,.2 -.25,.6 -.25,.8 -.25,1.1 -.25,1.4 -.25,-.1 -.25,-1.3 -.25,-1.1 -.25,-.9 -.25,-.5 -.25,-.1 -.25,0 -.25,0 -.25,-.1 -.25,0 -.25,0 -.25,.1 -.25,-.1 -.25,.1 -.25,0 -.25,.1 -.25,.5 -.25,.6 -.25,.9 -.25,1.1 -.25,-.9 -.25,-.9 -.25,-.7 -.25,-.5 -.25,-.3 -.25,.1 -.25,-.1 -.25,0 -.25,0 -.25,0 -.25,0 -.25,0 -.25,.1 -.25,-.1 -.25,0 -.25,.3 -.25,.5 -.25,.7 -.25,1 -.25,.5 -.25,-1 -.25,-.8 -.25,-.6 -.25,-.5 -.25,-.1 -.25,0 -.25,0 -.25,.1 -.25,0 -.25,-.1 -.25,.1 -.25,-.1 -.25,0 -.25,0 -.25,0 -.25,0 -.25,.1 -.25,.2 -.25,.2 -.25,0 -.25,-.3 -.25,-.1 -.25,-.1 -.25,.1 -.25,-.1 -.25,.1 -.25,0 -.25,0 -.25,-.1 -.25,0 -.25,.1 -.25,-.1 -.25,.1 -.25,0 -.25,.4 -.25,.7 -.25,1.1 -.25,1.3 -.25,1.7 -.25,-1.5 -.25,-1.4 -.25,-1.1 -.25,-.8 -.25,-.5 -.25,.1 -.25,-.1 -.25,0 -.25,.1 -.25,-.1 -.25,.1 -.25,-.1 -.25,0 -.25,0 -.25,0 -.25,.3 -.25,.5 -.25,.6 -.25,.8 -.25,.4 -.25,-.9 -.25,-.7 -.25,-.5 -.25,-.4 -.25,0 -.25,0 -.25,0 -.25,-.1 -.25,.1 -.25,0 -.25,-.1 -.25,.1 -.25,-.1 -.25,.1 -.25,-.1 -.25,.4 -.25,.5 -.25,.7 -.25,.8 -.25,-.3 -.25,-.8 -.25,-.6 -.25,-.4 -.25,-.3 -.25,0 -.25,.1 -.25,-.1 -.25,.1 -.25,-.1 -.25,0 -.25,0 -.25,.1 -.25,-.1 -.25,.1 -.25,.1 -.25,.5 -.25,.6 -.25,.9 -.25,1 -.25,-1.1 -.25,-.8 -.25,-.6 -.25,-.5 -.25,-.1 -.25,-.1 -.25,.1 -.25,0 -.25,0 -.25,0 -.25,0 -.25,0 -.25,-.1 -.25,0 -.25,.2 -.25,.6 -.25,.9 -.25,1.2 -.25,1.6 -.25,.5 -.25,-1.7 -.25,-1.3 -.25,-1 -.25,-.7 -.25,-.2 -.25,-.1 -.25,0 -.25,.1 -.25,-.1 -.25,0 -.25,.1 -.25,-.1 -.25,0 -.25,0 -.25,0 -.25,.4 -.25,.5 -.25,.7 -.25,.9 -.25,-.4 -.25,-.8 -.25,-.6 -.25,-.5 -.25,-.1 -.25,-.1 -.25,.1 -.25,-.1 -.25,.1 -.25,0 -.25,0 -.25,-.1 -.25,.1 -.25,-.1 -.25,.1 -.25,.1 -.25,.5 -.25,.6 -.25,.9 -.25,.8 -.25,-.9 -.25,-.9 -.25,-.6 -.25,-.4 -.25,-.1 -.25,-.1 -.25,.1 -.25,0 -.25,-.1 -.25,.1 -.25,-.1 -.25,.1 -.25,-.1 -.25,0 -.25,0 -.25,.1 -.25,-.1 -.25,.2 -.25,.3 -.25,0 -.25,-.2 -.25,-.2 -.25,0 -.25,-.1 -.25,.1 -.25,0 -.25,-.1 -.25,.1 -.25,0 -.25,-.1 -.25,0 -.25,0 -.25,.1 -.25,-.1 -.25,.3 -.25,.5 -.25,.9 -.25,1 -.25,1.4 -.25,-.8 -.25,-1.2 -.25,-.9 -.25,-.7 -.25,-.4 -.25,-.1 -.25,.1 -.25,0 -.25,-.1 -.25,0 -.25,.1 -.25,-.1 -.25,0 -.25,.1 -.25,0 -.25,.1 -.25,.4 -.25,.6 -.25,.8 -.25,.6 -.25,-.8 -.25,-.8 -.25,-.5 -.25,-.4 -.25,-.1 -.25,.1 -.25,-.1 -.25,.1 -.25,-.1 -.25,.1 -.25,-.1 -.25,.1 -.25,-.1 -.25,.1 -.25,0 -.25,.2 -.25,.6 -.25,.6 -.25,.9 -.25,0 -.25,-.8 -.25,-.7 -.25,-.5 -.25,-.4 -.25,.1 -.25,-.1 -.25,0 -.25,0 -.25,0 -.25,0 -.25,0 -.25,.1 -.25,0 -.25,0 -.25,0 -.25,.5 -.25,.6 -.25,.7 -.25,1 -.25,-.7 -.25,-.8 -.25,-.7 -.25,-.5 -.25,-.1 -.25,-.1 -.25,.1 -.25,-.1 -.25,0 -.25,0 -.25,0 -.25,0 -.25,0 -.25,.1 -.25,0 -.25,.7 -.25,.9 -.25,1.3 -.25,1.6 -.25,1.1 -.25,-1.8 -.25,-1.5 -.25,-1.1 -.25,-.8 -.25,-.4 -.25,-.1 -.25,.1 -.25,0 -.25,-.1 -.25,.1 -.25,-.1 -.25,0 -.25,0 -.25,.1 -.25,0 -.25,.5 -.25,.7 -.25,.9 -.25,1.2 -.25,-.1 -.25,-1.2 -.25,-.9 -.25,-.7 -.25,-.4 -.25,0 -.25,0 -.25,-.1 -.25,0 -.25,.1 -.25,0 -.25,-.1 -.25,0 -.25,.1 -.25,0 -.25,.1 -.25,.4 -.25,.7 -.25,.8 -.25,1.1 -.25,-.9 -.25,-.9 -.25,-.7 -.25,-.5 -.25,-.1 -.25,-.1 -.25,.1 -.25,0 -.25,0 -.25,0 -.25,0 -.25,-.1 -.25,0 -.25,0 -.25,0 -.25,0 -.25,0 -.25,.2 -.25,.2 -.25,.1 -.25,-.2 -.25,-.2 -.25,-.1 -.25,0 -.25,.1 -.25,0 -.25,0 -.25,-.1 -.25,0 -.25,0 -.25,0 -.25,0 -.25,.1 -.25,-.1 -.25,.3 -.25,.8 -.25,1 -.25,1.4 -.25,1.7 -.25,-.4 -.25,-1.7 -.25,-1.3 -.25,-.9 -.25,-.7 -.25,-.2 -.25,.1 -.25,-.1 -.25,0 -.25,.1 -.25,0 -.25,-.1 -.25,.1 -.25,0 -.25,-.1 -.25,.1 -.25,.4 -.25,.6 -.25,.8 -.25,.9 -.25,-.9 -.25,-.7 -.25,-.6 -.25,-.5 -.25,-.1 -.25,.1 -.25,0 -.25,-.1 -.25,0 -.25,0 -.25,0 -.25,0 -.25,0 -.25,.1 -.25,0 -.25,.2 -.25,.6 -.25,.7 -.25,.9 -.25,.3 -.25,-1 -.25,-.7 -.25,-.6 -.25,-.4 -.25,-.1 -.25,0 -.25,.1 -.25,-.1 -.25,.1 -.25,0 -.25,-.1 -.25,0 -.25,0 -.25,.1 -.25,0 -.25,.2 -.25,.5 -.25,.6 -.25,.7 -.25,-.3 -.25,-.7 -.25,-.5 -.25,-.4 -.25,-.1 -.25,0 -.25,0 -.25,-.1 -.25,0 -.25,.1 -.25,-.1 -.25,.1 -.25,-.1 -.25,.1 -.25,-.1 -.25,.4 -.25,.7 -.25,.9 -.25,1.1 -.25,1.3 -.25,-1.4 -.25,-1.1 -.25,-.9 -.25,-.6 -.25,-.3 -.25,0 -.25,-.1 -.25,.1 -.25,0 -.25,-.1 -.25,.1 -.25,0 -.25,-.1 -.25,0 -.25,0 -.25,.3 -.25,.6 -.25,.6 -.25,.9 -.25,.2 -.25,-.9 -.25,-.7 -.25,-.6 -.25,-.4 -.25,0 -.25,0 -.25,.1 -.25,-.1 -.25,0 -.25,.1 -.25,-.1 -.25,0 -.25,.1 -.25,-.1 -.25,0 -.25,.4 -.25,.5 -.25,.7 -.25,.8 -.25,-.4 -.25,-.8 -.25,-.5 -.25,-.5 -.25,-.1 -.25,-.1 -.25,0 -.25,0 -.25,.1 -.25,0 -.25,-.1 -.25,.1 -.25,-.1 -.25,.1 -.25,-.1 -.25,.1 -.25,-.1 -.25,.2 -.25,.2 -.25,.2 -.25,-.2 -.25,-.3 -.25,0 -.25,0 -.25,-.1 -.25,.1 -.25,0 -.25,-.1 -.25,.1 -.25,0 -.25,-.1 -.25,0 -.25,0 -.25,0 -.25,.2 -.25,.5 -.25,.9 -.25,1.1 -.25,1.3 -.25,.2 -.25,-1.4 -.25,-1.2 -.25,-.8 -.25,-.6 -.25,-.1 -.25,-.1 -.25,.1 -.25,0 -.25,0 -.25,0 -.25,0 -.25,-.1 -.25,.1 -.25,-.1 -.25,.1 -.25,.4 -.25,.6 -.25,.7 -.25,1 -.25,-.6 -.25,-.9 -.25,-.6 -.25,-.5 -.25,-.2 -.25,.1 -.25,-.1 -.25,0 -.25,.1 -.25,0 -.25,-.1 -.25,.1 -.25,-.1 -.25,.1 -.25,0 -.25,0 -.25,.4 -.25,.6 -.25,.7 -.25,.5 -.25,-.8 -.25,-.6 -.25,-.5 -.25,-.4 -.25,0 -.25,0 -.25,.1 -.25,-.1 -.25,.1 -.25,-.1 -.25,0 -.25,0 -.25,0 -.25,0 -.25,0 -.25,.4 -.25,.6 -.25,.7 -.25,.9 -.25,0 -.25,-.9 -.25,-.8 -.25,-.5 -.25,-.3 -.25,0 -.25,0 -.25,0 -.25,0 -.25,0 -.25,0 -.25,0 -.25,-.1 -.25,0 -.25,.1 -.25,.3 -.25,.7 -.25,1 -.25,1.2 -.25,1.6 -.25,-1.2 -.25,-1.4 -.25,-1 -.25,-.8 -.25,-.4 -.25,0 -.25,0 -.25,-.1 -.25,.1 -.25,0 -.25,-.1 -.25,0 -.25,.1 -.25,0 -.25,0 -.25,.2 -.25,.6 -.25,.7 -.25,.9 -.25,.6 -.25,-1 -.25,-.9 -.25,-.6 -.25,-.5 -.25,0 -.25,-.1 -.25,0 -.25,0 -.25,0 -.25,.1 -.25,-.1 -.25,0 -.25,0 -.25,0 -.25,.1 -.25,.4 -.25,.6 -.25,.7 -.25,1 -.25,-.2 -.25,-.9 -.25,-.8 -.25,-.5 -.25,-.4 -.25,0 -.25,.1 -.25,-.1 -.25,0 -.25,0 -.25,.1 -.25,0 -.25,-.1 -.25,0 -.25,0 -.25,0 -.25,.1 -.25,0 -.25,.2 -.25,.2 -.25,-.2 -.25,-.2 -.25,0 -.25,0 -.25,0 -.25,0 -.25,-.1 -.25,.1 -.25,-.1 -.25,.1 -.25,0 -.25,0 -.25,-.1 -.25,0 -.25,.1 -.25,.6 -.25,.9 -.25,1.2 -.25,1.4 -.25,.7 -.25,-1.6 -.25,-1.3 -.25,-1 -.25,-.7 -.25,-.3 -.25,0 -.25,.1 -.25,-.1 -.25,0 -.25,.1 -.25,0 -.25,-.1 -.25,.1 -.25,-.1 -.25,0 -.25,.4 -.25,.6 -.25,.7 -.25,.8 -.25,-.2 -.25,-.9 -.25,-.6 -.25,-.5 -.25,-.3 -.25,0 -.25,0 -.25,.1 -.25,-.1 -.25,0 -.25,0 -.25,.1 -.25,0 -.25,-.1 -.25,0 -.25,.1 -.25,.4 -.25,.5 -.25,.6 -.25,.8 -.25,-.8 -.25,-.7 -.25,-.5 -.25,-.3 -.25,-.1 -.25,.1 -.25,0 -.25,-.1 -.25,.1 -.25,-.1 -.25,0 -.25,.1 -.25,0 -.25,-.1 -.25,.1 -.25,.2 -.25,.5 -.25,.7 -.25,.8 -.25,.3 -.25,-.9 -.25,-.7 -.25,-.6 -.25,-.3 -.25,-.1 -.25,.1 -.25,-.1 -.25,.1 -.25,-.1 -.25,0 -.25,0 -.25,0 -.25,.1 -.25,-.1 -.25,.4 -.25,.7 -.25,1 -.25,1.3 -.25,1.7 -.25,-.8 -.25,-1.5 -.25,-1.2 -.25,-.9 -.25,-.6 -.25,0 -.25,-.1 -.25,0 -.25,.1 -.25,0 -.25,0 -.25,0 -.25,0 -.25,-.1 -.25,0 -.25,.2 -.25,.5 -.25,.7 -.25,.9 -.25,.9 -.25,-1 -.25,-.9 -.25,-.6 -.25,-.5 -.25,-.1 -.25,0 -.25,0 -.25,0 -.25,-.1 -.25,0 -.25,0 -.25,.1 -.25,0 -.25,0 -.25,0 -.25,.3 -.25,.6 -.25,.7 -.25,1 -.25,.1 -.25,-1 -.25,-.7 -.25,-.6 -.25,-.4 -.25,-.1 -.25,.1 -.25,0 -.25,0 -.25,0 -.25,-.1 -.25,0 -.25,0 -.25,.1 -.25,0 -.25,0 -.25,0 -.25,-.1 -.25,.2 -.25,.3 -.25,-.2 -.25,-.2 -.25,-.1 -.25,0 -.25,0 -.25,0 -.25,.1 -.25,0 -.25,-.1 -.25,0 -.25,0 -.25,0 -.25,.1 -.25,0 -.25,0 -.25,.4 -.25,.7 -.25,.9 -.25,1.2 -.25,1 -.25,-1.4 -.25,-1.1 -.25,-.9 -.25,-.6 -.25,-.2 -.25,0 -.25,-.1 -.25,0 -.25,.1 -.25,0 -.25,0 -.25,-.1 -.25,.1 -.25,0 -.25,0 -.25,.1 -.25,.5 -.25,.5 -.25,.7 -.25,0 -.25,-.7 -.25,-.5 -.25,-.5 -.25,-.2 -.25,.1 -.25,-.1 -.25,.1 -.25,0 -.25,-.1 -.25,0 -.25,0 -.25,.1 -.25,-.1 -.25,.1 -.25,0 -.25,.5 -.25,.6 -.25,.8 -.25,.9 -.25,-.7 -.25,-.8 -.25,-.7 -.25,-.5 -.25,-.2 -.25,0 -.25,0 -.25,0 -.25,0 -.25,.1 -.25,-.1 -.25,0 -.25,0 -.25,.1 -.25,0 -.25,.1 -.25,.3 -.25,.6 -.25,.7 -.25,.4 -.25,-.7 -.25,-.7 -.25,-.4 -.25,-.3 -.25,-.1 -.25,0 -.25,.1 -.25,0 -.25,0 -.25,-.1 -.25,.1 -.25,-.1 -.25,.1 -.25,0 -.25,.2 -.25,.7 -.25,1 -.25,1.3 -.25,1.7 -.25,-.2 -.25,-1.6 -.25,-1.3 -.25,-1 -.25,-.7 -.25,-.2 -.25,0 -.25,.1 -.25,-.1 -.25,0 -.25,0 -.25,.1 -.25,-.1 -.25,0 -.25,.1 -.25,.1 -.25,.5 -.25,.6 -.25,.9 -.25,1.1 -.25,-.9 -.25,-.9 -.25,-.7 -.25,-.5 -.25,-.3 -.25,0 -.25,0 -.25,0 -.25,0 -.25,.1 -.25,-.1 -.25,0 -.25,.1 -.25,-.1 -.25,0 -.25,.2 -.25,.4 -.25,.5 -.25,.7 -.25,.3 -.25,-.7 -.25,-.6 -.25,-.5 -.25,-.3 -.25,.1 -.25,0 -.25,-.1 -.25,0 -.25,.1 -.25,0 -.25,-.1 -.25,0 -.25,.1 -.25,0 -.25,-.1 -.25,0 -.25,.1 -.25,.1 -.25,.3 -.25,-.1 -.25,-.2 -.25,-.2 -.25,.1 -.25,0 -.25,0 -.25,0 -.25,-.1 -.25,.1 -.25,-.1 -.25,.1 -.25,0 -.25,0 -.25,0 -.25,0 -.25,.4 -.25,.8 -.25,1.1 -.25,1.3 -.25,1.7 -.25,-1.6 -.25,-1.4 -.25,-1.1 -.25,-.8 -.25,-.5 -.25,0 -.25,0 -.25,0 -.25,.1 -.25,0 -.25,0 -.25,-.1 -.25,0 -.25,0 -.25,0 -.25,.3 -.25,.5 -.25,.7 -.25,.9 -.25,.3 -.25,-.9 -.25,-.8 -.25,-.5 -.25,-.4 -.25,0 -.25,-.1 -.25,0 -.25,0 -.25,.1 -.25,-.1 -.25,0 -.25,.1 -.25,0 -.25,-.1 -.25,.1 -.25,.4 -.25,.6 -.25,.7 -.25,1 -.25,-.4 -.25,-.9 -.25,-.7 -.25,-.5 -.25,-.2 -.25,0 -.25,-.1 -.25,0 -.25,.1 -.25,-.1 -.25,0 -.25,0 -.25,0 -.25,.1 -.25,-.1 -.25,.2 -.25,.5 -.25,.6 -.25,.8 -.25,.9 -.25,-.9 -.25,-.9 -.25,-.6 -.25,-.4 -.25,-.1 -.25,-.1 -.25,.1 -.25,0 -.25,-.1 -.25,0 -.25,0 -.25,0 -.25,0 -.25,0 -.25,.1 -.25,.5 -.25,.8 -.25,1 -.25,1.2 -.25,.3 -.25,-1.3 -.25,-1 -.25,-.8 -.25,-.6 -.25,-.1 -.25,0 -.25,-.1 -.25,0 -.25,.1 -.25,0 -.25,0 -.25,0 -.25,-.1 -.25,.1 -.25,0 -.25,.4 -.25,.6 -.25,.7 -.25,1 -.25,-.5 -.25,-.9 -.25,-.6 -.25,-.5 -.25,-.2 -.25,0 -.25,0 -.25,0 -.25,-.1 -.25,0 -.25,.1 -.25,0 -.25,0 -.25,-.1 -.25,0 -.25,.2 -.25,.5 -.25,.6 -.25,.8 -.25,.7 -.25,-.9 -.25,-.8 -.25,-.6 -.25,-.4 -.25,-.1 -.25,.1 -.25,-.1 -.25,.1 -.25,0 -.25,-.1 -.25,0 -.25,.1 -.25,-.1 -.25,0 -.25,0 -.25,.1 -.25,0 -.25,.2 -.25,.2 -.25,.1 -.25,-.3 -.25,-.2 -.25,0 -.25,0 -.25,-.1 -.25,.1 -.25,0 -.25,-.1 -.25,0 -.25,0 -.25,.1 -.25,-.1 -.25,.1 -.25,-.1 -.25,.3 -.25,.6 -.25,.8 -.25,1.1 -.25,1.4 -.25,-.9 -.25,-1.2 -.25,-.9 -.25,-.7Z" fill="#3a3a3d" clip-path="url(#cd)"/></svg><svg style="position:absolute;left:218.00px;top:255.60px;" width="314.50" height="21.60" viewBox="0 0 314.50 21.60"><rect x="0" y="0" width="314.50" height="21.6" fill="#141416"/><rect x="0" y="10.6" width="314.50" height="0.6" fill="#2a2a2d"/><rect x="71.35" y="0.35" width="51.70" height="20.9" fill="#2b5e4c" stroke="#4c8a70" stroke-width="0.7" rx="1"/><clipPath id="ct"><rect x="71.00" y="0" width="52.40" height="21.6"/></clipPath><path d="M0,10.1l.25,-.7 .25,-1 .25,-1.2 .25,-1 .25,1.4 .25,1.2 .25,.9 .25,.6 .25,.3 .25,-.1 .25,.1 .25,-.1 .25,.1 .25,0 .25,0 .25,-.1 .25,0 .25,.1 .25,-.1 .25,0 .25,0 .25,-.2 .25,-.3 .25,0 .25,.3 .25,.2 .25,0 .25,0 .25,.1 .25,0 .25,-.1 .25,.1 .25,0 .25,-.1 .25,0 .25,0 .25,0 .25,.1 .25,-.1 .25,-.5 .25,-.6 .25,-.8 .25,-1 .25,.8 .25,.8 .25,.7 .25,.5 .25,.1 .25,.1 .25,-.1 .25,0 .25,0 .25,.1 .25,0 .25,-.1 .25,0 .25,0 .25,0 .25,-.2 .25,-.5 .25,-.7 .25,-.9 .25,-.5 .25,1 .25,.8 .25,.6 .25,.4 .25,0 .25,.1 .25,-.1 .25,0 .25,0 .25,0 .25,.1 .25,0 .25,-.1 .25,0 .25,-.1 .25,-.6 .25,-.8 .25,-1.1 .25,-1.4 .25,.3 .25,1.3 .25,1.1 .25,.7 .25,.6 .25,.1 .25,-.1 .25,.1 .25,0 .25,0 .25,0 .25,-.1 .25,0 .25,.1 .25,-.1 .25,-.1 .25,-.5 .25,-.6 .25,-.8 .25,-1.1 .25,1 .25,.8 .25,.7 .25,.5 .25,.2 .25,-.1 .25,.1 .25,0 .25,0 .25,0 .25,-.1 .25,.1 .25,-.1 .25,0 .25,0 .25,-.2 .25,-.6 .25,-.7 .25,-.9 .25,-.4 .25,1 .25,.8 .25,.6 .25,.4 .25,.1 .25,-.1 .25,0 .25,.1 .25,0 .25,-.1 .25,.1 .25,0 .25,0 .25,-.1 .25,0 .25,-.4 .25,-.6 .25,-.8 .25,-.9 .25,.3 .25,.9 .25,.7 .25,.6 .25,.3 .25,0 .25,-.1 .25,.1 .25,-.1 .25,0 .25,0 .25,0 .25,.1 .25,0 .25,-.1 .25,-.5 .25,-.8 .25,-1.1 .25,-1.5 .25,-1.7 .25,1.8 .25,1.4 .25,1.1 .25,.9 .25,.4 .25,0 .25,0 .25,0 .25,0 .25,.1 .25,-.1 .25,.1 .25,-.1 .25,0 .25,0 .25,0 .25,.1 .25,-.2 .25,-.2 .25,-.1 .25,.2 .25,.2 .25,.1 .25,0 .25,-.1 .25,0 .25,0 .25,.1 .25,-.1 .25,0 .25,.1 .25,0 .25,-.1 .25,0 .25,.1 .25,-.4 .25,-.4 .25,-.7 .25,-.7 .25,.3 .25,.8 .25,.5 .25,.4 .25,.2 .25,0 .25,-.1 .25,0 .25,0 .25,0 .25,.1 .25,0 .25,0 .25,0 .25,0 .25,-.3 .25,-.5 .25,-.8 .25,-.9 .25,-.9 .25,1.1 .25,.9 .25,.7 .25,.5 .25,.1 .25,.1 .25,0 .25,-.1 .25,.1 .25,0 .25,-.1 .25,0 .25,.1 .25,0 .25,-.3 .25,-.7 .25,-1 .25,-1.3 .25,-1.7 .25,-.2 .25,1.7 .25,1.4 .25,1 .25,.8 .25,.2 .25,0 .25,.1 .25,-.1 .25,.1 .25,-.1 .25,0 .25,0 .25,.1 .25,0 .25,-.1 .25,-.3 .25,-.5 .25,-.6 .25,-.8 .25,.4 .25,.8 .25,.5 .25,.4 .25,.1 .25,0 .25,.1 .25,0 .25,-.1 .25,0 .25,.1 .25,0 .25,0 .25,0 .25,-.1 .25,-.2 .25,-.5 .25,-.7 .25,-.8 .25,-.8 .25,1 .25,.9 .25,.6 .25,.5 .25,0 .25,.1 .25,-.1 .25,.1 .25,0 .25,0 .25,-.1 .25,0 .25,.1 .25,-.1 .25,0 .25,-.2 .25,-.4 .25,-.6 .25,-.7 .25,0 .25,.7 .25,.6 .25,.4 .25,.2 .25,0 .25,0 .25,.1 .25,-.1 .25,0 .25,0 .25,.1 .25,0 .25,-.1 .25,0 .25,-.2 .25,-.7 .25,-.9 .25,-1.2 .25,-1.4 .25,1 .25,1.3 .25,1 .25,.7 .25,.4 .25,0 .25,0 .25,.1 .25,0 .25,0 .25,0 .25,-.1 .25,0 .25,.1 .25,0 .25,0 .25,0 .25,-.1 .25,-.3 .25,-.1 .25,.2 .25,.2 .25,0 .25,0 .25,0 .25,0 .25,.1 .25,0 .25,0 .25,-.1 .25,0 .25,0 .25,0 .25,.1 .25,-.1 .25,-.4 .25,-.6 .25,-.8 .25,-1 .25,.1 .25,1 .25,.8 .25,.6 .25,.3 .25,0 .25,0 .25,0 .25,.1 .25,0 .25,0 .25,-.1 .25,0 .25,0 .25,0 .25,-.1 .25,-.5 .25,-.7 .25,-.9 .25,-1.1 .25,1 .25,.9 .25,.7 .25,.5 .25,.2 .25,.1 .25,-.1 .25,0 .25,0 .25,0 .25,0 .25,.1 .25,0 .25,-.1 .25,-.1 .25,-.6 .25,-.9 .25,-1.2 .25,-1.6 .25,-.8 .25,1.7 .25,1.4 .25,1.1 .25,.7 .25,.4 .25,-.1 .25,.1 .25,0 .25,0 .25,-.1 .25,0 .25,.1 .25,-.1 .25,.1 .25,-.1 .25,-.3 .25,-.6 .25,-.8 .25,-.9 .25,.3 .25,.9 .25,.7 .25,.5 .25,.2 .25,.1 .25,-.1 .25,0 .25,0 .25,0 .25,0 .25,.1 .25,-.1 .25,0 .25,.1 .25,-.1 .25,-.4 .25,-.5 .25,-.7 .25,-.8 .25,.8 .25,.7 .25,.5 .25,.4 .25,0 .25,.1 .25,-.1 .25,0 .25,.1 .25,-.1 .25,.1 .25,-.1 .25,.1 .25,0 .25,0 .25,-.3 .25,-.5 .25,-.7 .25,-.9 .25,-.3 .25,1 .25,.7 .25,.6 .25,.3 .25,.1 .25,-.1 .25,.1 .25,-.1 .25,0 .25,.1 .25,0 .25,-.1 .25,.1 .25,0 .25,-.4 .25,-.7 .25,-1 .25,-1.4 .25,-1.6 .25,.7 .25,1.5 .25,1.2 .25,.9 .25,.6 .25,.2 .25,-.1 .25,0 .25,0 .25,0 .25,.1 .25,-.1 .25,.1 .25,-.1 .25,0 .25,0 .25,0 .25,0 .25,-.2 .25,-.3 .25,.3 .25,.2 .25,0 .25,.1 .25,0 .25,0 .25,0 .25,-.1 .25,0 .25,.1 .25,0 .25,0 .25,-.1 .25,0 .25,.1 .25,-.4 .25,-.6 .25,-.8 .25,-.9 .25,-.2 .25,1 .25,.8 .25,.6 .25,.4 .25,0 .25,.1 .25,0 .25,0 .25,-.1 .25,.1 .25,0 .25,0 .25,0 .25,-.1 .25,0 .25,-.5 .25,-.7 .25,-.9 .25,-1.1 .25,.6 .25,1 .25,.8 .25,.5 .25,.3 .25,0 .25,0 .25,0 .25,.1 .25,-.1 .25,0 .25,.1 .25,-.1 .25,0 .25,0 .25,-.5 .25,-.8 .25,-1 .25,-1.4 .25,-1.3 .25,1.6 .25,1.3 .25,1 .25,.8 .25,.3 .25,.1 .25,0 .25,-.1 .25,0 .25,0 .25,0 .25,0 .25,0 .25,0 .25,0 .25,-.3 .25,-.6 .25,-.7 .25,-1 .25,0 .25,.9 .25,.8 .25,.6 .25,.4 .25,0 .25,0 .25,0 .25,0 .25,-.1 .25,0 .25,.1 .25,-.1 .25,.1 .25,-.1 .25,0 .25,-.3 .25,-.5 .25,-.7 .25,-.8 .25,.5 .25,.8 .25,.5 .25,.4 .25,.1 .25,0 .25,.1 .25,-.1 .25,.1 .25,-.1 .25,0 .25,.1 .25,0 .25,-.1 .25,.1 .25,-.3 .25,-.4 .25,-.7 .25,-.9 .25,-.6 .25,1 .25,.8 .25,.6 .25,.4 .25,.1 .25,-.1 .25,.1 .25,-.1 .25,0 .25,0 .25,0 .25,0 .25,.1 .25,-.1 .25,-.1 .25,-.6 .25,-.9 .25,-1.2 .25,-1.4 .25,.1 .25,1.4 .25,1.2 .25,.8 .25,.6 .25,.2 .25,0 .25,0 .25,-.1 .25,0 .25,0 .25,.1 .25,-.1 .25,0 .25,0 .25,0 .25,0 .25,0 .25,-.3 .25,-.3 .25,.3 .25,.2 .25,.2 .25,-.1 .25,0 .25,0 .25,.1 .25,-.1 .25,.1 .25,-.1 .25,0 .25,.1 .25,0 .25,0 .25,-.1 .25,-.1 .25,-.5 .25,-.6 .25,-.8 .25,-.5 .25,.9 .25,.7 .25,.6 .25,.3 .25,0 .25,0 .25,.1 .25,0 .25,-.1 .25,.1 .25,0 .25,-.1 .25,.1 .25,0 .25,-.1 .25,-.4 .25,-.5 .25,-.8 .25,-1 .25,.3 .25,.9 .25,.7 .25,.5 .25,.4 .25,0 .25,0 .25,-.1 .25,0 .25,0 .25,0 .25,0 .25,.1 .25,-.1 .25,0 .25,-.3 .25,-.7 .25,-.9 .25,-1.2 .25,-1.4 .25,1.3 .25,1.2 .25,1 .25,.7 .25,.4 .25,-.1 .25,.1 .25,-.1 .25,.1 .25,-.1 .25,.1 .25,0 .25,-.1 .25,0 .25,0 .25,-.1 .25,-.4 .25,-.6 .25,-.7 .25,-.3 .25,.8 .25,.6 .25,.5 .25,.2 .25,0 .25,.1 .25,-.1 .25,.1 .25,-.1 .25,0 .25,.1 .25,-.1 .25,0 .25,.1 .25,-.1 .25,-.4 .25,-.6 .25,-.8 .25,-1 .25,.3 .25,1 .25,.7 .25,.5 .25,.3 .25,0 .25,.1 .25,0 .25,0 .25,0 .25,0 .25,0 .25,-.1 .25,0 .25,.1 .25,-.2 .25,-.4 .25,-.6 .25,-.8 .25,-.9 .25,1 .25,.7 .25,.6 .25,.5 .25,.1 .25,-.1 .25,0 .25,0 .25,0 .25,0 .25,.1 .25,0 .25,-.1 .25,0 .25,-.1 .25,-.7 .25,-1 .25,-1.4 .25,-1.7 .25,-.4 .25,1.8 .25,1.4 .25,1.1 .25,.7 .25,.4 .25,-.1 .25,.1 .25,0 .25,0 .25,0 .25,0 .25,-.1 .25,0 .25,0 .25,0 .25,.1 .25,-.1 .25,-.2 .25,-.2 .25,.1 .25,.2 .25,.2 .25,0 .25,-.1 .25,.1 .25,0 .25,0 .25,-.1 .25,0 .25,0 .25,0 .25,0 .25,.1 .25,-.1 .25,-.2 .25,-.5 .25,-.7 .25,-.9 .25,-.9 .25,1.1 .25,.8 .25,.7 .25,.5 .25,.1 .25,0 .25,.1 .25,0 .25,-.1 .25,0 .25,.1 .25,0 .25,-.1 .25,0 .25,0 .25,-.5 .25,-.7 .25,-.9 .25,-1.2 .25,-.2 .25,1.3 .25,.9 .25,.8 .25,.5 .25,0 .25,.1 .25,0 .25,0 .25,-.1 .25,.1 .25,-.1 .25,0 .25,.1 .25,-.1 .25,-.4 .25,-.9 .25,-1.1 .25,-1.6 .25,-1.9 .25,1.2 .25,1.7 .25,1.3 .25,1 .25,.6 .25,.1 .25,0 .25,.1 .25,0 .25,0 .25,0 .25,0 .25,-.1 .25,.1 .25,-.1 .25,-.2 .25,-.5 .25,-.6 .25,-.9 .25,-.7 .25,1 .25,.8 .25,.6 .25,.5 .25,0 .25,0 .25,0 .25,.1 .25,-.1 .25,.1 .25,0 .25,0 .25,-.1 .25,0 .25,.1 .25,-.4 .25,-.5 .25,-.7 .25,-.9 .25,0 .25,.9 .25,.7 .25,.5 .25,.3 .25,0 .25,.1 .25,-.1 .25,.1 .25,-.1 .25,.1 .25,-.1 .25,.1 .25,-.1 .25,.1 .25,-.1 .25,-.4 .25,-.6 .25,-.7 .25,-1 .25,.7 .25,.8 .25,.6 .25,.5 .25,.1 .25,0 .25,.1 .25,-.1 .25,0 .25,.1 .25,-.1 .25,0 .25,0 .25,.1 .25,-.1 .25,-.4 .25,-.7 .25,-1 .25,-1.2 .25,-.8 .25,1.3 .25,1.2 .25,.8 .25,.6 .25,.3 .25,-.1 .25,.1 .25,0 .25,0 .25,-.1 .25,0 .25,.1 .25,-.1 .25,0 .25,.1 .25,-.1 .25,0 .25,-.2 .25,-.3 .25,.1 .25,.2 .25,.3 .25,-.1 .25,.1 .25,0 .25,0 .25,-.1 .25,.1 .25,-.1 .25,.1 .25,-.1 .25,0 .25,.1 .25,-.1 .25,-.1 .25,-.5 .25,-.6 .25,-.8 .25,-1.1 .25,.9 .25,.9 .25,.7 .25,.5 .25,.1 .25,.1 .25,-.1 .25,0 .25,0 .25,0 .25,0 .25,0 .25,0 .25,.1 .25,-.1 .25,-.2 .25,-.4 .25,-.7 .25,-.8 .25,-.4 .25,.9 .25,.7 .25,.6 .25,.3 .25,.1 .25,0 .25,-.1 .25,0 .25,.1 .25,0 .25,-.1 .25,.1 .25,0 .25,-.1 .25,-.3 .25,-.7 .25,-1 .25,-1.4 .25,-1.7 .25,.5 .25,1.6 .25,1.3 .25,1 .25,.6 .25,.2 .25,0 .25,-.1 .25,0 .25,0 .25,0 .25,0 .25,0 .25,0 .25,0 .25,-.1 .25,-.5 .25,-.7 .25,-.9 .25,-1 .25,1 .25,.9 .25,.7 .25,.5 .25,.1 .25,.1 .25,-.1 .25,.1 .25,0 .25,0 .25,-.1 .25,.1 .25,-.1 .25,.1 .25,0 .25,-.3 .25,-.5 .25,-.6 .25,-.8 .25,-.3 .25,.9 .25,.7 .25,.5 .25,.4 .25,-.1 .25,0 .25,0 .25,.1 .25,-.1 .25,0 .25,.1 .25,-.1 .25,0 .25,0 .25,0 .25,-.4 .25,-.6 .25,-.7 .25,-.9 .25,.4 .25,.8 .25,.7 .25,.5 .25,.3 .25,0 .25,0 .25,0 .25,-.1 .25,.1 .25,-.1 .25,0 .25,.1 .25,-.1 .25,0 .25,-.5 .25,-.8 .25,-1.1 .25,-1.5 .25,-1.5 .25,1.7 .25,1.4 .25,1.1 .25,.8 .25,.4 .25,0 .25,.1 .25,-.1 .25,.1 .25,-.1 .25,0 .25,0 .25,0 .25,.1 .25,-.1 .25,.1 .25,-.1 .25,-.1 .25,-.3 .25,0 .25,.2 .25,.2 .25,.1 .25,-.1 .25,.1 .25,0 .25,0 .25,-.1 .25,.1 .25,-.1 .25,0 .25,0 .25,.1 .25,-.1 .25,0 .25,-.5 .25,-.7 .25,-.8 .25,-1.1 .25,.6 .25,1 .25,.7 .25,.6 .25,.3 .25,0 .25,-.1 .25,0 .25,.1 .25,-.1 .25,.1 .25,0 .25,-.1 .25,0 .25,0 .25,-.2 .25,-.6 .25,-.7 .25,-1 .25,-.8 .25,1.1 .25,.9 .25,.7 .25,.5 .25,.1 .25,0 .25,.1 .25,-.1 .25,0 .25,.1 .25,-.1 .25,0 .25,0 .25,0 .25,-.1 .25,-.6 .25,-.8 .25,-1.2 .25,-1.4 .25,-.1 .25,1.5 .25,1.1 .25,.9 .25,.6 .25,.1 .25,.1 .25,-.1 .25,0 .25,0 .25,0 .25,.1 .25,0 .25,-.1 .25,0 .25,0 .25,-.3 .25,-.5 .25,-.7 .25,-.8 .25,.6 .25,.7 .25,.5 .25,.4 .25,.1 .25,.1 .25,-.1 .25,0 .25,0 .25,0 .25,.1 .25,0 .25,-.1 .25,0 .25,.1 .25,-.3 .25,-.5 .25,-.7 .25,-.8 .25,-.7 .25,1 .25,.8 .25,.6 .25,.5 .25,.1 .25,-.1 .25,0 .25,.1 .25,0 .25,0 .25,-.1 .25,0 .25,0 .25,0 .25,.1 .25,-.4 .25,-.6 .25,-.7 .25,-1 .25,.1 .25,.9 .25,.8 .25,.5 .25,.4 .25,0 .25,0 .25,-.1 .25,0 .25,.1 .25,0 .25,-.1 .25,.1 .25,-.1 .25,0 .25,-.3 .25,-.7L314.50,12.3l-.25,-.7 -.25,-.3 -.25,0 -.25,-.1 -.25,.1 -.25,-.1 -.25,0 -.25,.1 -.25,0 -.25,-.1 -.25,0 -.25,0 -.25,.4 -.25,.5 -.25,.8 -.25,.9 -.25,.1 -.25,-1 -.25,-.7 -.25,-.6 -.25,-.4 -.25,.1 -.25,0 -.25,0 -.25,0 -.25,-.1 -.25,0 -.25,0 -.25,.1 -.25,0 -.25,-.1 -.25,.1 -.25,.5 -.25,.6 -.25,.8 -.25,1 -.25,-.7 -.25,-.8 -.25,-.7 -.25,-.5 -.25,-.3 -.25,.1 -.25,0 -.25,-.1 -.25,0 -.25,.1 -.25,0 -.25,0 -.25,0 -.25,-.1 -.25,.1 -.25,.1 -.25,.4 -.25,.5 -.25,.7 -.25,.6 -.25,-.8 -.25,-.7 -.25,-.5 -.25,-.3 -.25,0 -.25,0 -.25,-.1 -.25,0 -.25,.1 -.25,0 -.25,0 -.25,0 -.25,-.1 -.25,.1 -.25,.1 -.25,.6 -.25,.9 -.25,1.1 -.25,1.5 -.25,-.1 -.25,-1.4 -.25,-1.2 -.25,-.8 -.25,-.6 -.25,-.1 -.25,0 -.25,0 -.25,0 -.25,-.1 -.25,.1 -.25,0 -.25,-.1 -.25,.1 -.25,0 -.25,.1 -.25,.5 -.25,.7 -.25,.9 -.25,1.1 -.25,-.8 -.25,-1 -.25,-.7 -.25,-.6 -.25,-.2 -.25,0 -.25,0 -.25,-.1 -.25,0 -.25,.1 -.25,-.1 -.25,.1 -.25,0 -.25,-.1 -.25,0 -.25,.3 -.25,.6 -.25,.7 -.25,1 -.25,.6 -.25,-1.1 -.25,-.8 -.25,-.7 -.25,-.5 -.25,0 -.25,-.1 -.25,.1 -.25,0 -.25,0 -.25,-.1 -.25,.1 -.25,-.1 -.25,0 -.25,0 -.25,.1 -.25,-.1 -.25,.1 -.25,.2 -.25,.2 -.25,0 -.25,-.3 -.25,-.1 -.25,-.1 -.25,.1 -.25,-.1 -.25,.1 -.25,0 -.25,0 -.25,0 -.25,-.1 -.25,.1 -.25,-.1 -.25,.1 -.25,0 -.25,.4 -.25,.8 -.25,1.1 -.25,1.4 -.25,1.7 -.25,-1.5 -.25,-1.5 -.25,-1.1 -.25,-.8 -.25,-.5 -.25,0 -.25,-.1 -.25,.1 -.25,0 -.25,-.1 -.25,.1 -.25,-.1 -.25,0 -.25,0 -.25,0 -.25,.3 -.25,.5 -.25,.7 -.25,.8 -.25,.4 -.25,-.9 -.25,-.7 -.25,-.6 -.25,-.4 -.25,0 -.25,0 -.25,0 -.25,-.1 -.25,.1 -.25,0 -.25,-.1 -.25,.1 -.25,0 -.25,0 -.25,-.1 -.25,.4 -.25,.5 -.25,.7 -.25,.9 -.25,-.3 -.25,-.8 -.25,-.6 -.25,-.5 -.25,-.3 -.25,0 -.25,.1 -.25,-.1 -.25,.1 -.25,-.1 -.25,0 -.25,0 -.25,.1 -.25,-.1 -.25,.1 -.25,.1 -.25,.5 -.25,.7 -.25,.9 -.25,1 -.25,-1 -.25,-.9 -.25,-.7 -.25,-.5 -.25,-.1 -.25,0 -.25,0 -.25,0 -.25,0 -.25,0 -.25,0 -.25,0 -.25,-.1 -.25,0 -.25,.2 -.25,.6 -.25,1 -.25,1.3 -.25,1.6 -.25,.5 -.25,-1.7 -.25,-1.4 -.25,-1 -.25,-.7 -.25,-.3 -.25,-.1 -.25,0 -.25,.1 -.25,-.1 -.25,0 -.25,.1 -.25,0 -.25,-.1 -.25,0 -.25,.1 -.25,.3 -.25,.6 -.25,.7 -.25,.9 -.25,-.4 -.25,-.8 -.25,-.7 -.25,-.4 -.25,-.2 -.25,-.1 -.25,.1 -.25,0 -.25,0 -.25,0 -.25,0 -.25,0 -.25,0 -.25,-.1 -.25,.1 -.25,.1 -.25,.5 -.25,.7 -.25,.9 -.25,.9 -.25,-1.1 -.25,-.8 -.25,-.6 -.25,-.5 -.25,-.1 -.25,-.1 -.25,.1 -.25,0 -.25,-.1 -.25,.1 -.25,-.1 -.25,.1 -.25,-.1 -.25,0 -.25,0 -.25,.1 -.25,-.1 -.25,.3 -.25,.2 -.25,.1 -.25,-.3 -.25,-.2 -.25,0 -.25,-.1 -.25,.1 -.25,0 -.25,-.1 -.25,.1 -.25,0 -.25,-.1 -.25,0 -.25,0 -.25,.1 -.25,-.1 -.25,.3 -.25,.6 -.25,.8 -.25,1.2 -.25,1.3 -.25,-.8 -.25,-1.2 -.25,-1 -.25,-.7 -.25,-.4 -.25,-.1 -.25,.1 -.25,0 -.25,0 -.25,-.1 -.25,.1 -.25,0 -.25,-.1 -.25,.1 -.25,0 -.25,.1 -.25,.5 -.25,.6 -.25,.8 -.25,.7 -.25,-1 -.25,-.7 -.25,-.6 -.25,-.4 -.25,-.1 -.25,.1 -.25,-.1 -.25,.1 -.25,-.1 -.25,.1 -.25,-.1 -.25,.1 -.25,-.1 -.25,.1 -.25,0 -.25,.3 -.25,.5 -.25,.7 -.25,.9 -.25,0 -.25,-.9 -.25,-.7 -.25,-.5 -.25,-.4 -.25,.1 -.25,0 -.25,-.1 -.25,0 -.25,0 -.25,.1 -.25,-.1 -.25,.1 -.25,0 -.25,0 -.25,0 -.25,.5 -.25,.6 -.25,.8 -.25,1 -.25,-.7 -.25,-.9 -.25,-.6 -.25,-.5 -.25,-.2 -.25,-.1 -.25,.1 -.25,-.1 -.25,0 -.25,0 -.25,0 -.25,0 -.25,.1 -.25,0 -.25,.1 -.25,.6 -.25,1 -.25,1.3 -.25,1.7 -.25,1.2 -.25,-1.9 -.25,-1.6 -.25,-1.1 -.25,-.9 -.25,-.4 -.25,-.1 -.25,.1 -.25,0 -.25,-.1 -.25,.1 -.25,-.1 -.25,0 -.25,0 -.25,.1 -.25,0 -.25,.5 -.25,.8 -.25,.9 -.25,1.3 -.25,-.2 -.25,-1.2 -.25,-.9 -.25,-.7 -.25,-.5 -.25,0 -.25,0 -.25,-.1 -.25,0 -.25,.1 -.25,0 -.25,-.1 -.25,0 -.25,.1 -.25,0 -.25,.1 -.25,.5 -.25,.7 -.25,.8 -.25,1.1 -.25,-.9 -.25,-.9 -.25,-.7 -.25,-.5 -.25,-.2 -.25,-.1 -.25,.1 -.25,0 -.25,0 -.25,0 -.25,0 -.25,-.1 -.25,0 -.25,0 -.25,.1 -.25,-.1 -.25,0 -.25,.2 -.25,.2 -.25,.1 -.25,-.2 -.25,-.2 -.25,-.1 -.25,.1 -.25,0 -.25,0 -.25,0 -.25,-.1 -.25,0 -.25,0 -.25,0 -.25,0 -.25,.1 -.25,-.1 -.25,.4 -.25,.7 -.25,1.1 -.25,1.4 -.25,1.8 -.25,-.4 -.25,-1.7 -.25,-1.4 -.25,-1 -.25,-.7 -.25,-.1 -.25,0 -.25,-.1 -.25,0 -.25,.1 -.25,0 -.25,0 -.25,0 -.25,0 -.25,-.1 -.25,.1 -.25,.5 -.25,.6 -.25,.7 -.25,1 -.25,-.9 -.25,-.8 -.25,-.6 -.25,-.4 -.25,-.2 -.25,.1 -.25,0 -.25,-.1 -.25,0 -.25,0 -.25,0 -.25,0 -.25,0 -.25,.1 -.25,0 -.25,.3 -.25,.5 -.25,.7 -.25,1 -.25,.3 -.25,-1 -.25,-.8 -.25,-.6 -.25,-.4 -.25,-.1 -.25,.1 -.25,0 -.25,-.1 -.25,.1 -.25,0 -.25,-.1 -.25,.1 -.25,-.1 -.25,.1 -.25,0 -.25,.2 -.25,.5 -.25,.6 -.25,.8 -.25,-.3 -.25,-.7 -.25,-.6 -.25,-.4 -.25,-.1 -.25,0 -.25,0 -.25,-.1 -.25,0 -.25,.1 -.25,-.1 -.25,.1 -.25,-.1 -.25,.1 -.25,-.1 -.25,.4 -.25,.7 -.25,1 -.25,1.2 -.25,1.3 -.25,-1.4 -.25,-1.2 -.25,-.9 -.25,-.7 -.25,-.3 -.25,0 -.25,-.1 -.25,.1 -.25,0 -.25,0 -.25,0 -.25,0 -.25,-.1 -.25,0 -.25,0 -.25,.4 -.25,.5 -.25,.7 -.25,.9 -.25,.3 -.25,-1 -.25,-.8 -.25,-.5 -.25,-.4 -.25,-.1 -.25,0 -.25,.1 -.25,-.1 -.25,0 -.25,.1 -.25,-.1 -.25,0 -.25,.1 -.25,0 -.25,0 -.25,.3 -.25,.6 -.25,.7 -.25,.9 -.25,-.5 -.25,-.8 -.25,-.6 -.25,-.5 -.25,-.1 -.25,-.1 -.25,0 -.25,0 -.25,.1 -.25,0 -.25,-.1 -.25,.1 -.25,-.1 -.25,.1 -.25,0 -.25,0 -.25,-.1 -.25,.2 -.25,.2 -.25,.3 -.25,-.3 -.25,-.3 -.25,0 -.25,0 -.25,0 -.25,0 -.25,0 -.25,-.1 -.25,.1 -.25,0 -.25,0 -.25,-.1 -.25,0 -.25,0 -.25,.2 -.25,.6 -.25,.8 -.25,1.2 -.25,1.4 -.25,.1 -.25,-1.4 -.25,-1.2 -.25,-.9 -.25,-.6 -.25,-.1 -.25,-.1 -.25,.1 -.25,0 -.25,0 -.25,0 -.25,0 -.25,-.1 -.25,.1 -.25,-.1 -.25,.1 -.25,.4 -.25,.6 -.25,.8 -.25,1 -.25,-.6 -.25,-.9 -.25,-.7 -.25,-.4 -.25,-.3 -.25,.1 -.25,-.1 -.25,0 -.25,.1 -.25,0 -.25,-.1 -.25,.1 -.25,-.1 -.25,.1 -.25,0 -.25,.1 -.25,.4 -.25,.5 -.25,.8 -.25,.5 -.25,-.8 -.25,-.7 -.25,-.5 -.25,-.3 -.25,0 -.25,-.1 -.25,.1 -.25,-.1 -.25,.1 -.25,0 -.25,-.1 -.25,0 -.25,0 -.25,0 -.25,0 -.25,.4 -.25,.6 -.25,.8 -.25,.9 -.25,0 -.25,-1 -.25,-.7 -.25,-.6 -.25,-.3 -.25,0 -.25,0 -.25,0 -.25,0 -.25,0 -.25,0 -.25,0 -.25,-.1 -.25,0 -.25,.1 -.25,.3 -.25,.8 -.25,1 -.25,1.3 -.25,1.6 -.25,-1.3 -.25,-1.4 -.25,-1 -.25,-.8 -.25,-.5 -.25,0 -.25,0 -.25,-.1 -.25,.1 -.25,0 -.25,-.1 -.25,.1 -.25,0 -.25,0 -.25,0 -.25,.3 -.25,.5 -.25,.8 -.25,1 -.25,.6 -.25,-1.1 -.25,-.9 -.25,-.7 -.25,-.5 -.25,0 -.25,-.1 -.25,0 -.25,0 -.25,0 -.25,.1 -.25,-.1 -.25,0 -.25,0 -.25,.1 -.25,0 -.25,.4 -.25,.6 -.25,.8 -.25,1 -.25,-.2 -.25,-.9 -.25,-.8 -.25,-.6 -.25,-.4 -.25,.1 -.25,0 -.25,-.1 -.25,0 -.25,0 -.25,.1 -.25,0 -.25,-.1 -.25,0 -.25,0 -.25,0 -.25,.1 -.25,0 -.25,.2 -.25,.3 -.25,-.3 -.25,-.2 -.25,0 -.25,0 -.25,0 -.25,0 -.25,-.1 -.25,.1 -.25,-.1 -.25,.1 -.25,0 -.25,0 -.25,0 -.25,-.1 -.25,.2 -.25,.6 -.25,.9 -.25,1.2 -.25,1.5 -.25,.7 -.25,-1.6 -.25,-1.4 -.25,-1 -.25,-.7 -.25,-.4 -.25,0 -.25,.1 -.25,-.1 -.25,0 -.25,.1 -.25,0 -.25,-.1 -.25,.1 -.25,-.1 -.25,.1 -.25,.3 -.25,.6 -.25,.7 -.25,1 -.25,-.3 -.25,-.9 -.25,-.7 -.25,-.5 -.25,-.3 -.25,0 -.25,0 -.25,.1 -.25,-.1 -.25,.1 -.25,-.1 -.25,.1 -.25,0 -.25,-.1 -.25,.1 -.25,0 -.25,.4 -.25,.5 -.25,.7 -.25,.8 -.25,-.8 -.25,-.7 -.25,-.5 -.25,-.4 -.25,-.1 -.25,.1 -.25,0 -.25,-.1 -.25,.1 -.25,0 -.25,0 -.25,0 -.25,0 -.25,-.1 -.25,.1 -.25,.2 -.25,.5 -.25,.7 -.25,.9 -.25,.3 -.25,-.9 -.25,-.8 -.25,-.6 -.25,-.3 -.25,-.1 -.25,.1 -.25,-.1 -.25,.1 -.25,0 -.25,-.1 -.25,0 -.25,0 -.25,.1 -.25,-.1 -.25,.4 -.25,.7 -.25,1.1 -.25,1.4 -.25,1.7 -.25,-.8 -.25,-1.6 -.25,-1.2 -.25,-.9 -.25,-.6 -.25,-.1 -.25,-.1 -.25,0 -.25,.1 -.25,0 -.25,0 -.25,0 -.25,0 -.25,-.1 -.25,.1 -.25,.2 -.25,.5 -.25,.7 -.25,.9 -.25,1 -.25,-1.1 -.25,-.9 -.25,-.7 -.25,-.5 -.25,-.1 -.25,0 -.25,0 -.25,0 -.25,-.1 -.25,0 -.25,0 -.25,.1 -.25,0 -.25,0 -.25,0 -.25,.3 -.25,.6 -.25,.8 -.25,1 -.25,.1 -.25,-1 -.25,-.8 -.25,-.6 -.25,-.4 -.25,-.1 -.25,.1 -.25,0 -.25,0 -.25,0 -.25,-.1 -.25,0 -.25,0 -.25,.1 -.25,0 -.25,0 -.25,0 -.25,0 -.25,.2 -.25,.2 -.25,-.1 -.25,-.3 -.25,-.1 -.25,0 -.25,0 -.25,0 -.25,.1 -.25,0 -.25,-.1 -.25,0 -.25,0 -.25,0 -.25,.1 -.25,0 -.25,0 -.25,.4 -.25,.7 -.25,1 -.25,1.3 -.25,1 -.25,-1.4 -.25,-1.2 -.25,-.9 -.25,-.7 -.25,-.2 -.25,0 -.25,-.1 -.25,0 -.25,.1 -.25,0 -.25,0 -.25,-.1 -.25,.1 -.25,0 -.25,0 -.25,.2 -.25,.4 -.25,.6 -.25,.7 -.25,0 -.25,-.7 -.25,-.6 -.25,-.4 -.25,-.2 -.25,0 -.25,-.1 -.25,.1 -.25,0 -.25,-.1 -.25,0 -.25,0 -.25,.1 -.25,-.1 -.25,.1 -.25,0 -.25,.5 -.25,.6 -.25,.9 -.25,1 -.25,-.8 -.25,-.8 -.25,-.7 -.25,-.5 -.25,-.2 -.25,-.1 -.25,0 -.25,0 -.25,0 -.25,.1 -.25,0 -.25,-.1 -.25,0 -.25,.1 -.25,0 -.25,.1 -.25,.4 -.25,.5 -.25,.8 -.25,.4 -.25,-.8 -.25,-.6 -.25,-.5 -.25,-.3 -.25,-.1 -.25,0 -.25,.1 -.25,0 -.25,0 -.25,-.1 -.25,.1 -.25,-.1 -.25,.1 -.25,0 -.25,.2 -.25,.8 -.25,1 -.25,1.4 -.25,1.7 -.25,-.2 -.25,-1.7 -.25,-1.3 -.25,-1 -.25,-.7 -.25,-.3 -.25,0 -.25,.1 -.25,0 -.25,-.1 -.25,0 -.25,.1 -.25,-.1 -.25,0 -.25,.1 -.25,.1 -.25,.5 -.25,.7 -.25,.9 -.25,1.1 -.25,-.9 -.25,-.9 -.25,-.8 -.25,-.5 -.25,-.3 -.25,0 -.25,0 -.25,0 -.25,0 -.25,.1 -.25,0 -.25,0 -.25,0 -.25,-.1 -.25,0 -.25,.2 -.25,.4 -.25,.5 -.25,.8 -.25,.3 -.25,-.7 -.25,-.7 -.25,-.4 -.25,-.4 -.25,.1 -.25,0 -.25,-.1 -.25,0 -.25,.1 -.25,0 -.25,-.1 -.25,.1 -.25,0 -.25,0 -.25,-.1 -.25,0 -.25,.1 -.25,.2 -.25,.2 -.25,-.1 -.25,-.2 -.25,-.2 -.25,.1 -.25,0 -.25,0 -.25,0 -.25,-.1 -.25,.1 -.25,-.1 -.25,.1 -.25,0 -.25,0 -.25,0 -.25,0 -.25,.4 -.25,.9 -.25,1.1 -.25,1.4 -.25,1.8 -.25,-1.7 -.25,-1.5 -.25,-1.1 -.25,-.8 -.25,-.5 -.25,-.1 -.25,0 -.25,.1 -.25,0 -.25,0 -.25,0 -.25,-.1 -.25,.1 -.25,-.1 -.25,0 -.25,.3 -.25,.6 -.25,.7 -.25,.9 -.25,.3 -.25,-.9 -.25,-.8 -.25,-.6 -.25,-.4 -.25,0 -.25,-.1 -.25,0 -.25,0 -.25,.1 -.25,-.1 -.25,0 -.25,.1 -.25,0 -.25,-.1 -.25,.1 -.25,.4 -.25,.6 -.25,.8 -.25,1 -.25,-.4 -.25,-.9 -.25,-.7 -.25,-.6 -.25,-.2 -.25,0 -.25,0 -.25,-.1 -.25,.1 -.25,-.1 -.25,0 -.25,0 -.25,0 -.25,.1 -.25,-.1 -.25,.2 -.25,.5 -.25,.7 -.25,.8 -.25,1 -.25,-1.1 -.25,-.8 -.25,-.6 -.25,-.5 -.25,-.1 -.25,-.1 -.25,.1 -.25,0 -.25,-.1 -.25,0 -.25,0 -.25,0 -.25,.1 -.25,-.1 -.25,.1 -.25,.6 -.25,.7 -.25,1.1 -.25,1.3 -.25,.3 -.25,-1.4 -.25,-1.1 -.25,-.8 -.25,-.6 -.25,-.1 -.25,0 -.25,-.1 -.25,0 -.25,.1 -.25,0 -.25,0 -.25,0 -.25,-.1 -.25,.1 -.25,0 -.25,.4 -.25,.6 -.25,.8 -.25,1 -.25,-.5 -.25,-.9 -.25,-.7 -.25,-.5 -.25,-.2 -.25,0 -.25,0 -.25,0 -.25,-.1 -.25,0 -.25,.1 -.25,0 -.25,0 -.25,-.1 -.25,.1 -.25,.1 -.25,.5 -.25,.7 -.25,.8 -.25,.8 -.25,-1 -.25,-.8 -.25,-.6 -.25,-.5 -.25,-.1 -.25,.1 -.25,0 -.25,0 -.25,0 -.25,-.1 -.25,0 -.25,.1 -.25,-.1 -.25,0 -.25,.1 -.25,0 -.25,0 -.25,.2 -.25,.3 -.25,0 -.25,-.3 -.25,-.2 -.25,0 -.25,0 -.25,-.1 -.25,.1 -.25,0 -.25,-.1 -.25,0 -.25,0 -.25,.1 -.25,-.1 -.25,.1 -.25,-.1 -.25,.3 -.25,.6 -.25,.9 -.25,1.2 -.25,1.4 -.25,-1 -.25,-1.2 -.25,-1 -.25,-.7Z" fill="#46d99a" clip-path="url(#ct)"/></svg><svg style="position:absolute;left:218.00px;top:277.60px;" width="314.50" height="35.20" viewBox="0 0 314.50 35.20"><rect x="0" y="0" width="314.50" height="35.20" fill="#478389"/><rect x="0" y="0" width="314.50" height="0.8" fill="#5a9aa0"/><path d="M0,15l.25,-.3 .25,-.2 .25,-.3 .25,.5 .25,-4.2 .25,-8.1 .25,1.9 .25,1 .25,1.6 .25,.8 .25,1 .25,.7 .25,.5 .25,0 .25,.4 .25,1 .25,.4 .25,.4 .25,-.3 .25,-1.7 .25,.1 .25,.1 .25,.2 .25,0 .25,.3 .25,.7 .25,0 .25,.5 .25,.1 .25,.4 .25,.5 .25,.5 .25,.4 .25,.5 .25,.5 .25,-.5 .25,-.3 .25,-.4 .25,0 .25,.2 .25,-1.9 .25,-5 .25,.7 .25,.8 .25,1 .25,.7 .25,.3 .25,.6 .25,.3 .25,.2 .25,.5 .25,.7 .25,.2 .25,.5 .25,.5 .25,.5 .25,.2 .25,.2 .25,-.5 .25,-3.8 .25,.5 .25,.1 .25,-.2 .25,.9 .25,.5 .25,-.2 .25,-.1 .25,.2 .25,.7 .25,.3 .25,-.1 .25,0 .25,.2 .25,.6 .25,-.4 .25,.3 .25,-.2 .25,.5 .25,-.5 .25,0 .25,-1.7 .25,-5.1 .25,.9 .25,.8 .25,.7 .25,.8 .25,.2 .25,.8 .25,.6 .25,.6 .25,.1 .25,.7 .25,.4 .25,.6 .25,0 .25,0 .25,-.1 .25,.5 .25,-.1 .25,0 .25,.2 .25,-3.8 .25,-2.4 .25,1.1 .25,.7 .25,.6 .25,.1 .25,.8 .25,.2 .25,.4 .25,-.1 .25,.8 .25,.4 .25,.2 .25,-.2 .25,.4 .25,.2 .25,-.1 .25,0 .25,-3.5 .25,.3 .25,-.2 .25,.2 .25,.7 .25,.1 .25,0 .25,.7 .25,.2 .25,.4 .25,.5 .25,.4 .25,.5 .25,.2 .25,.6 .25,-.2 .25,.2 .25,-.5 .25,-.2 .25,-3.8 .25,-9.1 .25,2.4 .25,1.6 .25,1.3 .25,1.3 .25,1.2 .25,.8 .25,1 .25,0 .25,1 .25,.1 .25,.8 .25,.6 .25,.4 .25,.8 .25,.5 .25,-.1 .25,-.2 .25,-.5 .25,-.4 .25,.7 .25,-.1 .25,.4 .25,-.5 .25,.2 .25,-.4 .25,.1 .25,.5 .25,.4 .25,0 .25,-.6 .25,.3 .25,-.1 .25,0 .25,.1 .25,-.4 .25,.3 .25,-.3 .25,-.1 .25,-.3 .25,.2 .25,-.3 .25,.3 .25,.1 .25,0 .25,-.3 .25,-.1 .25,.6 .25,.4 .25,-.2 .25,-.3 .25,0 .25,.3 .25,-.5 .25,.4 .25,.4 .25,.3 .25,.2 .25,-.6 .25,-1.2 .25,-4.9 .25,.3 .25,.3 .25,.4 .25,.8 .25,.5 .25,.1 .25,.3 .25,.8 .25,.1 .25,.8 .25,.4 .25,-.3 .25,.5 .25,.6 .25,0 .25,.1 .25,.5 .25,.3 .25,-1.9 .25,-5.1 .25,.2 .25,1.1 .25,.2 .25,.2 .25,.8 .25,0 .25,.4 .25,.6 .25,.8 .25,.3 .25,0 .25,.4 .25,.7 .25,.5 .25,.1 .25,.2 .25,-.2 .25,.4 .25,-.6 .25,-1.4 .25,.4 .25,-.3 .25,.2 .25,-.4 .25,.2 .25,.1 .25,-.2 .25,.6 .25,-.1 .25,.1 .25,.4 .25,-.2 .25,.6 .25,-.4 .25,.4 .25,-.4 .25,.4 .25,.4 .25,-.3 .25,-3 .25,.6 .25,.2 .25,.1 .25,.4 .25,.1 .25,.6 .25,0 .25,-.2 .25,.4 .25,.4 .25,.5 .25,-.3 .25,-.1 .25,-.5 .25,-.1 .25,.6 .25,-.5 .25,-2.1 .25,-3.4 .25,.6 .25,.7 .25,.5 .25,.5 .25,.6 .25,.7 .25,.7 .25,0 .25,.2 .25,.8 .25,0 .25,.2 .25,.1 .25,-.2 .25,-.3 .25,.3 .25,-.2 .25,.2 .25,0 .25,-1.9 .25,-.2 .25,.4 .25,-.2 .25,.6 .25,.1 .25,-.2 .25,.3 .25,.5 .25,.7 .25,.1 .25,.2 .25,-.4 .25,-.2 .25,-.3 .25,.3 .25,.3 .25,-1.6 .25,-.1 .25,.8 .25,.3 .25,.3 .25,.1 .25,.1 .25,-.5 .25,.5 .25,-.3 .25,.5 .25,.3 .25,-.6 .25,.6 .25,.3 .25,.1 .25,.2 .25,-.2 .25,0 .25,.1 .25,-1.5 .25,-.4 .25,.5 .25,.2 .25,-.2 .25,-.4 .25,.1 .25,0 .25,.1 .25,.1 .25,0 .25,.8 .25,.5 .25,-.3 .25,-.1 .25,0 .25,-.3 .25,.5 .25,-.3 .25,.1 .25,.1 .25,-4.4 .25,-9.1 .25,1.8 .25,1.7 .25,1 .25,1.5 .25,.8 .25,1.4 .25,.5 .25,1.1 .25,.1 .25,.2 .25,1 .25,.2 .25,1 .25,-1 .25,.4 .25,0 .25,.3 .25,-.4 .25,0 .25,.2 .25,-.1 .25,.5 .25,.4 .25,.2 .25,.6 .25,-.4 .25,.7 .25,.6 .25,-.4 .25,-.4 .25,.2 .25,.1 .25,.4 .25,.3 .25,-.4 .25,-3 .25,.3 .25,-.5 .25,.7 .25,.1 .25,-.3 .25,-.1 .25,.7 .25,-.1 .25,.2 .25,.1 .25,-.1 .25,.2 .25,.5 .25,.3 .25,.5 .25,.1 .25,-.2 .25,.1 .25,.2 .25,.6 .25,-3.2 .25,-6 .25,1.1 .25,1.1 .25,.6 .25,.7 .25,.2 .25,.5 .25,.5 .25,.2 .25,.7 .25,.4 .25,.2 .25,.4 .25,.3 .25,.2 .25,.6 .25,.3 .25,.5 .25,.2 .25,-1.5 .25,-5.1 .25,.2 .25,1.2 .25,.6 .25,.1 .25,.4 .25,.1 .25,.8 .25,0 .25,.5 .25,.3 .25,.9 .25,.3 .25,0 .25,.2 .25,.4 .25,.2 .25,.5 .25,-.3 .25,.1 .25,-.2 .25,-1.4 .25,-9 .25,-2.8 .25,2.2 .25,.9 .25,1.7 .25,.4 .25,.8 .25,.8 .25,.2 .25,.6 .25,.5 .25,.9 .25,-.2 .25,.2 .25,-1.2 .25,.8 .25,.3 .25,-.2 .25,0 .25,.5 .25,.9 .25,-.2 .25,.7 .25,0 .25,.2 .25,-.3 .25,.6 .25,-.2 .25,.1 .25,.7 .25,-1.4 .25,.3 .25,-.3 .25,-.3 .25,.1 .25,.3 .25,.2 .25,.5 .25,.2 .25,.6 .25,-.1 .25,.6 .25,.1 .25,.6 .25,.1 .25,.4 .25,.2 .25,-.4 .25,-.4 .25,-.4 .25,0 .25,-.4 .25,.7 .25,-.1 .25,-.1 .25,.4 .25,.3 .25,-4.3 .25,-9.1 .25,1.4 .25,1.3 .25,1.3 .25,1.6 .25,.6 .25,.8 .25,1.1 .25,.4 .25,.9 .25,.6 .25,.5 .25,.2 .25,.9 .25,.5 .25,.7 .25,-.3 .25,-.2 .25,.4 .25,-4.1 .25,-8.5 .25,2.1 .25,1.5 .25,1 .25,.7 .25,.8 .25,1.4 .25,.3 .25,.5 .25,.8 .25,.8 .25,.5 .25,.2 .25,.8 .25,.9 .25,-.1 .25,.2 .25,.5 .25,-.5 .25,-.5 .25,-5 .25,.4 .25,.4 .25,.1 .25,.9 .25,.3 .25,0 .25,.5 .25,.3 .25,.5 .25,.2 .25,0 .25,.9 .25,.2 .25,.7 .25,.1 .25,-.1 .25,-.1 .25,-.1 .25,-1.3 .25,-5.5 .25,1.4 .25,.6 .25,1 .25,.2 .25,.2 .25,.7 .25,0 .25,.5 .25,.7 .25,.6 .25,.1 .25,.5 .25,.7 .25,.4 .25,-.3 .25,.2 .25,-.1 .25,-4.4 .25,-5 .25,1 .25,1.4 .25,1.1 .25,.4 .25,.5 .25,1.1 .25,-.1 .25,1.1 .25,.7 .25,.4 .25,0 .25,.2 .25,.3 .25,.7 .25,0 .25,.7 .25,-.4 .25,.6 .25,-4.2 .25,-5.9 .25,1.1 .25,1 .25,1.3 .25,.4 .25,.8 .25,1 .25,.9 .25,-.2 .25,1 .25,.6 .25,.5 .25,-.1 .25,.2 .25,.3 .25,.4 .25,-.7 .25,-5.9 .25,1.3 .25,.3 .25,.4 .25,1.3 .25,.3 .25,.9 .25,.9 .25,-.1 .25,.6 .25,.7 .25,.3 .25,.9 .25,0 .25,-.1 .25,-.3 .25,.5 .25,-.3 .25,.6 .25,.2 .25,0 .25,.2 .25,-2.2 .25,-.3 .25,.1 .25,.4 .25,-.1 .25,.5 .25,-.2 .25,-.3 .25,.4 .25,.4 .25,.4 .25,.4 .25,.1 .25,.2 .25,0 .25,-.3 .25,-.1 .25,.4 .25,.2 .25,-5.8 .25,-9 .25,1.5 .25,1.5 .25,1.3 .25,1.3 .25,.8 .25,.9 .25,.6 .25,.1 .25,1 .25,.6 .25,-.2 .25,0 .25,.2 .25,.2 .25,.9 .25,.1 .25,.7 .25,-.2 .25,.4 .25,.2 .25,.2 .25,.6 .25,0 .25,-.1 .25,.4 .25,.3 .25,.4 .25,.2 .25,.1 .25,-.5 .25,-.4 .25,.3 .25,.3 .25,.1 .25,-.4 .25,.3 .25,-2.1 .25,-6.4 .25,1.4 .25,.9 .25,.8 .25,.2 .25,0 .25,.9 .25,.7 .25,.3 .25,.8 .25,.7 .25,.1 .25,.3 .25,.5 .25,.4 .25,.8 .25,.1 .25,.1 .25,.1 .25,-2.5 .25,-7.3 .25,1.6 .25,.8 .25,1 .25,.8 .25,.1 .25,0 .25,.2 .25,.9 .25,.6 .25,.6 .25,.9 .25,.3 .25,.2 .25,.6 .25,.1 .25,.2 .25,.2 .25,-.4 .25,-2.9 .25,-6.9 .25,.9 .25,1.3 .25,.9 .25,1 .25,.3 .25,.6 .25,.8 .25,.8 .25,.2 .25,.3 .25,.5 .25,.3 .25,.7 .25,.7 .25,.7 .25,.3 .25,-.5 .25,-9.8 .25,-2.5 .25,2.1 .25,1.6 .25,1 .25,.5 .25,.4 .25,.5 .25,1 .25,.5 .25,0 .25,.6 .25,.1 .25,.8 .25,.1 .25,.1 .25,-.3 .25,-.2 .25,.1 .25,.6 .25,-.2 .25,-.1 .25,.8 .25,.2 .25,0 .25,.3 .25,.3 .25,-.3 .25,.4 .25,-.1 .25,.6 .25,-.1 .25,-.5 .25,.7 .25,.4 .25,-.6 .25,-.2 .25,.3 .25,.4 .25,.3 .25,-.2 .25,.1 .25,.3 .25,-.1 .25,.6 .25,.2 .25,-.5 .25,-.3 .25,.2 .25,-.2 .25,-.2 .25,.3 .25,.5 .25,.4 .25,-.4 .25,.1 .25,-.1 .25,-2.2 .25,-7.3 .25,1.8 .25,1.1 .25,.9 .25,1.1 .25,1 .25,.5 .25,.7 .25,.8 .25,.6 .25,.6 .25,-.4 .25,.6 .25,-.2 .25,.4 .25,-.3 .25,.3 .25,.4 .25,.4 .25,-1.8 .25,-5 .25,.8 .25,.4 .25,1.3 .25,.3 .25,.3 .25,.1 .25,.9 .25,-.1 .25,1 .25,.2 .25,.5 .25,.2 .25,.6 .25,.2 .25,.1 .25,-.1 .25,0 .25,.2 .25,.2 .25,-.2 .25,-.7 .25,-.2 .25,.5 .25,-2.5 .25,.7 .25,.3 .25,-.5 .25,.5 .25,.6 .25,-.1 .25,0 .25,.2 .25,-.3 .25,.4 .25,.4 .25,.5 .25,-.1 .25,-.3 .25,.1 .25,.1 .25,.3 .25,-.5 .25,-.4 .25,-2.2 .25,.2 .25,.6 .25,.6 .25,.5 .25,-.2 .25,-.3 .25,.1 .25,.1 .25,0 .25,.5 .25,.4 .25,.4 .25,-.4 .25,-.1 .25,.1 .25,-.2 .25,-.3 .25,.7 .25,-1 .25,-4.6 .25,.6 .25,1.1 .25,.6 .25,.3 .25,.7 .25,.2 .25,.9 .25,.3 .25,.1 .25,0 .25,.4 .25,0 .25,-.1 .25,0 .25,.2 .25,-2.4 .25,.7 .25,-.3 .25,.1 .25,.2 .25,.2 .25,.6 .25,.6 .25,.1 .25,.3 .25,-.2 .25,-.3 .25,.2 .25,.2 .25,-.2 .25,-.4 .25,-.8 .25,.2 .25,-.1 .25,-.1 .25,.9 .25,-.4 .25,.8 .25,0 .25,0 .25,-.5 .25,.4 .25,.5 .25,-.7 .25,.1 .25,.1 .25,0 .25,.2 .25,.4 .25,-.3 .25,.1 .25,-.2 .25,-.6 .25,-.4 .25,.4 .25,-3.4 .25,1 .25,.3 .25,.7 .25,.6 .25,-.2 .25,.3 .25,-.1 .25,.8 .25,.6 .25,-.2 .25,-.3 .25,.4 .25,-.1 .25,-.2 .25,0 .25,.2 .25,-4.2 .25,-8.6 .25,2.2 .25,1.8 .25,.7 .25,1.3 .25,.7 .25,1.2 .25,.2 .25,1.2 .25,.2 .25,.5 .25,.2 .25,.3 .25,1.2 .25,.9 .25,.5 .25,.3 .25,-.7 .25,.3 .25,-.3 .25,-.5 .25,0 .25,-.3 .25,.1 .25,.4 .25,-.4 .25,.6 .25,-.1 .25,.2 .25,-.1 .25,.3 .25,-.6 .25,-.3 .25,.1 .25,.2 .25,-.3 .25,-.1 .25,.8 .25,-3.6 .25,.8 .25,.6 .25,.3 .25,.1 .25,0 .25,-.4 .25,.7 .25,0 .25,.3 .25,.6 .25,-.3 .25,0 .25,.7 .25,-.1 .25,.2 .25,0 .25,-.3 .25,.1 .25,.3 .25,.6 .25,-.2 .25,-6.9 .25,-1.6 .25,.9 .25,1.4 .25,.8 .25,.5 .25,.5 .25,.3 .25,.8 .25,.6 .25,0 .25,.7 .25,.7 .25,.1 .25,.5 .25,.3 .25,-.3 .25,-.2 .25,0 .25,-.5 .25,-7.2 .25,-1.5 .25,1 .25,1.8 .25,1.2 .25,.6 .25,1 .25,.3 .25,.5 .25,.8 .25,.1 .25,.9 .25,.3 .25,.6 .25,-.2 .25,.9 .25,.2 .25,-.2 .25,.3 .25,-1.4 .25,-8.4 .25,-2.1 .25,1.9 .25,.9 .25,.9 .25,.8 .25,.7 .25,.2 .25,.9 .25,.8 .25,.4 .25,-.2 .25,0 .25,.8 .25,.6 .25,-.5 .25,-.3 .25,.6 .25,.2 .25,.6 .25,0 .25,.4 .25,-.2 .25,.4 .25,-.1 .25,.3 .25,0 .25,-.4 .25,.3 .25,-.2 .25,.2 .25,.6 .25,.5 .25,-.2 .25,-.1 .25,.7 .25,-.1 .25,.3 .25,-.1 .25,-.4 .25,-.3 .25,.6 .25,.4 .25,.1 .25,-.3 .25,-.5 .25,0 .25,-.1 .25,-.1 .25,.3 .25,.4 .25,-.2 .25,.2 .25,-.2 .25,-.3 .25,.4 .25,.3 .25,-4.4 .25,-9.1 .25,2 .25,1.7 .25,1.2 .25,.8 .25,.8 .25,1 .25,.6 .25,.6 .25,.3 .25,.6 .25,.5 .25,1 .25,.2 .25,1.2 .25,.1 .25,.7 .25,-.2 .25,.3 .25,-3.4 .25,-8.5 .25,1.9 .25,1 .25,1.6 .25,1 .25,.7 .25,.5 .25,.4 .25,.8 .25,.1 .25,1.2 .25,.7 .25,.4 .25,.2 .25,.3 .25,.1 .25,.4 .25,0 .25,0 .25,-1.4 .25,-5.8 .25,.9 .25,.6 .25,.6 .25,.9 .25,.7 .25,.4 .25,.7 .25,-.2 .25,0 .25,.3 .25,.9 .25,.3 .25,.9 .25,.6 .25,.4 .25,-.3 .25,-.2 .25,-.1 .25,-1.2 .25,-5.7 .25,.5 .25,.4 .25,.8 .25,.7 .25,.1 .25,1 .25,.2 .25,.8 .25,-.1 .25,.3 .25,.9 .25,.7 .25,-.2 .25,.6 .25,.2 .25,-.1 .25,.2 .25,-5.9 .25,-7.3 .25,2 .25,1.6 .25,1 .25,.7 .25,1.4 .25,1.1 .25,.4 .25,.8 .25,.3 .25,.9 .25,1 .25,.6 .25,0 .25,.5 .25,0 .25,0 .25,.2 .25,.6 .25,-4 .25,-4.8 .25,1.2 .25,1.1 .25,.2 .25,1.1 .25,.7 .25,.9 .25,.6 .25,0 .25,.5 .25,.4 .25,.1 .25,.3 .25,.9 .25,.2 .25,.2L314.50,19.6l-.25,.5 -.25,.6 -.25,.2 -.25,.5 -.25,.8 -.25,.5 -.25,.5 -.25,.8 -.25,.5 -.25,.4 -.25,.6 -.25,.5 -.25,1.3 -.25,.9 -.25,1.3 -.25,-5.6 -.25,-4.2 -.25,-.4 -.25,0 -.25,.1 -.25,.5 -.25,.5 -.25,.8 -.25,.3 -.25,.1 -.25,.1 -.25,.7 -.25,.3 -.25,.5 -.25,.3 -.25,.1 -.25,.7 -.25,.8 -.25,.6 -.25,.6 -.25,-3.8 -.25,-2.6 -.25,-.2 -.25,.1 -.25,.4 -.25,.3 -.25,.9 -.25,.1 -.25,0 -.25,.5 -.25,.7 -.25,.1 -.25,.5 -.25,-.1 -.25,.6 -.25,.4 -.25,.2 -.25,.8 -.25,.8 -.25,-4.9 -.25,-1.4 -.25,.1 -.25,.1 -.25,.2 -.25,.4 -.25,.3 -.25,.1 -.25,.4 -.25,.1 -.25,.4 -.25,.7 -.25,.7 -.25,.2 -.25,.4 -.25,.3 -.25,.2 -.25,.4 -.25,.7 -.25,.7 -.25,-5.1 -.25,-1.6 -.25,.2 -.25,.1 -.25,-.1 -.25,.6 -.25,.7 -.25,.6 -.25,.5 -.25,.4 -.25,0 -.25,.8 -.25,.4 -.25,.7 -.25,.8 -.25,.7 -.25,.7 -.25,.6 -.25,1.3 -.25,1 -.25,-6.6 -.25,-2.9 -.25,0 -.25,.2 -.25,-.2 -.25,.7 -.25,0 -.25,.7 -.25,.2 -.25,.6 -.25,.5 -.25,.7 -.25,.7 -.25,.7 -.25,.6 -.25,.9 -.25,1.2 -.25,1.2 -.25,1.3 -.25,1.6 -.25,-7.9 -.25,-4.5 -.25,-.3 -.25,-.2 -.25,.1 -.25,.3 -.25,.1 -.25,.3 -.25,-.1 -.25,-.1 -.25,.1 -.25,0 -.25,0 -.25,.4 -.25,.2 -.25,-.1 -.25,-.2 -.25,-.5 -.25,.2 -.25,.3 -.25,.1 -.25,-.3 -.25,.5 -.25,-.2 -.25,.3 -.25,.5 -.25,-.1 -.25,-.2 -.25,.2 -.25,.4 -.25,.1 -.25,.5 -.25,.2 -.25,.1 -.25,.3 -.25,-.1 -.25,.4 -.25,0 -.25,.3 -.25,-.2 -.25,.1 -.25,-.1 -.25,.5 -.25,.7 -.25,-.1 -.25,-.1 -.25,.5 -.25,.8 -.25,.3 -.25,.3 -.25,.2 -.25,1 -.25,.8 -.25,1.1 -.25,1.3 -.25,1.8 -.25,1.6 -.25,-2.8 -.25,-9.8 -.25,-1 -.25,-.1 -.25,.3 -.25,.1 -.25,.1 -.25,.8 -.25,.3 -.25,.5 -.25,.1 -.25,.7 -.25,.2 -.25,.5 -.25,.6 -.25,.2 -.25,.6 -.25,.4 -.25,.3 -.25,1 -.25,-2 -.25,-5.4 -.25,.1 -.25,.1 -.25,.2 -.25,.5 -.25,.5 -.25,.4 -.25,.6 -.25,.1 -.25,.2 -.25,.6 -.25,.3 -.25,.1 -.25,.5 -.25,.5 -.25,.5 -.25,.4 -.25,.2 -.25,.7 -.25,-1.6 -.25,-4 -.25,.1 -.25,-.3 -.25,-.3 -.25,0 -.25,.2 -.25,.1 -.25,-.2 -.25,.4 -.25,.1 -.25,.5 -.25,.7 -.25,0 -.25,.2 -.25,.4 -.25,-.1 -.25,.6 -.25,.3 -.25,.3 -.25,.1 -.25,0 -.25,-.1 -.25,-3 -.25,-.5 -.25,.1 -.25,.2 -.25,-.1 -.25,-.1 -.25,.3 -.25,.4 -.25,-.2 -.25,.1 -.25,-.1 -.25,0 -.25,-.4 -.25,.3 -.25,-.3 -.25,-.1 -.25,.3 -.25,0 -.25,.3 -.25,.3 -.25,-.2 -.25,.4 -.25,-.1 -.25,0 -.25,.1 -.25,-.1 -.25,.5 -.25,.7 -.25,.3 -.25,.7 -.25,.1 -.25,.7 -.25,.2 -.25,.7 -.25,.3 -.25,1.1 -.25,.6 -.25,.6 -.25,-5.5 -.25,-1.3 -.25,-.1 -.25,0 -.25,.1 -.25,0 -.25,-.2 -.25,.1 -.25,.2 -.25,-.2 -.25,-.3 -.25,.5 -.25,.2 -.25,.7 -.25,.1 -.25,0 -.25,.4 -.25,0 -.25,-1.9 -.25,-.3 -.25,.2 -.25,.5 -.25,.1 -.25,-.1 -.25,.2 -.25,-.3 -.25,-.1 -.25,-.1 -.25,0 -.25,-.1 -.25,.4 -.25,-.3 -.25,-.4 -.25,.4 -.25,0 -.25,.1 -.25,-.2 -.25,.4 -.25,-.4 -.25,.3 -.25,.3 -.25,0 -.25,-1 -.25,.2 -.25,.2 -.25,-.2 -.25,-.2 -.25,.2 -.25,.2 -.25,.2 -.25,.3 -.25,0 -.25,-.1 -.25,.3 -.25,.2 -.25,.4 -.25,.6 -.25,.1 -.25,-2.3 -.25,-.2 -.25,0 -.25,0 -.25,.1 -.25,0 -.25,.5 -.25,.5 -.25,.4 -.25,0 -.25,.4 -.25,.2 -.25,.5 -.25,.4 -.25,.3 -.25,.8 -.25,-3.3 -.25,-.6 -.25,-.5 -.25,.1 -.25,.1 -.25,0 -.25,0 -.25,.3 -.25,-.1 -.25,.1 -.25,-.1 -.25,.4 -.25,.1 -.25,.2 -.25,.5 -.25,.4 -.25,-.1 -.25,-.1 -.25,-.1 -.25,.2 -.25,-2 -.25,.3 -.25,.3 -.25,-.2 -.25,-.1 -.25,0 -.25,.2 -.25,.1 -.25,0 -.25,0 -.25,0 -.25,.5 -.25,.2 -.25,.2 -.25,.3 -.25,-.1 -.25,-.1 -.25,.6 -.25,.1 -.25,-.1 -.25,-1.8 -.25,-.3 -.25,.1 -.25,.5 -.25,.1 -.25,-.1 -.25,-.1 -.25,0 -.25,.1 -.25,0 -.25,.3 -.25,.1 -.25,.4 -.25,.2 -.25,.4 -.25,-.2 -.25,.6 -.25,0 -.25,.6 -.25,.6 -.25,.6 -.25,.1 -.25,.9 -.25,.9 -.25,-4.2 -.25,-1.1 -.25,-.3 -.25,-.2 -.25,-.2 -.25,.2 -.25,.1 -.25,.7 -.25,.1 -.25,.8 -.25,.1 -.25,.2 -.25,0 -.25,.2 -.25,.4 -.25,.1 -.25,.2 -.25,.5 -.25,.6 -.25,.3 -.25,-3.1 -.25,-.5 -.25,.1 -.25,-.1 -.25,.2 -.25,-.2 -.25,-.4 -.25,-.2 -.25,.2 -.25,.1 -.25,-.2 -.25,.3 -.25,.3 -.25,.1 -.25,-.2 -.25,.3 -.25,.1 -.25,.1 -.25,.4 -.25,0 -.25,-.1 -.25,0 -.25,.4 -.25,.5 -.25,0 -.25,-.3 -.25,.5 -.25,.2 -.25,-.2 -.25,.2 -.25,-.1 -.25,.4 -.25,0 -.25,-.1 -.25,.2 -.25,0 -.25,-.4 -.25,.2 -.25,.3 -.25,-.2 -.25,.1 -.25,.4 -.25,.4 -.25,.2 -.25,.2 -.25,-.2 -.25,.2 -.25,0 -.25,.6 -.25,.2 -.25,0 -.25,.5 -.25,.7 -.25,.9 -.25,.8 -.25,.8 -.25,.7 -.25,-2.1 -.25,-6.3 -.25,-.2 -.25,-.1 -.25,.3 -.25,.3 -.25,.3 -.25,.6 -.25,.4 -.25,.6 -.25,.7 -.25,.4 -.25,.3 -.25,.7 -.25,.9 -.25,.6 -.25,.9 -.25,1 -.25,1.6 -.25,-7.2 -.25,-2.8 -.25,.4 -.25,-.1 -.25,0 -.25,.6 -.25,.5 -.25,.6 -.25,.5 -.25,.2 -.25,.4 -.25,.4 -.25,.3 -.25,.7 -.25,1 -.25,1.1 -.25,.8 -.25,.8 -.25,1.3 -.25,1 -.25,-6.7 -.25,-3.2 -.25,0 -.25,0 -.25,.1 -.25,.1 -.25,.5 -.25,.3 -.25,.5 -.25,.7 -.25,.2 -.25,.1 -.25,.5 -.25,.2 -.25,.2 -.25,.8 -.25,.7 -.25,.6 -.25,.5 -.25,.6 -.25,-5.3 -.25,-1.7 -.25,-.2 -.25,.3 -.25,-.1 -.25,-.2 -.25,-.2 -.25,.3 -.25,.3 -.25,0 -.25,-.2 -.25,.1 -.25,.2 -.25,.1 -.25,.5 -.25,.4 -.25,0 -.25,.2 -.25,.2 -.25,.1 -.25,.5 -.25,-.1 -.25,.4 -.25,-.3 -.25,.3 -.25,.3 -.25,.6 -.25,.6 -.25,.2 -.25,0 -.25,.7 -.25,.5 -.25,.5 -.25,.7 -.25,.7 -.25,1 -.25,1.2 -.25,1.7 -.25,-7.8 -.25,-3.7 -.25,-.1 -.25,-.3 -.25,0 -.25,.3 -.25,-.1 -.25,-.1 -.25,0 -.25,.2 -.25,.2 -.25,.2 -.25,.1 -.25,.6 -.25,.4 -.25,0 -.25,.3 -.25,0 -.25,.2 -.25,.5 -.25,-2.5 -.25,-.1 -.25,0 -.25,-.1 -.25,-.3 -.25,.4 -.25,-.3 -.25,.4 -.25,.3 -.25,.2 -.25,.2 -.25,.5 -.25,.4 -.25,.3 -.25,.9 -.25,.2 -.25,.2 -.25,.7 -.25,0 -.25,.9 -.25,1 -.25,.6 -.25,-4.8 -.25,-1.3 -.25,.3 -.25,.6 -.25,.7 -.25,.9 -.25,.6 -.25,.4 -.25,.3 -.25,1.1 -.25,.4 -.25,.5 -.25,.8 -.25,1.3 -.25,1 -.25,1.5 -.25,1.9 -.25,-6.2 -.25,-6.1 -.25,-.4 -.25,.4 -.25,-.3 -.25,.6 -.25,.3 -.25,.5 -.25,.6 -.25,.8 -.25,.4 -.25,.3 -.25,0 -.25,.9 -.25,.1 -.25,.7 -.25,.8 -.25,.5 -.25,.5 -.25,1.1 -.25,-4.8 -.25,-3.3 -.25,.2 -.25,0 -.25,.9 -.25,.4 -.25,.2 -.25,.4 -.25,.5 -.25,.2 -.25,.2 -.25,.2 -.25,.6 -.25,.2 -.25,.5 -.25,.6 -.25,.1 -.25,.6 -.25,.1 -.25,-4.8 -.25,-1.4 -.25,.1 -.25,.1 -.25,.1 -.25,.6 -.25,.2 -.25,.6 -.25,.1 -.25,.6 -.25,.4 -.25,.3 -.25,.4 -.25,.2 -.25,.6 -.25,.5 -.25,0 -.25,.7 -.25,.7 -.25,.8 -.25,-5 -.25,-1.4 -.25,.5 -.25,-.3 -.25,0 -.25,.9 -.25,.3 -.25,.2 -.25,.7 -.25,.5 -.25,.2 -.25,.4 -.25,.4 -.25,.8 -.25,0 -.25,.6 -.25,.8 -.25,.8 -.25,.7 -.25,.7 -.25,-6.2 -.25,-1.8 -.25,-.1 -.25,.3 -.25,.3 -.25,.3 -.25,.6 -.25,.2 -.25,.7 -.25,.6 -.25,.4 -.25,.4 -.25,.7 -.25,.3 -.25,.6 -.25,.9 -.25,.4 -.25,.9 -.25,1.2 -.25,1.5 -.25,-7 -.25,-3.1 -.25,-.2 -.25,-.3 -.25,0 -.25,.1 -.25,-.5 -.25,.2 -.25,.1 -.25,.2 -.25,.3 -.25,.3 -.25,-.2 -.25,-.2 -.25,.5 -.25,.2 -.25,.4 -.25,0 -.25,.5 -.25,0 -.25,.2 -.25,0 -.25,.1 -.25,0 -.25,.1 -.25,.4 -.25,.3 -.25,0 -.25,-1.2 -.25,-.3 -.25,.2 -.25,.4 -.25,-.3 -.25,.4 -.25,.1 -.25,.5 -.25,.1 -.25,.6 -.25,-.1 -.25,.2 -.25,.5 -.25,.7 -.25,.5 -.25,.2 -.25,-1.8 -.25,.3 -.25,.6 -.25,0 -.25,.2 -.25,.3 -.25,.8 -.25,.5 -.25,.7 -.25,1.3 -.25,.7 -.25,1.7 -.25,1.2 -.25,-2.2 -.25,-9 -.25,-1.1 -.25,.2 -.25,0 -.25,.3 -.25,-.3 -.25,-.1 -.25,.3 -.25,.6 -.25,.7 -.25,.4 -.25,0 -.25,.4 -.25,.2 -.25,.6 -.25,.1 -.25,.6 -.25,.4 -.25,.7 -.25,.5 -.25,.2 -.25,1 -.25,-4.9 -.25,-1.5 -.25,-.1 -.25,-.3 -.25,0 -.25,.2 -.25,.5 -.25,.5 -.25,.4 -.25,.5 -.25,.4 -.25,.2 -.25,.5 -.25,.4 -.25,.4 -.25,.7 -.25,.5 -.25,.7 -.25,.6 -.25,.8 -.25,-5.4 -.25,-1.8 -.25,-.3 -.25,-.2 -.25,-.1 -.25,.2 -.25,0 -.25,.1 -.25,.4 -.25,.2 -.25,.3 -.25,.5 -.25,.3 -.25,.3 -.25,.4 -.25,-.2 -.25,.4 -.25,.4 -.25,.2 -.25,-.2 -.25,.7 -.25,.1 -.25,-3.2 -.25,.1 -.25,-.2 -.25,-.3 -.25,-.1 -.25,-.1 -.25,.3 -.25,.5 -.25,.2 -.25,0 -.25,.7 -.25,0 -.25,.2 -.25,.1 -.25,0 -.25,.3 -.25,.1 -.25,.2 -.25,.5 -.25,-.1 -.25,.2 -.25,-.1 -.25,-1.8 -.25,.1 -.25,.5 -.25,.1 -.25,.6 -.25,.7 -.25,.1 -.25,.6 -.25,0 -.25,.6 -.25,.2 -.25,.8 -.25,.7 -.25,.9 -.25,-5.1 -.25,-1.5 -.25,0 -.25,-.1 -.25,.2 -.25,-.3 -.25,.2 -.25,.1 -.25,0 -.25,.2 -.25,-.3 -.25,-.3 -.25,.3 -.25,.3 -.25,.2 -.25,.2 -.25,.2 -.25,.5 -.25,.4 -.25,.1 -.25,0 -.25,.5 -.25,-1.7 -.25,-.1 -.25,0 -.25,.2 -.25,-.2 -.25,-.1 -.25,-.2 -.25,-.3 -.25,.4 -.25,-.2 -.25,0 -.25,.5 -.25,-.1 -.25,.6 -.25,.2 -.25,.2 -.25,0 -.25,0 -.25,-.2 -.25,.3 -.25,-1.6 -.25,-.2 -.25,-.2 -.25,.2 -.25,.2 -.25,.2 -.25,.2 -.25,.3 -.25,-.1 -.25,-.1 -.25,.2 -.25,.4 -.25,.2 -.25,-.1 -.25,.4 -.25,0 -.25,.5 -.25,-2.2 -.25,0 -.25,-.2 -.25,.2 -.25,-.3 -.25,.2 -.25,.2 -.25,0 -.25,.4 -.25,.4 -.25,-.1 -.25,.3 -.25,.5 -.25,0 -.25,-.1 -.25,.2 -.25,.2 -.25,.2 -.25,.2 -.25,.4 -.25,-2.5 -.25,-.4 -.25,.3 -.25,-.4 -.25,.1 -.25,.3 -.25,0 -.25,.4 -.25,0 -.25,.1 -.25,0 -.25,.5 -.25,.3 -.25,-.1 -.25,.3 -.25,-.1 -.25,.4 -.25,.2 -.25,0 -.25,-2.1 -.25,.2 -.25,-.3 -.25,-.3 -.25,.3 -.25,-.3 -.25,.3 -.25,-.5 -.25,.4 -.25,.1 -.25,.2 -.25,.4 -.25,-.2 -.25,.4 -.25,.1 -.25,0 -.25,.5 -.25,0 -.25,.3 -.25,-.1 -.25,-1.9 -.25,.4 -.25,-.3 -.25,.1 -.25,-.1 -.25,.1 -.25,.3 -.25,0 -.25,.2 -.25,.6 -.25,.2 -.25,0 -.25,.1 -.25,.3 -.25,.6 -.25,.1 -.25,.5 -.25,.7 -.25,.3 -.25,1 -.25,-3.8 -.25,-.9 -.25,-.3 -.25,-.3 -.25,-.1 -.25,.4 -.25,.1 -.25,.2 -.25,.7 -.25,.1 -.25,-.1 -.25,.4 -.25,-.1 -.25,.3 -.25,.3 -.25,.3 -.25,0 -.25,.3 -.25,.5 -.25,.7 -.25,-3 -.25,-.8 -.25,.4 -.25,-.1 -.25,-.2 -.25,-.3 -.25,-.3 -.25,.4 -.25,-.2 -.25,0 -.25,.2 -.25,.2 -.25,-.3 -.25,-.5 -.25,.2 -.25,.2 -.25,0 -.25,-.1 -.25,-.2 -.25,.2 -.25,-.1 -.25,.2 -.25,.1 -.25,.3 -.25,-.3 -.25,.3 -.25,0 -.25,0 -.25,.1 -.25,-.2 -.25,.4 -.25,0 -.25,-.3 -.25,-.3 -.25,0 -.25,.3 -.25,-.1 -.25,.3 -.25,-.2 -.25,0 -.25,-.4 -.25,.3 -.25,.4 -.25,.1 -.25,.1 -.25,.1 -.25,.2 -.25,.4 -.25,.3 -.25,.1 -.25,.7 -.25,.2 -.25,.8 -.25,.3 -.25,.7 -.25,.5 -.25,.7 -.25,.9 -.25,1.2 -.25,1 -.25,-5.8 -.25,-2.6 -.25,.1 -.25,.4 -.25,-.1 -.25,.2 -.25,.1 -.25,.4 -.25,.3 -.25,.2 -.25,.2 -.25,.2 -.25,.3 -.25,.1 -.25,.5 -.25,.5 -.25,.1 -.25,.6 -.25,.9 -.25,.8 -.25,-4.8 -.25,-1 -.25,.1 -.25,-.1 -.25,.3 -.25,.8 -.25,.4 -.25,.3 -.25,0 -.25,.6 -.25,.3 -.25,.5 -.25,.1 -.25,.6 -.25,.4 -.25,.4 -.25,.3 -.25,-.8 -.25,-3.5 -.25,-.2 -.25,0 -.25,.1 -.25,-.3 -.25,.1 -.25,.2 -.25,.7 -.25,.2 -.25,.2 -.25,.1 -.25,.6 -.25,.1 -.25,.2 -.25,.2 -.25,.5 -.25,.3 -.25,.4 -.25,.6 -.25,.7 -.25,-4.7 -.25,-.6 -.25,-.1 -.25,.4 -.25,-.3 -.25,.1 -.25,-.2 -.25,.2 -.25,-.4 -.25,.4 -.25,.5 -.25,.5 -.25,.3 -.25,-.1 -.25,.2 -.25,.4 -.25,.6 -.25,-.1 -.25,-.2 -.25,.4 -.25,.4 -.25,.1 -.25,-2.8 -.25,.3 -.25,-.2 -.25,.3 -.25,.4 -.25,.3 -.25,.3 -.25,.5 -.25,.1 -.25,.3 -.25,.6 -.25,.5 -.25,.3 -.25,.6 -.25,.4 -.25,.3 -.25,.7 -.25,.9 -.25,-5.7 -.25,-1.6 -.25,-.1 -.25,-.1 -.25,.2 -.25,.2 -.25,.4 -.25,0 -.25,.3 -.25,.3 -.25,.2 -.25,.1 -.25,.2 -.25,.4 -.25,0 -.25,.4 -.25,-.2 -.25,.2 -.25,.3 -.25,.1 -.25,.3 -.25,.3 -.25,-.7 -.25,.6 -.25,.2 -.25,.2 -.25,0 -.25,.4 -.25,.8 -.25,.6 -.25,.6 -.25,.7 -.25,1 -.25,.9 -.25,1.7 -.25,1.6 -.25,-8 -.25,-4.2 -.25,-.3 -.25,.2 -.25,.1 -.25,.2Z" fill="#7aeff7"/></svg><svg style="position:absolute;left:218.00px;top:54.60px;" width="314.00" height="258.60" viewBox="0 0 314.00 258.60"><rect x="20.25" y="0" width="0.7" height="258.6" fill="#ffffff" fill-opacity="0.09"/><rect x="59.54" y="0" width="0.7" height="258.6" fill="#ffffff" fill-opacity="0.09"/><rect x="98.83" y="0" width="0.7" height="258.6" fill="#ffffff" fill-opacity="0.09"/><rect x="138.12" y="0" width="0.7" height="258.6" fill="#ffffff" fill-opacity="0.09"/><rect x="177.41" y="0" width="0.7" height="258.6" fill="#ffffff" fill-opacity="0.09"/><rect x="216.70" y="0" width="0.7" height="258.6" fill="#ffffff" fill-opacity="0.09"/><rect x="255.99" y="0" width="0.7" height="258.6" fill="#ffffff" fill-opacity="0.09"/><rect x="295.28" y="0" width="0.7" height="258.6" fill="#ffffff" fill-opacity="0.09"/></svg><svg style="position:absolute;left:218.00px;top:198.60px;" width="314.00" height="36.00" viewBox="0 0 314.00 36.00"><path d="M71.00,0 L71.00,36 M123.40,0 L123.40,36" stroke="#1a3a2c" stroke-width="0.7" stroke-dasharray="0.8,0.8"/></svg><div style="position:absolute;left:446.50px;top:51.50px;width:1.10px;height:261.50px;background:rgba(215,215,220,0.5);"></div><div style="position:absolute;left:444.75px;top:49.30px;width:4.6px;height:4.6px;border-radius:50%;background:#f2f2f4;"></div><div style="position:absolute;left:251.20px;top:364.25px;font-size:6.642px;line-height:6.642px;color:#b4b4b8;font-weight:400;white-space:nowrap;letter-spacing:-0.213px;">Drop your audio files here or</div><div style="position:absolute;left:332.00px;top:364.32px;font-size:6.48px;line-height:6.48px;color:#b4b4b8;font-weight:400;white-space:nowrap;letter-spacing:-0.207px;"><span style="text-decoration:underline;text-underline-offset:0.6px;text-decoration-thickness:0.5px;">select a file</span></div><div style="position:absolute;left:532.20px;top:33.00px;width:176.80px;height:386.00px;background:#17171a;"></div><div style="position:absolute;left:532.20px;top:33.00px;width:0.80px;height:386.00px;background:#202024;"></div><div style="position:absolute;left:708.40px;top:33.00px;width:0.80px;height:386.00px;background:#202024;"></div><div style="position:absolute;left:709.20px;top:33.00px;width:25.80px;height:386.00px;background:#131315;"></div><div style="position:absolute;left:522.50px;width:400px;text-align:center;text-indent:0.194px;top:41.04px;font-size:6.048px;line-height:6.048px;color:#55555a;font-weight:400;white-space:nowrap;letter-spacing:-0.194px;letter-spacing:0.6px;">AI</div><div style="position:absolute;left:714.20px;top:54.80px;width:17.00px;height:17.40px;background:#18181b;border-radius:3px;"></div><div style="position:absolute;left:714.20px;top:75.40px;width:17.00px;height:17.40px;background:#18181b;border-radius:3px;"></div><div style="position:absolute;left:714.20px;top:96.20px;width:17.00px;height:17.40px;background:#2a2b30;border-radius:3px;"></div><svg style="position:absolute;left:719.10px;top:59.90px;" width="7.40" height="7.40" viewBox="0 0 7.40 7.40"><g fill="none" stroke="#d6d6da" stroke-width="0.8" stroke-linejoin="round"><path d="M3.6,1.6 L4.1,3.1 L5.6,3.6 L4.1,4.1 L3.6,5.6 L3.1,4.1 L1.6,3.6 L3.1,3.1 Z"/></g><g fill="#d6d6da"><circle cx="6.2" cy="1.2" r="0.6"/><circle cx="1.2" cy="6.2" r="0.6"/></g></svg><svg style="position:absolute;left:718.60px;top:79.80px;" width="8.20" height="8.60" viewBox="0 0 8.20 8.60"><g fill="none" stroke="#d6d6da" stroke-width="0.85"><circle cx="6.5" cy="1.5" r="1.15"/><circle cx="1.5" cy="4.3" r="1.15"/><circle cx="6.5" cy="7.1" r="1.15"/><path d="M2.6,3.7 L5.4,2.1 M2.6,4.9 L5.4,6.5"/></g></svg><svg style="position:absolute;left:719.10px;top:100.90px;" width="7.20" height="8.00" viewBox="0 0 7.20 8.00"><g fill="none" stroke="#d6d6da" stroke-width="0.85" stroke-linecap="round"><path d="M2.2,2.3 C0.4,3.6 0.6,6.8 3.6,7.2 C6.6,6.8 6.8,3.6 5,2.3"/><path d="M3.6,0.6 L3.6,3.6"/></g></svg><div style="position:absolute;left:540.60px;top:41.08px;font-size:7.6px;line-height:7.6px;color:#f0f0f2;font-weight:400;white-space:nowrap;letter-spacing:0.000px;text-shadow:0.3px 0 0 #f0f0f2;">AI Mixing</div><svg style="position:absolute;left:694.40px;top:41.60px;" width="6.20" height="6.20" viewBox="0 0 6.20 6.20"><path d="M0.6,0.6 L5.6,5.6 M5.6,0.6 L0.6,5.6" stroke="#a8a8ac" stroke-width="0.9"/></svg><div style="position:absolute;left:533.00px;top:56.80px;width:175.40px;height:0.70px;background:#1f1f23;"></div><div style="position:absolute;left:540.60px;top:66.91px;font-size:6.912px;line-height:6.912px;color:#e2e2e5;font-weight:400;white-space:nowrap;letter-spacing:-0.221px;text-shadow:0.22px 0 0 #e2e2e5;">Sample rate (kHz)</div><div style="position:absolute;left:540.60px;top:75.50px;width:162.20px;height:13.80px;background:#1d1e21;border-radius:2.5px;"></div><div style="position:absolute;left:540.60px;top:75.50px;width:40.55px;height:13.80px;background:#2c2e32;border-radius:2.5px;"></div><div style="position:absolute;left:360.88px;width:400px;text-align:center;text-indent:0.214px;top:79.82px;font-size:6.696px;line-height:6.696px;color:#e6e6e8;font-weight:400;white-space:nowrap;letter-spacing:-0.214px;">44.1</div><div style="position:absolute;left:401.42px;width:400px;text-align:center;text-indent:0.214px;top:79.82px;font-size:6.696px;line-height:6.696px;color:#cfcfd3;font-weight:400;white-space:nowrap;letter-spacing:-0.214px;">48</div><div style="position:absolute;left:621.40px;top:78.00px;width:0.60px;height:8.80px;background:#232427;"></div><div style="position:absolute;left:441.98px;width:400px;text-align:center;text-indent:0.214px;top:79.82px;font-size:6.696px;line-height:6.696px;color:#cfcfd3;font-weight:400;white-space:nowrap;letter-spacing:-0.214px;">96</div><div style="position:absolute;left:661.95px;top:78.00px;width:0.60px;height:8.80px;background:#232427;"></div><div style="position:absolute;left:482.52px;width:400px;text-align:center;text-indent:0.214px;top:79.82px;font-size:6.696px;line-height:6.696px;color:#cfcfd3;font-weight:400;white-space:nowrap;letter-spacing:-0.214px;">192</div><div style="position:absolute;left:540.60px;top:98.61px;font-size:6.912px;line-height:6.912px;color:#e2e2e5;font-weight:400;white-space:nowrap;letter-spacing:-0.221px;text-shadow:0.22px 0 0 #e2e2e5;">Format</div><div style="position:absolute;left:540.60px;top:107.50px;width:162.20px;height:13.80px;background:#1d1e21;border-radius:2.5px;"></div><div style="position:absolute;left:540.60px;top:107.50px;width:32.44px;height:13.80px;background:#2c2e32;border-radius:2.5px;"></div><div style="position:absolute;left:356.82px;width:400px;text-align:center;text-indent:0.214px;top:111.82px;font-size:6.696px;line-height:6.696px;color:#e6e6e8;font-weight:400;white-space:nowrap;letter-spacing:-0.214px;">WAV</div><div style="position:absolute;left:389.26px;width:400px;text-align:center;text-indent:0.214px;top:111.82px;font-size:6.696px;line-height:6.696px;color:#cfcfd3;font-weight:400;white-space:nowrap;letter-spacing:-0.214px;">FLAC</div><div style="position:absolute;left:605.18px;top:110.00px;width:0.60px;height:8.80px;background:#232427;"></div><div style="position:absolute;left:421.70px;width:400px;text-align:center;text-indent:0.214px;top:111.82px;font-size:6.696px;line-height:6.696px;color:#cfcfd3;font-weight:400;white-space:nowrap;letter-spacing:-0.214px;">MP3</div><div style="position:absolute;left:637.62px;top:110.00px;width:0.60px;height:8.80px;background:#232427;"></div><div style="position:absolute;left:454.14px;width:400px;text-align:center;text-indent:0.214px;top:111.82px;font-size:6.696px;line-height:6.696px;color:#cfcfd3;font-weight:400;white-space:nowrap;letter-spacing:-0.214px;">M4A</div><div style="position:absolute;left:670.06px;top:110.00px;width:0.60px;height:8.80px;background:#232427;"></div><div style="position:absolute;left:486.58px;width:400px;text-align:center;text-indent:0.214px;top:111.82px;font-size:6.696px;line-height:6.696px;color:#cfcfd3;font-weight:400;white-space:nowrap;letter-spacing:-0.214px;">OGG</div><div style="position:absolute;left:540.60px;top:130.61px;font-size:6.912px;line-height:6.912px;color:#e2e2e5;font-weight:400;white-space:nowrap;letter-spacing:-0.221px;text-shadow:0.22px 0 0 #e2e2e5;">Export</div><div style="position:absolute;left:540.60px;top:139.50px;width:162.20px;height:13.40px;background:#1d1e21;border-radius:2.5px;"></div><div style="position:absolute;left:540.60px;top:139.50px;width:81.10px;height:13.40px;background:#2c2e32;border-radius:2.5px;"></div><div style="position:absolute;left:381.15px;width:400px;text-align:center;text-indent:0.214px;top:143.62px;font-size:6.696px;line-height:6.696px;color:#e6e6e8;font-weight:400;white-space:nowrap;letter-spacing:-0.214px;">Mix</div><div style="position:absolute;left:462.25px;width:400px;text-align:center;text-indent:0.214px;top:143.62px;font-size:6.696px;line-height:6.696px;color:#cfcfd3;font-weight:400;white-space:nowrap;letter-spacing:-0.214px;">Mix &amp; Stems</div><div style="position:absolute;left:540.60px;top:162.11px;font-size:6.912px;line-height:6.912px;color:#e2e2e5;font-weight:400;white-space:nowrap;letter-spacing:-0.221px;text-shadow:0.22px 0 0 #e2e2e5;">Musical style</div><div style="position:absolute;left:540.60px;top:171.00px;width:162.20px;height:14.10px;background:#1d1e21;border-radius:2.5px;"></div><div style="position:absolute;left:546.00px;top:175.52px;font-size:6.696px;line-height:6.696px;color:#dcdce0;font-weight:400;white-space:nowrap;letter-spacing:-0.214px;">Rock/Indie</div><svg style="position:absolute;left:692.80px;top:176.60px;" width="4.60" height="3.00" viewBox="0 0 4.60 3.00"><path d="M0.5,0.6 L2.1,2.1 L3.7,0.6" fill="none" stroke="#c4c4c8" stroke-width="0.8"/></svg><div style="position:absolute;left:540.60px;top:198.51px;font-size:6.912px;line-height:6.912px;color:#55555a;font-weight:400;white-space:nowrap;letter-spacing:-0.221px;">Track configurations</div><svg style="position:absolute;left:606.10px;top:197.60px;" width="7.20" height="7.20" viewBox="0 0 7.20 7.20"><g fill="none" stroke="#a0a0a4" stroke-width="0.85" stroke-linecap="round"><path d="M6.2,2.4 C5.4,1.1 4.2,0.7 3.5,0.7 C1.9,0.7 0.7,2 0.7,3.6 C0.7,5.2 1.9,6.5 3.5,6.5 C5,6.5 6.3,5.3 6.3,3.7"/><path d="M6.4,0.5 L6.4,2.5 L4.6,2.5"/></g></svg><div style="position:absolute;left:620.00px;top:200.90px;width:82.80px;height:0.70px;background:#26262a;"></div><div style="position:absolute;left:540.60px;top:213.70px;width:162.70px;height:83.20px;background:#19191c;border-radius:3px;"></div><div style="position:absolute;left:547.50px;top:218.91px;font-size:6.912px;line-height:6.912px;color:#ececee;font-weight:400;white-space:nowrap;letter-spacing:-0.221px;text-shadow:0.22px 0 0 #ececee;">Drum loop.mp3</div><div style="position:absolute;left:542.30px;top:231.40px;width:158.70px;height:14.60px;background:#1f2023;border-radius:2.5px;"></div><div style="position:absolute;left:547.50px;top:236.12px;font-size:6.696px;line-height:6.696px;color:#dcdce0;font-weight:400;white-space:nowrap;letter-spacing:-0.214px;">Drums<span style="color:#27c9da;font-size:6px;position:relative;top:-1.2px;">✦</span> <span style="color:#6b6b70">(AI detected)</span></div><svg style="position:absolute;left:691.00px;top:237.20px;" width="4.40" height="3.00" viewBox="0 0 4.40 3.00"><path d="M0.5,0.6 L2.1,2.1 L3.7,0.6" fill="none" stroke="#c4c4c8" stroke-width="0.8"/></svg><div style="position:absolute;left:542.30px;top:247.50px;width:51.70px;height:47.90px;background:#1f2023;border-radius:2.5px;"></div><div style="position:absolute;left:368.15px;width:400px;text-align:center;text-indent:0.218px;top:252.97px;font-size:6.804px;line-height:6.804px;color:#ececee;font-weight:400;white-space:nowrap;letter-spacing:-0.218px;text-shadow:0.22px 0 0 #ececee;">Presence</div><div style="position:absolute;left:561.35px;top:264.80px;width:13.6px;height:13.6px;border-radius:50%;background:#2f3034;"></div><svg style="position:absolute;left:559.15px;top:262.60px;" width="18.00" height="18.00" viewBox="0 0 18.00 18.00"><g stroke="#45464b" stroke-width="0.6"><path d="M2.9,2.9 L3.6,3.6 M15.1,2.9 L14.4,3.6 M9,0.5 L9,1.2"/></g></svg><div style="position:absolute;left:567.70px;top:262.60px;width:0.90px;height:1.10px;background:#8a8a8e;"></div><div style="position:absolute;left:567.75px;top:265.00px;width:0.80px;height:3.00px;background:#a4a4a8;"></div><div style="position:absolute;left:368.15px;width:400px;text-align:center;text-indent:0.218px;top:284.67px;font-size:6.804px;line-height:6.804px;color:#6e6e73;font-weight:400;white-space:nowrap;letter-spacing:-0.218px;">Normal</div><div style="position:absolute;left:595.40px;top:247.50px;width:51.70px;height:47.90px;background:#1f2023;border-radius:2.5px;"></div><div style="position:absolute;left:421.25px;width:400px;text-align:center;text-indent:0.218px;top:252.97px;font-size:6.804px;line-height:6.804px;color:#ececee;font-weight:400;white-space:nowrap;letter-spacing:-0.218px;text-shadow:0.22px 0 0 #ececee;">Pan</div><div style="position:absolute;left:614.45px;top:264.80px;width:13.6px;height:13.6px;border-radius:50%;background:#2f3034;"></div><svg style="position:absolute;left:612.25px;top:262.60px;" width="18.00" height="18.00" viewBox="0 0 18.00 18.00"><g stroke="#45464b" stroke-width="0.6"><path d="M2.9,2.9 L3.6,3.6 M15.1,2.9 L14.4,3.6 M9,0.5 L9,1.2"/></g></svg><div style="position:absolute;left:620.80px;top:262.60px;width:0.90px;height:1.10px;background:#8a8a8e;"></div><div style="position:absolute;left:620.85px;top:265.00px;width:0.80px;height:3.00px;background:#a4a4a8;"></div><div style="position:absolute;left:421.25px;width:400px;text-align:center;text-indent:0.218px;top:284.67px;font-size:6.804px;line-height:6.804px;color:#6e6e73;font-weight:400;white-space:nowrap;letter-spacing:-0.218px;">Center</div><div style="position:absolute;left:649.20px;top:247.50px;width:51.80px;height:47.90px;background:#1f2023;border-radius:2.5px;"></div><div style="position:absolute;left:475.10px;width:400px;text-align:center;text-indent:0.218px;top:252.97px;font-size:6.804px;line-height:6.804px;color:#ececee;font-weight:400;white-space:nowrap;letter-spacing:-0.218px;text-shadow:0.22px 0 0 #ececee;">Reverb</div><div style="position:absolute;left:668.30px;top:264.80px;width:13.6px;height:13.6px;border-radius:50%;background:#2f3034;"></div><svg style="position:absolute;left:666.10px;top:262.60px;" width="18.00" height="18.00" viewBox="0 0 18.00 18.00"><g stroke="#45464b" stroke-width="0.6"><path d="M2.9,2.9 L3.6,3.6 M15.1,2.9 L14.4,3.6 M9,0.5 L9,1.2"/></g></svg><div style="position:absolute;left:674.70px;top:274.80px;width:0.80px;height:3.20px;background:#a4a4a8;"></div><div style="position:absolute;left:674.60px;top:278.80px;width:1.00px;height:1.00px;background:#7a4434;"></div><div style="position:absolute;left:475.10px;width:400px;text-align:center;text-indent:0.218px;top:284.67px;font-size:6.804px;line-height:6.804px;color:#6e6e73;font-weight:400;white-space:nowrap;letter-spacing:-0.218px;">None</div><div style="position:absolute;left:540.60px;top:302.60px;width:162.70px;height:83.20px;background:#19191c;border-radius:3px;"></div><div style="position:absolute;left:547.50px;top:307.81px;font-size:6.912px;line-height:6.912px;color:#ececee;font-weight:400;white-space:nowrap;letter-spacing:-0.221px;text-shadow:0.22px 0 0 #ececee;">Trap Bass</div><div style="position:absolute;left:542.30px;top:320.30px;width:158.70px;height:14.60px;background:#1f2023;border-radius:2.5px;"></div><div style="position:absolute;left:547.50px;top:325.02px;font-size:6.696px;line-height:6.696px;color:#dcdce0;font-weight:400;white-space:nowrap;letter-spacing:-0.214px;">Drums<span style="color:#27c9da;font-size:6px;position:relative;top:-1.2px;">✦</span> <span style="color:#6b6b70">(AI detected)</span></div><svg style="position:absolute;left:691.00px;top:326.10px;" width="4.40" height="3.00" viewBox="0 0 4.40 3.00"><path d="M0.5,0.6 L2.1,2.1 L3.7,0.6" fill="none" stroke="#c4c4c8" stroke-width="0.8"/></svg><div style="position:absolute;left:542.30px;top:336.40px;width:51.70px;height:47.90px;background:#1f2023;border-radius:2.5px;"></div><div style="position:absolute;left:368.15px;width:400px;text-align:center;text-indent:0.218px;top:341.87px;font-size:6.804px;line-height:6.804px;color:#ececee;font-weight:400;white-space:nowrap;letter-spacing:-0.218px;text-shadow:0.22px 0 0 #ececee;">Presence</div><div style="position:absolute;left:561.35px;top:353.70px;width:13.6px;height:13.6px;border-radius:50%;background:#2f3034;"></div><svg style="position:absolute;left:559.15px;top:351.50px;" width="18.00" height="18.00" viewBox="0 0 18.00 18.00"><g stroke="#45464b" stroke-width="0.6"><path d="M2.9,2.9 L3.6,3.6 M15.1,2.9 L14.4,3.6 M9,0.5 L9,1.2"/></g></svg><div style="position:absolute;left:567.70px;top:351.50px;width:0.90px;height:1.10px;background:#8a8a8e;"></div><div style="position:absolute;left:567.75px;top:353.90px;width:0.80px;height:3.00px;background:#a4a4a8;"></div><div style="position:absolute;left:368.15px;width:400px;text-align:center;text-indent:0.218px;top:373.57px;font-size:6.804px;line-height:6.804px;color:#6e6e73;font-weight:400;white-space:nowrap;letter-spacing:-0.218px;">Normal</div><div style="position:absolute;left:595.40px;top:336.40px;width:51.70px;height:47.90px;background:#1f2023;border-radius:2.5px;"></div><div style="position:absolute;left:421.25px;width:400px;text-align:center;text-indent:0.218px;top:341.87px;font-size:6.804px;line-height:6.804px;color:#ececee;font-weight:400;white-space:nowrap;letter-spacing:-0.218px;text-shadow:0.22px 0 0 #ececee;">Pan</div><div style="position:absolute;left:614.45px;top:353.70px;width:13.6px;height:13.6px;border-radius:50%;background:#2f3034;"></div><svg style="position:absolute;left:612.25px;top:351.50px;" width="18.00" height="18.00" viewBox="0 0 18.00 18.00"><g stroke="#45464b" stroke-width="0.6"><path d="M2.9,2.9 L3.6,3.6 M15.1,2.9 L14.4,3.6 M9,0.5 L9,1.2"/></g></svg><div style="position:absolute;left:620.80px;top:351.50px;width:0.90px;height:1.10px;background:#8a8a8e;"></div><div style="position:absolute;left:620.85px;top:353.90px;width:0.80px;height:3.00px;background:#a4a4a8;"></div><div style="position:absolute;left:421.25px;width:400px;text-align:center;text-indent:0.218px;top:373.57px;font-size:6.804px;line-height:6.804px;color:#6e6e73;font-weight:400;white-space:nowrap;letter-spacing:-0.218px;">Center</div><div style="position:absolute;left:649.20px;top:336.40px;width:51.80px;height:47.90px;background:#1f2023;border-radius:2.5px;"></div><div style="position:absolute;left:475.10px;width:400px;text-align:center;text-indent:0.218px;top:341.87px;font-size:6.804px;line-height:6.804px;color:#ececee;font-weight:400;white-space:nowrap;letter-spacing:-0.218px;text-shadow:0.22px 0 0 #ececee;">Reverb</div><div style="position:absolute;left:668.30px;top:353.70px;width:13.6px;height:13.6px;border-radius:50%;background:#2f3034;"></div><svg style="position:absolute;left:666.10px;top:351.50px;" width="18.00" height="18.00" viewBox="0 0 18.00 18.00"><g stroke="#45464b" stroke-width="0.6"><path d="M2.9,2.9 L3.6,3.6 M15.1,2.9 L14.4,3.6 M9,0.5 L9,1.2"/></g></svg><div style="position:absolute;left:674.70px;top:363.70px;width:0.80px;height:3.20px;background:#a4a4a8;"></div><div style="position:absolute;left:674.60px;top:367.70px;width:1.00px;height:1.00px;background:#7a4434;"></div><div style="position:absolute;left:475.10px;width:400px;text-align:center;text-indent:0.218px;top:373.57px;font-size:6.804px;line-height:6.804px;color:#6e6e73;font-weight:400;white-space:nowrap;letter-spacing:-0.218px;">None</div><div style="position:absolute;left:540.60px;top:393.70px;width:162.20px;height:18.20px;background:#1ed9e6;border-radius:3px;"></div><div style="position:absolute;left:421.70px;width:400px;text-align:center;text-indent:0.221px;top:400.11px;font-size:6.912px;line-height:6.912px;color:#0f2a30;font-weight:400;white-space:nowrap;letter-spacing:-0.221px;text-shadow:0.22px 0 0 #0f2a30;">Export AI Mix</div><div style="position:absolute;left:734.00px;top:0.00px;width:1.00px;height:419.00px;background:#070708;"></div>
</div></body></html>
